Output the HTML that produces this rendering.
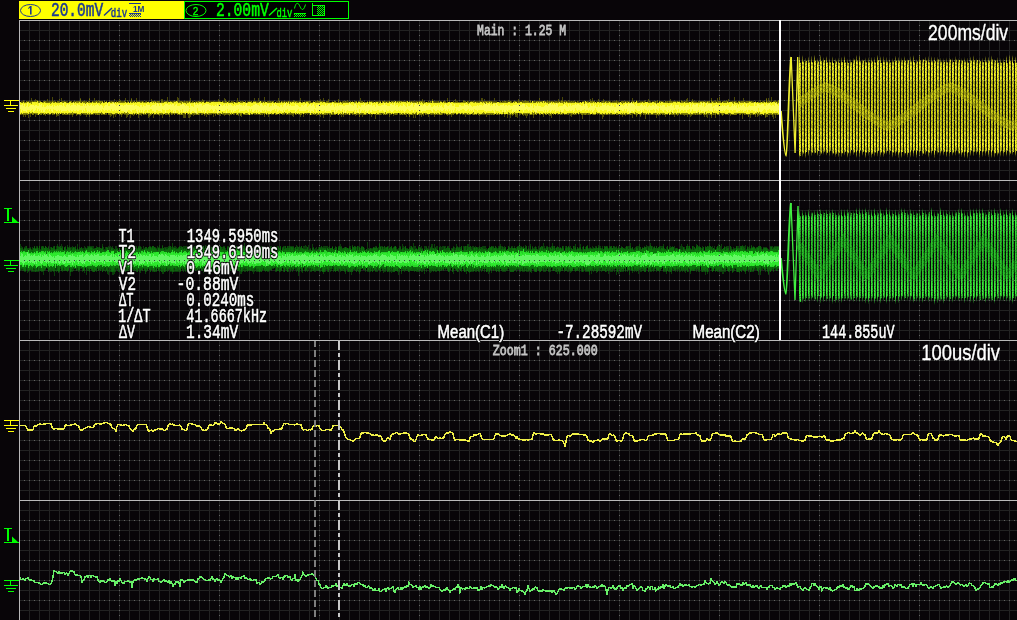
<!DOCTYPE html><html><head><meta charset="utf-8"><style>html,body{margin:0;padding:0;background:#080508;overflow:hidden;width:1017px;height:620px}</style></head><body><svg width="1017" height="620" viewBox="0 0 1017 620" style="display:block;font-family:'Liberation Sans',sans-serif"><rect width="1017" height="620" fill="#080508"/><path d="M29.5 21V339M29.5 341V620M39.5 21V339M39.5 341V620M49.5 21V339M49.5 341V620M59.5 21V339M59.5 341V620M69.5 21V339M69.5 341V620M79.5 21V339M79.5 341V620M89.5 21V339M89.5 341V620M99.5 21V339M99.5 341V620M109.5 21V339M109.5 341V620M119.5 21V339M119.5 341V620M129.5 21V339M129.5 341V620M139.5 21V339M139.5 341V620M149.5 21V339M149.5 341V620M159.5 21V339M159.5 341V620M169.5 21V339M169.5 341V620M179.5 21V339M179.5 341V620M189.5 21V339M189.5 341V620M199.5 21V339M199.5 341V620M209.5 21V339M209.5 341V620M219.5 21V339M219.5 341V620M229.5 21V339M229.5 341V620M239.5 21V339M239.5 341V620M249.5 21V339M249.5 341V620M259.5 21V339M259.5 341V620M269.5 21V339M269.5 341V620M279.5 21V339M279.5 341V620M289.5 21V339M289.5 341V620M299.5 21V339M299.5 341V620M309.5 21V339M309.5 341V620M319.5 21V339M319.5 341V620M329.5 21V339M329.5 341V620M339.5 21V339M339.5 341V620M349.5 21V339M349.5 341V620M359.5 21V339M359.5 341V620M369.5 21V339M369.5 341V620M379.5 21V339M379.5 341V620M389.5 21V339M389.5 341V620M399.5 21V339M399.5 341V620M409.5 21V339M409.5 341V620M419.5 21V339M419.5 341V620M429.5 21V339M429.5 341V620M439.5 21V339M439.5 341V620M449.5 21V339M449.5 341V620M459.5 21V339M459.5 341V620M469.5 21V339M469.5 341V620M479.5 21V339M479.5 341V620M489.5 21V339M489.5 341V620M499.5 21V339M499.5 341V620M509.5 21V339M509.5 341V620M519.5 21V339M519.5 341V620M529.5 21V339M529.5 341V620M539.5 21V339M539.5 341V620M549.5 21V339M549.5 341V620M559.5 21V339M559.5 341V620M569.5 21V339M569.5 341V620M579.5 21V339M579.5 341V620M589.5 21V339M589.5 341V620M599.5 21V339M599.5 341V620M609.5 21V339M609.5 341V620M619.5 21V339M619.5 341V620M629.5 21V339M629.5 341V620M639.5 21V339M639.5 341V620M649.5 21V339M649.5 341V620M659.5 21V339M659.5 341V620M669.5 21V339M669.5 341V620M679.5 21V339M679.5 341V620M689.5 21V339M689.5 341V620M699.5 21V339M699.5 341V620M709.5 21V339M709.5 341V620M719.5 21V339M719.5 341V620M729.5 21V339M729.5 341V620M739.5 21V339M739.5 341V620M749.5 21V339M749.5 341V620M759.5 21V339M759.5 341V620M769.5 21V339M769.5 341V620M779.5 21V339M779.5 341V620M789.5 21V339M789.5 341V620M799.5 21V339M799.5 341V620M809.5 21V339M809.5 341V620M819.5 21V339M819.5 341V620M829.5 21V339M829.5 341V620M839.5 21V339M839.5 341V620M849.5 21V339M849.5 341V620M859.5 21V339M859.5 341V620M869.5 21V339M869.5 341V620M879.5 21V339M879.5 341V620M889.5 21V339M889.5 341V620M899.5 21V339M899.5 341V620M909.5 21V339M909.5 341V620M919.5 21V339M919.5 341V620M929.5 21V339M929.5 341V620M939.5 21V339M939.5 341V620M949.5 21V339M949.5 341V620M959.5 21V339M959.5 341V620M969.5 21V339M969.5 341V620M979.5 21V339M979.5 341V620M989.5 21V339M989.5 341V620M999.5 21V339M999.5 341V620M1009.5 21V339M1009.5 341V620M20 30.5H1017M20 40.5H1017M20 50.5H1017M20 60.5H1017M20 70.5H1017M20 80.5H1017M20 90.5H1017M20 100.5H1017M20 110.5H1017M20 120.5H1017M20 130.5H1017M20 140.5H1017M20 150.5H1017M20 160.5H1017M20 170.5H1017M20 190.5H1017M20 200.5H1017M20 210.5H1017M20 220.5H1017M20 230.5H1017M20 240.5H1017M20 250.5H1017M20 260.5H1017M20 270.5H1017M20 280.5H1017M20 290.5H1017M20 300.5H1017M20 310.5H1017M20 320.5H1017M20 330.5H1017M20 350.5H1017M20 360.5H1017M20 370.5H1017M20 380.5H1017M20 390.5H1017M20 400.5H1017M20 410.5H1017M20 420.5H1017M20 430.5H1017M20 440.5H1017M20 450.5H1017M20 460.5H1017M20 470.5H1017M20 480.5H1017M20 490.5H1017M20 510.5H1017M20 520.5H1017M20 530.5H1017M20 540.5H1017M20 550.5H1017M20 560.5H1017M20 570.5H1017M20 580.5H1017M20 590.5H1017M20 600.5H1017M20 610.5H1017" stroke="#222222" stroke-width="1" fill="none"/><path d="M119 25h1v1h-1zM119 30h1v1h-1zM119 35h1v1h-1zM119 40h1v1h-1zM119 45h1v1h-1zM119 50h1v1h-1zM119 55h1v1h-1zM119 60h1v1h-1zM119 65h1v1h-1zM119 70h1v1h-1zM119 75h1v1h-1zM119 80h1v1h-1zM119 85h1v1h-1zM119 90h1v1h-1zM119 95h1v1h-1zM119 100h1v1h-1zM119 105h1v1h-1zM119 110h1v1h-1zM119 115h1v1h-1zM119 120h1v1h-1zM119 125h1v1h-1zM119 130h1v1h-1zM119 135h1v1h-1zM119 140h1v1h-1zM119 145h1v1h-1zM119 150h1v1h-1zM119 155h1v1h-1zM119 160h1v1h-1zM119 165h1v1h-1zM119 170h1v1h-1zM119 175h1v1h-1zM119 185h1v1h-1zM119 190h1v1h-1zM119 195h1v1h-1zM119 200h1v1h-1zM119 205h1v1h-1zM119 210h1v1h-1zM119 215h1v1h-1zM119 220h1v1h-1zM119 225h1v1h-1zM119 230h1v1h-1zM119 235h1v1h-1zM119 240h1v1h-1zM119 245h1v1h-1zM119 250h1v1h-1zM119 255h1v1h-1zM119 260h1v1h-1zM119 265h1v1h-1zM119 270h1v1h-1zM119 275h1v1h-1zM119 280h1v1h-1zM119 285h1v1h-1zM119 290h1v1h-1zM119 295h1v1h-1zM119 300h1v1h-1zM119 305h1v1h-1zM119 310h1v1h-1zM119 315h1v1h-1zM119 320h1v1h-1zM119 325h1v1h-1zM119 330h1v1h-1zM119 335h1v1h-1zM119 345h1v1h-1zM119 350h1v1h-1zM119 355h1v1h-1zM119 360h1v1h-1zM119 365h1v1h-1zM119 370h1v1h-1zM119 375h1v1h-1zM119 380h1v1h-1zM119 385h1v1h-1zM119 390h1v1h-1zM119 395h1v1h-1zM119 400h1v1h-1zM119 405h1v1h-1zM119 410h1v1h-1zM119 415h1v1h-1zM119 420h1v1h-1zM119 425h1v1h-1zM119 430h1v1h-1zM119 435h1v1h-1zM119 440h1v1h-1zM119 445h1v1h-1zM119 450h1v1h-1zM119 455h1v1h-1zM119 460h1v1h-1zM119 465h1v1h-1zM119 470h1v1h-1zM119 475h1v1h-1zM119 480h1v1h-1zM119 485h1v1h-1zM119 490h1v1h-1zM119 495h1v1h-1zM119 505h1v1h-1zM119 510h1v1h-1zM119 515h1v1h-1zM119 520h1v1h-1zM119 525h1v1h-1zM119 530h1v1h-1zM119 535h1v1h-1zM119 540h1v1h-1zM119 545h1v1h-1zM119 550h1v1h-1zM119 555h1v1h-1zM119 560h1v1h-1zM119 565h1v1h-1zM119 570h1v1h-1zM119 575h1v1h-1zM119 580h1v1h-1zM119 585h1v1h-1zM119 590h1v1h-1zM119 595h1v1h-1zM119 600h1v1h-1zM119 605h1v1h-1zM119 610h1v1h-1zM119 615h1v1h-1zM219 25h1v1h-1zM219 30h1v1h-1zM219 35h1v1h-1zM219 40h1v1h-1zM219 45h1v1h-1zM219 50h1v1h-1zM219 55h1v1h-1zM219 60h1v1h-1zM219 65h1v1h-1zM219 70h1v1h-1zM219 75h1v1h-1zM219 80h1v1h-1zM219 85h1v1h-1zM219 90h1v1h-1zM219 95h1v1h-1zM219 100h1v1h-1zM219 105h1v1h-1zM219 110h1v1h-1zM219 115h1v1h-1zM219 120h1v1h-1zM219 125h1v1h-1zM219 130h1v1h-1zM219 135h1v1h-1zM219 140h1v1h-1zM219 145h1v1h-1zM219 150h1v1h-1zM219 155h1v1h-1zM219 160h1v1h-1zM219 165h1v1h-1zM219 170h1v1h-1zM219 175h1v1h-1zM219 185h1v1h-1zM219 190h1v1h-1zM219 195h1v1h-1zM219 200h1v1h-1zM219 205h1v1h-1zM219 210h1v1h-1zM219 215h1v1h-1zM219 220h1v1h-1zM219 225h1v1h-1zM219 230h1v1h-1zM219 235h1v1h-1zM219 240h1v1h-1zM219 245h1v1h-1zM219 250h1v1h-1zM219 255h1v1h-1zM219 260h1v1h-1zM219 265h1v1h-1zM219 270h1v1h-1zM219 275h1v1h-1zM219 280h1v1h-1zM219 285h1v1h-1zM219 290h1v1h-1zM219 295h1v1h-1zM219 300h1v1h-1zM219 305h1v1h-1zM219 310h1v1h-1zM219 315h1v1h-1zM219 320h1v1h-1zM219 325h1v1h-1zM219 330h1v1h-1zM219 335h1v1h-1zM219 345h1v1h-1zM219 350h1v1h-1zM219 355h1v1h-1zM219 360h1v1h-1zM219 365h1v1h-1zM219 370h1v1h-1zM219 375h1v1h-1zM219 380h1v1h-1zM219 385h1v1h-1zM219 390h1v1h-1zM219 395h1v1h-1zM219 400h1v1h-1zM219 405h1v1h-1zM219 410h1v1h-1zM219 415h1v1h-1zM219 420h1v1h-1zM219 425h1v1h-1zM219 430h1v1h-1zM219 435h1v1h-1zM219 440h1v1h-1zM219 445h1v1h-1zM219 450h1v1h-1zM219 455h1v1h-1zM219 460h1v1h-1zM219 465h1v1h-1zM219 470h1v1h-1zM219 475h1v1h-1zM219 480h1v1h-1zM219 485h1v1h-1zM219 490h1v1h-1zM219 495h1v1h-1zM219 505h1v1h-1zM219 510h1v1h-1zM219 515h1v1h-1zM219 520h1v1h-1zM219 525h1v1h-1zM219 530h1v1h-1zM219 535h1v1h-1zM219 540h1v1h-1zM219 545h1v1h-1zM219 550h1v1h-1zM219 555h1v1h-1zM219 560h1v1h-1zM219 565h1v1h-1zM219 570h1v1h-1zM219 575h1v1h-1zM219 580h1v1h-1zM219 585h1v1h-1zM219 590h1v1h-1zM219 595h1v1h-1zM219 600h1v1h-1zM219 605h1v1h-1zM219 610h1v1h-1zM219 615h1v1h-1zM319 25h1v1h-1zM319 30h1v1h-1zM319 35h1v1h-1zM319 40h1v1h-1zM319 45h1v1h-1zM319 50h1v1h-1zM319 55h1v1h-1zM319 60h1v1h-1zM319 65h1v1h-1zM319 70h1v1h-1zM319 75h1v1h-1zM319 80h1v1h-1zM319 85h1v1h-1zM319 90h1v1h-1zM319 95h1v1h-1zM319 100h1v1h-1zM319 105h1v1h-1zM319 110h1v1h-1zM319 115h1v1h-1zM319 120h1v1h-1zM319 125h1v1h-1zM319 130h1v1h-1zM319 135h1v1h-1zM319 140h1v1h-1zM319 145h1v1h-1zM319 150h1v1h-1zM319 155h1v1h-1zM319 160h1v1h-1zM319 165h1v1h-1zM319 170h1v1h-1zM319 175h1v1h-1zM319 185h1v1h-1zM319 190h1v1h-1zM319 195h1v1h-1zM319 200h1v1h-1zM319 205h1v1h-1zM319 210h1v1h-1zM319 215h1v1h-1zM319 220h1v1h-1zM319 225h1v1h-1zM319 230h1v1h-1zM319 235h1v1h-1zM319 240h1v1h-1zM319 245h1v1h-1zM319 250h1v1h-1zM319 255h1v1h-1zM319 260h1v1h-1zM319 265h1v1h-1zM319 270h1v1h-1zM319 275h1v1h-1zM319 280h1v1h-1zM319 285h1v1h-1zM319 290h1v1h-1zM319 295h1v1h-1zM319 300h1v1h-1zM319 305h1v1h-1zM319 310h1v1h-1zM319 315h1v1h-1zM319 320h1v1h-1zM319 325h1v1h-1zM319 330h1v1h-1zM319 335h1v1h-1zM319 345h1v1h-1zM319 350h1v1h-1zM319 355h1v1h-1zM319 360h1v1h-1zM319 365h1v1h-1zM319 370h1v1h-1zM319 375h1v1h-1zM319 380h1v1h-1zM319 385h1v1h-1zM319 390h1v1h-1zM319 395h1v1h-1zM319 400h1v1h-1zM319 405h1v1h-1zM319 410h1v1h-1zM319 415h1v1h-1zM319 420h1v1h-1zM319 425h1v1h-1zM319 430h1v1h-1zM319 435h1v1h-1zM319 440h1v1h-1zM319 445h1v1h-1zM319 450h1v1h-1zM319 455h1v1h-1zM319 460h1v1h-1zM319 465h1v1h-1zM319 470h1v1h-1zM319 475h1v1h-1zM319 480h1v1h-1zM319 485h1v1h-1zM319 490h1v1h-1zM319 495h1v1h-1zM319 505h1v1h-1zM319 510h1v1h-1zM319 515h1v1h-1zM319 520h1v1h-1zM319 525h1v1h-1zM319 530h1v1h-1zM319 535h1v1h-1zM319 540h1v1h-1zM319 545h1v1h-1zM319 550h1v1h-1zM319 555h1v1h-1zM319 560h1v1h-1zM319 565h1v1h-1zM319 570h1v1h-1zM319 575h1v1h-1zM319 580h1v1h-1zM319 585h1v1h-1zM319 590h1v1h-1zM319 595h1v1h-1zM319 600h1v1h-1zM319 605h1v1h-1zM319 610h1v1h-1zM319 615h1v1h-1zM419 25h1v1h-1zM419 30h1v1h-1zM419 35h1v1h-1zM419 40h1v1h-1zM419 45h1v1h-1zM419 50h1v1h-1zM419 55h1v1h-1zM419 60h1v1h-1zM419 65h1v1h-1zM419 70h1v1h-1zM419 75h1v1h-1zM419 80h1v1h-1zM419 85h1v1h-1zM419 90h1v1h-1zM419 95h1v1h-1zM419 100h1v1h-1zM419 105h1v1h-1zM419 110h1v1h-1zM419 115h1v1h-1zM419 120h1v1h-1zM419 125h1v1h-1zM419 130h1v1h-1zM419 135h1v1h-1zM419 140h1v1h-1zM419 145h1v1h-1zM419 150h1v1h-1zM419 155h1v1h-1zM419 160h1v1h-1zM419 165h1v1h-1zM419 170h1v1h-1zM419 175h1v1h-1zM419 185h1v1h-1zM419 190h1v1h-1zM419 195h1v1h-1zM419 200h1v1h-1zM419 205h1v1h-1zM419 210h1v1h-1zM419 215h1v1h-1zM419 220h1v1h-1zM419 225h1v1h-1zM419 230h1v1h-1zM419 235h1v1h-1zM419 240h1v1h-1zM419 245h1v1h-1zM419 250h1v1h-1zM419 255h1v1h-1zM419 260h1v1h-1zM419 265h1v1h-1zM419 270h1v1h-1zM419 275h1v1h-1zM419 280h1v1h-1zM419 285h1v1h-1zM419 290h1v1h-1zM419 295h1v1h-1zM419 300h1v1h-1zM419 305h1v1h-1zM419 310h1v1h-1zM419 315h1v1h-1zM419 320h1v1h-1zM419 325h1v1h-1zM419 330h1v1h-1zM419 335h1v1h-1zM419 345h1v1h-1zM419 350h1v1h-1zM419 355h1v1h-1zM419 360h1v1h-1zM419 365h1v1h-1zM419 370h1v1h-1zM419 375h1v1h-1zM419 380h1v1h-1zM419 385h1v1h-1zM419 390h1v1h-1zM419 395h1v1h-1zM419 400h1v1h-1zM419 405h1v1h-1zM419 410h1v1h-1zM419 415h1v1h-1zM419 420h1v1h-1zM419 425h1v1h-1zM419 430h1v1h-1zM419 435h1v1h-1zM419 440h1v1h-1zM419 445h1v1h-1zM419 450h1v1h-1zM419 455h1v1h-1zM419 460h1v1h-1zM419 465h1v1h-1zM419 470h1v1h-1zM419 475h1v1h-1zM419 480h1v1h-1zM419 485h1v1h-1zM419 490h1v1h-1zM419 495h1v1h-1zM419 505h1v1h-1zM419 510h1v1h-1zM419 515h1v1h-1zM419 520h1v1h-1zM419 525h1v1h-1zM419 530h1v1h-1zM419 535h1v1h-1zM419 540h1v1h-1zM419 545h1v1h-1zM419 550h1v1h-1zM419 555h1v1h-1zM419 560h1v1h-1zM419 565h1v1h-1zM419 570h1v1h-1zM419 575h1v1h-1zM419 580h1v1h-1zM419 585h1v1h-1zM419 590h1v1h-1zM419 595h1v1h-1zM419 600h1v1h-1zM419 605h1v1h-1zM419 610h1v1h-1zM419 615h1v1h-1zM519 25h1v1h-1zM519 30h1v1h-1zM519 35h1v1h-1zM519 40h1v1h-1zM519 45h1v1h-1zM519 50h1v1h-1zM519 55h1v1h-1zM519 60h1v1h-1zM519 65h1v1h-1zM519 70h1v1h-1zM519 75h1v1h-1zM519 80h1v1h-1zM519 85h1v1h-1zM519 90h1v1h-1zM519 95h1v1h-1zM519 100h1v1h-1zM519 105h1v1h-1zM519 110h1v1h-1zM519 115h1v1h-1zM519 120h1v1h-1zM519 125h1v1h-1zM519 130h1v1h-1zM519 135h1v1h-1zM519 140h1v1h-1zM519 145h1v1h-1zM519 150h1v1h-1zM519 155h1v1h-1zM519 160h1v1h-1zM519 165h1v1h-1zM519 170h1v1h-1zM519 175h1v1h-1zM519 185h1v1h-1zM519 190h1v1h-1zM519 195h1v1h-1zM519 200h1v1h-1zM519 205h1v1h-1zM519 210h1v1h-1zM519 215h1v1h-1zM519 220h1v1h-1zM519 225h1v1h-1zM519 230h1v1h-1zM519 235h1v1h-1zM519 240h1v1h-1zM519 245h1v1h-1zM519 250h1v1h-1zM519 255h1v1h-1zM519 260h1v1h-1zM519 265h1v1h-1zM519 270h1v1h-1zM519 275h1v1h-1zM519 280h1v1h-1zM519 285h1v1h-1zM519 290h1v1h-1zM519 295h1v1h-1zM519 300h1v1h-1zM519 305h1v1h-1zM519 310h1v1h-1zM519 315h1v1h-1zM519 320h1v1h-1zM519 325h1v1h-1zM519 330h1v1h-1zM519 335h1v1h-1zM519 345h1v1h-1zM519 350h1v1h-1zM519 355h1v1h-1zM519 360h1v1h-1zM519 365h1v1h-1zM519 370h1v1h-1zM519 375h1v1h-1zM519 380h1v1h-1zM519 385h1v1h-1zM519 390h1v1h-1zM519 395h1v1h-1zM519 400h1v1h-1zM519 405h1v1h-1zM519 410h1v1h-1zM519 415h1v1h-1zM519 420h1v1h-1zM519 425h1v1h-1zM519 430h1v1h-1zM519 435h1v1h-1zM519 440h1v1h-1zM519 445h1v1h-1zM519 450h1v1h-1zM519 455h1v1h-1zM519 460h1v1h-1zM519 465h1v1h-1zM519 470h1v1h-1zM519 475h1v1h-1zM519 480h1v1h-1zM519 485h1v1h-1zM519 490h1v1h-1zM519 495h1v1h-1zM519 505h1v1h-1zM519 510h1v1h-1zM519 515h1v1h-1zM519 520h1v1h-1zM519 525h1v1h-1zM519 530h1v1h-1zM519 535h1v1h-1zM519 540h1v1h-1zM519 545h1v1h-1zM519 550h1v1h-1zM519 555h1v1h-1zM519 560h1v1h-1zM519 565h1v1h-1zM519 570h1v1h-1zM519 575h1v1h-1zM519 580h1v1h-1zM519 585h1v1h-1zM519 590h1v1h-1zM519 595h1v1h-1zM519 600h1v1h-1zM519 605h1v1h-1zM519 610h1v1h-1zM519 615h1v1h-1zM619 25h1v1h-1zM619 30h1v1h-1zM619 35h1v1h-1zM619 40h1v1h-1zM619 45h1v1h-1zM619 50h1v1h-1zM619 55h1v1h-1zM619 60h1v1h-1zM619 65h1v1h-1zM619 70h1v1h-1zM619 75h1v1h-1zM619 80h1v1h-1zM619 85h1v1h-1zM619 90h1v1h-1zM619 95h1v1h-1zM619 100h1v1h-1zM619 105h1v1h-1zM619 110h1v1h-1zM619 115h1v1h-1zM619 120h1v1h-1zM619 125h1v1h-1zM619 130h1v1h-1zM619 135h1v1h-1zM619 140h1v1h-1zM619 145h1v1h-1zM619 150h1v1h-1zM619 155h1v1h-1zM619 160h1v1h-1zM619 165h1v1h-1zM619 170h1v1h-1zM619 175h1v1h-1zM619 185h1v1h-1zM619 190h1v1h-1zM619 195h1v1h-1zM619 200h1v1h-1zM619 205h1v1h-1zM619 210h1v1h-1zM619 215h1v1h-1zM619 220h1v1h-1zM619 225h1v1h-1zM619 230h1v1h-1zM619 235h1v1h-1zM619 240h1v1h-1zM619 245h1v1h-1zM619 250h1v1h-1zM619 255h1v1h-1zM619 260h1v1h-1zM619 265h1v1h-1zM619 270h1v1h-1zM619 275h1v1h-1zM619 280h1v1h-1zM619 285h1v1h-1zM619 290h1v1h-1zM619 295h1v1h-1zM619 300h1v1h-1zM619 305h1v1h-1zM619 310h1v1h-1zM619 315h1v1h-1zM619 320h1v1h-1zM619 325h1v1h-1zM619 330h1v1h-1zM619 335h1v1h-1zM619 345h1v1h-1zM619 350h1v1h-1zM619 355h1v1h-1zM619 360h1v1h-1zM619 365h1v1h-1zM619 370h1v1h-1zM619 375h1v1h-1zM619 380h1v1h-1zM619 385h1v1h-1zM619 390h1v1h-1zM619 395h1v1h-1zM619 400h1v1h-1zM619 405h1v1h-1zM619 410h1v1h-1zM619 415h1v1h-1zM619 420h1v1h-1zM619 425h1v1h-1zM619 430h1v1h-1zM619 435h1v1h-1zM619 440h1v1h-1zM619 445h1v1h-1zM619 450h1v1h-1zM619 455h1v1h-1zM619 460h1v1h-1zM619 465h1v1h-1zM619 470h1v1h-1zM619 475h1v1h-1zM619 480h1v1h-1zM619 485h1v1h-1zM619 490h1v1h-1zM619 495h1v1h-1zM619 505h1v1h-1zM619 510h1v1h-1zM619 515h1v1h-1zM619 520h1v1h-1zM619 525h1v1h-1zM619 530h1v1h-1zM619 535h1v1h-1zM619 540h1v1h-1zM619 545h1v1h-1zM619 550h1v1h-1zM619 555h1v1h-1zM619 560h1v1h-1zM619 565h1v1h-1zM619 570h1v1h-1zM619 575h1v1h-1zM619 580h1v1h-1zM619 585h1v1h-1zM619 590h1v1h-1zM619 595h1v1h-1zM619 600h1v1h-1zM619 605h1v1h-1zM619 610h1v1h-1zM619 615h1v1h-1zM719 25h1v1h-1zM719 30h1v1h-1zM719 35h1v1h-1zM719 40h1v1h-1zM719 45h1v1h-1zM719 50h1v1h-1zM719 55h1v1h-1zM719 60h1v1h-1zM719 65h1v1h-1zM719 70h1v1h-1zM719 75h1v1h-1zM719 80h1v1h-1zM719 85h1v1h-1zM719 90h1v1h-1zM719 95h1v1h-1zM719 100h1v1h-1zM719 105h1v1h-1zM719 110h1v1h-1zM719 115h1v1h-1zM719 120h1v1h-1zM719 125h1v1h-1zM719 130h1v1h-1zM719 135h1v1h-1zM719 140h1v1h-1zM719 145h1v1h-1zM719 150h1v1h-1zM719 155h1v1h-1zM719 160h1v1h-1zM719 165h1v1h-1zM719 170h1v1h-1zM719 175h1v1h-1zM719 185h1v1h-1zM719 190h1v1h-1zM719 195h1v1h-1zM719 200h1v1h-1zM719 205h1v1h-1zM719 210h1v1h-1zM719 215h1v1h-1zM719 220h1v1h-1zM719 225h1v1h-1zM719 230h1v1h-1zM719 235h1v1h-1zM719 240h1v1h-1zM719 245h1v1h-1zM719 250h1v1h-1zM719 255h1v1h-1zM719 260h1v1h-1zM719 265h1v1h-1zM719 270h1v1h-1zM719 275h1v1h-1zM719 280h1v1h-1zM719 285h1v1h-1zM719 290h1v1h-1zM719 295h1v1h-1zM719 300h1v1h-1zM719 305h1v1h-1zM719 310h1v1h-1zM719 315h1v1h-1zM719 320h1v1h-1zM719 325h1v1h-1zM719 330h1v1h-1zM719 335h1v1h-1zM719 345h1v1h-1zM719 350h1v1h-1zM719 355h1v1h-1zM719 360h1v1h-1zM719 365h1v1h-1zM719 370h1v1h-1zM719 375h1v1h-1zM719 380h1v1h-1zM719 385h1v1h-1zM719 390h1v1h-1zM719 395h1v1h-1zM719 400h1v1h-1zM719 405h1v1h-1zM719 410h1v1h-1zM719 415h1v1h-1zM719 420h1v1h-1zM719 425h1v1h-1zM719 430h1v1h-1zM719 435h1v1h-1zM719 440h1v1h-1zM719 445h1v1h-1zM719 450h1v1h-1zM719 455h1v1h-1zM719 460h1v1h-1zM719 465h1v1h-1zM719 470h1v1h-1zM719 475h1v1h-1zM719 480h1v1h-1zM719 485h1v1h-1zM719 490h1v1h-1zM719 495h1v1h-1zM719 505h1v1h-1zM719 510h1v1h-1zM719 515h1v1h-1zM719 520h1v1h-1zM719 525h1v1h-1zM719 530h1v1h-1zM719 535h1v1h-1zM719 540h1v1h-1zM719 545h1v1h-1zM719 550h1v1h-1zM719 555h1v1h-1zM719 560h1v1h-1zM719 565h1v1h-1zM719 570h1v1h-1zM719 575h1v1h-1zM719 580h1v1h-1zM719 585h1v1h-1zM719 590h1v1h-1zM719 595h1v1h-1zM719 600h1v1h-1zM719 605h1v1h-1zM719 610h1v1h-1zM719 615h1v1h-1zM819 25h1v1h-1zM819 30h1v1h-1zM819 35h1v1h-1zM819 40h1v1h-1zM819 45h1v1h-1zM819 50h1v1h-1zM819 55h1v1h-1zM819 60h1v1h-1zM819 65h1v1h-1zM819 70h1v1h-1zM819 75h1v1h-1zM819 80h1v1h-1zM819 85h1v1h-1zM819 90h1v1h-1zM819 95h1v1h-1zM819 100h1v1h-1zM819 105h1v1h-1zM819 110h1v1h-1zM819 115h1v1h-1zM819 120h1v1h-1zM819 125h1v1h-1zM819 130h1v1h-1zM819 135h1v1h-1zM819 140h1v1h-1zM819 145h1v1h-1zM819 150h1v1h-1zM819 155h1v1h-1zM819 160h1v1h-1zM819 165h1v1h-1zM819 170h1v1h-1zM819 175h1v1h-1zM819 185h1v1h-1zM819 190h1v1h-1zM819 195h1v1h-1zM819 200h1v1h-1zM819 205h1v1h-1zM819 210h1v1h-1zM819 215h1v1h-1zM819 220h1v1h-1zM819 225h1v1h-1zM819 230h1v1h-1zM819 235h1v1h-1zM819 240h1v1h-1zM819 245h1v1h-1zM819 250h1v1h-1zM819 255h1v1h-1zM819 260h1v1h-1zM819 265h1v1h-1zM819 270h1v1h-1zM819 275h1v1h-1zM819 280h1v1h-1zM819 285h1v1h-1zM819 290h1v1h-1zM819 295h1v1h-1zM819 300h1v1h-1zM819 305h1v1h-1zM819 310h1v1h-1zM819 315h1v1h-1zM819 320h1v1h-1zM819 325h1v1h-1zM819 330h1v1h-1zM819 335h1v1h-1zM819 345h1v1h-1zM819 350h1v1h-1zM819 355h1v1h-1zM819 360h1v1h-1zM819 365h1v1h-1zM819 370h1v1h-1zM819 375h1v1h-1zM819 380h1v1h-1zM819 385h1v1h-1zM819 390h1v1h-1zM819 395h1v1h-1zM819 400h1v1h-1zM819 405h1v1h-1zM819 410h1v1h-1zM819 415h1v1h-1zM819 420h1v1h-1zM819 425h1v1h-1zM819 430h1v1h-1zM819 435h1v1h-1zM819 440h1v1h-1zM819 445h1v1h-1zM819 450h1v1h-1zM819 455h1v1h-1zM819 460h1v1h-1zM819 465h1v1h-1zM819 470h1v1h-1zM819 475h1v1h-1zM819 480h1v1h-1zM819 485h1v1h-1zM819 490h1v1h-1zM819 495h1v1h-1zM819 505h1v1h-1zM819 510h1v1h-1zM819 515h1v1h-1zM819 520h1v1h-1zM819 525h1v1h-1zM819 530h1v1h-1zM819 535h1v1h-1zM819 540h1v1h-1zM819 545h1v1h-1zM819 550h1v1h-1zM819 555h1v1h-1zM819 560h1v1h-1zM819 565h1v1h-1zM819 570h1v1h-1zM819 575h1v1h-1zM819 580h1v1h-1zM819 585h1v1h-1zM819 590h1v1h-1zM819 595h1v1h-1zM819 600h1v1h-1zM819 605h1v1h-1zM819 610h1v1h-1zM819 615h1v1h-1zM919 25h1v1h-1zM919 30h1v1h-1zM919 35h1v1h-1zM919 40h1v1h-1zM919 45h1v1h-1zM919 50h1v1h-1zM919 55h1v1h-1zM919 60h1v1h-1zM919 65h1v1h-1zM919 70h1v1h-1zM919 75h1v1h-1zM919 80h1v1h-1zM919 85h1v1h-1zM919 90h1v1h-1zM919 95h1v1h-1zM919 100h1v1h-1zM919 105h1v1h-1zM919 110h1v1h-1zM919 115h1v1h-1zM919 120h1v1h-1zM919 125h1v1h-1zM919 130h1v1h-1zM919 135h1v1h-1zM919 140h1v1h-1zM919 145h1v1h-1zM919 150h1v1h-1zM919 155h1v1h-1zM919 160h1v1h-1zM919 165h1v1h-1zM919 170h1v1h-1zM919 175h1v1h-1zM919 185h1v1h-1zM919 190h1v1h-1zM919 195h1v1h-1zM919 200h1v1h-1zM919 205h1v1h-1zM919 210h1v1h-1zM919 215h1v1h-1zM919 220h1v1h-1zM919 225h1v1h-1zM919 230h1v1h-1zM919 235h1v1h-1zM919 240h1v1h-1zM919 245h1v1h-1zM919 250h1v1h-1zM919 255h1v1h-1zM919 260h1v1h-1zM919 265h1v1h-1zM919 270h1v1h-1zM919 275h1v1h-1zM919 280h1v1h-1zM919 285h1v1h-1zM919 290h1v1h-1zM919 295h1v1h-1zM919 300h1v1h-1zM919 305h1v1h-1zM919 310h1v1h-1zM919 315h1v1h-1zM919 320h1v1h-1zM919 325h1v1h-1zM919 330h1v1h-1zM919 335h1v1h-1zM919 345h1v1h-1zM919 350h1v1h-1zM919 355h1v1h-1zM919 360h1v1h-1zM919 365h1v1h-1zM919 370h1v1h-1zM919 375h1v1h-1zM919 380h1v1h-1zM919 385h1v1h-1zM919 390h1v1h-1zM919 395h1v1h-1zM919 400h1v1h-1zM919 405h1v1h-1zM919 410h1v1h-1zM919 415h1v1h-1zM919 420h1v1h-1zM919 425h1v1h-1zM919 430h1v1h-1zM919 435h1v1h-1zM919 440h1v1h-1zM919 445h1v1h-1zM919 450h1v1h-1zM919 455h1v1h-1zM919 460h1v1h-1zM919 465h1v1h-1zM919 470h1v1h-1zM919 475h1v1h-1zM919 480h1v1h-1zM919 485h1v1h-1zM919 490h1v1h-1zM919 495h1v1h-1zM919 505h1v1h-1zM919 510h1v1h-1zM919 515h1v1h-1zM919 520h1v1h-1zM919 525h1v1h-1zM919 530h1v1h-1zM919 535h1v1h-1zM919 540h1v1h-1zM919 545h1v1h-1zM919 550h1v1h-1zM919 555h1v1h-1zM919 560h1v1h-1zM919 565h1v1h-1zM919 570h1v1h-1zM919 575h1v1h-1zM919 580h1v1h-1zM919 585h1v1h-1zM919 590h1v1h-1zM919 595h1v1h-1zM919 600h1v1h-1zM919 605h1v1h-1zM919 610h1v1h-1zM919 615h1v1h-1zM24 40h1v1h-1zM29 40h1v1h-1zM34 40h1v1h-1zM39 40h1v1h-1zM44 40h1v1h-1zM49 40h1v1h-1zM54 40h1v1h-1zM59 40h1v1h-1zM64 40h1v1h-1zM69 40h1v1h-1zM74 40h1v1h-1zM79 40h1v1h-1zM84 40h1v1h-1zM89 40h1v1h-1zM94 40h1v1h-1zM99 40h1v1h-1zM104 40h1v1h-1zM109 40h1v1h-1zM114 40h1v1h-1zM119 40h1v1h-1zM124 40h1v1h-1zM129 40h1v1h-1zM134 40h1v1h-1zM139 40h1v1h-1zM144 40h1v1h-1zM149 40h1v1h-1zM154 40h1v1h-1zM159 40h1v1h-1zM164 40h1v1h-1zM169 40h1v1h-1zM174 40h1v1h-1zM179 40h1v1h-1zM184 40h1v1h-1zM189 40h1v1h-1zM194 40h1v1h-1zM199 40h1v1h-1zM204 40h1v1h-1zM209 40h1v1h-1zM214 40h1v1h-1zM219 40h1v1h-1zM224 40h1v1h-1zM229 40h1v1h-1zM234 40h1v1h-1zM239 40h1v1h-1zM244 40h1v1h-1zM249 40h1v1h-1zM254 40h1v1h-1zM259 40h1v1h-1zM264 40h1v1h-1zM269 40h1v1h-1zM274 40h1v1h-1zM279 40h1v1h-1zM284 40h1v1h-1zM289 40h1v1h-1zM294 40h1v1h-1zM299 40h1v1h-1zM304 40h1v1h-1zM309 40h1v1h-1zM314 40h1v1h-1zM319 40h1v1h-1zM324 40h1v1h-1zM329 40h1v1h-1zM334 40h1v1h-1zM339 40h1v1h-1zM344 40h1v1h-1zM349 40h1v1h-1zM354 40h1v1h-1zM359 40h1v1h-1zM364 40h1v1h-1zM369 40h1v1h-1zM374 40h1v1h-1zM379 40h1v1h-1zM384 40h1v1h-1zM389 40h1v1h-1zM394 40h1v1h-1zM399 40h1v1h-1zM404 40h1v1h-1zM409 40h1v1h-1zM414 40h1v1h-1zM419 40h1v1h-1zM424 40h1v1h-1zM429 40h1v1h-1zM434 40h1v1h-1zM439 40h1v1h-1zM444 40h1v1h-1zM449 40h1v1h-1zM454 40h1v1h-1zM459 40h1v1h-1zM464 40h1v1h-1zM469 40h1v1h-1zM474 40h1v1h-1zM479 40h1v1h-1zM484 40h1v1h-1zM489 40h1v1h-1zM494 40h1v1h-1zM499 40h1v1h-1zM504 40h1v1h-1zM509 40h1v1h-1zM514 40h1v1h-1zM519 40h1v1h-1zM524 40h1v1h-1zM529 40h1v1h-1zM534 40h1v1h-1zM539 40h1v1h-1zM544 40h1v1h-1zM549 40h1v1h-1zM554 40h1v1h-1zM559 40h1v1h-1zM564 40h1v1h-1zM569 40h1v1h-1zM574 40h1v1h-1zM579 40h1v1h-1zM584 40h1v1h-1zM589 40h1v1h-1zM594 40h1v1h-1zM599 40h1v1h-1zM604 40h1v1h-1zM609 40h1v1h-1zM614 40h1v1h-1zM619 40h1v1h-1zM624 40h1v1h-1zM629 40h1v1h-1zM634 40h1v1h-1zM639 40h1v1h-1zM644 40h1v1h-1zM649 40h1v1h-1zM654 40h1v1h-1zM659 40h1v1h-1zM664 40h1v1h-1zM669 40h1v1h-1zM674 40h1v1h-1zM679 40h1v1h-1zM684 40h1v1h-1zM689 40h1v1h-1zM694 40h1v1h-1zM699 40h1v1h-1zM704 40h1v1h-1zM709 40h1v1h-1zM714 40h1v1h-1zM719 40h1v1h-1zM724 40h1v1h-1zM729 40h1v1h-1zM734 40h1v1h-1zM739 40h1v1h-1zM744 40h1v1h-1zM749 40h1v1h-1zM754 40h1v1h-1zM759 40h1v1h-1zM764 40h1v1h-1zM769 40h1v1h-1zM774 40h1v1h-1zM779 40h1v1h-1zM784 40h1v1h-1zM789 40h1v1h-1zM794 40h1v1h-1zM799 40h1v1h-1zM804 40h1v1h-1zM809 40h1v1h-1zM814 40h1v1h-1zM819 40h1v1h-1zM824 40h1v1h-1zM829 40h1v1h-1zM834 40h1v1h-1zM839 40h1v1h-1zM844 40h1v1h-1zM849 40h1v1h-1zM854 40h1v1h-1zM859 40h1v1h-1zM864 40h1v1h-1zM869 40h1v1h-1zM874 40h1v1h-1zM879 40h1v1h-1zM884 40h1v1h-1zM889 40h1v1h-1zM894 40h1v1h-1zM899 40h1v1h-1zM904 40h1v1h-1zM909 40h1v1h-1zM914 40h1v1h-1zM919 40h1v1h-1zM924 40h1v1h-1zM929 40h1v1h-1zM934 40h1v1h-1zM939 40h1v1h-1zM944 40h1v1h-1zM949 40h1v1h-1zM954 40h1v1h-1zM959 40h1v1h-1zM964 40h1v1h-1zM969 40h1v1h-1zM974 40h1v1h-1zM979 40h1v1h-1zM984 40h1v1h-1zM989 40h1v1h-1zM994 40h1v1h-1zM999 40h1v1h-1zM1004 40h1v1h-1zM1009 40h1v1h-1zM1014 40h1v1h-1zM24 60h1v1h-1zM29 60h1v1h-1zM34 60h1v1h-1zM39 60h1v1h-1zM44 60h1v1h-1zM49 60h1v1h-1zM54 60h1v1h-1zM59 60h1v1h-1zM64 60h1v1h-1zM69 60h1v1h-1zM74 60h1v1h-1zM79 60h1v1h-1zM84 60h1v1h-1zM89 60h1v1h-1zM94 60h1v1h-1zM99 60h1v1h-1zM104 60h1v1h-1zM109 60h1v1h-1zM114 60h1v1h-1zM119 60h1v1h-1zM124 60h1v1h-1zM129 60h1v1h-1zM134 60h1v1h-1zM139 60h1v1h-1zM144 60h1v1h-1zM149 60h1v1h-1zM154 60h1v1h-1zM159 60h1v1h-1zM164 60h1v1h-1zM169 60h1v1h-1zM174 60h1v1h-1zM179 60h1v1h-1zM184 60h1v1h-1zM189 60h1v1h-1zM194 60h1v1h-1zM199 60h1v1h-1zM204 60h1v1h-1zM209 60h1v1h-1zM214 60h1v1h-1zM219 60h1v1h-1zM224 60h1v1h-1zM229 60h1v1h-1zM234 60h1v1h-1zM239 60h1v1h-1zM244 60h1v1h-1zM249 60h1v1h-1zM254 60h1v1h-1zM259 60h1v1h-1zM264 60h1v1h-1zM269 60h1v1h-1zM274 60h1v1h-1zM279 60h1v1h-1zM284 60h1v1h-1zM289 60h1v1h-1zM294 60h1v1h-1zM299 60h1v1h-1zM304 60h1v1h-1zM309 60h1v1h-1zM314 60h1v1h-1zM319 60h1v1h-1zM324 60h1v1h-1zM329 60h1v1h-1zM334 60h1v1h-1zM339 60h1v1h-1zM344 60h1v1h-1zM349 60h1v1h-1zM354 60h1v1h-1zM359 60h1v1h-1zM364 60h1v1h-1zM369 60h1v1h-1zM374 60h1v1h-1zM379 60h1v1h-1zM384 60h1v1h-1zM389 60h1v1h-1zM394 60h1v1h-1zM399 60h1v1h-1zM404 60h1v1h-1zM409 60h1v1h-1zM414 60h1v1h-1zM419 60h1v1h-1zM424 60h1v1h-1zM429 60h1v1h-1zM434 60h1v1h-1zM439 60h1v1h-1zM444 60h1v1h-1zM449 60h1v1h-1zM454 60h1v1h-1zM459 60h1v1h-1zM464 60h1v1h-1zM469 60h1v1h-1zM474 60h1v1h-1zM479 60h1v1h-1zM484 60h1v1h-1zM489 60h1v1h-1zM494 60h1v1h-1zM499 60h1v1h-1zM504 60h1v1h-1zM509 60h1v1h-1zM514 60h1v1h-1zM519 60h1v1h-1zM524 60h1v1h-1zM529 60h1v1h-1zM534 60h1v1h-1zM539 60h1v1h-1zM544 60h1v1h-1zM549 60h1v1h-1zM554 60h1v1h-1zM559 60h1v1h-1zM564 60h1v1h-1zM569 60h1v1h-1zM574 60h1v1h-1zM579 60h1v1h-1zM584 60h1v1h-1zM589 60h1v1h-1zM594 60h1v1h-1zM599 60h1v1h-1zM604 60h1v1h-1zM609 60h1v1h-1zM614 60h1v1h-1zM619 60h1v1h-1zM624 60h1v1h-1zM629 60h1v1h-1zM634 60h1v1h-1zM639 60h1v1h-1zM644 60h1v1h-1zM649 60h1v1h-1zM654 60h1v1h-1zM659 60h1v1h-1zM664 60h1v1h-1zM669 60h1v1h-1zM674 60h1v1h-1zM679 60h1v1h-1zM684 60h1v1h-1zM689 60h1v1h-1zM694 60h1v1h-1zM699 60h1v1h-1zM704 60h1v1h-1zM709 60h1v1h-1zM714 60h1v1h-1zM719 60h1v1h-1zM724 60h1v1h-1zM729 60h1v1h-1zM734 60h1v1h-1zM739 60h1v1h-1zM744 60h1v1h-1zM749 60h1v1h-1zM754 60h1v1h-1zM759 60h1v1h-1zM764 60h1v1h-1zM769 60h1v1h-1zM774 60h1v1h-1zM779 60h1v1h-1zM784 60h1v1h-1zM789 60h1v1h-1zM794 60h1v1h-1zM799 60h1v1h-1zM804 60h1v1h-1zM809 60h1v1h-1zM814 60h1v1h-1zM819 60h1v1h-1zM824 60h1v1h-1zM829 60h1v1h-1zM834 60h1v1h-1zM839 60h1v1h-1zM844 60h1v1h-1zM849 60h1v1h-1zM854 60h1v1h-1zM859 60h1v1h-1zM864 60h1v1h-1zM869 60h1v1h-1zM874 60h1v1h-1zM879 60h1v1h-1zM884 60h1v1h-1zM889 60h1v1h-1zM894 60h1v1h-1zM899 60h1v1h-1zM904 60h1v1h-1zM909 60h1v1h-1zM914 60h1v1h-1zM919 60h1v1h-1zM924 60h1v1h-1zM929 60h1v1h-1zM934 60h1v1h-1zM939 60h1v1h-1zM944 60h1v1h-1zM949 60h1v1h-1zM954 60h1v1h-1zM959 60h1v1h-1zM964 60h1v1h-1zM969 60h1v1h-1zM974 60h1v1h-1zM979 60h1v1h-1zM984 60h1v1h-1zM989 60h1v1h-1zM994 60h1v1h-1zM999 60h1v1h-1zM1004 60h1v1h-1zM1009 60h1v1h-1zM1014 60h1v1h-1zM24 80h1v1h-1zM29 80h1v1h-1zM34 80h1v1h-1zM39 80h1v1h-1zM44 80h1v1h-1zM49 80h1v1h-1zM54 80h1v1h-1zM59 80h1v1h-1zM64 80h1v1h-1zM69 80h1v1h-1zM74 80h1v1h-1zM79 80h1v1h-1zM84 80h1v1h-1zM89 80h1v1h-1zM94 80h1v1h-1zM99 80h1v1h-1zM104 80h1v1h-1zM109 80h1v1h-1zM114 80h1v1h-1zM119 80h1v1h-1zM124 80h1v1h-1zM129 80h1v1h-1zM134 80h1v1h-1zM139 80h1v1h-1zM144 80h1v1h-1zM149 80h1v1h-1zM154 80h1v1h-1zM159 80h1v1h-1zM164 80h1v1h-1zM169 80h1v1h-1zM174 80h1v1h-1zM179 80h1v1h-1zM184 80h1v1h-1zM189 80h1v1h-1zM194 80h1v1h-1zM199 80h1v1h-1zM204 80h1v1h-1zM209 80h1v1h-1zM214 80h1v1h-1zM219 80h1v1h-1zM224 80h1v1h-1zM229 80h1v1h-1zM234 80h1v1h-1zM239 80h1v1h-1zM244 80h1v1h-1zM249 80h1v1h-1zM254 80h1v1h-1zM259 80h1v1h-1zM264 80h1v1h-1zM269 80h1v1h-1zM274 80h1v1h-1zM279 80h1v1h-1zM284 80h1v1h-1zM289 80h1v1h-1zM294 80h1v1h-1zM299 80h1v1h-1zM304 80h1v1h-1zM309 80h1v1h-1zM314 80h1v1h-1zM319 80h1v1h-1zM324 80h1v1h-1zM329 80h1v1h-1zM334 80h1v1h-1zM339 80h1v1h-1zM344 80h1v1h-1zM349 80h1v1h-1zM354 80h1v1h-1zM359 80h1v1h-1zM364 80h1v1h-1zM369 80h1v1h-1zM374 80h1v1h-1zM379 80h1v1h-1zM384 80h1v1h-1zM389 80h1v1h-1zM394 80h1v1h-1zM399 80h1v1h-1zM404 80h1v1h-1zM409 80h1v1h-1zM414 80h1v1h-1zM419 80h1v1h-1zM424 80h1v1h-1zM429 80h1v1h-1zM434 80h1v1h-1zM439 80h1v1h-1zM444 80h1v1h-1zM449 80h1v1h-1zM454 80h1v1h-1zM459 80h1v1h-1zM464 80h1v1h-1zM469 80h1v1h-1zM474 80h1v1h-1zM479 80h1v1h-1zM484 80h1v1h-1zM489 80h1v1h-1zM494 80h1v1h-1zM499 80h1v1h-1zM504 80h1v1h-1zM509 80h1v1h-1zM514 80h1v1h-1zM519 80h1v1h-1zM524 80h1v1h-1zM529 80h1v1h-1zM534 80h1v1h-1zM539 80h1v1h-1zM544 80h1v1h-1zM549 80h1v1h-1zM554 80h1v1h-1zM559 80h1v1h-1zM564 80h1v1h-1zM569 80h1v1h-1zM574 80h1v1h-1zM579 80h1v1h-1zM584 80h1v1h-1zM589 80h1v1h-1zM594 80h1v1h-1zM599 80h1v1h-1zM604 80h1v1h-1zM609 80h1v1h-1zM614 80h1v1h-1zM619 80h1v1h-1zM624 80h1v1h-1zM629 80h1v1h-1zM634 80h1v1h-1zM639 80h1v1h-1zM644 80h1v1h-1zM649 80h1v1h-1zM654 80h1v1h-1zM659 80h1v1h-1zM664 80h1v1h-1zM669 80h1v1h-1zM674 80h1v1h-1zM679 80h1v1h-1zM684 80h1v1h-1zM689 80h1v1h-1zM694 80h1v1h-1zM699 80h1v1h-1zM704 80h1v1h-1zM709 80h1v1h-1zM714 80h1v1h-1zM719 80h1v1h-1zM724 80h1v1h-1zM729 80h1v1h-1zM734 80h1v1h-1zM739 80h1v1h-1zM744 80h1v1h-1zM749 80h1v1h-1zM754 80h1v1h-1zM759 80h1v1h-1zM764 80h1v1h-1zM769 80h1v1h-1zM774 80h1v1h-1zM779 80h1v1h-1zM784 80h1v1h-1zM789 80h1v1h-1zM794 80h1v1h-1zM799 80h1v1h-1zM804 80h1v1h-1zM809 80h1v1h-1zM814 80h1v1h-1zM819 80h1v1h-1zM824 80h1v1h-1zM829 80h1v1h-1zM834 80h1v1h-1zM839 80h1v1h-1zM844 80h1v1h-1zM849 80h1v1h-1zM854 80h1v1h-1zM859 80h1v1h-1zM864 80h1v1h-1zM869 80h1v1h-1zM874 80h1v1h-1zM879 80h1v1h-1zM884 80h1v1h-1zM889 80h1v1h-1zM894 80h1v1h-1zM899 80h1v1h-1zM904 80h1v1h-1zM909 80h1v1h-1zM914 80h1v1h-1zM919 80h1v1h-1zM924 80h1v1h-1zM929 80h1v1h-1zM934 80h1v1h-1zM939 80h1v1h-1zM944 80h1v1h-1zM949 80h1v1h-1zM954 80h1v1h-1zM959 80h1v1h-1zM964 80h1v1h-1zM969 80h1v1h-1zM974 80h1v1h-1zM979 80h1v1h-1zM984 80h1v1h-1zM989 80h1v1h-1zM994 80h1v1h-1zM999 80h1v1h-1zM1004 80h1v1h-1zM1009 80h1v1h-1zM1014 80h1v1h-1zM24 100h1v1h-1zM29 100h1v1h-1zM34 100h1v1h-1zM39 100h1v1h-1zM44 100h1v1h-1zM49 100h1v1h-1zM54 100h1v1h-1zM59 100h1v1h-1zM64 100h1v1h-1zM69 100h1v1h-1zM74 100h1v1h-1zM79 100h1v1h-1zM84 100h1v1h-1zM89 100h1v1h-1zM94 100h1v1h-1zM99 100h1v1h-1zM104 100h1v1h-1zM109 100h1v1h-1zM114 100h1v1h-1zM119 100h1v1h-1zM124 100h1v1h-1zM129 100h1v1h-1zM134 100h1v1h-1zM139 100h1v1h-1zM144 100h1v1h-1zM149 100h1v1h-1zM154 100h1v1h-1zM159 100h1v1h-1zM164 100h1v1h-1zM169 100h1v1h-1zM174 100h1v1h-1zM179 100h1v1h-1zM184 100h1v1h-1zM189 100h1v1h-1zM194 100h1v1h-1zM199 100h1v1h-1zM204 100h1v1h-1zM209 100h1v1h-1zM214 100h1v1h-1zM219 100h1v1h-1zM224 100h1v1h-1zM229 100h1v1h-1zM234 100h1v1h-1zM239 100h1v1h-1zM244 100h1v1h-1zM249 100h1v1h-1zM254 100h1v1h-1zM259 100h1v1h-1zM264 100h1v1h-1zM269 100h1v1h-1zM274 100h1v1h-1zM279 100h1v1h-1zM284 100h1v1h-1zM289 100h1v1h-1zM294 100h1v1h-1zM299 100h1v1h-1zM304 100h1v1h-1zM309 100h1v1h-1zM314 100h1v1h-1zM319 100h1v1h-1zM324 100h1v1h-1zM329 100h1v1h-1zM334 100h1v1h-1zM339 100h1v1h-1zM344 100h1v1h-1zM349 100h1v1h-1zM354 100h1v1h-1zM359 100h1v1h-1zM364 100h1v1h-1zM369 100h1v1h-1zM374 100h1v1h-1zM379 100h1v1h-1zM384 100h1v1h-1zM389 100h1v1h-1zM394 100h1v1h-1zM399 100h1v1h-1zM404 100h1v1h-1zM409 100h1v1h-1zM414 100h1v1h-1zM419 100h1v1h-1zM424 100h1v1h-1zM429 100h1v1h-1zM434 100h1v1h-1zM439 100h1v1h-1zM444 100h1v1h-1zM449 100h1v1h-1zM454 100h1v1h-1zM459 100h1v1h-1zM464 100h1v1h-1zM469 100h1v1h-1zM474 100h1v1h-1zM479 100h1v1h-1zM484 100h1v1h-1zM489 100h1v1h-1zM494 100h1v1h-1zM499 100h1v1h-1zM504 100h1v1h-1zM509 100h1v1h-1zM514 100h1v1h-1zM519 100h1v1h-1zM524 100h1v1h-1zM529 100h1v1h-1zM534 100h1v1h-1zM539 100h1v1h-1zM544 100h1v1h-1zM549 100h1v1h-1zM554 100h1v1h-1zM559 100h1v1h-1zM564 100h1v1h-1zM569 100h1v1h-1zM574 100h1v1h-1zM579 100h1v1h-1zM584 100h1v1h-1zM589 100h1v1h-1zM594 100h1v1h-1zM599 100h1v1h-1zM604 100h1v1h-1zM609 100h1v1h-1zM614 100h1v1h-1zM619 100h1v1h-1zM624 100h1v1h-1zM629 100h1v1h-1zM634 100h1v1h-1zM639 100h1v1h-1zM644 100h1v1h-1zM649 100h1v1h-1zM654 100h1v1h-1zM659 100h1v1h-1zM664 100h1v1h-1zM669 100h1v1h-1zM674 100h1v1h-1zM679 100h1v1h-1zM684 100h1v1h-1zM689 100h1v1h-1zM694 100h1v1h-1zM699 100h1v1h-1zM704 100h1v1h-1zM709 100h1v1h-1zM714 100h1v1h-1zM719 100h1v1h-1zM724 100h1v1h-1zM729 100h1v1h-1zM734 100h1v1h-1zM739 100h1v1h-1zM744 100h1v1h-1zM749 100h1v1h-1zM754 100h1v1h-1zM759 100h1v1h-1zM764 100h1v1h-1zM769 100h1v1h-1zM774 100h1v1h-1zM779 100h1v1h-1zM784 100h1v1h-1zM789 100h1v1h-1zM794 100h1v1h-1zM799 100h1v1h-1zM804 100h1v1h-1zM809 100h1v1h-1zM814 100h1v1h-1zM819 100h1v1h-1zM824 100h1v1h-1zM829 100h1v1h-1zM834 100h1v1h-1zM839 100h1v1h-1zM844 100h1v1h-1zM849 100h1v1h-1zM854 100h1v1h-1zM859 100h1v1h-1zM864 100h1v1h-1zM869 100h1v1h-1zM874 100h1v1h-1zM879 100h1v1h-1zM884 100h1v1h-1zM889 100h1v1h-1zM894 100h1v1h-1zM899 100h1v1h-1zM904 100h1v1h-1zM909 100h1v1h-1zM914 100h1v1h-1zM919 100h1v1h-1zM924 100h1v1h-1zM929 100h1v1h-1zM934 100h1v1h-1zM939 100h1v1h-1zM944 100h1v1h-1zM949 100h1v1h-1zM954 100h1v1h-1zM959 100h1v1h-1zM964 100h1v1h-1zM969 100h1v1h-1zM974 100h1v1h-1zM979 100h1v1h-1zM984 100h1v1h-1zM989 100h1v1h-1zM994 100h1v1h-1zM999 100h1v1h-1zM1004 100h1v1h-1zM1009 100h1v1h-1zM1014 100h1v1h-1zM24 120h1v1h-1zM29 120h1v1h-1zM34 120h1v1h-1zM39 120h1v1h-1zM44 120h1v1h-1zM49 120h1v1h-1zM54 120h1v1h-1zM59 120h1v1h-1zM64 120h1v1h-1zM69 120h1v1h-1zM74 120h1v1h-1zM79 120h1v1h-1zM84 120h1v1h-1zM89 120h1v1h-1zM94 120h1v1h-1zM99 120h1v1h-1zM104 120h1v1h-1zM109 120h1v1h-1zM114 120h1v1h-1zM119 120h1v1h-1zM124 120h1v1h-1zM129 120h1v1h-1zM134 120h1v1h-1zM139 120h1v1h-1zM144 120h1v1h-1zM149 120h1v1h-1zM154 120h1v1h-1zM159 120h1v1h-1zM164 120h1v1h-1zM169 120h1v1h-1zM174 120h1v1h-1zM179 120h1v1h-1zM184 120h1v1h-1zM189 120h1v1h-1zM194 120h1v1h-1zM199 120h1v1h-1zM204 120h1v1h-1zM209 120h1v1h-1zM214 120h1v1h-1zM219 120h1v1h-1zM224 120h1v1h-1zM229 120h1v1h-1zM234 120h1v1h-1zM239 120h1v1h-1zM244 120h1v1h-1zM249 120h1v1h-1zM254 120h1v1h-1zM259 120h1v1h-1zM264 120h1v1h-1zM269 120h1v1h-1zM274 120h1v1h-1zM279 120h1v1h-1zM284 120h1v1h-1zM289 120h1v1h-1zM294 120h1v1h-1zM299 120h1v1h-1zM304 120h1v1h-1zM309 120h1v1h-1zM314 120h1v1h-1zM319 120h1v1h-1zM324 120h1v1h-1zM329 120h1v1h-1zM334 120h1v1h-1zM339 120h1v1h-1zM344 120h1v1h-1zM349 120h1v1h-1zM354 120h1v1h-1zM359 120h1v1h-1zM364 120h1v1h-1zM369 120h1v1h-1zM374 120h1v1h-1zM379 120h1v1h-1zM384 120h1v1h-1zM389 120h1v1h-1zM394 120h1v1h-1zM399 120h1v1h-1zM404 120h1v1h-1zM409 120h1v1h-1zM414 120h1v1h-1zM419 120h1v1h-1zM424 120h1v1h-1zM429 120h1v1h-1zM434 120h1v1h-1zM439 120h1v1h-1zM444 120h1v1h-1zM449 120h1v1h-1zM454 120h1v1h-1zM459 120h1v1h-1zM464 120h1v1h-1zM469 120h1v1h-1zM474 120h1v1h-1zM479 120h1v1h-1zM484 120h1v1h-1zM489 120h1v1h-1zM494 120h1v1h-1zM499 120h1v1h-1zM504 120h1v1h-1zM509 120h1v1h-1zM514 120h1v1h-1zM519 120h1v1h-1zM524 120h1v1h-1zM529 120h1v1h-1zM534 120h1v1h-1zM539 120h1v1h-1zM544 120h1v1h-1zM549 120h1v1h-1zM554 120h1v1h-1zM559 120h1v1h-1zM564 120h1v1h-1zM569 120h1v1h-1zM574 120h1v1h-1zM579 120h1v1h-1zM584 120h1v1h-1zM589 120h1v1h-1zM594 120h1v1h-1zM599 120h1v1h-1zM604 120h1v1h-1zM609 120h1v1h-1zM614 120h1v1h-1zM619 120h1v1h-1zM624 120h1v1h-1zM629 120h1v1h-1zM634 120h1v1h-1zM639 120h1v1h-1zM644 120h1v1h-1zM649 120h1v1h-1zM654 120h1v1h-1zM659 120h1v1h-1zM664 120h1v1h-1zM669 120h1v1h-1zM674 120h1v1h-1zM679 120h1v1h-1zM684 120h1v1h-1zM689 120h1v1h-1zM694 120h1v1h-1zM699 120h1v1h-1zM704 120h1v1h-1zM709 120h1v1h-1zM714 120h1v1h-1zM719 120h1v1h-1zM724 120h1v1h-1zM729 120h1v1h-1zM734 120h1v1h-1zM739 120h1v1h-1zM744 120h1v1h-1zM749 120h1v1h-1zM754 120h1v1h-1zM759 120h1v1h-1zM764 120h1v1h-1zM769 120h1v1h-1zM774 120h1v1h-1zM779 120h1v1h-1zM784 120h1v1h-1zM789 120h1v1h-1zM794 120h1v1h-1zM799 120h1v1h-1zM804 120h1v1h-1zM809 120h1v1h-1zM814 120h1v1h-1zM819 120h1v1h-1zM824 120h1v1h-1zM829 120h1v1h-1zM834 120h1v1h-1zM839 120h1v1h-1zM844 120h1v1h-1zM849 120h1v1h-1zM854 120h1v1h-1zM859 120h1v1h-1zM864 120h1v1h-1zM869 120h1v1h-1zM874 120h1v1h-1zM879 120h1v1h-1zM884 120h1v1h-1zM889 120h1v1h-1zM894 120h1v1h-1zM899 120h1v1h-1zM904 120h1v1h-1zM909 120h1v1h-1zM914 120h1v1h-1zM919 120h1v1h-1zM924 120h1v1h-1zM929 120h1v1h-1zM934 120h1v1h-1zM939 120h1v1h-1zM944 120h1v1h-1zM949 120h1v1h-1zM954 120h1v1h-1zM959 120h1v1h-1zM964 120h1v1h-1zM969 120h1v1h-1zM974 120h1v1h-1zM979 120h1v1h-1zM984 120h1v1h-1zM989 120h1v1h-1zM994 120h1v1h-1zM999 120h1v1h-1zM1004 120h1v1h-1zM1009 120h1v1h-1zM1014 120h1v1h-1zM24 140h1v1h-1zM29 140h1v1h-1zM34 140h1v1h-1zM39 140h1v1h-1zM44 140h1v1h-1zM49 140h1v1h-1zM54 140h1v1h-1zM59 140h1v1h-1zM64 140h1v1h-1zM69 140h1v1h-1zM74 140h1v1h-1zM79 140h1v1h-1zM84 140h1v1h-1zM89 140h1v1h-1zM94 140h1v1h-1zM99 140h1v1h-1zM104 140h1v1h-1zM109 140h1v1h-1zM114 140h1v1h-1zM119 140h1v1h-1zM124 140h1v1h-1zM129 140h1v1h-1zM134 140h1v1h-1zM139 140h1v1h-1zM144 140h1v1h-1zM149 140h1v1h-1zM154 140h1v1h-1zM159 140h1v1h-1zM164 140h1v1h-1zM169 140h1v1h-1zM174 140h1v1h-1zM179 140h1v1h-1zM184 140h1v1h-1zM189 140h1v1h-1zM194 140h1v1h-1zM199 140h1v1h-1zM204 140h1v1h-1zM209 140h1v1h-1zM214 140h1v1h-1zM219 140h1v1h-1zM224 140h1v1h-1zM229 140h1v1h-1zM234 140h1v1h-1zM239 140h1v1h-1zM244 140h1v1h-1zM249 140h1v1h-1zM254 140h1v1h-1zM259 140h1v1h-1zM264 140h1v1h-1zM269 140h1v1h-1zM274 140h1v1h-1zM279 140h1v1h-1zM284 140h1v1h-1zM289 140h1v1h-1zM294 140h1v1h-1zM299 140h1v1h-1zM304 140h1v1h-1zM309 140h1v1h-1zM314 140h1v1h-1zM319 140h1v1h-1zM324 140h1v1h-1zM329 140h1v1h-1zM334 140h1v1h-1zM339 140h1v1h-1zM344 140h1v1h-1zM349 140h1v1h-1zM354 140h1v1h-1zM359 140h1v1h-1zM364 140h1v1h-1zM369 140h1v1h-1zM374 140h1v1h-1zM379 140h1v1h-1zM384 140h1v1h-1zM389 140h1v1h-1zM394 140h1v1h-1zM399 140h1v1h-1zM404 140h1v1h-1zM409 140h1v1h-1zM414 140h1v1h-1zM419 140h1v1h-1zM424 140h1v1h-1zM429 140h1v1h-1zM434 140h1v1h-1zM439 140h1v1h-1zM444 140h1v1h-1zM449 140h1v1h-1zM454 140h1v1h-1zM459 140h1v1h-1zM464 140h1v1h-1zM469 140h1v1h-1zM474 140h1v1h-1zM479 140h1v1h-1zM484 140h1v1h-1zM489 140h1v1h-1zM494 140h1v1h-1zM499 140h1v1h-1zM504 140h1v1h-1zM509 140h1v1h-1zM514 140h1v1h-1zM519 140h1v1h-1zM524 140h1v1h-1zM529 140h1v1h-1zM534 140h1v1h-1zM539 140h1v1h-1zM544 140h1v1h-1zM549 140h1v1h-1zM554 140h1v1h-1zM559 140h1v1h-1zM564 140h1v1h-1zM569 140h1v1h-1zM574 140h1v1h-1zM579 140h1v1h-1zM584 140h1v1h-1zM589 140h1v1h-1zM594 140h1v1h-1zM599 140h1v1h-1zM604 140h1v1h-1zM609 140h1v1h-1zM614 140h1v1h-1zM619 140h1v1h-1zM624 140h1v1h-1zM629 140h1v1h-1zM634 140h1v1h-1zM639 140h1v1h-1zM644 140h1v1h-1zM649 140h1v1h-1zM654 140h1v1h-1zM659 140h1v1h-1zM664 140h1v1h-1zM669 140h1v1h-1zM674 140h1v1h-1zM679 140h1v1h-1zM684 140h1v1h-1zM689 140h1v1h-1zM694 140h1v1h-1zM699 140h1v1h-1zM704 140h1v1h-1zM709 140h1v1h-1zM714 140h1v1h-1zM719 140h1v1h-1zM724 140h1v1h-1zM729 140h1v1h-1zM734 140h1v1h-1zM739 140h1v1h-1zM744 140h1v1h-1zM749 140h1v1h-1zM754 140h1v1h-1zM759 140h1v1h-1zM764 140h1v1h-1zM769 140h1v1h-1zM774 140h1v1h-1zM779 140h1v1h-1zM784 140h1v1h-1zM789 140h1v1h-1zM794 140h1v1h-1zM799 140h1v1h-1zM804 140h1v1h-1zM809 140h1v1h-1zM814 140h1v1h-1zM819 140h1v1h-1zM824 140h1v1h-1zM829 140h1v1h-1zM834 140h1v1h-1zM839 140h1v1h-1zM844 140h1v1h-1zM849 140h1v1h-1zM854 140h1v1h-1zM859 140h1v1h-1zM864 140h1v1h-1zM869 140h1v1h-1zM874 140h1v1h-1zM879 140h1v1h-1zM884 140h1v1h-1zM889 140h1v1h-1zM894 140h1v1h-1zM899 140h1v1h-1zM904 140h1v1h-1zM909 140h1v1h-1zM914 140h1v1h-1zM919 140h1v1h-1zM924 140h1v1h-1zM929 140h1v1h-1zM934 140h1v1h-1zM939 140h1v1h-1zM944 140h1v1h-1zM949 140h1v1h-1zM954 140h1v1h-1zM959 140h1v1h-1zM964 140h1v1h-1zM969 140h1v1h-1zM974 140h1v1h-1zM979 140h1v1h-1zM984 140h1v1h-1zM989 140h1v1h-1zM994 140h1v1h-1zM999 140h1v1h-1zM1004 140h1v1h-1zM1009 140h1v1h-1zM1014 140h1v1h-1zM24 160h1v1h-1zM29 160h1v1h-1zM34 160h1v1h-1zM39 160h1v1h-1zM44 160h1v1h-1zM49 160h1v1h-1zM54 160h1v1h-1zM59 160h1v1h-1zM64 160h1v1h-1zM69 160h1v1h-1zM74 160h1v1h-1zM79 160h1v1h-1zM84 160h1v1h-1zM89 160h1v1h-1zM94 160h1v1h-1zM99 160h1v1h-1zM104 160h1v1h-1zM109 160h1v1h-1zM114 160h1v1h-1zM119 160h1v1h-1zM124 160h1v1h-1zM129 160h1v1h-1zM134 160h1v1h-1zM139 160h1v1h-1zM144 160h1v1h-1zM149 160h1v1h-1zM154 160h1v1h-1zM159 160h1v1h-1zM164 160h1v1h-1zM169 160h1v1h-1zM174 160h1v1h-1zM179 160h1v1h-1zM184 160h1v1h-1zM189 160h1v1h-1zM194 160h1v1h-1zM199 160h1v1h-1zM204 160h1v1h-1zM209 160h1v1h-1zM214 160h1v1h-1zM219 160h1v1h-1zM224 160h1v1h-1zM229 160h1v1h-1zM234 160h1v1h-1zM239 160h1v1h-1zM244 160h1v1h-1zM249 160h1v1h-1zM254 160h1v1h-1zM259 160h1v1h-1zM264 160h1v1h-1zM269 160h1v1h-1zM274 160h1v1h-1zM279 160h1v1h-1zM284 160h1v1h-1zM289 160h1v1h-1zM294 160h1v1h-1zM299 160h1v1h-1zM304 160h1v1h-1zM309 160h1v1h-1zM314 160h1v1h-1zM319 160h1v1h-1zM324 160h1v1h-1zM329 160h1v1h-1zM334 160h1v1h-1zM339 160h1v1h-1zM344 160h1v1h-1zM349 160h1v1h-1zM354 160h1v1h-1zM359 160h1v1h-1zM364 160h1v1h-1zM369 160h1v1h-1zM374 160h1v1h-1zM379 160h1v1h-1zM384 160h1v1h-1zM389 160h1v1h-1zM394 160h1v1h-1zM399 160h1v1h-1zM404 160h1v1h-1zM409 160h1v1h-1zM414 160h1v1h-1zM419 160h1v1h-1zM424 160h1v1h-1zM429 160h1v1h-1zM434 160h1v1h-1zM439 160h1v1h-1zM444 160h1v1h-1zM449 160h1v1h-1zM454 160h1v1h-1zM459 160h1v1h-1zM464 160h1v1h-1zM469 160h1v1h-1zM474 160h1v1h-1zM479 160h1v1h-1zM484 160h1v1h-1zM489 160h1v1h-1zM494 160h1v1h-1zM499 160h1v1h-1zM504 160h1v1h-1zM509 160h1v1h-1zM514 160h1v1h-1zM519 160h1v1h-1zM524 160h1v1h-1zM529 160h1v1h-1zM534 160h1v1h-1zM539 160h1v1h-1zM544 160h1v1h-1zM549 160h1v1h-1zM554 160h1v1h-1zM559 160h1v1h-1zM564 160h1v1h-1zM569 160h1v1h-1zM574 160h1v1h-1zM579 160h1v1h-1zM584 160h1v1h-1zM589 160h1v1h-1zM594 160h1v1h-1zM599 160h1v1h-1zM604 160h1v1h-1zM609 160h1v1h-1zM614 160h1v1h-1zM619 160h1v1h-1zM624 160h1v1h-1zM629 160h1v1h-1zM634 160h1v1h-1zM639 160h1v1h-1zM644 160h1v1h-1zM649 160h1v1h-1zM654 160h1v1h-1zM659 160h1v1h-1zM664 160h1v1h-1zM669 160h1v1h-1zM674 160h1v1h-1zM679 160h1v1h-1zM684 160h1v1h-1zM689 160h1v1h-1zM694 160h1v1h-1zM699 160h1v1h-1zM704 160h1v1h-1zM709 160h1v1h-1zM714 160h1v1h-1zM719 160h1v1h-1zM724 160h1v1h-1zM729 160h1v1h-1zM734 160h1v1h-1zM739 160h1v1h-1zM744 160h1v1h-1zM749 160h1v1h-1zM754 160h1v1h-1zM759 160h1v1h-1zM764 160h1v1h-1zM769 160h1v1h-1zM774 160h1v1h-1zM779 160h1v1h-1zM784 160h1v1h-1zM789 160h1v1h-1zM794 160h1v1h-1zM799 160h1v1h-1zM804 160h1v1h-1zM809 160h1v1h-1zM814 160h1v1h-1zM819 160h1v1h-1zM824 160h1v1h-1zM829 160h1v1h-1zM834 160h1v1h-1zM839 160h1v1h-1zM844 160h1v1h-1zM849 160h1v1h-1zM854 160h1v1h-1zM859 160h1v1h-1zM864 160h1v1h-1zM869 160h1v1h-1zM874 160h1v1h-1zM879 160h1v1h-1zM884 160h1v1h-1zM889 160h1v1h-1zM894 160h1v1h-1zM899 160h1v1h-1zM904 160h1v1h-1zM909 160h1v1h-1zM914 160h1v1h-1zM919 160h1v1h-1zM924 160h1v1h-1zM929 160h1v1h-1zM934 160h1v1h-1zM939 160h1v1h-1zM944 160h1v1h-1zM949 160h1v1h-1zM954 160h1v1h-1zM959 160h1v1h-1zM964 160h1v1h-1zM969 160h1v1h-1zM974 160h1v1h-1zM979 160h1v1h-1zM984 160h1v1h-1zM989 160h1v1h-1zM994 160h1v1h-1zM999 160h1v1h-1zM1004 160h1v1h-1zM1009 160h1v1h-1zM1014 160h1v1h-1zM24 200h1v1h-1zM29 200h1v1h-1zM34 200h1v1h-1zM39 200h1v1h-1zM44 200h1v1h-1zM49 200h1v1h-1zM54 200h1v1h-1zM59 200h1v1h-1zM64 200h1v1h-1zM69 200h1v1h-1zM74 200h1v1h-1zM79 200h1v1h-1zM84 200h1v1h-1zM89 200h1v1h-1zM94 200h1v1h-1zM99 200h1v1h-1zM104 200h1v1h-1zM109 200h1v1h-1zM114 200h1v1h-1zM119 200h1v1h-1zM124 200h1v1h-1zM129 200h1v1h-1zM134 200h1v1h-1zM139 200h1v1h-1zM144 200h1v1h-1zM149 200h1v1h-1zM154 200h1v1h-1zM159 200h1v1h-1zM164 200h1v1h-1zM169 200h1v1h-1zM174 200h1v1h-1zM179 200h1v1h-1zM184 200h1v1h-1zM189 200h1v1h-1zM194 200h1v1h-1zM199 200h1v1h-1zM204 200h1v1h-1zM209 200h1v1h-1zM214 200h1v1h-1zM219 200h1v1h-1zM224 200h1v1h-1zM229 200h1v1h-1zM234 200h1v1h-1zM239 200h1v1h-1zM244 200h1v1h-1zM249 200h1v1h-1zM254 200h1v1h-1zM259 200h1v1h-1zM264 200h1v1h-1zM269 200h1v1h-1zM274 200h1v1h-1zM279 200h1v1h-1zM284 200h1v1h-1zM289 200h1v1h-1zM294 200h1v1h-1zM299 200h1v1h-1zM304 200h1v1h-1zM309 200h1v1h-1zM314 200h1v1h-1zM319 200h1v1h-1zM324 200h1v1h-1zM329 200h1v1h-1zM334 200h1v1h-1zM339 200h1v1h-1zM344 200h1v1h-1zM349 200h1v1h-1zM354 200h1v1h-1zM359 200h1v1h-1zM364 200h1v1h-1zM369 200h1v1h-1zM374 200h1v1h-1zM379 200h1v1h-1zM384 200h1v1h-1zM389 200h1v1h-1zM394 200h1v1h-1zM399 200h1v1h-1zM404 200h1v1h-1zM409 200h1v1h-1zM414 200h1v1h-1zM419 200h1v1h-1zM424 200h1v1h-1zM429 200h1v1h-1zM434 200h1v1h-1zM439 200h1v1h-1zM444 200h1v1h-1zM449 200h1v1h-1zM454 200h1v1h-1zM459 200h1v1h-1zM464 200h1v1h-1zM469 200h1v1h-1zM474 200h1v1h-1zM479 200h1v1h-1zM484 200h1v1h-1zM489 200h1v1h-1zM494 200h1v1h-1zM499 200h1v1h-1zM504 200h1v1h-1zM509 200h1v1h-1zM514 200h1v1h-1zM519 200h1v1h-1zM524 200h1v1h-1zM529 200h1v1h-1zM534 200h1v1h-1zM539 200h1v1h-1zM544 200h1v1h-1zM549 200h1v1h-1zM554 200h1v1h-1zM559 200h1v1h-1zM564 200h1v1h-1zM569 200h1v1h-1zM574 200h1v1h-1zM579 200h1v1h-1zM584 200h1v1h-1zM589 200h1v1h-1zM594 200h1v1h-1zM599 200h1v1h-1zM604 200h1v1h-1zM609 200h1v1h-1zM614 200h1v1h-1zM619 200h1v1h-1zM624 200h1v1h-1zM629 200h1v1h-1zM634 200h1v1h-1zM639 200h1v1h-1zM644 200h1v1h-1zM649 200h1v1h-1zM654 200h1v1h-1zM659 200h1v1h-1zM664 200h1v1h-1zM669 200h1v1h-1zM674 200h1v1h-1zM679 200h1v1h-1zM684 200h1v1h-1zM689 200h1v1h-1zM694 200h1v1h-1zM699 200h1v1h-1zM704 200h1v1h-1zM709 200h1v1h-1zM714 200h1v1h-1zM719 200h1v1h-1zM724 200h1v1h-1zM729 200h1v1h-1zM734 200h1v1h-1zM739 200h1v1h-1zM744 200h1v1h-1zM749 200h1v1h-1zM754 200h1v1h-1zM759 200h1v1h-1zM764 200h1v1h-1zM769 200h1v1h-1zM774 200h1v1h-1zM779 200h1v1h-1zM784 200h1v1h-1zM789 200h1v1h-1zM794 200h1v1h-1zM799 200h1v1h-1zM804 200h1v1h-1zM809 200h1v1h-1zM814 200h1v1h-1zM819 200h1v1h-1zM824 200h1v1h-1zM829 200h1v1h-1zM834 200h1v1h-1zM839 200h1v1h-1zM844 200h1v1h-1zM849 200h1v1h-1zM854 200h1v1h-1zM859 200h1v1h-1zM864 200h1v1h-1zM869 200h1v1h-1zM874 200h1v1h-1zM879 200h1v1h-1zM884 200h1v1h-1zM889 200h1v1h-1zM894 200h1v1h-1zM899 200h1v1h-1zM904 200h1v1h-1zM909 200h1v1h-1zM914 200h1v1h-1zM919 200h1v1h-1zM924 200h1v1h-1zM929 200h1v1h-1zM934 200h1v1h-1zM939 200h1v1h-1zM944 200h1v1h-1zM949 200h1v1h-1zM954 200h1v1h-1zM959 200h1v1h-1zM964 200h1v1h-1zM969 200h1v1h-1zM974 200h1v1h-1zM979 200h1v1h-1zM984 200h1v1h-1zM989 200h1v1h-1zM994 200h1v1h-1zM999 200h1v1h-1zM1004 200h1v1h-1zM1009 200h1v1h-1zM1014 200h1v1h-1zM24 220h1v1h-1zM29 220h1v1h-1zM34 220h1v1h-1zM39 220h1v1h-1zM44 220h1v1h-1zM49 220h1v1h-1zM54 220h1v1h-1zM59 220h1v1h-1zM64 220h1v1h-1zM69 220h1v1h-1zM74 220h1v1h-1zM79 220h1v1h-1zM84 220h1v1h-1zM89 220h1v1h-1zM94 220h1v1h-1zM99 220h1v1h-1zM104 220h1v1h-1zM109 220h1v1h-1zM114 220h1v1h-1zM119 220h1v1h-1zM124 220h1v1h-1zM129 220h1v1h-1zM134 220h1v1h-1zM139 220h1v1h-1zM144 220h1v1h-1zM149 220h1v1h-1zM154 220h1v1h-1zM159 220h1v1h-1zM164 220h1v1h-1zM169 220h1v1h-1zM174 220h1v1h-1zM179 220h1v1h-1zM184 220h1v1h-1zM189 220h1v1h-1zM194 220h1v1h-1zM199 220h1v1h-1zM204 220h1v1h-1zM209 220h1v1h-1zM214 220h1v1h-1zM219 220h1v1h-1zM224 220h1v1h-1zM229 220h1v1h-1zM234 220h1v1h-1zM239 220h1v1h-1zM244 220h1v1h-1zM249 220h1v1h-1zM254 220h1v1h-1zM259 220h1v1h-1zM264 220h1v1h-1zM269 220h1v1h-1zM274 220h1v1h-1zM279 220h1v1h-1zM284 220h1v1h-1zM289 220h1v1h-1zM294 220h1v1h-1zM299 220h1v1h-1zM304 220h1v1h-1zM309 220h1v1h-1zM314 220h1v1h-1zM319 220h1v1h-1zM324 220h1v1h-1zM329 220h1v1h-1zM334 220h1v1h-1zM339 220h1v1h-1zM344 220h1v1h-1zM349 220h1v1h-1zM354 220h1v1h-1zM359 220h1v1h-1zM364 220h1v1h-1zM369 220h1v1h-1zM374 220h1v1h-1zM379 220h1v1h-1zM384 220h1v1h-1zM389 220h1v1h-1zM394 220h1v1h-1zM399 220h1v1h-1zM404 220h1v1h-1zM409 220h1v1h-1zM414 220h1v1h-1zM419 220h1v1h-1zM424 220h1v1h-1zM429 220h1v1h-1zM434 220h1v1h-1zM439 220h1v1h-1zM444 220h1v1h-1zM449 220h1v1h-1zM454 220h1v1h-1zM459 220h1v1h-1zM464 220h1v1h-1zM469 220h1v1h-1zM474 220h1v1h-1zM479 220h1v1h-1zM484 220h1v1h-1zM489 220h1v1h-1zM494 220h1v1h-1zM499 220h1v1h-1zM504 220h1v1h-1zM509 220h1v1h-1zM514 220h1v1h-1zM519 220h1v1h-1zM524 220h1v1h-1zM529 220h1v1h-1zM534 220h1v1h-1zM539 220h1v1h-1zM544 220h1v1h-1zM549 220h1v1h-1zM554 220h1v1h-1zM559 220h1v1h-1zM564 220h1v1h-1zM569 220h1v1h-1zM574 220h1v1h-1zM579 220h1v1h-1zM584 220h1v1h-1zM589 220h1v1h-1zM594 220h1v1h-1zM599 220h1v1h-1zM604 220h1v1h-1zM609 220h1v1h-1zM614 220h1v1h-1zM619 220h1v1h-1zM624 220h1v1h-1zM629 220h1v1h-1zM634 220h1v1h-1zM639 220h1v1h-1zM644 220h1v1h-1zM649 220h1v1h-1zM654 220h1v1h-1zM659 220h1v1h-1zM664 220h1v1h-1zM669 220h1v1h-1zM674 220h1v1h-1zM679 220h1v1h-1zM684 220h1v1h-1zM689 220h1v1h-1zM694 220h1v1h-1zM699 220h1v1h-1zM704 220h1v1h-1zM709 220h1v1h-1zM714 220h1v1h-1zM719 220h1v1h-1zM724 220h1v1h-1zM729 220h1v1h-1zM734 220h1v1h-1zM739 220h1v1h-1zM744 220h1v1h-1zM749 220h1v1h-1zM754 220h1v1h-1zM759 220h1v1h-1zM764 220h1v1h-1zM769 220h1v1h-1zM774 220h1v1h-1zM779 220h1v1h-1zM784 220h1v1h-1zM789 220h1v1h-1zM794 220h1v1h-1zM799 220h1v1h-1zM804 220h1v1h-1zM809 220h1v1h-1zM814 220h1v1h-1zM819 220h1v1h-1zM824 220h1v1h-1zM829 220h1v1h-1zM834 220h1v1h-1zM839 220h1v1h-1zM844 220h1v1h-1zM849 220h1v1h-1zM854 220h1v1h-1zM859 220h1v1h-1zM864 220h1v1h-1zM869 220h1v1h-1zM874 220h1v1h-1zM879 220h1v1h-1zM884 220h1v1h-1zM889 220h1v1h-1zM894 220h1v1h-1zM899 220h1v1h-1zM904 220h1v1h-1zM909 220h1v1h-1zM914 220h1v1h-1zM919 220h1v1h-1zM924 220h1v1h-1zM929 220h1v1h-1zM934 220h1v1h-1zM939 220h1v1h-1zM944 220h1v1h-1zM949 220h1v1h-1zM954 220h1v1h-1zM959 220h1v1h-1zM964 220h1v1h-1zM969 220h1v1h-1zM974 220h1v1h-1zM979 220h1v1h-1zM984 220h1v1h-1zM989 220h1v1h-1zM994 220h1v1h-1zM999 220h1v1h-1zM1004 220h1v1h-1zM1009 220h1v1h-1zM1014 220h1v1h-1zM24 240h1v1h-1zM29 240h1v1h-1zM34 240h1v1h-1zM39 240h1v1h-1zM44 240h1v1h-1zM49 240h1v1h-1zM54 240h1v1h-1zM59 240h1v1h-1zM64 240h1v1h-1zM69 240h1v1h-1zM74 240h1v1h-1zM79 240h1v1h-1zM84 240h1v1h-1zM89 240h1v1h-1zM94 240h1v1h-1zM99 240h1v1h-1zM104 240h1v1h-1zM109 240h1v1h-1zM114 240h1v1h-1zM119 240h1v1h-1zM124 240h1v1h-1zM129 240h1v1h-1zM134 240h1v1h-1zM139 240h1v1h-1zM144 240h1v1h-1zM149 240h1v1h-1zM154 240h1v1h-1zM159 240h1v1h-1zM164 240h1v1h-1zM169 240h1v1h-1zM174 240h1v1h-1zM179 240h1v1h-1zM184 240h1v1h-1zM189 240h1v1h-1zM194 240h1v1h-1zM199 240h1v1h-1zM204 240h1v1h-1zM209 240h1v1h-1zM214 240h1v1h-1zM219 240h1v1h-1zM224 240h1v1h-1zM229 240h1v1h-1zM234 240h1v1h-1zM239 240h1v1h-1zM244 240h1v1h-1zM249 240h1v1h-1zM254 240h1v1h-1zM259 240h1v1h-1zM264 240h1v1h-1zM269 240h1v1h-1zM274 240h1v1h-1zM279 240h1v1h-1zM284 240h1v1h-1zM289 240h1v1h-1zM294 240h1v1h-1zM299 240h1v1h-1zM304 240h1v1h-1zM309 240h1v1h-1zM314 240h1v1h-1zM319 240h1v1h-1zM324 240h1v1h-1zM329 240h1v1h-1zM334 240h1v1h-1zM339 240h1v1h-1zM344 240h1v1h-1zM349 240h1v1h-1zM354 240h1v1h-1zM359 240h1v1h-1zM364 240h1v1h-1zM369 240h1v1h-1zM374 240h1v1h-1zM379 240h1v1h-1zM384 240h1v1h-1zM389 240h1v1h-1zM394 240h1v1h-1zM399 240h1v1h-1zM404 240h1v1h-1zM409 240h1v1h-1zM414 240h1v1h-1zM419 240h1v1h-1zM424 240h1v1h-1zM429 240h1v1h-1zM434 240h1v1h-1zM439 240h1v1h-1zM444 240h1v1h-1zM449 240h1v1h-1zM454 240h1v1h-1zM459 240h1v1h-1zM464 240h1v1h-1zM469 240h1v1h-1zM474 240h1v1h-1zM479 240h1v1h-1zM484 240h1v1h-1zM489 240h1v1h-1zM494 240h1v1h-1zM499 240h1v1h-1zM504 240h1v1h-1zM509 240h1v1h-1zM514 240h1v1h-1zM519 240h1v1h-1zM524 240h1v1h-1zM529 240h1v1h-1zM534 240h1v1h-1zM539 240h1v1h-1zM544 240h1v1h-1zM549 240h1v1h-1zM554 240h1v1h-1zM559 240h1v1h-1zM564 240h1v1h-1zM569 240h1v1h-1zM574 240h1v1h-1zM579 240h1v1h-1zM584 240h1v1h-1zM589 240h1v1h-1zM594 240h1v1h-1zM599 240h1v1h-1zM604 240h1v1h-1zM609 240h1v1h-1zM614 240h1v1h-1zM619 240h1v1h-1zM624 240h1v1h-1zM629 240h1v1h-1zM634 240h1v1h-1zM639 240h1v1h-1zM644 240h1v1h-1zM649 240h1v1h-1zM654 240h1v1h-1zM659 240h1v1h-1zM664 240h1v1h-1zM669 240h1v1h-1zM674 240h1v1h-1zM679 240h1v1h-1zM684 240h1v1h-1zM689 240h1v1h-1zM694 240h1v1h-1zM699 240h1v1h-1zM704 240h1v1h-1zM709 240h1v1h-1zM714 240h1v1h-1zM719 240h1v1h-1zM724 240h1v1h-1zM729 240h1v1h-1zM734 240h1v1h-1zM739 240h1v1h-1zM744 240h1v1h-1zM749 240h1v1h-1zM754 240h1v1h-1zM759 240h1v1h-1zM764 240h1v1h-1zM769 240h1v1h-1zM774 240h1v1h-1zM779 240h1v1h-1zM784 240h1v1h-1zM789 240h1v1h-1zM794 240h1v1h-1zM799 240h1v1h-1zM804 240h1v1h-1zM809 240h1v1h-1zM814 240h1v1h-1zM819 240h1v1h-1zM824 240h1v1h-1zM829 240h1v1h-1zM834 240h1v1h-1zM839 240h1v1h-1zM844 240h1v1h-1zM849 240h1v1h-1zM854 240h1v1h-1zM859 240h1v1h-1zM864 240h1v1h-1zM869 240h1v1h-1zM874 240h1v1h-1zM879 240h1v1h-1zM884 240h1v1h-1zM889 240h1v1h-1zM894 240h1v1h-1zM899 240h1v1h-1zM904 240h1v1h-1zM909 240h1v1h-1zM914 240h1v1h-1zM919 240h1v1h-1zM924 240h1v1h-1zM929 240h1v1h-1zM934 240h1v1h-1zM939 240h1v1h-1zM944 240h1v1h-1zM949 240h1v1h-1zM954 240h1v1h-1zM959 240h1v1h-1zM964 240h1v1h-1zM969 240h1v1h-1zM974 240h1v1h-1zM979 240h1v1h-1zM984 240h1v1h-1zM989 240h1v1h-1zM994 240h1v1h-1zM999 240h1v1h-1zM1004 240h1v1h-1zM1009 240h1v1h-1zM1014 240h1v1h-1zM24 260h1v1h-1zM29 260h1v1h-1zM34 260h1v1h-1zM39 260h1v1h-1zM44 260h1v1h-1zM49 260h1v1h-1zM54 260h1v1h-1zM59 260h1v1h-1zM64 260h1v1h-1zM69 260h1v1h-1zM74 260h1v1h-1zM79 260h1v1h-1zM84 260h1v1h-1zM89 260h1v1h-1zM94 260h1v1h-1zM99 260h1v1h-1zM104 260h1v1h-1zM109 260h1v1h-1zM114 260h1v1h-1zM119 260h1v1h-1zM124 260h1v1h-1zM129 260h1v1h-1zM134 260h1v1h-1zM139 260h1v1h-1zM144 260h1v1h-1zM149 260h1v1h-1zM154 260h1v1h-1zM159 260h1v1h-1zM164 260h1v1h-1zM169 260h1v1h-1zM174 260h1v1h-1zM179 260h1v1h-1zM184 260h1v1h-1zM189 260h1v1h-1zM194 260h1v1h-1zM199 260h1v1h-1zM204 260h1v1h-1zM209 260h1v1h-1zM214 260h1v1h-1zM219 260h1v1h-1zM224 260h1v1h-1zM229 260h1v1h-1zM234 260h1v1h-1zM239 260h1v1h-1zM244 260h1v1h-1zM249 260h1v1h-1zM254 260h1v1h-1zM259 260h1v1h-1zM264 260h1v1h-1zM269 260h1v1h-1zM274 260h1v1h-1zM279 260h1v1h-1zM284 260h1v1h-1zM289 260h1v1h-1zM294 260h1v1h-1zM299 260h1v1h-1zM304 260h1v1h-1zM309 260h1v1h-1zM314 260h1v1h-1zM319 260h1v1h-1zM324 260h1v1h-1zM329 260h1v1h-1zM334 260h1v1h-1zM339 260h1v1h-1zM344 260h1v1h-1zM349 260h1v1h-1zM354 260h1v1h-1zM359 260h1v1h-1zM364 260h1v1h-1zM369 260h1v1h-1zM374 260h1v1h-1zM379 260h1v1h-1zM384 260h1v1h-1zM389 260h1v1h-1zM394 260h1v1h-1zM399 260h1v1h-1zM404 260h1v1h-1zM409 260h1v1h-1zM414 260h1v1h-1zM419 260h1v1h-1zM424 260h1v1h-1zM429 260h1v1h-1zM434 260h1v1h-1zM439 260h1v1h-1zM444 260h1v1h-1zM449 260h1v1h-1zM454 260h1v1h-1zM459 260h1v1h-1zM464 260h1v1h-1zM469 260h1v1h-1zM474 260h1v1h-1zM479 260h1v1h-1zM484 260h1v1h-1zM489 260h1v1h-1zM494 260h1v1h-1zM499 260h1v1h-1zM504 260h1v1h-1zM509 260h1v1h-1zM514 260h1v1h-1zM519 260h1v1h-1zM524 260h1v1h-1zM529 260h1v1h-1zM534 260h1v1h-1zM539 260h1v1h-1zM544 260h1v1h-1zM549 260h1v1h-1zM554 260h1v1h-1zM559 260h1v1h-1zM564 260h1v1h-1zM569 260h1v1h-1zM574 260h1v1h-1zM579 260h1v1h-1zM584 260h1v1h-1zM589 260h1v1h-1zM594 260h1v1h-1zM599 260h1v1h-1zM604 260h1v1h-1zM609 260h1v1h-1zM614 260h1v1h-1zM619 260h1v1h-1zM624 260h1v1h-1zM629 260h1v1h-1zM634 260h1v1h-1zM639 260h1v1h-1zM644 260h1v1h-1zM649 260h1v1h-1zM654 260h1v1h-1zM659 260h1v1h-1zM664 260h1v1h-1zM669 260h1v1h-1zM674 260h1v1h-1zM679 260h1v1h-1zM684 260h1v1h-1zM689 260h1v1h-1zM694 260h1v1h-1zM699 260h1v1h-1zM704 260h1v1h-1zM709 260h1v1h-1zM714 260h1v1h-1zM719 260h1v1h-1zM724 260h1v1h-1zM729 260h1v1h-1zM734 260h1v1h-1zM739 260h1v1h-1zM744 260h1v1h-1zM749 260h1v1h-1zM754 260h1v1h-1zM759 260h1v1h-1zM764 260h1v1h-1zM769 260h1v1h-1zM774 260h1v1h-1zM779 260h1v1h-1zM784 260h1v1h-1zM789 260h1v1h-1zM794 260h1v1h-1zM799 260h1v1h-1zM804 260h1v1h-1zM809 260h1v1h-1zM814 260h1v1h-1zM819 260h1v1h-1zM824 260h1v1h-1zM829 260h1v1h-1zM834 260h1v1h-1zM839 260h1v1h-1zM844 260h1v1h-1zM849 260h1v1h-1zM854 260h1v1h-1zM859 260h1v1h-1zM864 260h1v1h-1zM869 260h1v1h-1zM874 260h1v1h-1zM879 260h1v1h-1zM884 260h1v1h-1zM889 260h1v1h-1zM894 260h1v1h-1zM899 260h1v1h-1zM904 260h1v1h-1zM909 260h1v1h-1zM914 260h1v1h-1zM919 260h1v1h-1zM924 260h1v1h-1zM929 260h1v1h-1zM934 260h1v1h-1zM939 260h1v1h-1zM944 260h1v1h-1zM949 260h1v1h-1zM954 260h1v1h-1zM959 260h1v1h-1zM964 260h1v1h-1zM969 260h1v1h-1zM974 260h1v1h-1zM979 260h1v1h-1zM984 260h1v1h-1zM989 260h1v1h-1zM994 260h1v1h-1zM999 260h1v1h-1zM1004 260h1v1h-1zM1009 260h1v1h-1zM1014 260h1v1h-1zM24 280h1v1h-1zM29 280h1v1h-1zM34 280h1v1h-1zM39 280h1v1h-1zM44 280h1v1h-1zM49 280h1v1h-1zM54 280h1v1h-1zM59 280h1v1h-1zM64 280h1v1h-1zM69 280h1v1h-1zM74 280h1v1h-1zM79 280h1v1h-1zM84 280h1v1h-1zM89 280h1v1h-1zM94 280h1v1h-1zM99 280h1v1h-1zM104 280h1v1h-1zM109 280h1v1h-1zM114 280h1v1h-1zM119 280h1v1h-1zM124 280h1v1h-1zM129 280h1v1h-1zM134 280h1v1h-1zM139 280h1v1h-1zM144 280h1v1h-1zM149 280h1v1h-1zM154 280h1v1h-1zM159 280h1v1h-1zM164 280h1v1h-1zM169 280h1v1h-1zM174 280h1v1h-1zM179 280h1v1h-1zM184 280h1v1h-1zM189 280h1v1h-1zM194 280h1v1h-1zM199 280h1v1h-1zM204 280h1v1h-1zM209 280h1v1h-1zM214 280h1v1h-1zM219 280h1v1h-1zM224 280h1v1h-1zM229 280h1v1h-1zM234 280h1v1h-1zM239 280h1v1h-1zM244 280h1v1h-1zM249 280h1v1h-1zM254 280h1v1h-1zM259 280h1v1h-1zM264 280h1v1h-1zM269 280h1v1h-1zM274 280h1v1h-1zM279 280h1v1h-1zM284 280h1v1h-1zM289 280h1v1h-1zM294 280h1v1h-1zM299 280h1v1h-1zM304 280h1v1h-1zM309 280h1v1h-1zM314 280h1v1h-1zM319 280h1v1h-1zM324 280h1v1h-1zM329 280h1v1h-1zM334 280h1v1h-1zM339 280h1v1h-1zM344 280h1v1h-1zM349 280h1v1h-1zM354 280h1v1h-1zM359 280h1v1h-1zM364 280h1v1h-1zM369 280h1v1h-1zM374 280h1v1h-1zM379 280h1v1h-1zM384 280h1v1h-1zM389 280h1v1h-1zM394 280h1v1h-1zM399 280h1v1h-1zM404 280h1v1h-1zM409 280h1v1h-1zM414 280h1v1h-1zM419 280h1v1h-1zM424 280h1v1h-1zM429 280h1v1h-1zM434 280h1v1h-1zM439 280h1v1h-1zM444 280h1v1h-1zM449 280h1v1h-1zM454 280h1v1h-1zM459 280h1v1h-1zM464 280h1v1h-1zM469 280h1v1h-1zM474 280h1v1h-1zM479 280h1v1h-1zM484 280h1v1h-1zM489 280h1v1h-1zM494 280h1v1h-1zM499 280h1v1h-1zM504 280h1v1h-1zM509 280h1v1h-1zM514 280h1v1h-1zM519 280h1v1h-1zM524 280h1v1h-1zM529 280h1v1h-1zM534 280h1v1h-1zM539 280h1v1h-1zM544 280h1v1h-1zM549 280h1v1h-1zM554 280h1v1h-1zM559 280h1v1h-1zM564 280h1v1h-1zM569 280h1v1h-1zM574 280h1v1h-1zM579 280h1v1h-1zM584 280h1v1h-1zM589 280h1v1h-1zM594 280h1v1h-1zM599 280h1v1h-1zM604 280h1v1h-1zM609 280h1v1h-1zM614 280h1v1h-1zM619 280h1v1h-1zM624 280h1v1h-1zM629 280h1v1h-1zM634 280h1v1h-1zM639 280h1v1h-1zM644 280h1v1h-1zM649 280h1v1h-1zM654 280h1v1h-1zM659 280h1v1h-1zM664 280h1v1h-1zM669 280h1v1h-1zM674 280h1v1h-1zM679 280h1v1h-1zM684 280h1v1h-1zM689 280h1v1h-1zM694 280h1v1h-1zM699 280h1v1h-1zM704 280h1v1h-1zM709 280h1v1h-1zM714 280h1v1h-1zM719 280h1v1h-1zM724 280h1v1h-1zM729 280h1v1h-1zM734 280h1v1h-1zM739 280h1v1h-1zM744 280h1v1h-1zM749 280h1v1h-1zM754 280h1v1h-1zM759 280h1v1h-1zM764 280h1v1h-1zM769 280h1v1h-1zM774 280h1v1h-1zM779 280h1v1h-1zM784 280h1v1h-1zM789 280h1v1h-1zM794 280h1v1h-1zM799 280h1v1h-1zM804 280h1v1h-1zM809 280h1v1h-1zM814 280h1v1h-1zM819 280h1v1h-1zM824 280h1v1h-1zM829 280h1v1h-1zM834 280h1v1h-1zM839 280h1v1h-1zM844 280h1v1h-1zM849 280h1v1h-1zM854 280h1v1h-1zM859 280h1v1h-1zM864 280h1v1h-1zM869 280h1v1h-1zM874 280h1v1h-1zM879 280h1v1h-1zM884 280h1v1h-1zM889 280h1v1h-1zM894 280h1v1h-1zM899 280h1v1h-1zM904 280h1v1h-1zM909 280h1v1h-1zM914 280h1v1h-1zM919 280h1v1h-1zM924 280h1v1h-1zM929 280h1v1h-1zM934 280h1v1h-1zM939 280h1v1h-1zM944 280h1v1h-1zM949 280h1v1h-1zM954 280h1v1h-1zM959 280h1v1h-1zM964 280h1v1h-1zM969 280h1v1h-1zM974 280h1v1h-1zM979 280h1v1h-1zM984 280h1v1h-1zM989 280h1v1h-1zM994 280h1v1h-1zM999 280h1v1h-1zM1004 280h1v1h-1zM1009 280h1v1h-1zM1014 280h1v1h-1zM24 300h1v1h-1zM29 300h1v1h-1zM34 300h1v1h-1zM39 300h1v1h-1zM44 300h1v1h-1zM49 300h1v1h-1zM54 300h1v1h-1zM59 300h1v1h-1zM64 300h1v1h-1zM69 300h1v1h-1zM74 300h1v1h-1zM79 300h1v1h-1zM84 300h1v1h-1zM89 300h1v1h-1zM94 300h1v1h-1zM99 300h1v1h-1zM104 300h1v1h-1zM109 300h1v1h-1zM114 300h1v1h-1zM119 300h1v1h-1zM124 300h1v1h-1zM129 300h1v1h-1zM134 300h1v1h-1zM139 300h1v1h-1zM144 300h1v1h-1zM149 300h1v1h-1zM154 300h1v1h-1zM159 300h1v1h-1zM164 300h1v1h-1zM169 300h1v1h-1zM174 300h1v1h-1zM179 300h1v1h-1zM184 300h1v1h-1zM189 300h1v1h-1zM194 300h1v1h-1zM199 300h1v1h-1zM204 300h1v1h-1zM209 300h1v1h-1zM214 300h1v1h-1zM219 300h1v1h-1zM224 300h1v1h-1zM229 300h1v1h-1zM234 300h1v1h-1zM239 300h1v1h-1zM244 300h1v1h-1zM249 300h1v1h-1zM254 300h1v1h-1zM259 300h1v1h-1zM264 300h1v1h-1zM269 300h1v1h-1zM274 300h1v1h-1zM279 300h1v1h-1zM284 300h1v1h-1zM289 300h1v1h-1zM294 300h1v1h-1zM299 300h1v1h-1zM304 300h1v1h-1zM309 300h1v1h-1zM314 300h1v1h-1zM319 300h1v1h-1zM324 300h1v1h-1zM329 300h1v1h-1zM334 300h1v1h-1zM339 300h1v1h-1zM344 300h1v1h-1zM349 300h1v1h-1zM354 300h1v1h-1zM359 300h1v1h-1zM364 300h1v1h-1zM369 300h1v1h-1zM374 300h1v1h-1zM379 300h1v1h-1zM384 300h1v1h-1zM389 300h1v1h-1zM394 300h1v1h-1zM399 300h1v1h-1zM404 300h1v1h-1zM409 300h1v1h-1zM414 300h1v1h-1zM419 300h1v1h-1zM424 300h1v1h-1zM429 300h1v1h-1zM434 300h1v1h-1zM439 300h1v1h-1zM444 300h1v1h-1zM449 300h1v1h-1zM454 300h1v1h-1zM459 300h1v1h-1zM464 300h1v1h-1zM469 300h1v1h-1zM474 300h1v1h-1zM479 300h1v1h-1zM484 300h1v1h-1zM489 300h1v1h-1zM494 300h1v1h-1zM499 300h1v1h-1zM504 300h1v1h-1zM509 300h1v1h-1zM514 300h1v1h-1zM519 300h1v1h-1zM524 300h1v1h-1zM529 300h1v1h-1zM534 300h1v1h-1zM539 300h1v1h-1zM544 300h1v1h-1zM549 300h1v1h-1zM554 300h1v1h-1zM559 300h1v1h-1zM564 300h1v1h-1zM569 300h1v1h-1zM574 300h1v1h-1zM579 300h1v1h-1zM584 300h1v1h-1zM589 300h1v1h-1zM594 300h1v1h-1zM599 300h1v1h-1zM604 300h1v1h-1zM609 300h1v1h-1zM614 300h1v1h-1zM619 300h1v1h-1zM624 300h1v1h-1zM629 300h1v1h-1zM634 300h1v1h-1zM639 300h1v1h-1zM644 300h1v1h-1zM649 300h1v1h-1zM654 300h1v1h-1zM659 300h1v1h-1zM664 300h1v1h-1zM669 300h1v1h-1zM674 300h1v1h-1zM679 300h1v1h-1zM684 300h1v1h-1zM689 300h1v1h-1zM694 300h1v1h-1zM699 300h1v1h-1zM704 300h1v1h-1zM709 300h1v1h-1zM714 300h1v1h-1zM719 300h1v1h-1zM724 300h1v1h-1zM729 300h1v1h-1zM734 300h1v1h-1zM739 300h1v1h-1zM744 300h1v1h-1zM749 300h1v1h-1zM754 300h1v1h-1zM759 300h1v1h-1zM764 300h1v1h-1zM769 300h1v1h-1zM774 300h1v1h-1zM779 300h1v1h-1zM784 300h1v1h-1zM789 300h1v1h-1zM794 300h1v1h-1zM799 300h1v1h-1zM804 300h1v1h-1zM809 300h1v1h-1zM814 300h1v1h-1zM819 300h1v1h-1zM824 300h1v1h-1zM829 300h1v1h-1zM834 300h1v1h-1zM839 300h1v1h-1zM844 300h1v1h-1zM849 300h1v1h-1zM854 300h1v1h-1zM859 300h1v1h-1zM864 300h1v1h-1zM869 300h1v1h-1zM874 300h1v1h-1zM879 300h1v1h-1zM884 300h1v1h-1zM889 300h1v1h-1zM894 300h1v1h-1zM899 300h1v1h-1zM904 300h1v1h-1zM909 300h1v1h-1zM914 300h1v1h-1zM919 300h1v1h-1zM924 300h1v1h-1zM929 300h1v1h-1zM934 300h1v1h-1zM939 300h1v1h-1zM944 300h1v1h-1zM949 300h1v1h-1zM954 300h1v1h-1zM959 300h1v1h-1zM964 300h1v1h-1zM969 300h1v1h-1zM974 300h1v1h-1zM979 300h1v1h-1zM984 300h1v1h-1zM989 300h1v1h-1zM994 300h1v1h-1zM999 300h1v1h-1zM1004 300h1v1h-1zM1009 300h1v1h-1zM1014 300h1v1h-1zM24 320h1v1h-1zM29 320h1v1h-1zM34 320h1v1h-1zM39 320h1v1h-1zM44 320h1v1h-1zM49 320h1v1h-1zM54 320h1v1h-1zM59 320h1v1h-1zM64 320h1v1h-1zM69 320h1v1h-1zM74 320h1v1h-1zM79 320h1v1h-1zM84 320h1v1h-1zM89 320h1v1h-1zM94 320h1v1h-1zM99 320h1v1h-1zM104 320h1v1h-1zM109 320h1v1h-1zM114 320h1v1h-1zM119 320h1v1h-1zM124 320h1v1h-1zM129 320h1v1h-1zM134 320h1v1h-1zM139 320h1v1h-1zM144 320h1v1h-1zM149 320h1v1h-1zM154 320h1v1h-1zM159 320h1v1h-1zM164 320h1v1h-1zM169 320h1v1h-1zM174 320h1v1h-1zM179 320h1v1h-1zM184 320h1v1h-1zM189 320h1v1h-1zM194 320h1v1h-1zM199 320h1v1h-1zM204 320h1v1h-1zM209 320h1v1h-1zM214 320h1v1h-1zM219 320h1v1h-1zM224 320h1v1h-1zM229 320h1v1h-1zM234 320h1v1h-1zM239 320h1v1h-1zM244 320h1v1h-1zM249 320h1v1h-1zM254 320h1v1h-1zM259 320h1v1h-1zM264 320h1v1h-1zM269 320h1v1h-1zM274 320h1v1h-1zM279 320h1v1h-1zM284 320h1v1h-1zM289 320h1v1h-1zM294 320h1v1h-1zM299 320h1v1h-1zM304 320h1v1h-1zM309 320h1v1h-1zM314 320h1v1h-1zM319 320h1v1h-1zM324 320h1v1h-1zM329 320h1v1h-1zM334 320h1v1h-1zM339 320h1v1h-1zM344 320h1v1h-1zM349 320h1v1h-1zM354 320h1v1h-1zM359 320h1v1h-1zM364 320h1v1h-1zM369 320h1v1h-1zM374 320h1v1h-1zM379 320h1v1h-1zM384 320h1v1h-1zM389 320h1v1h-1zM394 320h1v1h-1zM399 320h1v1h-1zM404 320h1v1h-1zM409 320h1v1h-1zM414 320h1v1h-1zM419 320h1v1h-1zM424 320h1v1h-1zM429 320h1v1h-1zM434 320h1v1h-1zM439 320h1v1h-1zM444 320h1v1h-1zM449 320h1v1h-1zM454 320h1v1h-1zM459 320h1v1h-1zM464 320h1v1h-1zM469 320h1v1h-1zM474 320h1v1h-1zM479 320h1v1h-1zM484 320h1v1h-1zM489 320h1v1h-1zM494 320h1v1h-1zM499 320h1v1h-1zM504 320h1v1h-1zM509 320h1v1h-1zM514 320h1v1h-1zM519 320h1v1h-1zM524 320h1v1h-1zM529 320h1v1h-1zM534 320h1v1h-1zM539 320h1v1h-1zM544 320h1v1h-1zM549 320h1v1h-1zM554 320h1v1h-1zM559 320h1v1h-1zM564 320h1v1h-1zM569 320h1v1h-1zM574 320h1v1h-1zM579 320h1v1h-1zM584 320h1v1h-1zM589 320h1v1h-1zM594 320h1v1h-1zM599 320h1v1h-1zM604 320h1v1h-1zM609 320h1v1h-1zM614 320h1v1h-1zM619 320h1v1h-1zM624 320h1v1h-1zM629 320h1v1h-1zM634 320h1v1h-1zM639 320h1v1h-1zM644 320h1v1h-1zM649 320h1v1h-1zM654 320h1v1h-1zM659 320h1v1h-1zM664 320h1v1h-1zM669 320h1v1h-1zM674 320h1v1h-1zM679 320h1v1h-1zM684 320h1v1h-1zM689 320h1v1h-1zM694 320h1v1h-1zM699 320h1v1h-1zM704 320h1v1h-1zM709 320h1v1h-1zM714 320h1v1h-1zM719 320h1v1h-1zM724 320h1v1h-1zM729 320h1v1h-1zM734 320h1v1h-1zM739 320h1v1h-1zM744 320h1v1h-1zM749 320h1v1h-1zM754 320h1v1h-1zM759 320h1v1h-1zM764 320h1v1h-1zM769 320h1v1h-1zM774 320h1v1h-1zM779 320h1v1h-1zM784 320h1v1h-1zM789 320h1v1h-1zM794 320h1v1h-1zM799 320h1v1h-1zM804 320h1v1h-1zM809 320h1v1h-1zM814 320h1v1h-1zM819 320h1v1h-1zM824 320h1v1h-1zM829 320h1v1h-1zM834 320h1v1h-1zM839 320h1v1h-1zM844 320h1v1h-1zM849 320h1v1h-1zM854 320h1v1h-1zM859 320h1v1h-1zM864 320h1v1h-1zM869 320h1v1h-1zM874 320h1v1h-1zM879 320h1v1h-1zM884 320h1v1h-1zM889 320h1v1h-1zM894 320h1v1h-1zM899 320h1v1h-1zM904 320h1v1h-1zM909 320h1v1h-1zM914 320h1v1h-1zM919 320h1v1h-1zM924 320h1v1h-1zM929 320h1v1h-1zM934 320h1v1h-1zM939 320h1v1h-1zM944 320h1v1h-1zM949 320h1v1h-1zM954 320h1v1h-1zM959 320h1v1h-1zM964 320h1v1h-1zM969 320h1v1h-1zM974 320h1v1h-1zM979 320h1v1h-1zM984 320h1v1h-1zM989 320h1v1h-1zM994 320h1v1h-1zM999 320h1v1h-1zM1004 320h1v1h-1zM1009 320h1v1h-1zM1014 320h1v1h-1zM24 360h1v1h-1zM29 360h1v1h-1zM34 360h1v1h-1zM39 360h1v1h-1zM44 360h1v1h-1zM49 360h1v1h-1zM54 360h1v1h-1zM59 360h1v1h-1zM64 360h1v1h-1zM69 360h1v1h-1zM74 360h1v1h-1zM79 360h1v1h-1zM84 360h1v1h-1zM89 360h1v1h-1zM94 360h1v1h-1zM99 360h1v1h-1zM104 360h1v1h-1zM109 360h1v1h-1zM114 360h1v1h-1zM119 360h1v1h-1zM124 360h1v1h-1zM129 360h1v1h-1zM134 360h1v1h-1zM139 360h1v1h-1zM144 360h1v1h-1zM149 360h1v1h-1zM154 360h1v1h-1zM159 360h1v1h-1zM164 360h1v1h-1zM169 360h1v1h-1zM174 360h1v1h-1zM179 360h1v1h-1zM184 360h1v1h-1zM189 360h1v1h-1zM194 360h1v1h-1zM199 360h1v1h-1zM204 360h1v1h-1zM209 360h1v1h-1zM214 360h1v1h-1zM219 360h1v1h-1zM224 360h1v1h-1zM229 360h1v1h-1zM234 360h1v1h-1zM239 360h1v1h-1zM244 360h1v1h-1zM249 360h1v1h-1zM254 360h1v1h-1zM259 360h1v1h-1zM264 360h1v1h-1zM269 360h1v1h-1zM274 360h1v1h-1zM279 360h1v1h-1zM284 360h1v1h-1zM289 360h1v1h-1zM294 360h1v1h-1zM299 360h1v1h-1zM304 360h1v1h-1zM309 360h1v1h-1zM314 360h1v1h-1zM319 360h1v1h-1zM324 360h1v1h-1zM329 360h1v1h-1zM334 360h1v1h-1zM339 360h1v1h-1zM344 360h1v1h-1zM349 360h1v1h-1zM354 360h1v1h-1zM359 360h1v1h-1zM364 360h1v1h-1zM369 360h1v1h-1zM374 360h1v1h-1zM379 360h1v1h-1zM384 360h1v1h-1zM389 360h1v1h-1zM394 360h1v1h-1zM399 360h1v1h-1zM404 360h1v1h-1zM409 360h1v1h-1zM414 360h1v1h-1zM419 360h1v1h-1zM424 360h1v1h-1zM429 360h1v1h-1zM434 360h1v1h-1zM439 360h1v1h-1zM444 360h1v1h-1zM449 360h1v1h-1zM454 360h1v1h-1zM459 360h1v1h-1zM464 360h1v1h-1zM469 360h1v1h-1zM474 360h1v1h-1zM479 360h1v1h-1zM484 360h1v1h-1zM489 360h1v1h-1zM494 360h1v1h-1zM499 360h1v1h-1zM504 360h1v1h-1zM509 360h1v1h-1zM514 360h1v1h-1zM519 360h1v1h-1zM524 360h1v1h-1zM529 360h1v1h-1zM534 360h1v1h-1zM539 360h1v1h-1zM544 360h1v1h-1zM549 360h1v1h-1zM554 360h1v1h-1zM559 360h1v1h-1zM564 360h1v1h-1zM569 360h1v1h-1zM574 360h1v1h-1zM579 360h1v1h-1zM584 360h1v1h-1zM589 360h1v1h-1zM594 360h1v1h-1zM599 360h1v1h-1zM604 360h1v1h-1zM609 360h1v1h-1zM614 360h1v1h-1zM619 360h1v1h-1zM624 360h1v1h-1zM629 360h1v1h-1zM634 360h1v1h-1zM639 360h1v1h-1zM644 360h1v1h-1zM649 360h1v1h-1zM654 360h1v1h-1zM659 360h1v1h-1zM664 360h1v1h-1zM669 360h1v1h-1zM674 360h1v1h-1zM679 360h1v1h-1zM684 360h1v1h-1zM689 360h1v1h-1zM694 360h1v1h-1zM699 360h1v1h-1zM704 360h1v1h-1zM709 360h1v1h-1zM714 360h1v1h-1zM719 360h1v1h-1zM724 360h1v1h-1zM729 360h1v1h-1zM734 360h1v1h-1zM739 360h1v1h-1zM744 360h1v1h-1zM749 360h1v1h-1zM754 360h1v1h-1zM759 360h1v1h-1zM764 360h1v1h-1zM769 360h1v1h-1zM774 360h1v1h-1zM779 360h1v1h-1zM784 360h1v1h-1zM789 360h1v1h-1zM794 360h1v1h-1zM799 360h1v1h-1zM804 360h1v1h-1zM809 360h1v1h-1zM814 360h1v1h-1zM819 360h1v1h-1zM824 360h1v1h-1zM829 360h1v1h-1zM834 360h1v1h-1zM839 360h1v1h-1zM844 360h1v1h-1zM849 360h1v1h-1zM854 360h1v1h-1zM859 360h1v1h-1zM864 360h1v1h-1zM869 360h1v1h-1zM874 360h1v1h-1zM879 360h1v1h-1zM884 360h1v1h-1zM889 360h1v1h-1zM894 360h1v1h-1zM899 360h1v1h-1zM904 360h1v1h-1zM909 360h1v1h-1zM914 360h1v1h-1zM919 360h1v1h-1zM924 360h1v1h-1zM929 360h1v1h-1zM934 360h1v1h-1zM939 360h1v1h-1zM944 360h1v1h-1zM949 360h1v1h-1zM954 360h1v1h-1zM959 360h1v1h-1zM964 360h1v1h-1zM969 360h1v1h-1zM974 360h1v1h-1zM979 360h1v1h-1zM984 360h1v1h-1zM989 360h1v1h-1zM994 360h1v1h-1zM999 360h1v1h-1zM1004 360h1v1h-1zM1009 360h1v1h-1zM1014 360h1v1h-1zM24 380h1v1h-1zM29 380h1v1h-1zM34 380h1v1h-1zM39 380h1v1h-1zM44 380h1v1h-1zM49 380h1v1h-1zM54 380h1v1h-1zM59 380h1v1h-1zM64 380h1v1h-1zM69 380h1v1h-1zM74 380h1v1h-1zM79 380h1v1h-1zM84 380h1v1h-1zM89 380h1v1h-1zM94 380h1v1h-1zM99 380h1v1h-1zM104 380h1v1h-1zM109 380h1v1h-1zM114 380h1v1h-1zM119 380h1v1h-1zM124 380h1v1h-1zM129 380h1v1h-1zM134 380h1v1h-1zM139 380h1v1h-1zM144 380h1v1h-1zM149 380h1v1h-1zM154 380h1v1h-1zM159 380h1v1h-1zM164 380h1v1h-1zM169 380h1v1h-1zM174 380h1v1h-1zM179 380h1v1h-1zM184 380h1v1h-1zM189 380h1v1h-1zM194 380h1v1h-1zM199 380h1v1h-1zM204 380h1v1h-1zM209 380h1v1h-1zM214 380h1v1h-1zM219 380h1v1h-1zM224 380h1v1h-1zM229 380h1v1h-1zM234 380h1v1h-1zM239 380h1v1h-1zM244 380h1v1h-1zM249 380h1v1h-1zM254 380h1v1h-1zM259 380h1v1h-1zM264 380h1v1h-1zM269 380h1v1h-1zM274 380h1v1h-1zM279 380h1v1h-1zM284 380h1v1h-1zM289 380h1v1h-1zM294 380h1v1h-1zM299 380h1v1h-1zM304 380h1v1h-1zM309 380h1v1h-1zM314 380h1v1h-1zM319 380h1v1h-1zM324 380h1v1h-1zM329 380h1v1h-1zM334 380h1v1h-1zM339 380h1v1h-1zM344 380h1v1h-1zM349 380h1v1h-1zM354 380h1v1h-1zM359 380h1v1h-1zM364 380h1v1h-1zM369 380h1v1h-1zM374 380h1v1h-1zM379 380h1v1h-1zM384 380h1v1h-1zM389 380h1v1h-1zM394 380h1v1h-1zM399 380h1v1h-1zM404 380h1v1h-1zM409 380h1v1h-1zM414 380h1v1h-1zM419 380h1v1h-1zM424 380h1v1h-1zM429 380h1v1h-1zM434 380h1v1h-1zM439 380h1v1h-1zM444 380h1v1h-1zM449 380h1v1h-1zM454 380h1v1h-1zM459 380h1v1h-1zM464 380h1v1h-1zM469 380h1v1h-1zM474 380h1v1h-1zM479 380h1v1h-1zM484 380h1v1h-1zM489 380h1v1h-1zM494 380h1v1h-1zM499 380h1v1h-1zM504 380h1v1h-1zM509 380h1v1h-1zM514 380h1v1h-1zM519 380h1v1h-1zM524 380h1v1h-1zM529 380h1v1h-1zM534 380h1v1h-1zM539 380h1v1h-1zM544 380h1v1h-1zM549 380h1v1h-1zM554 380h1v1h-1zM559 380h1v1h-1zM564 380h1v1h-1zM569 380h1v1h-1zM574 380h1v1h-1zM579 380h1v1h-1zM584 380h1v1h-1zM589 380h1v1h-1zM594 380h1v1h-1zM599 380h1v1h-1zM604 380h1v1h-1zM609 380h1v1h-1zM614 380h1v1h-1zM619 380h1v1h-1zM624 380h1v1h-1zM629 380h1v1h-1zM634 380h1v1h-1zM639 380h1v1h-1zM644 380h1v1h-1zM649 380h1v1h-1zM654 380h1v1h-1zM659 380h1v1h-1zM664 380h1v1h-1zM669 380h1v1h-1zM674 380h1v1h-1zM679 380h1v1h-1zM684 380h1v1h-1zM689 380h1v1h-1zM694 380h1v1h-1zM699 380h1v1h-1zM704 380h1v1h-1zM709 380h1v1h-1zM714 380h1v1h-1zM719 380h1v1h-1zM724 380h1v1h-1zM729 380h1v1h-1zM734 380h1v1h-1zM739 380h1v1h-1zM744 380h1v1h-1zM749 380h1v1h-1zM754 380h1v1h-1zM759 380h1v1h-1zM764 380h1v1h-1zM769 380h1v1h-1zM774 380h1v1h-1zM779 380h1v1h-1zM784 380h1v1h-1zM789 380h1v1h-1zM794 380h1v1h-1zM799 380h1v1h-1zM804 380h1v1h-1zM809 380h1v1h-1zM814 380h1v1h-1zM819 380h1v1h-1zM824 380h1v1h-1zM829 380h1v1h-1zM834 380h1v1h-1zM839 380h1v1h-1zM844 380h1v1h-1zM849 380h1v1h-1zM854 380h1v1h-1zM859 380h1v1h-1zM864 380h1v1h-1zM869 380h1v1h-1zM874 380h1v1h-1zM879 380h1v1h-1zM884 380h1v1h-1zM889 380h1v1h-1zM894 380h1v1h-1zM899 380h1v1h-1zM904 380h1v1h-1zM909 380h1v1h-1zM914 380h1v1h-1zM919 380h1v1h-1zM924 380h1v1h-1zM929 380h1v1h-1zM934 380h1v1h-1zM939 380h1v1h-1zM944 380h1v1h-1zM949 380h1v1h-1zM954 380h1v1h-1zM959 380h1v1h-1zM964 380h1v1h-1zM969 380h1v1h-1zM974 380h1v1h-1zM979 380h1v1h-1zM984 380h1v1h-1zM989 380h1v1h-1zM994 380h1v1h-1zM999 380h1v1h-1zM1004 380h1v1h-1zM1009 380h1v1h-1zM1014 380h1v1h-1zM24 400h1v1h-1zM29 400h1v1h-1zM34 400h1v1h-1zM39 400h1v1h-1zM44 400h1v1h-1zM49 400h1v1h-1zM54 400h1v1h-1zM59 400h1v1h-1zM64 400h1v1h-1zM69 400h1v1h-1zM74 400h1v1h-1zM79 400h1v1h-1zM84 400h1v1h-1zM89 400h1v1h-1zM94 400h1v1h-1zM99 400h1v1h-1zM104 400h1v1h-1zM109 400h1v1h-1zM114 400h1v1h-1zM119 400h1v1h-1zM124 400h1v1h-1zM129 400h1v1h-1zM134 400h1v1h-1zM139 400h1v1h-1zM144 400h1v1h-1zM149 400h1v1h-1zM154 400h1v1h-1zM159 400h1v1h-1zM164 400h1v1h-1zM169 400h1v1h-1zM174 400h1v1h-1zM179 400h1v1h-1zM184 400h1v1h-1zM189 400h1v1h-1zM194 400h1v1h-1zM199 400h1v1h-1zM204 400h1v1h-1zM209 400h1v1h-1zM214 400h1v1h-1zM219 400h1v1h-1zM224 400h1v1h-1zM229 400h1v1h-1zM234 400h1v1h-1zM239 400h1v1h-1zM244 400h1v1h-1zM249 400h1v1h-1zM254 400h1v1h-1zM259 400h1v1h-1zM264 400h1v1h-1zM269 400h1v1h-1zM274 400h1v1h-1zM279 400h1v1h-1zM284 400h1v1h-1zM289 400h1v1h-1zM294 400h1v1h-1zM299 400h1v1h-1zM304 400h1v1h-1zM309 400h1v1h-1zM314 400h1v1h-1zM319 400h1v1h-1zM324 400h1v1h-1zM329 400h1v1h-1zM334 400h1v1h-1zM339 400h1v1h-1zM344 400h1v1h-1zM349 400h1v1h-1zM354 400h1v1h-1zM359 400h1v1h-1zM364 400h1v1h-1zM369 400h1v1h-1zM374 400h1v1h-1zM379 400h1v1h-1zM384 400h1v1h-1zM389 400h1v1h-1zM394 400h1v1h-1zM399 400h1v1h-1zM404 400h1v1h-1zM409 400h1v1h-1zM414 400h1v1h-1zM419 400h1v1h-1zM424 400h1v1h-1zM429 400h1v1h-1zM434 400h1v1h-1zM439 400h1v1h-1zM444 400h1v1h-1zM449 400h1v1h-1zM454 400h1v1h-1zM459 400h1v1h-1zM464 400h1v1h-1zM469 400h1v1h-1zM474 400h1v1h-1zM479 400h1v1h-1zM484 400h1v1h-1zM489 400h1v1h-1zM494 400h1v1h-1zM499 400h1v1h-1zM504 400h1v1h-1zM509 400h1v1h-1zM514 400h1v1h-1zM519 400h1v1h-1zM524 400h1v1h-1zM529 400h1v1h-1zM534 400h1v1h-1zM539 400h1v1h-1zM544 400h1v1h-1zM549 400h1v1h-1zM554 400h1v1h-1zM559 400h1v1h-1zM564 400h1v1h-1zM569 400h1v1h-1zM574 400h1v1h-1zM579 400h1v1h-1zM584 400h1v1h-1zM589 400h1v1h-1zM594 400h1v1h-1zM599 400h1v1h-1zM604 400h1v1h-1zM609 400h1v1h-1zM614 400h1v1h-1zM619 400h1v1h-1zM624 400h1v1h-1zM629 400h1v1h-1zM634 400h1v1h-1zM639 400h1v1h-1zM644 400h1v1h-1zM649 400h1v1h-1zM654 400h1v1h-1zM659 400h1v1h-1zM664 400h1v1h-1zM669 400h1v1h-1zM674 400h1v1h-1zM679 400h1v1h-1zM684 400h1v1h-1zM689 400h1v1h-1zM694 400h1v1h-1zM699 400h1v1h-1zM704 400h1v1h-1zM709 400h1v1h-1zM714 400h1v1h-1zM719 400h1v1h-1zM724 400h1v1h-1zM729 400h1v1h-1zM734 400h1v1h-1zM739 400h1v1h-1zM744 400h1v1h-1zM749 400h1v1h-1zM754 400h1v1h-1zM759 400h1v1h-1zM764 400h1v1h-1zM769 400h1v1h-1zM774 400h1v1h-1zM779 400h1v1h-1zM784 400h1v1h-1zM789 400h1v1h-1zM794 400h1v1h-1zM799 400h1v1h-1zM804 400h1v1h-1zM809 400h1v1h-1zM814 400h1v1h-1zM819 400h1v1h-1zM824 400h1v1h-1zM829 400h1v1h-1zM834 400h1v1h-1zM839 400h1v1h-1zM844 400h1v1h-1zM849 400h1v1h-1zM854 400h1v1h-1zM859 400h1v1h-1zM864 400h1v1h-1zM869 400h1v1h-1zM874 400h1v1h-1zM879 400h1v1h-1zM884 400h1v1h-1zM889 400h1v1h-1zM894 400h1v1h-1zM899 400h1v1h-1zM904 400h1v1h-1zM909 400h1v1h-1zM914 400h1v1h-1zM919 400h1v1h-1zM924 400h1v1h-1zM929 400h1v1h-1zM934 400h1v1h-1zM939 400h1v1h-1zM944 400h1v1h-1zM949 400h1v1h-1zM954 400h1v1h-1zM959 400h1v1h-1zM964 400h1v1h-1zM969 400h1v1h-1zM974 400h1v1h-1zM979 400h1v1h-1zM984 400h1v1h-1zM989 400h1v1h-1zM994 400h1v1h-1zM999 400h1v1h-1zM1004 400h1v1h-1zM1009 400h1v1h-1zM1014 400h1v1h-1zM24 420h1v1h-1zM29 420h1v1h-1zM34 420h1v1h-1zM39 420h1v1h-1zM44 420h1v1h-1zM49 420h1v1h-1zM54 420h1v1h-1zM59 420h1v1h-1zM64 420h1v1h-1zM69 420h1v1h-1zM74 420h1v1h-1zM79 420h1v1h-1zM84 420h1v1h-1zM89 420h1v1h-1zM94 420h1v1h-1zM99 420h1v1h-1zM104 420h1v1h-1zM109 420h1v1h-1zM114 420h1v1h-1zM119 420h1v1h-1zM124 420h1v1h-1zM129 420h1v1h-1zM134 420h1v1h-1zM139 420h1v1h-1zM144 420h1v1h-1zM149 420h1v1h-1zM154 420h1v1h-1zM159 420h1v1h-1zM164 420h1v1h-1zM169 420h1v1h-1zM174 420h1v1h-1zM179 420h1v1h-1zM184 420h1v1h-1zM189 420h1v1h-1zM194 420h1v1h-1zM199 420h1v1h-1zM204 420h1v1h-1zM209 420h1v1h-1zM214 420h1v1h-1zM219 420h1v1h-1zM224 420h1v1h-1zM229 420h1v1h-1zM234 420h1v1h-1zM239 420h1v1h-1zM244 420h1v1h-1zM249 420h1v1h-1zM254 420h1v1h-1zM259 420h1v1h-1zM264 420h1v1h-1zM269 420h1v1h-1zM274 420h1v1h-1zM279 420h1v1h-1zM284 420h1v1h-1zM289 420h1v1h-1zM294 420h1v1h-1zM299 420h1v1h-1zM304 420h1v1h-1zM309 420h1v1h-1zM314 420h1v1h-1zM319 420h1v1h-1zM324 420h1v1h-1zM329 420h1v1h-1zM334 420h1v1h-1zM339 420h1v1h-1zM344 420h1v1h-1zM349 420h1v1h-1zM354 420h1v1h-1zM359 420h1v1h-1zM364 420h1v1h-1zM369 420h1v1h-1zM374 420h1v1h-1zM379 420h1v1h-1zM384 420h1v1h-1zM389 420h1v1h-1zM394 420h1v1h-1zM399 420h1v1h-1zM404 420h1v1h-1zM409 420h1v1h-1zM414 420h1v1h-1zM419 420h1v1h-1zM424 420h1v1h-1zM429 420h1v1h-1zM434 420h1v1h-1zM439 420h1v1h-1zM444 420h1v1h-1zM449 420h1v1h-1zM454 420h1v1h-1zM459 420h1v1h-1zM464 420h1v1h-1zM469 420h1v1h-1zM474 420h1v1h-1zM479 420h1v1h-1zM484 420h1v1h-1zM489 420h1v1h-1zM494 420h1v1h-1zM499 420h1v1h-1zM504 420h1v1h-1zM509 420h1v1h-1zM514 420h1v1h-1zM519 420h1v1h-1zM524 420h1v1h-1zM529 420h1v1h-1zM534 420h1v1h-1zM539 420h1v1h-1zM544 420h1v1h-1zM549 420h1v1h-1zM554 420h1v1h-1zM559 420h1v1h-1zM564 420h1v1h-1zM569 420h1v1h-1zM574 420h1v1h-1zM579 420h1v1h-1zM584 420h1v1h-1zM589 420h1v1h-1zM594 420h1v1h-1zM599 420h1v1h-1zM604 420h1v1h-1zM609 420h1v1h-1zM614 420h1v1h-1zM619 420h1v1h-1zM624 420h1v1h-1zM629 420h1v1h-1zM634 420h1v1h-1zM639 420h1v1h-1zM644 420h1v1h-1zM649 420h1v1h-1zM654 420h1v1h-1zM659 420h1v1h-1zM664 420h1v1h-1zM669 420h1v1h-1zM674 420h1v1h-1zM679 420h1v1h-1zM684 420h1v1h-1zM689 420h1v1h-1zM694 420h1v1h-1zM699 420h1v1h-1zM704 420h1v1h-1zM709 420h1v1h-1zM714 420h1v1h-1zM719 420h1v1h-1zM724 420h1v1h-1zM729 420h1v1h-1zM734 420h1v1h-1zM739 420h1v1h-1zM744 420h1v1h-1zM749 420h1v1h-1zM754 420h1v1h-1zM759 420h1v1h-1zM764 420h1v1h-1zM769 420h1v1h-1zM774 420h1v1h-1zM779 420h1v1h-1zM784 420h1v1h-1zM789 420h1v1h-1zM794 420h1v1h-1zM799 420h1v1h-1zM804 420h1v1h-1zM809 420h1v1h-1zM814 420h1v1h-1zM819 420h1v1h-1zM824 420h1v1h-1zM829 420h1v1h-1zM834 420h1v1h-1zM839 420h1v1h-1zM844 420h1v1h-1zM849 420h1v1h-1zM854 420h1v1h-1zM859 420h1v1h-1zM864 420h1v1h-1zM869 420h1v1h-1zM874 420h1v1h-1zM879 420h1v1h-1zM884 420h1v1h-1zM889 420h1v1h-1zM894 420h1v1h-1zM899 420h1v1h-1zM904 420h1v1h-1zM909 420h1v1h-1zM914 420h1v1h-1zM919 420h1v1h-1zM924 420h1v1h-1zM929 420h1v1h-1zM934 420h1v1h-1zM939 420h1v1h-1zM944 420h1v1h-1zM949 420h1v1h-1zM954 420h1v1h-1zM959 420h1v1h-1zM964 420h1v1h-1zM969 420h1v1h-1zM974 420h1v1h-1zM979 420h1v1h-1zM984 420h1v1h-1zM989 420h1v1h-1zM994 420h1v1h-1zM999 420h1v1h-1zM1004 420h1v1h-1zM1009 420h1v1h-1zM1014 420h1v1h-1zM24 440h1v1h-1zM29 440h1v1h-1zM34 440h1v1h-1zM39 440h1v1h-1zM44 440h1v1h-1zM49 440h1v1h-1zM54 440h1v1h-1zM59 440h1v1h-1zM64 440h1v1h-1zM69 440h1v1h-1zM74 440h1v1h-1zM79 440h1v1h-1zM84 440h1v1h-1zM89 440h1v1h-1zM94 440h1v1h-1zM99 440h1v1h-1zM104 440h1v1h-1zM109 440h1v1h-1zM114 440h1v1h-1zM119 440h1v1h-1zM124 440h1v1h-1zM129 440h1v1h-1zM134 440h1v1h-1zM139 440h1v1h-1zM144 440h1v1h-1zM149 440h1v1h-1zM154 440h1v1h-1zM159 440h1v1h-1zM164 440h1v1h-1zM169 440h1v1h-1zM174 440h1v1h-1zM179 440h1v1h-1zM184 440h1v1h-1zM189 440h1v1h-1zM194 440h1v1h-1zM199 440h1v1h-1zM204 440h1v1h-1zM209 440h1v1h-1zM214 440h1v1h-1zM219 440h1v1h-1zM224 440h1v1h-1zM229 440h1v1h-1zM234 440h1v1h-1zM239 440h1v1h-1zM244 440h1v1h-1zM249 440h1v1h-1zM254 440h1v1h-1zM259 440h1v1h-1zM264 440h1v1h-1zM269 440h1v1h-1zM274 440h1v1h-1zM279 440h1v1h-1zM284 440h1v1h-1zM289 440h1v1h-1zM294 440h1v1h-1zM299 440h1v1h-1zM304 440h1v1h-1zM309 440h1v1h-1zM314 440h1v1h-1zM319 440h1v1h-1zM324 440h1v1h-1zM329 440h1v1h-1zM334 440h1v1h-1zM339 440h1v1h-1zM344 440h1v1h-1zM349 440h1v1h-1zM354 440h1v1h-1zM359 440h1v1h-1zM364 440h1v1h-1zM369 440h1v1h-1zM374 440h1v1h-1zM379 440h1v1h-1zM384 440h1v1h-1zM389 440h1v1h-1zM394 440h1v1h-1zM399 440h1v1h-1zM404 440h1v1h-1zM409 440h1v1h-1zM414 440h1v1h-1zM419 440h1v1h-1zM424 440h1v1h-1zM429 440h1v1h-1zM434 440h1v1h-1zM439 440h1v1h-1zM444 440h1v1h-1zM449 440h1v1h-1zM454 440h1v1h-1zM459 440h1v1h-1zM464 440h1v1h-1zM469 440h1v1h-1zM474 440h1v1h-1zM479 440h1v1h-1zM484 440h1v1h-1zM489 440h1v1h-1zM494 440h1v1h-1zM499 440h1v1h-1zM504 440h1v1h-1zM509 440h1v1h-1zM514 440h1v1h-1zM519 440h1v1h-1zM524 440h1v1h-1zM529 440h1v1h-1zM534 440h1v1h-1zM539 440h1v1h-1zM544 440h1v1h-1zM549 440h1v1h-1zM554 440h1v1h-1zM559 440h1v1h-1zM564 440h1v1h-1zM569 440h1v1h-1zM574 440h1v1h-1zM579 440h1v1h-1zM584 440h1v1h-1zM589 440h1v1h-1zM594 440h1v1h-1zM599 440h1v1h-1zM604 440h1v1h-1zM609 440h1v1h-1zM614 440h1v1h-1zM619 440h1v1h-1zM624 440h1v1h-1zM629 440h1v1h-1zM634 440h1v1h-1zM639 440h1v1h-1zM644 440h1v1h-1zM649 440h1v1h-1zM654 440h1v1h-1zM659 440h1v1h-1zM664 440h1v1h-1zM669 440h1v1h-1zM674 440h1v1h-1zM679 440h1v1h-1zM684 440h1v1h-1zM689 440h1v1h-1zM694 440h1v1h-1zM699 440h1v1h-1zM704 440h1v1h-1zM709 440h1v1h-1zM714 440h1v1h-1zM719 440h1v1h-1zM724 440h1v1h-1zM729 440h1v1h-1zM734 440h1v1h-1zM739 440h1v1h-1zM744 440h1v1h-1zM749 440h1v1h-1zM754 440h1v1h-1zM759 440h1v1h-1zM764 440h1v1h-1zM769 440h1v1h-1zM774 440h1v1h-1zM779 440h1v1h-1zM784 440h1v1h-1zM789 440h1v1h-1zM794 440h1v1h-1zM799 440h1v1h-1zM804 440h1v1h-1zM809 440h1v1h-1zM814 440h1v1h-1zM819 440h1v1h-1zM824 440h1v1h-1zM829 440h1v1h-1zM834 440h1v1h-1zM839 440h1v1h-1zM844 440h1v1h-1zM849 440h1v1h-1zM854 440h1v1h-1zM859 440h1v1h-1zM864 440h1v1h-1zM869 440h1v1h-1zM874 440h1v1h-1zM879 440h1v1h-1zM884 440h1v1h-1zM889 440h1v1h-1zM894 440h1v1h-1zM899 440h1v1h-1zM904 440h1v1h-1zM909 440h1v1h-1zM914 440h1v1h-1zM919 440h1v1h-1zM924 440h1v1h-1zM929 440h1v1h-1zM934 440h1v1h-1zM939 440h1v1h-1zM944 440h1v1h-1zM949 440h1v1h-1zM954 440h1v1h-1zM959 440h1v1h-1zM964 440h1v1h-1zM969 440h1v1h-1zM974 440h1v1h-1zM979 440h1v1h-1zM984 440h1v1h-1zM989 440h1v1h-1zM994 440h1v1h-1zM999 440h1v1h-1zM1004 440h1v1h-1zM1009 440h1v1h-1zM1014 440h1v1h-1zM24 460h1v1h-1zM29 460h1v1h-1zM34 460h1v1h-1zM39 460h1v1h-1zM44 460h1v1h-1zM49 460h1v1h-1zM54 460h1v1h-1zM59 460h1v1h-1zM64 460h1v1h-1zM69 460h1v1h-1zM74 460h1v1h-1zM79 460h1v1h-1zM84 460h1v1h-1zM89 460h1v1h-1zM94 460h1v1h-1zM99 460h1v1h-1zM104 460h1v1h-1zM109 460h1v1h-1zM114 460h1v1h-1zM119 460h1v1h-1zM124 460h1v1h-1zM129 460h1v1h-1zM134 460h1v1h-1zM139 460h1v1h-1zM144 460h1v1h-1zM149 460h1v1h-1zM154 460h1v1h-1zM159 460h1v1h-1zM164 460h1v1h-1zM169 460h1v1h-1zM174 460h1v1h-1zM179 460h1v1h-1zM184 460h1v1h-1zM189 460h1v1h-1zM194 460h1v1h-1zM199 460h1v1h-1zM204 460h1v1h-1zM209 460h1v1h-1zM214 460h1v1h-1zM219 460h1v1h-1zM224 460h1v1h-1zM229 460h1v1h-1zM234 460h1v1h-1zM239 460h1v1h-1zM244 460h1v1h-1zM249 460h1v1h-1zM254 460h1v1h-1zM259 460h1v1h-1zM264 460h1v1h-1zM269 460h1v1h-1zM274 460h1v1h-1zM279 460h1v1h-1zM284 460h1v1h-1zM289 460h1v1h-1zM294 460h1v1h-1zM299 460h1v1h-1zM304 460h1v1h-1zM309 460h1v1h-1zM314 460h1v1h-1zM319 460h1v1h-1zM324 460h1v1h-1zM329 460h1v1h-1zM334 460h1v1h-1zM339 460h1v1h-1zM344 460h1v1h-1zM349 460h1v1h-1zM354 460h1v1h-1zM359 460h1v1h-1zM364 460h1v1h-1zM369 460h1v1h-1zM374 460h1v1h-1zM379 460h1v1h-1zM384 460h1v1h-1zM389 460h1v1h-1zM394 460h1v1h-1zM399 460h1v1h-1zM404 460h1v1h-1zM409 460h1v1h-1zM414 460h1v1h-1zM419 460h1v1h-1zM424 460h1v1h-1zM429 460h1v1h-1zM434 460h1v1h-1zM439 460h1v1h-1zM444 460h1v1h-1zM449 460h1v1h-1zM454 460h1v1h-1zM459 460h1v1h-1zM464 460h1v1h-1zM469 460h1v1h-1zM474 460h1v1h-1zM479 460h1v1h-1zM484 460h1v1h-1zM489 460h1v1h-1zM494 460h1v1h-1zM499 460h1v1h-1zM504 460h1v1h-1zM509 460h1v1h-1zM514 460h1v1h-1zM519 460h1v1h-1zM524 460h1v1h-1zM529 460h1v1h-1zM534 460h1v1h-1zM539 460h1v1h-1zM544 460h1v1h-1zM549 460h1v1h-1zM554 460h1v1h-1zM559 460h1v1h-1zM564 460h1v1h-1zM569 460h1v1h-1zM574 460h1v1h-1zM579 460h1v1h-1zM584 460h1v1h-1zM589 460h1v1h-1zM594 460h1v1h-1zM599 460h1v1h-1zM604 460h1v1h-1zM609 460h1v1h-1zM614 460h1v1h-1zM619 460h1v1h-1zM624 460h1v1h-1zM629 460h1v1h-1zM634 460h1v1h-1zM639 460h1v1h-1zM644 460h1v1h-1zM649 460h1v1h-1zM654 460h1v1h-1zM659 460h1v1h-1zM664 460h1v1h-1zM669 460h1v1h-1zM674 460h1v1h-1zM679 460h1v1h-1zM684 460h1v1h-1zM689 460h1v1h-1zM694 460h1v1h-1zM699 460h1v1h-1zM704 460h1v1h-1zM709 460h1v1h-1zM714 460h1v1h-1zM719 460h1v1h-1zM724 460h1v1h-1zM729 460h1v1h-1zM734 460h1v1h-1zM739 460h1v1h-1zM744 460h1v1h-1zM749 460h1v1h-1zM754 460h1v1h-1zM759 460h1v1h-1zM764 460h1v1h-1zM769 460h1v1h-1zM774 460h1v1h-1zM779 460h1v1h-1zM784 460h1v1h-1zM789 460h1v1h-1zM794 460h1v1h-1zM799 460h1v1h-1zM804 460h1v1h-1zM809 460h1v1h-1zM814 460h1v1h-1zM819 460h1v1h-1zM824 460h1v1h-1zM829 460h1v1h-1zM834 460h1v1h-1zM839 460h1v1h-1zM844 460h1v1h-1zM849 460h1v1h-1zM854 460h1v1h-1zM859 460h1v1h-1zM864 460h1v1h-1zM869 460h1v1h-1zM874 460h1v1h-1zM879 460h1v1h-1zM884 460h1v1h-1zM889 460h1v1h-1zM894 460h1v1h-1zM899 460h1v1h-1zM904 460h1v1h-1zM909 460h1v1h-1zM914 460h1v1h-1zM919 460h1v1h-1zM924 460h1v1h-1zM929 460h1v1h-1zM934 460h1v1h-1zM939 460h1v1h-1zM944 460h1v1h-1zM949 460h1v1h-1zM954 460h1v1h-1zM959 460h1v1h-1zM964 460h1v1h-1zM969 460h1v1h-1zM974 460h1v1h-1zM979 460h1v1h-1zM984 460h1v1h-1zM989 460h1v1h-1zM994 460h1v1h-1zM999 460h1v1h-1zM1004 460h1v1h-1zM1009 460h1v1h-1zM1014 460h1v1h-1zM24 480h1v1h-1zM29 480h1v1h-1zM34 480h1v1h-1zM39 480h1v1h-1zM44 480h1v1h-1zM49 480h1v1h-1zM54 480h1v1h-1zM59 480h1v1h-1zM64 480h1v1h-1zM69 480h1v1h-1zM74 480h1v1h-1zM79 480h1v1h-1zM84 480h1v1h-1zM89 480h1v1h-1zM94 480h1v1h-1zM99 480h1v1h-1zM104 480h1v1h-1zM109 480h1v1h-1zM114 480h1v1h-1zM119 480h1v1h-1zM124 480h1v1h-1zM129 480h1v1h-1zM134 480h1v1h-1zM139 480h1v1h-1zM144 480h1v1h-1zM149 480h1v1h-1zM154 480h1v1h-1zM159 480h1v1h-1zM164 480h1v1h-1zM169 480h1v1h-1zM174 480h1v1h-1zM179 480h1v1h-1zM184 480h1v1h-1zM189 480h1v1h-1zM194 480h1v1h-1zM199 480h1v1h-1zM204 480h1v1h-1zM209 480h1v1h-1zM214 480h1v1h-1zM219 480h1v1h-1zM224 480h1v1h-1zM229 480h1v1h-1zM234 480h1v1h-1zM239 480h1v1h-1zM244 480h1v1h-1zM249 480h1v1h-1zM254 480h1v1h-1zM259 480h1v1h-1zM264 480h1v1h-1zM269 480h1v1h-1zM274 480h1v1h-1zM279 480h1v1h-1zM284 480h1v1h-1zM289 480h1v1h-1zM294 480h1v1h-1zM299 480h1v1h-1zM304 480h1v1h-1zM309 480h1v1h-1zM314 480h1v1h-1zM319 480h1v1h-1zM324 480h1v1h-1zM329 480h1v1h-1zM334 480h1v1h-1zM339 480h1v1h-1zM344 480h1v1h-1zM349 480h1v1h-1zM354 480h1v1h-1zM359 480h1v1h-1zM364 480h1v1h-1zM369 480h1v1h-1zM374 480h1v1h-1zM379 480h1v1h-1zM384 480h1v1h-1zM389 480h1v1h-1zM394 480h1v1h-1zM399 480h1v1h-1zM404 480h1v1h-1zM409 480h1v1h-1zM414 480h1v1h-1zM419 480h1v1h-1zM424 480h1v1h-1zM429 480h1v1h-1zM434 480h1v1h-1zM439 480h1v1h-1zM444 480h1v1h-1zM449 480h1v1h-1zM454 480h1v1h-1zM459 480h1v1h-1zM464 480h1v1h-1zM469 480h1v1h-1zM474 480h1v1h-1zM479 480h1v1h-1zM484 480h1v1h-1zM489 480h1v1h-1zM494 480h1v1h-1zM499 480h1v1h-1zM504 480h1v1h-1zM509 480h1v1h-1zM514 480h1v1h-1zM519 480h1v1h-1zM524 480h1v1h-1zM529 480h1v1h-1zM534 480h1v1h-1zM539 480h1v1h-1zM544 480h1v1h-1zM549 480h1v1h-1zM554 480h1v1h-1zM559 480h1v1h-1zM564 480h1v1h-1zM569 480h1v1h-1zM574 480h1v1h-1zM579 480h1v1h-1zM584 480h1v1h-1zM589 480h1v1h-1zM594 480h1v1h-1zM599 480h1v1h-1zM604 480h1v1h-1zM609 480h1v1h-1zM614 480h1v1h-1zM619 480h1v1h-1zM624 480h1v1h-1zM629 480h1v1h-1zM634 480h1v1h-1zM639 480h1v1h-1zM644 480h1v1h-1zM649 480h1v1h-1zM654 480h1v1h-1zM659 480h1v1h-1zM664 480h1v1h-1zM669 480h1v1h-1zM674 480h1v1h-1zM679 480h1v1h-1zM684 480h1v1h-1zM689 480h1v1h-1zM694 480h1v1h-1zM699 480h1v1h-1zM704 480h1v1h-1zM709 480h1v1h-1zM714 480h1v1h-1zM719 480h1v1h-1zM724 480h1v1h-1zM729 480h1v1h-1zM734 480h1v1h-1zM739 480h1v1h-1zM744 480h1v1h-1zM749 480h1v1h-1zM754 480h1v1h-1zM759 480h1v1h-1zM764 480h1v1h-1zM769 480h1v1h-1zM774 480h1v1h-1zM779 480h1v1h-1zM784 480h1v1h-1zM789 480h1v1h-1zM794 480h1v1h-1zM799 480h1v1h-1zM804 480h1v1h-1zM809 480h1v1h-1zM814 480h1v1h-1zM819 480h1v1h-1zM824 480h1v1h-1zM829 480h1v1h-1zM834 480h1v1h-1zM839 480h1v1h-1zM844 480h1v1h-1zM849 480h1v1h-1zM854 480h1v1h-1zM859 480h1v1h-1zM864 480h1v1h-1zM869 480h1v1h-1zM874 480h1v1h-1zM879 480h1v1h-1zM884 480h1v1h-1zM889 480h1v1h-1zM894 480h1v1h-1zM899 480h1v1h-1zM904 480h1v1h-1zM909 480h1v1h-1zM914 480h1v1h-1zM919 480h1v1h-1zM924 480h1v1h-1zM929 480h1v1h-1zM934 480h1v1h-1zM939 480h1v1h-1zM944 480h1v1h-1zM949 480h1v1h-1zM954 480h1v1h-1zM959 480h1v1h-1zM964 480h1v1h-1zM969 480h1v1h-1zM974 480h1v1h-1zM979 480h1v1h-1zM984 480h1v1h-1zM989 480h1v1h-1zM994 480h1v1h-1zM999 480h1v1h-1zM1004 480h1v1h-1zM1009 480h1v1h-1zM1014 480h1v1h-1zM24 520h1v1h-1zM29 520h1v1h-1zM34 520h1v1h-1zM39 520h1v1h-1zM44 520h1v1h-1zM49 520h1v1h-1zM54 520h1v1h-1zM59 520h1v1h-1zM64 520h1v1h-1zM69 520h1v1h-1zM74 520h1v1h-1zM79 520h1v1h-1zM84 520h1v1h-1zM89 520h1v1h-1zM94 520h1v1h-1zM99 520h1v1h-1zM104 520h1v1h-1zM109 520h1v1h-1zM114 520h1v1h-1zM119 520h1v1h-1zM124 520h1v1h-1zM129 520h1v1h-1zM134 520h1v1h-1zM139 520h1v1h-1zM144 520h1v1h-1zM149 520h1v1h-1zM154 520h1v1h-1zM159 520h1v1h-1zM164 520h1v1h-1zM169 520h1v1h-1zM174 520h1v1h-1zM179 520h1v1h-1zM184 520h1v1h-1zM189 520h1v1h-1zM194 520h1v1h-1zM199 520h1v1h-1zM204 520h1v1h-1zM209 520h1v1h-1zM214 520h1v1h-1zM219 520h1v1h-1zM224 520h1v1h-1zM229 520h1v1h-1zM234 520h1v1h-1zM239 520h1v1h-1zM244 520h1v1h-1zM249 520h1v1h-1zM254 520h1v1h-1zM259 520h1v1h-1zM264 520h1v1h-1zM269 520h1v1h-1zM274 520h1v1h-1zM279 520h1v1h-1zM284 520h1v1h-1zM289 520h1v1h-1zM294 520h1v1h-1zM299 520h1v1h-1zM304 520h1v1h-1zM309 520h1v1h-1zM314 520h1v1h-1zM319 520h1v1h-1zM324 520h1v1h-1zM329 520h1v1h-1zM334 520h1v1h-1zM339 520h1v1h-1zM344 520h1v1h-1zM349 520h1v1h-1zM354 520h1v1h-1zM359 520h1v1h-1zM364 520h1v1h-1zM369 520h1v1h-1zM374 520h1v1h-1zM379 520h1v1h-1zM384 520h1v1h-1zM389 520h1v1h-1zM394 520h1v1h-1zM399 520h1v1h-1zM404 520h1v1h-1zM409 520h1v1h-1zM414 520h1v1h-1zM419 520h1v1h-1zM424 520h1v1h-1zM429 520h1v1h-1zM434 520h1v1h-1zM439 520h1v1h-1zM444 520h1v1h-1zM449 520h1v1h-1zM454 520h1v1h-1zM459 520h1v1h-1zM464 520h1v1h-1zM469 520h1v1h-1zM474 520h1v1h-1zM479 520h1v1h-1zM484 520h1v1h-1zM489 520h1v1h-1zM494 520h1v1h-1zM499 520h1v1h-1zM504 520h1v1h-1zM509 520h1v1h-1zM514 520h1v1h-1zM519 520h1v1h-1zM524 520h1v1h-1zM529 520h1v1h-1zM534 520h1v1h-1zM539 520h1v1h-1zM544 520h1v1h-1zM549 520h1v1h-1zM554 520h1v1h-1zM559 520h1v1h-1zM564 520h1v1h-1zM569 520h1v1h-1zM574 520h1v1h-1zM579 520h1v1h-1zM584 520h1v1h-1zM589 520h1v1h-1zM594 520h1v1h-1zM599 520h1v1h-1zM604 520h1v1h-1zM609 520h1v1h-1zM614 520h1v1h-1zM619 520h1v1h-1zM624 520h1v1h-1zM629 520h1v1h-1zM634 520h1v1h-1zM639 520h1v1h-1zM644 520h1v1h-1zM649 520h1v1h-1zM654 520h1v1h-1zM659 520h1v1h-1zM664 520h1v1h-1zM669 520h1v1h-1zM674 520h1v1h-1zM679 520h1v1h-1zM684 520h1v1h-1zM689 520h1v1h-1zM694 520h1v1h-1zM699 520h1v1h-1zM704 520h1v1h-1zM709 520h1v1h-1zM714 520h1v1h-1zM719 520h1v1h-1zM724 520h1v1h-1zM729 520h1v1h-1zM734 520h1v1h-1zM739 520h1v1h-1zM744 520h1v1h-1zM749 520h1v1h-1zM754 520h1v1h-1zM759 520h1v1h-1zM764 520h1v1h-1zM769 520h1v1h-1zM774 520h1v1h-1zM779 520h1v1h-1zM784 520h1v1h-1zM789 520h1v1h-1zM794 520h1v1h-1zM799 520h1v1h-1zM804 520h1v1h-1zM809 520h1v1h-1zM814 520h1v1h-1zM819 520h1v1h-1zM824 520h1v1h-1zM829 520h1v1h-1zM834 520h1v1h-1zM839 520h1v1h-1zM844 520h1v1h-1zM849 520h1v1h-1zM854 520h1v1h-1zM859 520h1v1h-1zM864 520h1v1h-1zM869 520h1v1h-1zM874 520h1v1h-1zM879 520h1v1h-1zM884 520h1v1h-1zM889 520h1v1h-1zM894 520h1v1h-1zM899 520h1v1h-1zM904 520h1v1h-1zM909 520h1v1h-1zM914 520h1v1h-1zM919 520h1v1h-1zM924 520h1v1h-1zM929 520h1v1h-1zM934 520h1v1h-1zM939 520h1v1h-1zM944 520h1v1h-1zM949 520h1v1h-1zM954 520h1v1h-1zM959 520h1v1h-1zM964 520h1v1h-1zM969 520h1v1h-1zM974 520h1v1h-1zM979 520h1v1h-1zM984 520h1v1h-1zM989 520h1v1h-1zM994 520h1v1h-1zM999 520h1v1h-1zM1004 520h1v1h-1zM1009 520h1v1h-1zM1014 520h1v1h-1zM24 540h1v1h-1zM29 540h1v1h-1zM34 540h1v1h-1zM39 540h1v1h-1zM44 540h1v1h-1zM49 540h1v1h-1zM54 540h1v1h-1zM59 540h1v1h-1zM64 540h1v1h-1zM69 540h1v1h-1zM74 540h1v1h-1zM79 540h1v1h-1zM84 540h1v1h-1zM89 540h1v1h-1zM94 540h1v1h-1zM99 540h1v1h-1zM104 540h1v1h-1zM109 540h1v1h-1zM114 540h1v1h-1zM119 540h1v1h-1zM124 540h1v1h-1zM129 540h1v1h-1zM134 540h1v1h-1zM139 540h1v1h-1zM144 540h1v1h-1zM149 540h1v1h-1zM154 540h1v1h-1zM159 540h1v1h-1zM164 540h1v1h-1zM169 540h1v1h-1zM174 540h1v1h-1zM179 540h1v1h-1zM184 540h1v1h-1zM189 540h1v1h-1zM194 540h1v1h-1zM199 540h1v1h-1zM204 540h1v1h-1zM209 540h1v1h-1zM214 540h1v1h-1zM219 540h1v1h-1zM224 540h1v1h-1zM229 540h1v1h-1zM234 540h1v1h-1zM239 540h1v1h-1zM244 540h1v1h-1zM249 540h1v1h-1zM254 540h1v1h-1zM259 540h1v1h-1zM264 540h1v1h-1zM269 540h1v1h-1zM274 540h1v1h-1zM279 540h1v1h-1zM284 540h1v1h-1zM289 540h1v1h-1zM294 540h1v1h-1zM299 540h1v1h-1zM304 540h1v1h-1zM309 540h1v1h-1zM314 540h1v1h-1zM319 540h1v1h-1zM324 540h1v1h-1zM329 540h1v1h-1zM334 540h1v1h-1zM339 540h1v1h-1zM344 540h1v1h-1zM349 540h1v1h-1zM354 540h1v1h-1zM359 540h1v1h-1zM364 540h1v1h-1zM369 540h1v1h-1zM374 540h1v1h-1zM379 540h1v1h-1zM384 540h1v1h-1zM389 540h1v1h-1zM394 540h1v1h-1zM399 540h1v1h-1zM404 540h1v1h-1zM409 540h1v1h-1zM414 540h1v1h-1zM419 540h1v1h-1zM424 540h1v1h-1zM429 540h1v1h-1zM434 540h1v1h-1zM439 540h1v1h-1zM444 540h1v1h-1zM449 540h1v1h-1zM454 540h1v1h-1zM459 540h1v1h-1zM464 540h1v1h-1zM469 540h1v1h-1zM474 540h1v1h-1zM479 540h1v1h-1zM484 540h1v1h-1zM489 540h1v1h-1zM494 540h1v1h-1zM499 540h1v1h-1zM504 540h1v1h-1zM509 540h1v1h-1zM514 540h1v1h-1zM519 540h1v1h-1zM524 540h1v1h-1zM529 540h1v1h-1zM534 540h1v1h-1zM539 540h1v1h-1zM544 540h1v1h-1zM549 540h1v1h-1zM554 540h1v1h-1zM559 540h1v1h-1zM564 540h1v1h-1zM569 540h1v1h-1zM574 540h1v1h-1zM579 540h1v1h-1zM584 540h1v1h-1zM589 540h1v1h-1zM594 540h1v1h-1zM599 540h1v1h-1zM604 540h1v1h-1zM609 540h1v1h-1zM614 540h1v1h-1zM619 540h1v1h-1zM624 540h1v1h-1zM629 540h1v1h-1zM634 540h1v1h-1zM639 540h1v1h-1zM644 540h1v1h-1zM649 540h1v1h-1zM654 540h1v1h-1zM659 540h1v1h-1zM664 540h1v1h-1zM669 540h1v1h-1zM674 540h1v1h-1zM679 540h1v1h-1zM684 540h1v1h-1zM689 540h1v1h-1zM694 540h1v1h-1zM699 540h1v1h-1zM704 540h1v1h-1zM709 540h1v1h-1zM714 540h1v1h-1zM719 540h1v1h-1zM724 540h1v1h-1zM729 540h1v1h-1zM734 540h1v1h-1zM739 540h1v1h-1zM744 540h1v1h-1zM749 540h1v1h-1zM754 540h1v1h-1zM759 540h1v1h-1zM764 540h1v1h-1zM769 540h1v1h-1zM774 540h1v1h-1zM779 540h1v1h-1zM784 540h1v1h-1zM789 540h1v1h-1zM794 540h1v1h-1zM799 540h1v1h-1zM804 540h1v1h-1zM809 540h1v1h-1zM814 540h1v1h-1zM819 540h1v1h-1zM824 540h1v1h-1zM829 540h1v1h-1zM834 540h1v1h-1zM839 540h1v1h-1zM844 540h1v1h-1zM849 540h1v1h-1zM854 540h1v1h-1zM859 540h1v1h-1zM864 540h1v1h-1zM869 540h1v1h-1zM874 540h1v1h-1zM879 540h1v1h-1zM884 540h1v1h-1zM889 540h1v1h-1zM894 540h1v1h-1zM899 540h1v1h-1zM904 540h1v1h-1zM909 540h1v1h-1zM914 540h1v1h-1zM919 540h1v1h-1zM924 540h1v1h-1zM929 540h1v1h-1zM934 540h1v1h-1zM939 540h1v1h-1zM944 540h1v1h-1zM949 540h1v1h-1zM954 540h1v1h-1zM959 540h1v1h-1zM964 540h1v1h-1zM969 540h1v1h-1zM974 540h1v1h-1zM979 540h1v1h-1zM984 540h1v1h-1zM989 540h1v1h-1zM994 540h1v1h-1zM999 540h1v1h-1zM1004 540h1v1h-1zM1009 540h1v1h-1zM1014 540h1v1h-1zM24 560h1v1h-1zM29 560h1v1h-1zM34 560h1v1h-1zM39 560h1v1h-1zM44 560h1v1h-1zM49 560h1v1h-1zM54 560h1v1h-1zM59 560h1v1h-1zM64 560h1v1h-1zM69 560h1v1h-1zM74 560h1v1h-1zM79 560h1v1h-1zM84 560h1v1h-1zM89 560h1v1h-1zM94 560h1v1h-1zM99 560h1v1h-1zM104 560h1v1h-1zM109 560h1v1h-1zM114 560h1v1h-1zM119 560h1v1h-1zM124 560h1v1h-1zM129 560h1v1h-1zM134 560h1v1h-1zM139 560h1v1h-1zM144 560h1v1h-1zM149 560h1v1h-1zM154 560h1v1h-1zM159 560h1v1h-1zM164 560h1v1h-1zM169 560h1v1h-1zM174 560h1v1h-1zM179 560h1v1h-1zM184 560h1v1h-1zM189 560h1v1h-1zM194 560h1v1h-1zM199 560h1v1h-1zM204 560h1v1h-1zM209 560h1v1h-1zM214 560h1v1h-1zM219 560h1v1h-1zM224 560h1v1h-1zM229 560h1v1h-1zM234 560h1v1h-1zM239 560h1v1h-1zM244 560h1v1h-1zM249 560h1v1h-1zM254 560h1v1h-1zM259 560h1v1h-1zM264 560h1v1h-1zM269 560h1v1h-1zM274 560h1v1h-1zM279 560h1v1h-1zM284 560h1v1h-1zM289 560h1v1h-1zM294 560h1v1h-1zM299 560h1v1h-1zM304 560h1v1h-1zM309 560h1v1h-1zM314 560h1v1h-1zM319 560h1v1h-1zM324 560h1v1h-1zM329 560h1v1h-1zM334 560h1v1h-1zM339 560h1v1h-1zM344 560h1v1h-1zM349 560h1v1h-1zM354 560h1v1h-1zM359 560h1v1h-1zM364 560h1v1h-1zM369 560h1v1h-1zM374 560h1v1h-1zM379 560h1v1h-1zM384 560h1v1h-1zM389 560h1v1h-1zM394 560h1v1h-1zM399 560h1v1h-1zM404 560h1v1h-1zM409 560h1v1h-1zM414 560h1v1h-1zM419 560h1v1h-1zM424 560h1v1h-1zM429 560h1v1h-1zM434 560h1v1h-1zM439 560h1v1h-1zM444 560h1v1h-1zM449 560h1v1h-1zM454 560h1v1h-1zM459 560h1v1h-1zM464 560h1v1h-1zM469 560h1v1h-1zM474 560h1v1h-1zM479 560h1v1h-1zM484 560h1v1h-1zM489 560h1v1h-1zM494 560h1v1h-1zM499 560h1v1h-1zM504 560h1v1h-1zM509 560h1v1h-1zM514 560h1v1h-1zM519 560h1v1h-1zM524 560h1v1h-1zM529 560h1v1h-1zM534 560h1v1h-1zM539 560h1v1h-1zM544 560h1v1h-1zM549 560h1v1h-1zM554 560h1v1h-1zM559 560h1v1h-1zM564 560h1v1h-1zM569 560h1v1h-1zM574 560h1v1h-1zM579 560h1v1h-1zM584 560h1v1h-1zM589 560h1v1h-1zM594 560h1v1h-1zM599 560h1v1h-1zM604 560h1v1h-1zM609 560h1v1h-1zM614 560h1v1h-1zM619 560h1v1h-1zM624 560h1v1h-1zM629 560h1v1h-1zM634 560h1v1h-1zM639 560h1v1h-1zM644 560h1v1h-1zM649 560h1v1h-1zM654 560h1v1h-1zM659 560h1v1h-1zM664 560h1v1h-1zM669 560h1v1h-1zM674 560h1v1h-1zM679 560h1v1h-1zM684 560h1v1h-1zM689 560h1v1h-1zM694 560h1v1h-1zM699 560h1v1h-1zM704 560h1v1h-1zM709 560h1v1h-1zM714 560h1v1h-1zM719 560h1v1h-1zM724 560h1v1h-1zM729 560h1v1h-1zM734 560h1v1h-1zM739 560h1v1h-1zM744 560h1v1h-1zM749 560h1v1h-1zM754 560h1v1h-1zM759 560h1v1h-1zM764 560h1v1h-1zM769 560h1v1h-1zM774 560h1v1h-1zM779 560h1v1h-1zM784 560h1v1h-1zM789 560h1v1h-1zM794 560h1v1h-1zM799 560h1v1h-1zM804 560h1v1h-1zM809 560h1v1h-1zM814 560h1v1h-1zM819 560h1v1h-1zM824 560h1v1h-1zM829 560h1v1h-1zM834 560h1v1h-1zM839 560h1v1h-1zM844 560h1v1h-1zM849 560h1v1h-1zM854 560h1v1h-1zM859 560h1v1h-1zM864 560h1v1h-1zM869 560h1v1h-1zM874 560h1v1h-1zM879 560h1v1h-1zM884 560h1v1h-1zM889 560h1v1h-1zM894 560h1v1h-1zM899 560h1v1h-1zM904 560h1v1h-1zM909 560h1v1h-1zM914 560h1v1h-1zM919 560h1v1h-1zM924 560h1v1h-1zM929 560h1v1h-1zM934 560h1v1h-1zM939 560h1v1h-1zM944 560h1v1h-1zM949 560h1v1h-1zM954 560h1v1h-1zM959 560h1v1h-1zM964 560h1v1h-1zM969 560h1v1h-1zM974 560h1v1h-1zM979 560h1v1h-1zM984 560h1v1h-1zM989 560h1v1h-1zM994 560h1v1h-1zM999 560h1v1h-1zM1004 560h1v1h-1zM1009 560h1v1h-1zM1014 560h1v1h-1zM24 580h1v1h-1zM29 580h1v1h-1zM34 580h1v1h-1zM39 580h1v1h-1zM44 580h1v1h-1zM49 580h1v1h-1zM54 580h1v1h-1zM59 580h1v1h-1zM64 580h1v1h-1zM69 580h1v1h-1zM74 580h1v1h-1zM79 580h1v1h-1zM84 580h1v1h-1zM89 580h1v1h-1zM94 580h1v1h-1zM99 580h1v1h-1zM104 580h1v1h-1zM109 580h1v1h-1zM114 580h1v1h-1zM119 580h1v1h-1zM124 580h1v1h-1zM129 580h1v1h-1zM134 580h1v1h-1zM139 580h1v1h-1zM144 580h1v1h-1zM149 580h1v1h-1zM154 580h1v1h-1zM159 580h1v1h-1zM164 580h1v1h-1zM169 580h1v1h-1zM174 580h1v1h-1zM179 580h1v1h-1zM184 580h1v1h-1zM189 580h1v1h-1zM194 580h1v1h-1zM199 580h1v1h-1zM204 580h1v1h-1zM209 580h1v1h-1zM214 580h1v1h-1zM219 580h1v1h-1zM224 580h1v1h-1zM229 580h1v1h-1zM234 580h1v1h-1zM239 580h1v1h-1zM244 580h1v1h-1zM249 580h1v1h-1zM254 580h1v1h-1zM259 580h1v1h-1zM264 580h1v1h-1zM269 580h1v1h-1zM274 580h1v1h-1zM279 580h1v1h-1zM284 580h1v1h-1zM289 580h1v1h-1zM294 580h1v1h-1zM299 580h1v1h-1zM304 580h1v1h-1zM309 580h1v1h-1zM314 580h1v1h-1zM319 580h1v1h-1zM324 580h1v1h-1zM329 580h1v1h-1zM334 580h1v1h-1zM339 580h1v1h-1zM344 580h1v1h-1zM349 580h1v1h-1zM354 580h1v1h-1zM359 580h1v1h-1zM364 580h1v1h-1zM369 580h1v1h-1zM374 580h1v1h-1zM379 580h1v1h-1zM384 580h1v1h-1zM389 580h1v1h-1zM394 580h1v1h-1zM399 580h1v1h-1zM404 580h1v1h-1zM409 580h1v1h-1zM414 580h1v1h-1zM419 580h1v1h-1zM424 580h1v1h-1zM429 580h1v1h-1zM434 580h1v1h-1zM439 580h1v1h-1zM444 580h1v1h-1zM449 580h1v1h-1zM454 580h1v1h-1zM459 580h1v1h-1zM464 580h1v1h-1zM469 580h1v1h-1zM474 580h1v1h-1zM479 580h1v1h-1zM484 580h1v1h-1zM489 580h1v1h-1zM494 580h1v1h-1zM499 580h1v1h-1zM504 580h1v1h-1zM509 580h1v1h-1zM514 580h1v1h-1zM519 580h1v1h-1zM524 580h1v1h-1zM529 580h1v1h-1zM534 580h1v1h-1zM539 580h1v1h-1zM544 580h1v1h-1zM549 580h1v1h-1zM554 580h1v1h-1zM559 580h1v1h-1zM564 580h1v1h-1zM569 580h1v1h-1zM574 580h1v1h-1zM579 580h1v1h-1zM584 580h1v1h-1zM589 580h1v1h-1zM594 580h1v1h-1zM599 580h1v1h-1zM604 580h1v1h-1zM609 580h1v1h-1zM614 580h1v1h-1zM619 580h1v1h-1zM624 580h1v1h-1zM629 580h1v1h-1zM634 580h1v1h-1zM639 580h1v1h-1zM644 580h1v1h-1zM649 580h1v1h-1zM654 580h1v1h-1zM659 580h1v1h-1zM664 580h1v1h-1zM669 580h1v1h-1zM674 580h1v1h-1zM679 580h1v1h-1zM684 580h1v1h-1zM689 580h1v1h-1zM694 580h1v1h-1zM699 580h1v1h-1zM704 580h1v1h-1zM709 580h1v1h-1zM714 580h1v1h-1zM719 580h1v1h-1zM724 580h1v1h-1zM729 580h1v1h-1zM734 580h1v1h-1zM739 580h1v1h-1zM744 580h1v1h-1zM749 580h1v1h-1zM754 580h1v1h-1zM759 580h1v1h-1zM764 580h1v1h-1zM769 580h1v1h-1zM774 580h1v1h-1zM779 580h1v1h-1zM784 580h1v1h-1zM789 580h1v1h-1zM794 580h1v1h-1zM799 580h1v1h-1zM804 580h1v1h-1zM809 580h1v1h-1zM814 580h1v1h-1zM819 580h1v1h-1zM824 580h1v1h-1zM829 580h1v1h-1zM834 580h1v1h-1zM839 580h1v1h-1zM844 580h1v1h-1zM849 580h1v1h-1zM854 580h1v1h-1zM859 580h1v1h-1zM864 580h1v1h-1zM869 580h1v1h-1zM874 580h1v1h-1zM879 580h1v1h-1zM884 580h1v1h-1zM889 580h1v1h-1zM894 580h1v1h-1zM899 580h1v1h-1zM904 580h1v1h-1zM909 580h1v1h-1zM914 580h1v1h-1zM919 580h1v1h-1zM924 580h1v1h-1zM929 580h1v1h-1zM934 580h1v1h-1zM939 580h1v1h-1zM944 580h1v1h-1zM949 580h1v1h-1zM954 580h1v1h-1zM959 580h1v1h-1zM964 580h1v1h-1zM969 580h1v1h-1zM974 580h1v1h-1zM979 580h1v1h-1zM984 580h1v1h-1zM989 580h1v1h-1zM994 580h1v1h-1zM999 580h1v1h-1zM1004 580h1v1h-1zM1009 580h1v1h-1zM1014 580h1v1h-1zM24 600h1v1h-1zM29 600h1v1h-1zM34 600h1v1h-1zM39 600h1v1h-1zM44 600h1v1h-1zM49 600h1v1h-1zM54 600h1v1h-1zM59 600h1v1h-1zM64 600h1v1h-1zM69 600h1v1h-1zM74 600h1v1h-1zM79 600h1v1h-1zM84 600h1v1h-1zM89 600h1v1h-1zM94 600h1v1h-1zM99 600h1v1h-1zM104 600h1v1h-1zM109 600h1v1h-1zM114 600h1v1h-1zM119 600h1v1h-1zM124 600h1v1h-1zM129 600h1v1h-1zM134 600h1v1h-1zM139 600h1v1h-1zM144 600h1v1h-1zM149 600h1v1h-1zM154 600h1v1h-1zM159 600h1v1h-1zM164 600h1v1h-1zM169 600h1v1h-1zM174 600h1v1h-1zM179 600h1v1h-1zM184 600h1v1h-1zM189 600h1v1h-1zM194 600h1v1h-1zM199 600h1v1h-1zM204 600h1v1h-1zM209 600h1v1h-1zM214 600h1v1h-1zM219 600h1v1h-1zM224 600h1v1h-1zM229 600h1v1h-1zM234 600h1v1h-1zM239 600h1v1h-1zM244 600h1v1h-1zM249 600h1v1h-1zM254 600h1v1h-1zM259 600h1v1h-1zM264 600h1v1h-1zM269 600h1v1h-1zM274 600h1v1h-1zM279 600h1v1h-1zM284 600h1v1h-1zM289 600h1v1h-1zM294 600h1v1h-1zM299 600h1v1h-1zM304 600h1v1h-1zM309 600h1v1h-1zM314 600h1v1h-1zM319 600h1v1h-1zM324 600h1v1h-1zM329 600h1v1h-1zM334 600h1v1h-1zM339 600h1v1h-1zM344 600h1v1h-1zM349 600h1v1h-1zM354 600h1v1h-1zM359 600h1v1h-1zM364 600h1v1h-1zM369 600h1v1h-1zM374 600h1v1h-1zM379 600h1v1h-1zM384 600h1v1h-1zM389 600h1v1h-1zM394 600h1v1h-1zM399 600h1v1h-1zM404 600h1v1h-1zM409 600h1v1h-1zM414 600h1v1h-1zM419 600h1v1h-1zM424 600h1v1h-1zM429 600h1v1h-1zM434 600h1v1h-1zM439 600h1v1h-1zM444 600h1v1h-1zM449 600h1v1h-1zM454 600h1v1h-1zM459 600h1v1h-1zM464 600h1v1h-1zM469 600h1v1h-1zM474 600h1v1h-1zM479 600h1v1h-1zM484 600h1v1h-1zM489 600h1v1h-1zM494 600h1v1h-1zM499 600h1v1h-1zM504 600h1v1h-1zM509 600h1v1h-1zM514 600h1v1h-1zM519 600h1v1h-1zM524 600h1v1h-1zM529 600h1v1h-1zM534 600h1v1h-1zM539 600h1v1h-1zM544 600h1v1h-1zM549 600h1v1h-1zM554 600h1v1h-1zM559 600h1v1h-1zM564 600h1v1h-1zM569 600h1v1h-1zM574 600h1v1h-1zM579 600h1v1h-1zM584 600h1v1h-1zM589 600h1v1h-1zM594 600h1v1h-1zM599 600h1v1h-1zM604 600h1v1h-1zM609 600h1v1h-1zM614 600h1v1h-1zM619 600h1v1h-1zM624 600h1v1h-1zM629 600h1v1h-1zM634 600h1v1h-1zM639 600h1v1h-1zM644 600h1v1h-1zM649 600h1v1h-1zM654 600h1v1h-1zM659 600h1v1h-1zM664 600h1v1h-1zM669 600h1v1h-1zM674 600h1v1h-1zM679 600h1v1h-1zM684 600h1v1h-1zM689 600h1v1h-1zM694 600h1v1h-1zM699 600h1v1h-1zM704 600h1v1h-1zM709 600h1v1h-1zM714 600h1v1h-1zM719 600h1v1h-1zM724 600h1v1h-1zM729 600h1v1h-1zM734 600h1v1h-1zM739 600h1v1h-1zM744 600h1v1h-1zM749 600h1v1h-1zM754 600h1v1h-1zM759 600h1v1h-1zM764 600h1v1h-1zM769 600h1v1h-1zM774 600h1v1h-1zM779 600h1v1h-1zM784 600h1v1h-1zM789 600h1v1h-1zM794 600h1v1h-1zM799 600h1v1h-1zM804 600h1v1h-1zM809 600h1v1h-1zM814 600h1v1h-1zM819 600h1v1h-1zM824 600h1v1h-1zM829 600h1v1h-1zM834 600h1v1h-1zM839 600h1v1h-1zM844 600h1v1h-1zM849 600h1v1h-1zM854 600h1v1h-1zM859 600h1v1h-1zM864 600h1v1h-1zM869 600h1v1h-1zM874 600h1v1h-1zM879 600h1v1h-1zM884 600h1v1h-1zM889 600h1v1h-1zM894 600h1v1h-1zM899 600h1v1h-1zM904 600h1v1h-1zM909 600h1v1h-1zM914 600h1v1h-1zM919 600h1v1h-1zM924 600h1v1h-1zM929 600h1v1h-1zM934 600h1v1h-1zM939 600h1v1h-1zM944 600h1v1h-1zM949 600h1v1h-1zM954 600h1v1h-1zM959 600h1v1h-1zM964 600h1v1h-1zM969 600h1v1h-1zM974 600h1v1h-1zM979 600h1v1h-1zM984 600h1v1h-1zM989 600h1v1h-1zM994 600h1v1h-1zM999 600h1v1h-1zM1004 600h1v1h-1zM1009 600h1v1h-1zM1014 600h1v1h-1z" fill="#646464"/><path d="M20 102h1V114h-1zM21 101h1V115h-1zM22 103h1V113h-1zM23 101h1V115h-1zM24 102h1V115h-1zM25 102h1V115h-1zM26 101h1V114h-1zM27 102h1V115h-1zM28 102h1V114h-1zM29 103h1V113h-1zM30 101h1V114h-1zM31 102h1V113h-1zM32 102h1V115h-1zM33 101h1V114h-1zM34 100h1V114h-1zM35 99h1V114h-1zM36 103h1V114h-1zM37 102h1V114h-1zM38 103h1V114h-1zM39 103h1V113h-1zM40 101h1V113h-1zM41 103h1V115h-1zM42 102h1V113h-1zM43 101h1V115h-1zM44 101h1V115h-1zM45 101h1V115h-1zM46 102h1V114h-1zM47 103h1V115h-1zM48 103h1V114h-1zM49 101h1V114h-1zM50 102h1V113h-1zM51 103h1V113h-1zM52 102h1V114h-1zM53 101h1V114h-1zM54 102h1V114h-1zM55 101h1V113h-1zM56 103h1V113h-1zM57 102h1V113h-1zM58 102h1V114h-1zM59 103h1V113h-1zM60 102h1V114h-1zM61 98h1V113h-1zM62 102h1V113h-1zM63 103h1V115h-1zM64 101h1V114h-1zM65 102h1V115h-1zM66 102h1V114h-1zM67 101h1V114h-1zM68 103h1V114h-1zM69 101h1V115h-1zM70 101h1V114h-1zM71 101h1V115h-1zM72 103h1V114h-1zM73 101h1V115h-1zM74 100h1V114h-1zM75 103h1V114h-1zM76 101h1V116h-1zM77 101h1V113h-1zM78 101h1V114h-1zM79 102h1V114h-1zM80 99h1V116h-1zM81 103h1V113h-1zM82 102h1V114h-1zM83 101h1V114h-1zM84 101h1V113h-1zM85 103h1V114h-1zM86 103h1V117h-1zM87 102h1V115h-1zM88 101h1V114h-1zM89 98h1V115h-1zM90 103h1V115h-1zM91 102h1V115h-1zM92 101h1V113h-1zM93 102h1V114h-1zM94 102h1V113h-1zM95 103h1V114h-1zM96 102h1V114h-1zM97 101h1V115h-1zM98 100h1V113h-1zM99 101h1V113h-1zM100 102h1V114h-1zM101 101h1V113h-1zM102 101h1V114h-1zM103 103h1V114h-1zM104 101h1V113h-1zM105 103h1V113h-1zM106 101h1V113h-1zM107 103h1V113h-1zM108 102h1V115h-1zM109 102h1V114h-1zM110 101h1V115h-1zM111 103h1V114h-1zM112 102h1V113h-1zM113 103h1V114h-1zM114 103h1V115h-1zM115 102h1V114h-1zM116 103h1V113h-1zM117 102h1V114h-1zM118 101h1V114h-1zM119 101h1V115h-1zM120 100h1V113h-1zM121 102h1V115h-1zM122 101h1V114h-1zM123 102h1V114h-1zM124 101h1V113h-1zM125 102h1V115h-1zM126 102h1V113h-1zM127 103h1V114h-1zM128 101h1V115h-1zM129 103h1V114h-1zM130 103h1V113h-1zM131 99h1V113h-1zM132 103h1V115h-1zM133 101h1V114h-1zM134 101h1V114h-1zM135 103h1V114h-1zM136 102h1V115h-1zM137 102h1V114h-1zM138 102h1V115h-1zM139 102h1V115h-1zM140 102h1V115h-1zM141 101h1V116h-1zM142 101h1V114h-1zM143 102h1V115h-1zM144 102h1V114h-1zM145 102h1V113h-1zM146 103h1V113h-1zM147 103h1V114h-1zM148 103h1V114h-1zM149 102h1V117h-1zM150 102h1V114h-1zM151 102h1V114h-1zM152 101h1V113h-1zM153 101h1V113h-1zM154 101h1V114h-1zM155 101h1V114h-1zM156 102h1V115h-1zM157 101h1V113h-1zM158 101h1V115h-1zM159 102h1V114h-1zM160 103h1V113h-1zM161 99h1V115h-1zM162 103h1V118h-1zM163 103h1V115h-1zM164 102h1V113h-1zM165 101h1V114h-1zM166 102h1V115h-1zM167 101h1V115h-1zM168 102h1V114h-1zM169 103h1V113h-1zM170 101h1V114h-1zM171 102h1V114h-1zM172 102h1V113h-1zM173 101h1V114h-1zM174 103h1V115h-1zM175 101h1V113h-1zM176 103h1V114h-1zM177 102h1V115h-1zM178 103h1V114h-1zM179 101h1V115h-1zM180 102h1V115h-1zM181 101h1V113h-1zM182 102h1V114h-1zM183 101h1V113h-1zM184 102h1V118h-1zM185 102h1V114h-1zM186 102h1V113h-1zM187 101h1V114h-1zM188 103h1V113h-1zM189 101h1V118h-1zM190 101h1V115h-1zM191 102h1V115h-1zM192 102h1V113h-1zM193 102h1V114h-1zM194 102h1V114h-1zM195 102h1V114h-1zM196 103h1V115h-1zM197 102h1V114h-1zM198 101h1V115h-1zM199 103h1V114h-1zM200 101h1V114h-1zM201 102h1V113h-1zM202 103h1V115h-1zM203 101h1V114h-1zM204 103h1V113h-1zM205 102h1V114h-1zM206 101h1V113h-1zM207 103h1V114h-1zM208 101h1V115h-1zM209 102h1V114h-1zM210 101h1V115h-1zM211 102h1V114h-1zM212 102h1V114h-1zM213 101h1V114h-1zM214 103h1V114h-1zM215 102h1V115h-1zM216 102h1V114h-1zM217 102h1V115h-1zM218 103h1V114h-1zM219 103h1V114h-1zM220 102h1V113h-1zM221 102h1V113h-1zM222 101h1V114h-1zM223 102h1V114h-1zM224 98h1V113h-1zM225 101h1V114h-1zM226 102h1V115h-1zM227 103h1V114h-1zM228 101h1V113h-1zM229 103h1V116h-1zM230 103h1V114h-1zM231 101h1V114h-1zM232 102h1V114h-1zM233 101h1V115h-1zM234 102h1V113h-1zM235 102h1V113h-1zM236 103h1V115h-1zM237 103h1V115h-1zM238 102h1V116h-1zM239 102h1V113h-1zM240 103h1V115h-1zM241 101h1V114h-1zM242 103h1V113h-1zM243 102h1V113h-1zM244 103h1V114h-1zM245 101h1V113h-1zM246 103h1V115h-1zM247 103h1V115h-1zM248 103h1V115h-1zM249 103h1V115h-1zM250 103h1V114h-1zM251 102h1V113h-1zM252 102h1V114h-1zM253 101h1V113h-1zM254 101h1V115h-1zM255 101h1V113h-1zM256 102h1V114h-1zM257 101h1V114h-1zM258 98h1V115h-1zM259 103h1V113h-1zM260 103h1V114h-1zM261 102h1V115h-1zM262 103h1V113h-1zM263 102h1V114h-1zM264 103h1V115h-1zM265 103h1V114h-1zM266 103h1V115h-1zM267 103h1V114h-1zM268 101h1V114h-1zM269 102h1V113h-1zM270 102h1V114h-1zM271 103h1V115h-1zM272 102h1V115h-1zM273 101h1V113h-1zM274 103h1V113h-1zM275 102h1V113h-1zM276 103h1V115h-1zM277 103h1V114h-1zM278 103h1V113h-1zM279 102h1V115h-1zM280 102h1V114h-1zM281 101h1V114h-1zM282 102h1V115h-1zM283 102h1V115h-1zM284 101h1V113h-1zM285 103h1V113h-1zM286 103h1V113h-1zM287 101h1V115h-1zM288 101h1V114h-1zM289 102h1V115h-1zM290 103h1V113h-1zM291 102h1V115h-1zM292 102h1V116h-1zM293 101h1V114h-1zM294 102h1V113h-1zM295 103h1V114h-1zM296 101h1V115h-1zM297 102h1V113h-1zM298 103h1V115h-1zM299 103h1V115h-1zM300 102h1V117h-1zM301 103h1V115h-1zM302 102h1V113h-1zM303 102h1V117h-1zM304 103h1V114h-1zM305 101h1V113h-1zM306 101h1V114h-1zM307 101h1V115h-1zM308 102h1V113h-1zM309 101h1V113h-1zM310 103h1V115h-1zM311 103h1V115h-1zM312 103h1V114h-1zM313 101h1V113h-1zM314 102h1V115h-1zM315 101h1V113h-1zM316 102h1V114h-1zM317 101h1V115h-1zM318 103h1V115h-1zM319 103h1V115h-1zM320 103h1V114h-1zM321 102h1V115h-1zM322 102h1V114h-1zM323 102h1V118h-1zM324 102h1V115h-1zM325 102h1V115h-1zM326 101h1V115h-1zM327 102h1V115h-1zM328 99h1V113h-1zM329 102h1V114h-1zM330 102h1V113h-1zM331 102h1V115h-1zM332 102h1V115h-1zM333 103h1V114h-1zM334 102h1V115h-1zM335 101h1V115h-1zM336 102h1V114h-1zM337 102h1V114h-1zM338 99h1V113h-1zM339 103h1V113h-1zM340 103h1V115h-1zM341 103h1V113h-1zM342 101h1V114h-1zM343 103h1V114h-1zM344 102h1V115h-1zM345 103h1V115h-1zM346 102h1V114h-1zM347 103h1V115h-1zM348 103h1V113h-1zM349 103h1V113h-1zM350 103h1V113h-1zM351 102h1V114h-1zM352 101h1V114h-1zM353 103h1V115h-1zM354 103h1V114h-1zM355 101h1V114h-1zM356 101h1V115h-1zM357 103h1V114h-1zM358 101h1V113h-1zM359 101h1V113h-1zM360 103h1V114h-1zM361 102h1V113h-1zM362 103h1V113h-1zM363 103h1V114h-1zM364 102h1V115h-1zM365 102h1V115h-1zM366 102h1V113h-1zM367 102h1V113h-1zM368 103h1V113h-1zM369 101h1V113h-1zM370 103h1V114h-1zM371 101h1V117h-1zM372 102h1V114h-1zM373 102h1V113h-1zM374 103h1V114h-1zM375 102h1V114h-1zM376 102h1V115h-1zM377 102h1V115h-1zM378 102h1V113h-1zM379 103h1V114h-1zM380 101h1V114h-1zM381 103h1V113h-1zM382 101h1V114h-1zM383 101h1V115h-1zM384 101h1V113h-1zM385 102h1V113h-1zM386 103h1V113h-1zM387 102h1V114h-1zM388 102h1V113h-1zM389 102h1V115h-1zM390 102h1V113h-1zM391 101h1V115h-1zM392 103h1V113h-1zM393 102h1V113h-1zM394 102h1V115h-1zM395 102h1V113h-1zM396 103h1V115h-1zM397 101h1V113h-1zM398 101h1V113h-1zM399 101h1V114h-1zM400 102h1V115h-1zM401 101h1V114h-1zM402 101h1V115h-1zM403 101h1V115h-1zM404 103h1V113h-1zM405 102h1V114h-1zM406 102h1V114h-1zM407 102h1V113h-1zM408 103h1V114h-1zM409 103h1V117h-1zM410 102h1V115h-1zM411 102h1V115h-1zM412 102h1V113h-1zM413 101h1V118h-1zM414 102h1V113h-1zM415 102h1V118h-1zM416 101h1V115h-1zM417 102h1V114h-1zM418 103h1V114h-1zM419 103h1V115h-1zM420 101h1V115h-1zM421 101h1V113h-1zM422 99h1V115h-1zM423 103h1V115h-1zM424 101h1V113h-1zM425 103h1V114h-1zM426 102h1V114h-1zM427 102h1V114h-1zM428 102h1V114h-1zM429 102h1V114h-1zM430 101h1V114h-1zM431 103h1V114h-1zM432 99h1V114h-1zM433 101h1V114h-1zM434 103h1V115h-1zM435 103h1V115h-1zM436 101h1V114h-1zM437 101h1V113h-1zM438 101h1V114h-1zM439 103h1V115h-1zM440 101h1V115h-1zM441 102h1V115h-1zM442 102h1V114h-1zM443 101h1V113h-1zM444 102h1V114h-1zM445 102h1V114h-1zM446 103h1V115h-1zM447 102h1V114h-1zM448 102h1V115h-1zM449 103h1V113h-1zM450 103h1V114h-1zM451 102h1V114h-1zM452 102h1V114h-1zM453 101h1V114h-1zM454 102h1V114h-1zM455 102h1V113h-1zM456 101h1V113h-1zM457 103h1V114h-1zM458 103h1V114h-1zM459 102h1V114h-1zM460 103h1V114h-1zM461 102h1V114h-1zM462 102h1V115h-1zM463 100h1V115h-1zM464 101h1V113h-1zM465 102h1V114h-1zM466 102h1V114h-1zM467 101h1V113h-1zM468 101h1V113h-1zM469 103h1V115h-1zM470 103h1V115h-1zM471 101h1V113h-1zM472 103h1V114h-1zM473 101h1V115h-1zM474 102h1V114h-1zM475 102h1V114h-1zM476 102h1V115h-1zM477 101h1V114h-1zM478 103h1V115h-1zM479 102h1V113h-1zM480 101h1V113h-1zM481 102h1V113h-1zM482 103h1V114h-1zM483 101h1V114h-1zM484 103h1V114h-1zM485 101h1V113h-1zM486 101h1V114h-1zM487 101h1V114h-1zM488 101h1V114h-1zM489 101h1V115h-1zM490 101h1V114h-1zM491 103h1V114h-1zM492 102h1V115h-1zM493 101h1V115h-1zM494 98h1V114h-1zM495 101h1V113h-1zM496 101h1V114h-1zM497 103h1V115h-1zM498 102h1V113h-1zM499 102h1V114h-1zM500 101h1V113h-1zM501 102h1V115h-1zM502 103h1V115h-1zM503 103h1V113h-1zM504 103h1V113h-1zM505 101h1V115h-1zM506 103h1V113h-1zM507 103h1V115h-1zM508 100h1V115h-1zM509 102h1V115h-1zM510 101h1V113h-1zM511 101h1V115h-1zM512 103h1V113h-1zM513 102h1V115h-1zM514 101h1V114h-1zM515 101h1V117h-1zM516 101h1V113h-1zM517 103h1V113h-1zM518 101h1V113h-1zM519 101h1V113h-1zM520 102h1V113h-1zM521 103h1V114h-1zM522 103h1V115h-1zM523 101h1V116h-1zM524 103h1V115h-1zM525 102h1V115h-1zM526 103h1V113h-1zM527 101h1V114h-1zM528 102h1V114h-1zM529 103h1V113h-1zM530 100h1V115h-1zM531 102h1V114h-1zM532 101h1V113h-1zM533 101h1V115h-1zM534 101h1V113h-1zM535 102h1V113h-1zM536 101h1V115h-1zM537 101h1V114h-1zM538 102h1V114h-1zM539 102h1V113h-1zM540 102h1V113h-1zM541 101h1V113h-1zM542 103h1V114h-1zM543 102h1V114h-1zM544 100h1V114h-1zM545 102h1V113h-1zM546 102h1V115h-1zM547 102h1V113h-1zM548 102h1V114h-1zM549 101h1V116h-1zM550 102h1V115h-1zM551 102h1V114h-1zM552 101h1V114h-1zM553 103h1V114h-1zM554 102h1V114h-1zM555 101h1V115h-1zM556 101h1V114h-1zM557 101h1V114h-1zM558 99h1V113h-1zM559 101h1V114h-1zM560 101h1V115h-1zM561 101h1V114h-1zM562 101h1V115h-1zM563 101h1V114h-1zM564 101h1V113h-1zM565 102h1V114h-1zM566 101h1V113h-1zM567 102h1V113h-1zM568 103h1V114h-1zM569 103h1V113h-1zM570 101h1V113h-1zM571 101h1V114h-1zM572 103h1V115h-1zM573 101h1V113h-1zM574 102h1V113h-1zM575 102h1V113h-1zM576 102h1V113h-1zM577 103h1V113h-1zM578 103h1V114h-1zM579 103h1V113h-1zM580 103h1V114h-1zM581 103h1V115h-1zM582 103h1V115h-1zM583 101h1V115h-1zM584 102h1V115h-1zM585 103h1V114h-1zM586 102h1V114h-1zM587 102h1V113h-1zM588 102h1V115h-1zM589 103h1V113h-1zM590 99h1V114h-1zM591 101h1V113h-1zM592 102h1V115h-1zM593 102h1V115h-1zM594 101h1V113h-1zM595 103h1V114h-1zM596 101h1V114h-1zM597 102h1V113h-1zM598 99h1V113h-1zM599 102h1V114h-1zM600 102h1V114h-1zM601 102h1V114h-1zM602 101h1V119h-1zM603 101h1V113h-1zM604 102h1V115h-1zM605 101h1V113h-1zM606 101h1V115h-1zM607 101h1V113h-1zM608 101h1V114h-1zM609 103h1V115h-1zM610 101h1V113h-1zM611 102h1V113h-1zM612 102h1V113h-1zM613 103h1V114h-1zM614 101h1V115h-1zM615 102h1V113h-1zM616 100h1V115h-1zM617 103h1V115h-1zM618 102h1V113h-1zM619 102h1V113h-1zM620 103h1V115h-1zM621 103h1V114h-1zM622 101h1V113h-1zM623 101h1V114h-1zM624 103h1V114h-1zM625 103h1V115h-1zM626 102h1V115h-1zM627 103h1V114h-1zM628 102h1V115h-1zM629 102h1V113h-1zM630 102h1V115h-1zM631 101h1V113h-1zM632 101h1V114h-1zM633 101h1V114h-1zM634 101h1V115h-1zM635 102h1V114h-1zM636 100h1V115h-1zM637 103h1V115h-1zM638 103h1V114h-1zM639 102h1V114h-1zM640 101h1V117h-1zM641 102h1V114h-1zM642 103h1V114h-1zM643 103h1V115h-1zM644 101h1V115h-1zM645 103h1V115h-1zM646 103h1V115h-1zM647 103h1V113h-1zM648 102h1V114h-1zM649 101h1V114h-1zM650 103h1V113h-1zM651 102h1V115h-1zM652 102h1V115h-1zM653 102h1V113h-1zM654 102h1V113h-1zM655 101h1V113h-1zM656 103h1V113h-1zM657 101h1V114h-1zM658 103h1V116h-1zM659 102h1V114h-1zM660 101h1V113h-1zM661 101h1V114h-1zM662 102h1V115h-1zM663 102h1V114h-1zM664 102h1V114h-1zM665 102h1V117h-1zM666 103h1V115h-1zM667 102h1V114h-1zM668 101h1V113h-1zM669 101h1V113h-1zM670 101h1V114h-1zM671 102h1V115h-1zM672 103h1V115h-1zM673 103h1V115h-1zM674 102h1V117h-1zM675 101h1V113h-1zM676 103h1V115h-1zM677 101h1V113h-1zM678 101h1V114h-1zM679 103h1V114h-1zM680 102h1V113h-1zM681 101h1V114h-1zM682 101h1V113h-1zM683 103h1V113h-1zM684 101h1V116h-1zM685 101h1V115h-1zM686 103h1V114h-1zM687 102h1V115h-1zM688 101h1V115h-1zM689 102h1V115h-1zM690 103h1V114h-1zM691 101h1V115h-1zM692 103h1V113h-1zM693 102h1V113h-1zM694 102h1V114h-1zM695 102h1V115h-1zM696 102h1V113h-1zM697 102h1V114h-1zM698 102h1V113h-1zM699 101h1V113h-1zM700 101h1V114h-1zM701 101h1V113h-1zM702 102h1V113h-1zM703 101h1V115h-1zM704 102h1V115h-1zM705 103h1V113h-1zM706 102h1V117h-1zM707 101h1V113h-1zM708 101h1V114h-1zM709 100h1V113h-1zM710 103h1V114h-1zM711 98h1V115h-1zM712 101h1V115h-1zM713 101h1V113h-1zM714 103h1V115h-1zM715 101h1V115h-1zM716 102h1V113h-1zM717 103h1V115h-1zM718 102h1V114h-1zM719 97h1V113h-1zM720 101h1V113h-1zM721 103h1V115h-1zM722 102h1V115h-1zM723 101h1V115h-1zM724 103h1V114h-1zM725 103h1V113h-1zM726 103h1V115h-1zM727 101h1V115h-1zM728 102h1V115h-1zM729 102h1V113h-1zM730 101h1V113h-1zM731 102h1V114h-1zM732 101h1V113h-1zM733 102h1V115h-1zM734 102h1V115h-1zM735 102h1V115h-1zM736 103h1V115h-1zM737 103h1V113h-1zM738 101h1V113h-1zM739 101h1V115h-1zM740 102h1V114h-1zM741 101h1V113h-1zM742 101h1V113h-1zM743 102h1V113h-1zM744 101h1V115h-1zM745 101h1V114h-1zM746 103h1V115h-1zM747 103h1V115h-1zM748 101h1V117h-1zM749 101h1V115h-1zM750 103h1V115h-1zM751 101h1V113h-1zM752 101h1V113h-1zM753 102h1V115h-1zM754 102h1V115h-1zM755 103h1V117h-1zM756 102h1V114h-1zM757 103h1V115h-1zM758 102h1V114h-1zM759 102h1V115h-1zM760 102h1V115h-1zM761 103h1V114h-1zM762 102h1V114h-1zM763 101h1V113h-1zM764 103h1V115h-1zM765 102h1V117h-1zM766 101h1V115h-1zM767 103h1V113h-1zM768 98h1V115h-1zM769 101h1V113h-1zM770 101h1V114h-1zM771 97h1V113h-1zM772 103h1V117h-1zM773 102h1V114h-1zM774 101h1V115h-1zM775 100h1V118h-1zM776 101h1V115h-1zM777 103h1V115h-1zM778 100h1V115h-1z" fill="#9a9a06" opacity="0.45"/><path d="M20 103h1V115h-1zM21 103h1V113h-1zM22 103h1V114h-1zM23 102h1V113h-1zM24 103h1V115h-1zM25 103h1V113h-1zM26 101h1V114h-1zM27 101h1V115h-1zM28 103h1V118h-1zM29 101h1V114h-1zM30 102h1V117h-1zM31 102h1V114h-1zM32 101h1V115h-1zM33 102h1V115h-1zM34 103h1V113h-1zM35 101h1V114h-1zM36 103h1V114h-1zM37 100h1V115h-1zM38 102h1V115h-1zM39 101h1V114h-1zM40 101h1V114h-1zM41 102h1V114h-1zM42 103h1V113h-1zM43 101h1V115h-1zM44 102h1V113h-1zM45 102h1V114h-1zM46 101h1V113h-1zM47 103h1V114h-1zM48 101h1V115h-1zM49 102h1V115h-1zM50 101h1V115h-1zM51 101h1V113h-1zM52 101h1V115h-1zM53 101h1V114h-1zM54 103h1V114h-1zM55 102h1V113h-1zM56 102h1V115h-1zM57 101h1V113h-1zM58 101h1V113h-1zM59 102h1V113h-1zM60 102h1V114h-1zM61 102h1V114h-1zM62 103h1V115h-1zM63 101h1V113h-1zM64 102h1V113h-1zM65 101h1V114h-1zM66 103h1V115h-1zM67 103h1V114h-1zM68 102h1V115h-1zM69 103h1V115h-1zM70 101h1V114h-1zM71 101h1V114h-1zM72 103h1V115h-1zM73 102h1V114h-1zM74 103h1V113h-1zM75 103h1V113h-1zM76 102h1V115h-1zM77 102h1V114h-1zM78 102h1V113h-1zM79 102h1V115h-1zM80 102h1V114h-1zM81 101h1V113h-1zM82 101h1V114h-1zM83 103h1V113h-1zM84 103h1V114h-1zM85 101h1V114h-1zM86 101h1V113h-1zM87 102h1V113h-1zM88 103h1V115h-1zM89 102h1V117h-1zM90 102h1V114h-1zM91 102h1V115h-1zM92 102h1V114h-1zM93 102h1V113h-1zM94 98h1V114h-1zM95 101h1V113h-1zM96 103h1V114h-1zM97 103h1V115h-1zM98 102h1V115h-1zM99 101h1V113h-1zM100 101h1V114h-1zM101 103h1V113h-1zM102 101h1V114h-1zM103 103h1V114h-1zM104 103h1V115h-1zM105 102h1V115h-1zM106 101h1V115h-1zM107 102h1V113h-1zM108 103h1V114h-1zM109 102h1V115h-1zM110 102h1V115h-1zM111 101h1V116h-1zM112 102h1V115h-1zM113 101h1V115h-1zM114 102h1V114h-1zM115 102h1V117h-1zM116 101h1V115h-1zM117 103h1V114h-1zM118 101h1V114h-1zM119 101h1V115h-1zM120 103h1V113h-1zM121 101h1V115h-1zM122 102h1V114h-1zM123 103h1V113h-1zM124 101h1V115h-1zM125 98h1V114h-1zM126 102h1V113h-1zM127 102h1V117h-1zM128 103h1V115h-1zM129 103h1V114h-1zM130 102h1V114h-1zM131 103h1V115h-1zM132 102h1V115h-1zM133 102h1V113h-1zM134 101h1V115h-1zM135 102h1V114h-1zM136 98h1V115h-1zM137 103h1V114h-1zM138 101h1V115h-1zM139 101h1V114h-1zM140 102h1V114h-1zM141 102h1V114h-1zM142 101h1V114h-1zM143 101h1V115h-1zM144 102h1V113h-1zM145 101h1V113h-1zM146 101h1V113h-1zM147 102h1V114h-1zM148 102h1V116h-1zM149 103h1V113h-1zM150 102h1V115h-1zM151 101h1V114h-1zM152 102h1V114h-1zM153 102h1V113h-1zM154 101h1V115h-1zM155 102h1V113h-1zM156 101h1V113h-1zM157 101h1V114h-1zM158 102h1V113h-1zM159 101h1V116h-1zM160 103h1V114h-1zM161 101h1V114h-1zM162 102h1V114h-1zM163 101h1V115h-1zM164 103h1V113h-1zM165 102h1V115h-1zM166 101h1V115h-1zM167 103h1V114h-1zM168 102h1V115h-1zM169 102h1V115h-1zM170 101h1V113h-1zM171 102h1V114h-1zM172 102h1V114h-1zM173 102h1V114h-1zM174 102h1V114h-1zM175 103h1V114h-1zM176 103h1V113h-1zM177 97h1V114h-1zM178 103h1V114h-1zM179 102h1V115h-1zM180 101h1V113h-1zM181 101h1V115h-1zM182 103h1V115h-1zM183 102h1V118h-1zM184 102h1V114h-1zM185 103h1V113h-1zM186 102h1V113h-1zM187 101h1V115h-1zM188 101h1V113h-1zM189 102h1V114h-1zM190 98h1V117h-1zM191 102h1V113h-1zM192 101h1V113h-1zM193 101h1V113h-1zM194 102h1V113h-1zM195 101h1V114h-1zM196 101h1V113h-1zM197 102h1V114h-1zM198 101h1V115h-1zM199 103h1V113h-1zM200 103h1V113h-1zM201 102h1V113h-1zM202 102h1V114h-1zM203 101h1V114h-1zM204 103h1V113h-1zM205 103h1V114h-1zM206 102h1V114h-1zM207 101h1V113h-1zM208 102h1V114h-1zM209 101h1V114h-1zM210 102h1V114h-1zM211 102h1V113h-1zM212 102h1V114h-1zM213 103h1V113h-1zM214 102h1V114h-1zM215 102h1V113h-1zM216 102h1V114h-1zM217 101h1V113h-1zM218 99h1V115h-1zM219 101h1V113h-1zM220 101h1V113h-1zM221 102h1V114h-1zM222 101h1V114h-1zM223 102h1V115h-1zM224 102h1V115h-1zM225 103h1V115h-1zM226 103h1V114h-1zM227 102h1V115h-1zM228 102h1V114h-1zM229 103h1V115h-1zM230 102h1V115h-1zM231 102h1V115h-1zM232 103h1V113h-1zM233 103h1V114h-1zM234 103h1V114h-1zM235 103h1V113h-1zM236 103h1V115h-1zM237 102h1V114h-1zM238 103h1V115h-1zM239 102h1V113h-1zM240 101h1V115h-1zM241 102h1V115h-1zM242 102h1V113h-1zM243 101h1V115h-1zM244 102h1V115h-1zM245 102h1V114h-1zM246 103h1V115h-1zM247 101h1V114h-1zM248 101h1V115h-1zM249 103h1V115h-1zM250 102h1V113h-1zM251 101h1V114h-1zM252 103h1V115h-1zM253 101h1V114h-1zM254 98h1V113h-1zM255 102h1V115h-1zM256 102h1V113h-1zM257 102h1V115h-1zM258 102h1V113h-1zM259 101h1V114h-1zM260 102h1V115h-1zM261 102h1V113h-1zM262 103h1V115h-1zM263 103h1V113h-1zM264 103h1V117h-1zM265 103h1V114h-1zM266 102h1V114h-1zM267 101h1V115h-1zM268 103h1V114h-1zM269 101h1V113h-1zM270 101h1V113h-1zM271 102h1V114h-1zM272 101h1V114h-1zM273 101h1V114h-1zM274 102h1V114h-1zM275 103h1V114h-1zM276 103h1V113h-1zM277 103h1V115h-1zM278 103h1V114h-1zM279 101h1V115h-1zM280 102h1V114h-1zM281 101h1V113h-1zM282 101h1V114h-1zM283 102h1V113h-1zM284 102h1V115h-1zM285 102h1V113h-1zM286 102h1V114h-1zM287 103h1V113h-1zM288 101h1V115h-1zM289 103h1V113h-1zM290 101h1V114h-1zM291 102h1V113h-1zM292 101h1V114h-1zM293 100h1V114h-1zM294 101h1V114h-1zM295 101h1V113h-1zM296 102h1V114h-1zM297 101h1V114h-1zM298 102h1V113h-1zM299 103h1V113h-1zM300 102h1V114h-1zM301 102h1V114h-1zM302 101h1V114h-1zM303 103h1V114h-1zM304 103h1V113h-1zM305 103h1V113h-1zM306 102h1V113h-1zM307 101h1V113h-1zM308 101h1V114h-1zM309 100h1V113h-1zM310 101h1V115h-1zM311 102h1V115h-1zM312 103h1V115h-1zM313 103h1V115h-1zM314 103h1V115h-1zM315 101h1V114h-1zM316 103h1V114h-1zM317 103h1V113h-1zM318 101h1V115h-1zM319 101h1V114h-1zM320 101h1V114h-1zM321 101h1V113h-1zM322 101h1V115h-1zM323 103h1V114h-1zM324 102h1V115h-1zM325 102h1V114h-1zM326 102h1V114h-1zM327 102h1V115h-1zM328 103h1V114h-1zM329 103h1V115h-1zM330 103h1V113h-1zM331 102h1V115h-1zM332 101h1V115h-1zM333 102h1V113h-1zM334 102h1V113h-1zM335 101h1V114h-1zM336 102h1V114h-1zM337 102h1V114h-1zM338 101h1V115h-1zM339 102h1V113h-1zM340 103h1V114h-1zM341 102h1V117h-1zM342 102h1V115h-1zM343 101h1V117h-1zM344 101h1V113h-1zM345 101h1V114h-1zM346 102h1V113h-1zM347 102h1V114h-1zM348 101h1V113h-1zM349 103h1V114h-1zM350 101h1V114h-1zM351 103h1V113h-1zM352 103h1V115h-1zM353 103h1V114h-1zM354 102h1V115h-1zM355 102h1V113h-1zM356 103h1V115h-1zM357 103h1V113h-1zM358 103h1V114h-1zM359 102h1V113h-1zM360 102h1V114h-1zM361 101h1V114h-1zM362 101h1V117h-1zM363 102h1V115h-1zM364 103h1V115h-1zM365 102h1V115h-1zM366 102h1V115h-1zM367 101h1V115h-1zM368 102h1V113h-1zM369 101h1V115h-1zM370 101h1V115h-1zM371 102h1V114h-1zM372 102h1V115h-1zM373 103h1V113h-1zM374 103h1V113h-1zM375 101h1V114h-1zM376 102h1V113h-1zM377 103h1V113h-1zM378 101h1V115h-1zM379 103h1V115h-1zM380 101h1V115h-1zM381 103h1V113h-1zM382 101h1V113h-1zM383 102h1V115h-1zM384 101h1V114h-1zM385 101h1V115h-1zM386 103h1V115h-1zM387 103h1V113h-1zM388 103h1V114h-1zM389 101h1V117h-1zM390 103h1V115h-1zM391 103h1V114h-1zM392 101h1V114h-1zM393 102h1V116h-1zM394 103h1V113h-1zM395 103h1V115h-1zM396 101h1V113h-1zM397 102h1V114h-1zM398 101h1V113h-1zM399 101h1V115h-1zM400 101h1V115h-1zM401 101h1V113h-1zM402 103h1V115h-1zM403 102h1V114h-1zM404 101h1V114h-1zM405 102h1V115h-1zM406 102h1V117h-1zM407 102h1V114h-1zM408 103h1V115h-1zM409 101h1V114h-1zM410 102h1V113h-1zM411 101h1V115h-1zM412 102h1V115h-1zM413 103h1V114h-1zM414 101h1V114h-1zM415 101h1V114h-1zM416 101h1V114h-1zM417 101h1V115h-1zM418 102h1V115h-1zM419 101h1V114h-1zM420 101h1V114h-1zM421 101h1V114h-1zM422 101h1V114h-1zM423 102h1V116h-1zM424 103h1V113h-1zM425 102h1V114h-1zM426 102h1V115h-1zM427 102h1V115h-1zM428 101h1V117h-1zM429 102h1V113h-1zM430 101h1V115h-1zM431 101h1V114h-1zM432 103h1V113h-1zM433 101h1V113h-1zM434 102h1V114h-1zM435 103h1V114h-1zM436 103h1V115h-1zM437 103h1V114h-1zM438 101h1V114h-1zM439 102h1V115h-1zM440 102h1V115h-1zM441 101h1V115h-1zM442 103h1V114h-1zM443 103h1V114h-1zM444 101h1V115h-1zM445 102h1V114h-1zM446 103h1V115h-1zM447 98h1V113h-1zM448 102h1V115h-1zM449 103h1V115h-1zM450 102h1V113h-1zM451 103h1V117h-1zM452 103h1V114h-1zM453 103h1V114h-1zM454 102h1V114h-1zM455 99h1V113h-1zM456 103h1V113h-1zM457 102h1V113h-1zM458 102h1V113h-1zM459 103h1V113h-1zM460 102h1V115h-1zM461 102h1V114h-1zM462 102h1V114h-1zM463 101h1V113h-1zM464 102h1V115h-1zM465 101h1V113h-1zM466 103h1V114h-1zM467 101h1V114h-1zM468 103h1V115h-1zM469 103h1V115h-1zM470 102h1V115h-1zM471 101h1V113h-1zM472 103h1V115h-1zM473 102h1V114h-1zM474 101h1V115h-1zM475 103h1V115h-1zM476 102h1V115h-1zM477 102h1V114h-1zM478 101h1V115h-1zM479 102h1V116h-1zM480 103h1V115h-1zM481 98h1V115h-1zM482 101h1V114h-1zM483 101h1V114h-1zM484 99h1V114h-1zM485 102h1V114h-1zM486 102h1V114h-1zM487 101h1V113h-1zM488 101h1V115h-1zM489 103h1V113h-1zM490 102h1V115h-1zM491 101h1V115h-1zM492 103h1V114h-1zM493 102h1V115h-1zM494 103h1V115h-1zM495 103h1V114h-1zM496 102h1V115h-1zM497 102h1V114h-1zM498 102h1V114h-1zM499 102h1V115h-1zM500 101h1V113h-1zM501 102h1V115h-1zM502 101h1V114h-1zM503 102h1V114h-1zM504 101h1V117h-1zM505 101h1V114h-1zM506 102h1V114h-1zM507 101h1V118h-1zM508 102h1V113h-1zM509 101h1V113h-1zM510 101h1V115h-1zM511 103h1V113h-1zM512 102h1V114h-1zM513 102h1V114h-1zM514 101h1V114h-1zM515 102h1V114h-1zM516 103h1V113h-1zM517 101h1V118h-1zM518 99h1V113h-1zM519 103h1V114h-1zM520 101h1V113h-1zM521 102h1V114h-1zM522 103h1V115h-1zM523 102h1V113h-1zM524 103h1V114h-1zM525 100h1V114h-1zM526 102h1V118h-1zM527 101h1V115h-1zM528 101h1V114h-1zM529 102h1V114h-1zM530 101h1V115h-1zM531 102h1V115h-1zM532 101h1V115h-1zM533 102h1V115h-1zM534 103h1V115h-1zM535 103h1V115h-1zM536 103h1V115h-1zM537 103h1V113h-1zM538 101h1V113h-1zM539 101h1V115h-1zM540 101h1V115h-1zM541 102h1V114h-1zM542 102h1V115h-1zM543 101h1V117h-1zM544 101h1V114h-1zM545 101h1V115h-1zM546 103h1V114h-1zM547 102h1V114h-1zM548 103h1V114h-1zM549 101h1V113h-1zM550 101h1V113h-1zM551 103h1V115h-1zM552 102h1V113h-1zM553 101h1V115h-1zM554 102h1V113h-1zM555 101h1V113h-1zM556 101h1V114h-1zM557 102h1V115h-1zM558 102h1V113h-1zM559 103h1V113h-1zM560 102h1V115h-1zM561 100h1V115h-1zM562 101h1V114h-1zM563 102h1V114h-1zM564 101h1V115h-1zM565 100h1V115h-1zM566 101h1V114h-1zM567 101h1V114h-1zM568 103h1V114h-1zM569 102h1V114h-1zM570 102h1V113h-1zM571 101h1V115h-1zM572 101h1V114h-1zM573 103h1V115h-1zM574 101h1V113h-1zM575 102h1V115h-1zM576 103h1V114h-1zM577 101h1V113h-1zM578 101h1V114h-1zM579 103h1V113h-1zM580 102h1V114h-1zM581 103h1V114h-1zM582 101h1V113h-1zM583 101h1V113h-1zM584 101h1V114h-1zM585 101h1V115h-1zM586 103h1V114h-1zM587 101h1V113h-1zM588 102h1V113h-1zM589 103h1V114h-1zM590 101h1V114h-1zM591 102h1V113h-1zM592 101h1V114h-1zM593 101h1V115h-1zM594 101h1V115h-1zM595 102h1V115h-1zM596 103h1V113h-1zM597 102h1V114h-1zM598 102h1V114h-1zM599 102h1V115h-1zM600 103h1V115h-1zM601 101h1V115h-1zM602 101h1V113h-1zM603 101h1V114h-1zM604 102h1V113h-1zM605 103h1V114h-1zM606 101h1V115h-1zM607 103h1V115h-1zM608 103h1V114h-1zM609 101h1V114h-1zM610 102h1V114h-1zM611 102h1V115h-1zM612 101h1V113h-1zM613 102h1V115h-1zM614 102h1V115h-1zM615 102h1V114h-1zM616 102h1V113h-1zM617 102h1V115h-1zM618 103h1V115h-1zM619 102h1V114h-1zM620 103h1V114h-1zM621 103h1V115h-1zM622 101h1V114h-1zM623 102h1V115h-1zM624 103h1V115h-1zM625 101h1V114h-1zM626 102h1V113h-1zM627 103h1V114h-1zM628 101h1V113h-1zM629 103h1V114h-1zM630 103h1V114h-1zM631 103h1V115h-1zM632 103h1V113h-1zM633 103h1V114h-1zM634 102h1V114h-1zM635 103h1V114h-1zM636 102h1V113h-1zM637 103h1V115h-1zM638 101h1V114h-1zM639 103h1V114h-1zM640 102h1V114h-1zM641 101h1V113h-1zM642 102h1V113h-1zM643 101h1V115h-1zM644 102h1V114h-1zM645 102h1V114h-1zM646 102h1V114h-1zM647 102h1V115h-1zM648 99h1V115h-1zM649 103h1V113h-1zM650 102h1V114h-1zM651 103h1V114h-1zM652 103h1V113h-1zM653 101h1V114h-1zM654 102h1V114h-1zM655 101h1V113h-1zM656 101h1V118h-1zM657 103h1V115h-1zM658 103h1V114h-1zM659 101h1V115h-1zM660 103h1V115h-1zM661 101h1V114h-1zM662 103h1V115h-1zM663 103h1V113h-1zM664 102h1V115h-1zM665 101h1V115h-1zM666 101h1V113h-1zM667 103h1V114h-1zM668 103h1V114h-1zM669 101h1V114h-1zM670 99h1V114h-1zM671 102h1V114h-1zM672 102h1V115h-1zM673 101h1V115h-1zM674 101h1V114h-1zM675 102h1V113h-1zM676 102h1V115h-1zM677 103h1V115h-1zM678 103h1V114h-1zM679 101h1V113h-1zM680 103h1V115h-1zM681 103h1V114h-1zM682 102h1V114h-1zM683 102h1V115h-1zM684 102h1V114h-1zM685 101h1V115h-1zM686 102h1V115h-1zM687 102h1V113h-1zM688 103h1V113h-1zM689 103h1V115h-1zM690 103h1V115h-1zM691 103h1V114h-1zM692 102h1V114h-1zM693 102h1V115h-1zM694 103h1V115h-1zM695 102h1V115h-1zM696 103h1V115h-1zM697 102h1V115h-1zM698 101h1V114h-1zM699 102h1V114h-1zM700 102h1V114h-1zM701 103h1V114h-1zM702 101h1V113h-1zM703 101h1V115h-1zM704 102h1V113h-1zM705 101h1V115h-1zM706 101h1V115h-1zM707 101h1V114h-1zM708 102h1V114h-1zM709 102h1V113h-1zM710 103h1V115h-1zM711 101h1V116h-1zM712 103h1V113h-1zM713 101h1V115h-1zM714 101h1V113h-1zM715 100h1V114h-1zM716 101h1V114h-1zM717 102h1V114h-1zM718 101h1V115h-1zM719 102h1V113h-1zM720 103h1V113h-1zM721 102h1V113h-1zM722 103h1V115h-1zM723 101h1V115h-1zM724 101h1V113h-1zM725 101h1V114h-1zM726 100h1V114h-1zM727 102h1V113h-1zM728 102h1V115h-1zM729 102h1V114h-1zM730 102h1V114h-1zM731 101h1V113h-1zM732 102h1V115h-1zM733 101h1V113h-1zM734 102h1V115h-1zM735 101h1V115h-1zM736 102h1V115h-1zM737 102h1V114h-1zM738 101h1V114h-1zM739 101h1V115h-1zM740 101h1V115h-1zM741 102h1V113h-1zM742 102h1V115h-1zM743 101h1V114h-1zM744 102h1V114h-1zM745 102h1V115h-1zM746 103h1V114h-1zM747 101h1V114h-1zM748 102h1V114h-1zM749 102h1V114h-1zM750 101h1V118h-1zM751 101h1V114h-1zM752 103h1V115h-1zM753 102h1V115h-1zM754 102h1V113h-1zM755 101h1V114h-1zM756 102h1V114h-1zM757 103h1V115h-1zM758 101h1V116h-1zM759 102h1V114h-1zM760 100h1V114h-1zM761 102h1V113h-1zM762 101h1V114h-1zM763 102h1V115h-1zM764 102h1V114h-1zM765 102h1V115h-1zM766 102h1V114h-1zM767 102h1V113h-1zM768 102h1V115h-1zM769 103h1V115h-1zM770 103h1V113h-1zM771 102h1V115h-1zM772 102h1V115h-1zM773 102h1V113h-1zM774 102h1V114h-1zM775 102h1V115h-1zM776 102h1V114h-1zM777 102h1V114h-1zM778 100h1V115h-1z" fill="#9a9a06" opacity="0.45"/><path d="M20 103h1V115h-1zM21 102h1V114h-1zM22 102h1V114h-1zM23 103h1V117h-1zM24 101h1V114h-1zM25 102h1V114h-1zM26 101h1V114h-1zM27 102h1V115h-1zM28 101h1V113h-1zM29 103h1V114h-1zM30 102h1V114h-1zM31 98h1V113h-1zM32 101h1V115h-1zM33 102h1V113h-1zM34 101h1V113h-1zM35 103h1V117h-1zM36 100h1V115h-1zM37 102h1V113h-1zM38 101h1V115h-1zM39 102h1V114h-1zM40 101h1V115h-1zM41 102h1V114h-1zM42 102h1V114h-1zM43 102h1V113h-1zM44 100h1V114h-1zM45 101h1V116h-1zM46 103h1V114h-1zM47 99h1V114h-1zM48 103h1V113h-1zM49 102h1V113h-1zM50 103h1V114h-1zM51 102h1V113h-1zM52 97h1V115h-1zM53 102h1V114h-1zM54 101h1V113h-1zM55 103h1V114h-1zM56 102h1V115h-1zM57 101h1V116h-1zM58 102h1V116h-1zM59 99h1V115h-1zM60 103h1V113h-1zM61 102h1V113h-1zM62 101h1V115h-1zM63 102h1V114h-1zM64 103h1V115h-1zM65 102h1V115h-1zM66 103h1V115h-1zM67 103h1V115h-1zM68 103h1V113h-1zM69 103h1V115h-1zM70 103h1V115h-1zM71 103h1V113h-1zM72 102h1V117h-1zM73 103h1V114h-1zM74 101h1V113h-1zM75 102h1V114h-1zM76 102h1V114h-1zM77 101h1V115h-1zM78 102h1V115h-1zM79 101h1V115h-1zM80 102h1V113h-1zM81 103h1V113h-1zM82 103h1V114h-1zM83 101h1V113h-1zM84 101h1V114h-1zM85 102h1V115h-1zM86 101h1V115h-1zM87 102h1V114h-1zM88 103h1V115h-1zM89 99h1V114h-1zM90 103h1V114h-1zM91 103h1V113h-1zM92 102h1V115h-1zM93 103h1V115h-1zM94 102h1V113h-1zM95 102h1V115h-1zM96 100h1V115h-1zM97 103h1V115h-1zM98 102h1V115h-1zM99 101h1V115h-1zM100 101h1V113h-1zM101 101h1V115h-1zM102 101h1V115h-1zM103 102h1V114h-1zM104 101h1V115h-1zM105 102h1V113h-1zM106 101h1V113h-1zM107 103h1V113h-1zM108 103h1V114h-1zM109 102h1V113h-1zM110 102h1V113h-1zM111 101h1V113h-1zM112 102h1V113h-1zM113 102h1V114h-1zM114 99h1V114h-1zM115 103h1V113h-1zM116 101h1V113h-1zM117 102h1V113h-1zM118 102h1V114h-1zM119 99h1V115h-1zM120 101h1V115h-1zM121 103h1V117h-1zM122 103h1V114h-1zM123 101h1V114h-1zM124 101h1V114h-1zM125 103h1V114h-1zM126 103h1V115h-1zM127 102h1V115h-1zM128 102h1V115h-1zM129 103h1V113h-1zM130 101h1V114h-1zM131 98h1V114h-1zM132 102h1V113h-1zM133 103h1V116h-1zM134 101h1V114h-1zM135 102h1V113h-1zM136 101h1V115h-1zM137 102h1V114h-1zM138 103h1V113h-1zM139 102h1V115h-1zM140 103h1V113h-1zM141 103h1V113h-1zM142 102h1V114h-1zM143 102h1V113h-1zM144 102h1V114h-1zM145 102h1V114h-1zM146 102h1V113h-1zM147 103h1V113h-1zM148 102h1V118h-1zM149 102h1V115h-1zM150 102h1V116h-1zM151 103h1V115h-1zM152 101h1V113h-1zM153 101h1V113h-1zM154 101h1V115h-1zM155 101h1V114h-1zM156 103h1V114h-1zM157 102h1V115h-1zM158 101h1V115h-1zM159 103h1V114h-1zM160 102h1V114h-1zM161 103h1V115h-1zM162 99h1V114h-1zM163 102h1V114h-1zM164 101h1V113h-1zM165 101h1V115h-1zM166 101h1V113h-1zM167 102h1V114h-1zM168 101h1V115h-1zM169 102h1V117h-1zM170 101h1V113h-1zM171 103h1V115h-1zM172 102h1V115h-1zM173 102h1V114h-1zM174 101h1V115h-1zM175 101h1V114h-1zM176 101h1V114h-1zM177 101h1V114h-1zM178 98h1V115h-1zM179 102h1V113h-1zM180 103h1V114h-1zM181 103h1V115h-1zM182 102h1V115h-1zM183 102h1V113h-1zM184 101h1V113h-1zM185 103h1V118h-1zM186 101h1V113h-1zM187 102h1V113h-1zM188 102h1V118h-1zM189 101h1V115h-1zM190 103h1V113h-1zM191 103h1V115h-1zM192 101h1V114h-1zM193 103h1V116h-1zM194 103h1V115h-1zM195 103h1V113h-1zM196 103h1V115h-1zM197 101h1V115h-1zM198 102h1V115h-1zM199 101h1V115h-1zM200 103h1V113h-1zM201 101h1V115h-1zM202 99h1V113h-1zM203 100h1V114h-1zM204 101h1V115h-1zM205 102h1V113h-1zM206 103h1V117h-1zM207 103h1V115h-1zM208 103h1V115h-1zM209 102h1V115h-1zM210 103h1V114h-1zM211 103h1V113h-1zM212 103h1V113h-1zM213 101h1V117h-1zM214 101h1V114h-1zM215 101h1V114h-1zM216 101h1V113h-1zM217 103h1V115h-1zM218 101h1V115h-1zM219 102h1V114h-1zM220 103h1V114h-1zM221 103h1V114h-1zM222 103h1V115h-1zM223 101h1V114h-1zM224 103h1V116h-1zM225 101h1V115h-1zM226 101h1V114h-1zM227 102h1V113h-1zM228 102h1V115h-1zM229 101h1V113h-1zM230 103h1V114h-1zM231 101h1V115h-1zM232 102h1V113h-1zM233 102h1V115h-1zM234 102h1V115h-1zM235 103h1V114h-1zM236 101h1V115h-1zM237 98h1V115h-1zM238 102h1V113h-1zM239 102h1V114h-1zM240 102h1V116h-1zM241 103h1V117h-1zM242 101h1V114h-1zM243 102h1V114h-1zM244 103h1V114h-1zM245 101h1V115h-1zM246 103h1V113h-1zM247 102h1V114h-1zM248 103h1V114h-1zM249 101h1V115h-1zM250 101h1V113h-1zM251 101h1V115h-1zM252 102h1V115h-1zM253 101h1V114h-1zM254 102h1V114h-1zM255 101h1V113h-1zM256 103h1V114h-1zM257 102h1V113h-1zM258 103h1V114h-1zM259 102h1V115h-1zM260 101h1V115h-1zM261 101h1V114h-1zM262 101h1V115h-1zM263 101h1V114h-1zM264 101h1V115h-1zM265 101h1V114h-1zM266 103h1V115h-1zM267 102h1V113h-1zM268 101h1V115h-1zM269 102h1V113h-1zM270 101h1V113h-1zM271 102h1V113h-1zM272 102h1V114h-1zM273 102h1V114h-1zM274 103h1V113h-1zM275 102h1V115h-1zM276 101h1V114h-1zM277 101h1V114h-1zM278 98h1V113h-1zM279 101h1V113h-1zM280 103h1V113h-1zM281 103h1V113h-1zM282 102h1V115h-1zM283 103h1V114h-1zM284 102h1V114h-1zM285 101h1V114h-1zM286 103h1V115h-1zM287 103h1V113h-1zM288 101h1V113h-1zM289 101h1V114h-1zM290 103h1V113h-1zM291 103h1V113h-1zM292 102h1V114h-1zM293 103h1V117h-1zM294 102h1V113h-1zM295 103h1V115h-1zM296 101h1V113h-1zM297 102h1V114h-1zM298 101h1V114h-1zM299 103h1V113h-1zM300 103h1V115h-1zM301 103h1V115h-1zM302 102h1V113h-1zM303 102h1V113h-1zM304 103h1V113h-1zM305 102h1V115h-1zM306 103h1V113h-1zM307 102h1V113h-1zM308 102h1V113h-1zM309 103h1V115h-1zM310 103h1V115h-1zM311 103h1V113h-1zM312 102h1V113h-1zM313 101h1V114h-1zM314 103h1V114h-1zM315 102h1V114h-1zM316 102h1V116h-1zM317 102h1V115h-1zM318 102h1V114h-1zM319 102h1V115h-1zM320 102h1V117h-1zM321 101h1V114h-1zM322 101h1V114h-1zM323 98h1V114h-1zM324 101h1V114h-1zM325 102h1V115h-1zM326 103h1V113h-1zM327 101h1V114h-1zM328 101h1V113h-1zM329 102h1V114h-1zM330 102h1V117h-1zM331 102h1V113h-1zM332 103h1V114h-1zM333 103h1V115h-1zM334 100h1V115h-1zM335 102h1V115h-1zM336 102h1V114h-1zM337 103h1V115h-1zM338 101h1V115h-1zM339 103h1V113h-1zM340 103h1V113h-1zM341 102h1V114h-1zM342 102h1V113h-1zM343 102h1V114h-1zM344 102h1V113h-1zM345 101h1V114h-1zM346 101h1V115h-1zM347 102h1V113h-1zM348 102h1V115h-1zM349 103h1V114h-1zM350 101h1V115h-1zM351 102h1V114h-1zM352 102h1V114h-1zM353 102h1V114h-1zM354 102h1V113h-1zM355 102h1V116h-1zM356 101h1V115h-1zM357 102h1V115h-1zM358 101h1V115h-1zM359 102h1V117h-1zM360 98h1V115h-1zM361 101h1V114h-1zM362 102h1V114h-1zM363 103h1V115h-1zM364 101h1V114h-1zM365 102h1V115h-1zM366 102h1V114h-1zM367 103h1V113h-1zM368 103h1V113h-1zM369 101h1V113h-1zM370 102h1V114h-1zM371 102h1V114h-1zM372 103h1V115h-1zM373 101h1V114h-1zM374 102h1V114h-1zM375 102h1V113h-1zM376 102h1V113h-1zM377 101h1V115h-1zM378 103h1V115h-1zM379 101h1V115h-1zM380 102h1V115h-1zM381 103h1V115h-1zM382 102h1V113h-1zM383 101h1V115h-1zM384 102h1V113h-1zM385 102h1V115h-1zM386 102h1V113h-1zM387 101h1V115h-1zM388 101h1V113h-1zM389 101h1V113h-1zM390 102h1V113h-1zM391 101h1V114h-1zM392 101h1V114h-1zM393 101h1V114h-1zM394 101h1V114h-1zM395 102h1V115h-1zM396 102h1V115h-1zM397 101h1V115h-1zM398 102h1V113h-1zM399 101h1V113h-1zM400 101h1V115h-1zM401 101h1V115h-1zM402 102h1V115h-1zM403 101h1V114h-1zM404 102h1V115h-1zM405 101h1V115h-1zM406 101h1V114h-1zM407 102h1V114h-1zM408 103h1V114h-1zM409 101h1V117h-1zM410 102h1V114h-1zM411 103h1V115h-1zM412 102h1V114h-1zM413 102h1V114h-1zM414 102h1V115h-1zM415 103h1V114h-1zM416 103h1V113h-1zM417 103h1V114h-1zM418 101h1V114h-1zM419 102h1V116h-1zM420 102h1V114h-1zM421 101h1V115h-1zM422 102h1V114h-1zM423 102h1V114h-1zM424 102h1V114h-1zM425 102h1V115h-1zM426 102h1V113h-1zM427 102h1V113h-1zM428 101h1V115h-1zM429 102h1V114h-1zM430 102h1V113h-1zM431 103h1V115h-1zM432 103h1V114h-1zM433 102h1V115h-1zM434 103h1V117h-1zM435 101h1V115h-1zM436 103h1V114h-1zM437 102h1V115h-1zM438 102h1V115h-1zM439 103h1V114h-1zM440 101h1V115h-1zM441 102h1V115h-1zM442 103h1V113h-1zM443 102h1V113h-1zM444 101h1V114h-1zM445 102h1V113h-1zM446 102h1V113h-1zM447 103h1V115h-1zM448 103h1V113h-1zM449 101h1V114h-1zM450 102h1V113h-1zM451 103h1V113h-1zM452 102h1V114h-1zM453 102h1V115h-1zM454 102h1V114h-1zM455 102h1V114h-1zM456 102h1V115h-1zM457 102h1V113h-1zM458 102h1V114h-1zM459 102h1V114h-1zM460 102h1V114h-1zM461 102h1V113h-1zM462 102h1V113h-1zM463 101h1V114h-1zM464 101h1V114h-1zM465 102h1V117h-1zM466 102h1V114h-1zM467 101h1V115h-1zM468 102h1V115h-1zM469 102h1V114h-1zM470 101h1V113h-1zM471 103h1V113h-1zM472 101h1V113h-1zM473 101h1V115h-1zM474 102h1V115h-1zM475 101h1V114h-1zM476 101h1V114h-1zM477 102h1V114h-1zM478 102h1V115h-1zM479 103h1V113h-1zM480 102h1V114h-1zM481 103h1V113h-1zM482 98h1V115h-1zM483 103h1V114h-1zM484 101h1V115h-1zM485 101h1V113h-1zM486 103h1V114h-1zM487 102h1V115h-1zM488 102h1V113h-1zM489 101h1V114h-1zM490 103h1V114h-1zM491 101h1V113h-1zM492 101h1V113h-1zM493 102h1V115h-1zM494 102h1V115h-1zM495 102h1V114h-1zM496 102h1V113h-1zM497 102h1V115h-1zM498 103h1V113h-1zM499 102h1V113h-1zM500 102h1V113h-1zM501 102h1V113h-1zM502 103h1V113h-1zM503 102h1V114h-1zM504 101h1V114h-1zM505 101h1V113h-1zM506 103h1V113h-1zM507 102h1V114h-1zM508 102h1V113h-1zM509 102h1V114h-1zM510 102h1V115h-1zM511 102h1V114h-1zM512 103h1V115h-1zM513 102h1V115h-1zM514 101h1V114h-1zM515 101h1V115h-1zM516 103h1V117h-1zM517 103h1V113h-1zM518 102h1V113h-1zM519 102h1V115h-1zM520 102h1V115h-1zM521 103h1V114h-1zM522 102h1V115h-1zM523 101h1V114h-1zM524 101h1V114h-1zM525 101h1V116h-1zM526 101h1V114h-1zM527 102h1V113h-1zM528 101h1V114h-1zM529 103h1V114h-1zM530 103h1V115h-1zM531 103h1V115h-1zM532 103h1V114h-1zM533 101h1V115h-1zM534 101h1V114h-1zM535 101h1V114h-1zM536 102h1V115h-1zM537 101h1V114h-1zM538 101h1V113h-1zM539 98h1V115h-1zM540 101h1V114h-1zM541 103h1V113h-1zM542 101h1V113h-1zM543 101h1V115h-1zM544 101h1V114h-1zM545 101h1V115h-1zM546 101h1V115h-1zM547 101h1V114h-1zM548 101h1V115h-1zM549 102h1V114h-1zM550 102h1V116h-1zM551 101h1V118h-1zM552 103h1V113h-1zM553 102h1V115h-1zM554 103h1V113h-1zM555 103h1V115h-1zM556 103h1V114h-1zM557 102h1V113h-1zM558 101h1V114h-1zM559 102h1V113h-1zM560 103h1V114h-1zM561 101h1V114h-1zM562 103h1V114h-1zM563 102h1V114h-1zM564 102h1V115h-1zM565 103h1V113h-1zM566 101h1V114h-1zM567 102h1V113h-1zM568 102h1V115h-1zM569 101h1V114h-1zM570 103h1V116h-1zM571 103h1V117h-1zM572 102h1V114h-1zM573 102h1V113h-1zM574 103h1V115h-1zM575 102h1V114h-1zM576 102h1V115h-1zM577 101h1V113h-1zM578 102h1V115h-1zM579 102h1V114h-1zM580 103h1V113h-1zM581 102h1V115h-1zM582 103h1V119h-1zM583 102h1V114h-1zM584 103h1V113h-1zM585 101h1V115h-1zM586 103h1V115h-1zM587 101h1V115h-1zM588 101h1V114h-1zM589 102h1V115h-1zM590 102h1V115h-1zM591 101h1V113h-1zM592 98h1V114h-1zM593 103h1V113h-1zM594 102h1V115h-1zM595 102h1V114h-1zM596 103h1V113h-1zM597 101h1V115h-1zM598 102h1V114h-1zM599 101h1V114h-1zM600 102h1V114h-1zM601 102h1V115h-1zM602 102h1V114h-1zM603 102h1V117h-1zM604 103h1V115h-1zM605 103h1V115h-1zM606 103h1V113h-1zM607 102h1V114h-1zM608 101h1V113h-1zM609 102h1V113h-1zM610 102h1V115h-1zM611 103h1V114h-1zM612 102h1V115h-1zM613 103h1V114h-1zM614 103h1V114h-1zM615 101h1V113h-1zM616 102h1V115h-1zM617 101h1V113h-1zM618 102h1V114h-1zM619 102h1V114h-1zM620 102h1V114h-1zM621 101h1V115h-1zM622 103h1V117h-1zM623 101h1V115h-1zM624 101h1V115h-1zM625 101h1V116h-1zM626 101h1V114h-1zM627 101h1V115h-1zM628 103h1V113h-1zM629 101h1V115h-1zM630 103h1V115h-1zM631 102h1V113h-1zM632 98h1V118h-1zM633 101h1V114h-1zM634 102h1V114h-1zM635 102h1V114h-1zM636 101h1V117h-1zM637 102h1V114h-1zM638 103h1V114h-1zM639 103h1V115h-1zM640 102h1V116h-1zM641 102h1V113h-1zM642 101h1V113h-1zM643 102h1V113h-1zM644 102h1V113h-1zM645 102h1V119h-1zM646 103h1V114h-1zM647 103h1V114h-1zM648 103h1V115h-1zM649 101h1V115h-1zM650 102h1V115h-1zM651 103h1V113h-1zM652 102h1V114h-1zM653 102h1V114h-1zM654 101h1V115h-1zM655 101h1V115h-1zM656 103h1V115h-1zM657 100h1V114h-1zM658 102h1V115h-1zM659 101h1V115h-1zM660 103h1V115h-1zM661 102h1V114h-1zM662 102h1V114h-1zM663 101h1V115h-1zM664 103h1V115h-1zM665 101h1V113h-1zM666 102h1V114h-1zM667 101h1V115h-1zM668 103h1V114h-1zM669 102h1V113h-1zM670 103h1V115h-1zM671 101h1V114h-1zM672 101h1V113h-1zM673 102h1V113h-1zM674 103h1V115h-1zM675 101h1V114h-1zM676 102h1V114h-1zM677 101h1V114h-1zM678 102h1V115h-1zM679 101h1V114h-1zM680 103h1V115h-1zM681 101h1V113h-1zM682 102h1V115h-1zM683 101h1V114h-1zM684 102h1V115h-1zM685 103h1V114h-1zM686 101h1V113h-1zM687 98h1V114h-1zM688 103h1V114h-1zM689 102h1V113h-1zM690 102h1V113h-1zM691 101h1V116h-1zM692 101h1V115h-1zM693 101h1V114h-1zM694 101h1V114h-1zM695 102h1V115h-1zM696 102h1V113h-1zM697 103h1V114h-1zM698 101h1V113h-1zM699 102h1V115h-1zM700 101h1V115h-1zM701 103h1V115h-1zM702 103h1V114h-1zM703 103h1V113h-1zM704 101h1V117h-1zM705 101h1V114h-1zM706 102h1V113h-1zM707 101h1V118h-1zM708 101h1V115h-1zM709 101h1V113h-1zM710 102h1V115h-1zM711 100h1V114h-1zM712 102h1V113h-1zM713 103h1V113h-1zM714 103h1V113h-1zM715 103h1V118h-1zM716 103h1V113h-1zM717 103h1V114h-1zM718 101h1V113h-1zM719 101h1V115h-1zM720 101h1V113h-1zM721 103h1V114h-1zM722 103h1V116h-1zM723 102h1V113h-1zM724 101h1V114h-1zM725 102h1V115h-1zM726 101h1V113h-1zM727 101h1V113h-1zM728 99h1V113h-1zM729 102h1V114h-1zM730 102h1V116h-1zM731 103h1V114h-1zM732 101h1V114h-1zM733 103h1V115h-1zM734 101h1V115h-1zM735 102h1V115h-1zM736 101h1V114h-1zM737 102h1V114h-1zM738 101h1V113h-1zM739 102h1V113h-1zM740 103h1V114h-1zM741 102h1V114h-1zM742 102h1V113h-1zM743 102h1V113h-1zM744 103h1V114h-1zM745 102h1V114h-1zM746 101h1V114h-1zM747 102h1V115h-1zM748 101h1V117h-1zM749 101h1V114h-1zM750 102h1V113h-1zM751 102h1V113h-1zM752 102h1V114h-1zM753 101h1V115h-1zM754 103h1V113h-1zM755 102h1V115h-1zM756 103h1V114h-1zM757 102h1V117h-1zM758 103h1V113h-1zM759 103h1V115h-1zM760 102h1V114h-1zM761 103h1V114h-1zM762 102h1V115h-1zM763 102h1V113h-1zM764 103h1V114h-1zM765 103h1V114h-1zM766 99h1V117h-1zM767 101h1V117h-1zM768 102h1V115h-1zM769 102h1V115h-1zM770 102h1V114h-1zM771 102h1V115h-1zM772 102h1V115h-1zM773 101h1V114h-1zM774 102h1V114h-1zM775 102h1V113h-1zM776 103h1V114h-1zM777 101h1V115h-1zM778 101h1V115h-1z" fill="#9a9a06" opacity="0.45"/><path d="M20 102h1V114h-1zM21 103h1V114h-1zM22 101h1V115h-1zM23 100h1V114h-1zM24 103h1V113h-1zM25 102h1V117h-1zM26 102h1V115h-1zM27 102h1V114h-1zM28 101h1V113h-1zM29 103h1V114h-1zM30 102h1V113h-1zM31 102h1V114h-1zM32 103h1V114h-1zM33 103h1V115h-1zM34 102h1V114h-1zM35 103h1V113h-1zM36 102h1V113h-1zM37 103h1V115h-1zM38 101h1V114h-1zM39 101h1V114h-1zM40 103h1V115h-1zM41 103h1V115h-1zM42 102h1V114h-1zM43 102h1V115h-1zM44 103h1V113h-1zM45 101h1V114h-1zM46 103h1V113h-1zM47 102h1V114h-1zM48 102h1V113h-1zM49 103h1V115h-1zM50 102h1V113h-1zM51 103h1V114h-1zM52 103h1V113h-1zM53 103h1V115h-1zM54 102h1V115h-1zM55 102h1V113h-1zM56 102h1V117h-1zM57 103h1V115h-1zM58 101h1V113h-1zM59 103h1V113h-1zM60 102h1V114h-1zM61 102h1V114h-1zM62 101h1V114h-1zM63 101h1V115h-1zM64 101h1V114h-1zM65 103h1V114h-1zM66 101h1V113h-1zM67 103h1V115h-1zM68 103h1V114h-1zM69 103h1V113h-1zM70 101h1V114h-1zM71 103h1V113h-1zM72 102h1V115h-1zM73 103h1V113h-1zM74 103h1V114h-1zM75 101h1V114h-1zM76 101h1V113h-1zM77 102h1V115h-1zM78 101h1V113h-1zM79 100h1V114h-1zM80 98h1V115h-1zM81 103h1V115h-1zM82 103h1V114h-1zM83 102h1V115h-1zM84 102h1V115h-1zM85 102h1V115h-1zM86 103h1V113h-1zM87 103h1V115h-1zM88 101h1V114h-1zM89 101h1V115h-1zM90 102h1V113h-1zM91 103h1V113h-1zM92 101h1V114h-1zM93 101h1V114h-1zM94 103h1V114h-1zM95 101h1V115h-1zM96 101h1V113h-1zM97 101h1V114h-1zM98 103h1V113h-1zM99 102h1V115h-1zM100 101h1V113h-1zM101 103h1V115h-1zM102 103h1V113h-1zM103 103h1V115h-1zM104 101h1V113h-1zM105 102h1V113h-1zM106 102h1V114h-1zM107 103h1V113h-1zM108 102h1V115h-1zM109 101h1V115h-1zM110 103h1V117h-1zM111 102h1V114h-1zM112 101h1V113h-1zM113 102h1V118h-1zM114 102h1V113h-1zM115 102h1V114h-1zM116 102h1V114h-1zM117 102h1V114h-1zM118 102h1V113h-1zM119 101h1V114h-1zM120 102h1V113h-1zM121 102h1V114h-1zM122 102h1V115h-1zM123 102h1V114h-1zM124 102h1V114h-1zM125 103h1V114h-1zM126 103h1V118h-1zM127 100h1V114h-1zM128 102h1V115h-1zM129 103h1V114h-1zM130 101h1V118h-1zM131 102h1V114h-1zM132 101h1V115h-1zM133 103h1V114h-1zM134 101h1V115h-1zM135 103h1V114h-1zM136 101h1V115h-1zM137 101h1V113h-1zM138 102h1V118h-1zM139 102h1V113h-1zM140 101h1V115h-1zM141 102h1V114h-1zM142 103h1V114h-1zM143 102h1V113h-1zM144 103h1V115h-1zM145 102h1V115h-1zM146 101h1V115h-1zM147 102h1V113h-1zM148 101h1V113h-1zM149 103h1V115h-1zM150 103h1V114h-1zM151 99h1V115h-1zM152 101h1V113h-1zM153 101h1V118h-1zM154 103h1V114h-1zM155 103h1V115h-1zM156 102h1V114h-1zM157 101h1V114h-1zM158 101h1V115h-1zM159 101h1V115h-1zM160 103h1V115h-1zM161 102h1V114h-1zM162 101h1V114h-1zM163 103h1V113h-1zM164 102h1V113h-1zM165 102h1V114h-1zM166 101h1V114h-1zM167 97h1V113h-1zM168 102h1V114h-1zM169 103h1V113h-1zM170 102h1V113h-1zM171 101h1V115h-1zM172 101h1V114h-1zM173 101h1V113h-1zM174 101h1V115h-1zM175 102h1V113h-1zM176 103h1V113h-1zM177 101h1V115h-1zM178 102h1V113h-1zM179 102h1V115h-1zM180 101h1V115h-1zM181 101h1V115h-1zM182 101h1V113h-1zM183 103h1V113h-1zM184 101h1V114h-1zM185 101h1V115h-1zM186 101h1V113h-1zM187 102h1V114h-1zM188 102h1V113h-1zM189 103h1V114h-1zM190 103h1V113h-1zM191 102h1V114h-1zM192 102h1V115h-1zM193 103h1V114h-1zM194 102h1V115h-1zM195 103h1V115h-1zM196 102h1V113h-1zM197 102h1V115h-1zM198 101h1V115h-1zM199 102h1V113h-1zM200 102h1V113h-1zM201 101h1V115h-1zM202 102h1V115h-1zM203 102h1V114h-1zM204 103h1V116h-1zM205 102h1V115h-1zM206 101h1V114h-1zM207 102h1V113h-1zM208 103h1V115h-1zM209 103h1V113h-1zM210 102h1V113h-1zM211 101h1V115h-1zM212 101h1V113h-1zM213 102h1V114h-1zM214 102h1V114h-1zM215 103h1V116h-1zM216 102h1V113h-1zM217 102h1V113h-1zM218 102h1V115h-1zM219 101h1V115h-1zM220 103h1V116h-1zM221 102h1V114h-1zM222 101h1V113h-1zM223 103h1V114h-1zM224 103h1V113h-1zM225 99h1V114h-1zM226 101h1V114h-1zM227 102h1V114h-1zM228 101h1V115h-1zM229 103h1V113h-1zM230 102h1V114h-1zM231 103h1V113h-1zM232 101h1V113h-1zM233 102h1V114h-1zM234 103h1V113h-1zM235 102h1V113h-1zM236 102h1V115h-1zM237 102h1V115h-1zM238 101h1V115h-1zM239 103h1V114h-1zM240 101h1V116h-1zM241 102h1V114h-1zM242 101h1V113h-1zM243 102h1V113h-1zM244 102h1V115h-1zM245 101h1V115h-1zM246 102h1V113h-1zM247 102h1V115h-1zM248 102h1V115h-1zM249 102h1V114h-1zM250 102h1V115h-1zM251 101h1V114h-1zM252 103h1V113h-1zM253 102h1V114h-1zM254 103h1V114h-1zM255 101h1V114h-1zM256 101h1V115h-1zM257 103h1V113h-1zM258 102h1V114h-1zM259 103h1V114h-1zM260 103h1V115h-1zM261 103h1V113h-1zM262 102h1V113h-1zM263 103h1V113h-1zM264 97h1V114h-1zM265 102h1V114h-1zM266 103h1V115h-1zM267 101h1V113h-1zM268 102h1V117h-1zM269 103h1V115h-1zM270 103h1V113h-1zM271 101h1V114h-1zM272 101h1V113h-1zM273 101h1V115h-1zM274 103h1V113h-1zM275 103h1V115h-1zM276 103h1V115h-1zM277 102h1V113h-1zM278 102h1V113h-1zM279 101h1V114h-1zM280 103h1V114h-1zM281 101h1V114h-1zM282 102h1V114h-1zM283 101h1V114h-1zM284 101h1V114h-1zM285 103h1V113h-1zM286 101h1V115h-1zM287 102h1V113h-1zM288 101h1V114h-1zM289 103h1V114h-1zM290 103h1V115h-1zM291 101h1V114h-1zM292 103h1V114h-1zM293 102h1V115h-1zM294 100h1V113h-1zM295 101h1V115h-1zM296 101h1V113h-1zM297 102h1V113h-1zM298 103h1V114h-1zM299 101h1V113h-1zM300 98h1V115h-1zM301 103h1V114h-1zM302 103h1V114h-1zM303 102h1V113h-1zM304 101h1V114h-1zM305 103h1V113h-1zM306 101h1V114h-1zM307 102h1V113h-1zM308 101h1V113h-1zM309 103h1V113h-1zM310 101h1V114h-1zM311 103h1V113h-1zM312 102h1V114h-1zM313 102h1V114h-1zM314 102h1V114h-1zM315 102h1V115h-1zM316 101h1V113h-1zM317 100h1V115h-1zM318 101h1V115h-1zM319 101h1V113h-1zM320 99h1V113h-1zM321 103h1V113h-1zM322 102h1V115h-1zM323 102h1V115h-1zM324 102h1V113h-1zM325 102h1V114h-1zM326 101h1V113h-1zM327 101h1V114h-1zM328 103h1V114h-1zM329 103h1V115h-1zM330 103h1V114h-1zM331 103h1V115h-1zM332 103h1V114h-1zM333 103h1V113h-1zM334 101h1V115h-1zM335 101h1V115h-1zM336 103h1V114h-1zM337 103h1V113h-1zM338 103h1V114h-1zM339 102h1V113h-1zM340 101h1V115h-1zM341 103h1V114h-1zM342 103h1V115h-1zM343 101h1V115h-1zM344 103h1V113h-1zM345 101h1V115h-1zM346 102h1V114h-1zM347 100h1V113h-1zM348 103h1V114h-1zM349 102h1V114h-1zM350 102h1V113h-1zM351 102h1V113h-1zM352 101h1V115h-1zM353 102h1V114h-1zM354 101h1V114h-1zM355 101h1V113h-1zM356 101h1V114h-1zM357 103h1V113h-1zM358 102h1V114h-1zM359 102h1V117h-1zM360 102h1V115h-1zM361 103h1V115h-1zM362 101h1V113h-1zM363 103h1V114h-1zM364 102h1V115h-1zM365 102h1V115h-1zM366 102h1V114h-1zM367 101h1V113h-1zM368 102h1V114h-1zM369 102h1V114h-1zM370 103h1V114h-1zM371 101h1V114h-1zM372 101h1V113h-1zM373 102h1V113h-1zM374 102h1V115h-1zM375 102h1V119h-1zM376 101h1V115h-1zM377 103h1V114h-1zM378 102h1V114h-1zM379 102h1V114h-1zM380 102h1V113h-1zM381 103h1V113h-1zM382 101h1V114h-1zM383 102h1V114h-1zM384 102h1V115h-1zM385 103h1V115h-1zM386 101h1V113h-1zM387 103h1V114h-1zM388 103h1V114h-1zM389 101h1V115h-1zM390 102h1V114h-1zM391 101h1V114h-1zM392 102h1V114h-1zM393 101h1V114h-1zM394 102h1V114h-1zM395 102h1V114h-1zM396 102h1V114h-1zM397 103h1V114h-1zM398 103h1V113h-1zM399 102h1V114h-1zM400 101h1V114h-1zM401 101h1V114h-1zM402 102h1V113h-1zM403 102h1V113h-1zM404 103h1V115h-1zM405 102h1V115h-1zM406 101h1V114h-1zM407 101h1V113h-1zM408 102h1V115h-1zM409 100h1V113h-1zM410 101h1V115h-1zM411 101h1V115h-1zM412 101h1V115h-1zM413 101h1V114h-1zM414 102h1V114h-1zM415 102h1V113h-1zM416 102h1V113h-1zM417 103h1V115h-1zM418 103h1V114h-1zM419 101h1V114h-1zM420 101h1V115h-1zM421 102h1V117h-1zM422 103h1V113h-1zM423 101h1V114h-1zM424 101h1V113h-1zM425 102h1V115h-1zM426 103h1V114h-1zM427 103h1V113h-1zM428 103h1V113h-1zM429 102h1V114h-1zM430 101h1V114h-1zM431 103h1V115h-1zM432 103h1V115h-1zM433 101h1V114h-1zM434 101h1V114h-1zM435 102h1V114h-1zM436 102h1V114h-1zM437 103h1V115h-1zM438 102h1V114h-1zM439 102h1V115h-1zM440 101h1V115h-1zM441 103h1V114h-1zM442 102h1V115h-1zM443 101h1V113h-1zM444 103h1V114h-1zM445 101h1V114h-1zM446 103h1V114h-1zM447 102h1V116h-1zM448 103h1V114h-1zM449 103h1V115h-1zM450 102h1V115h-1zM451 102h1V115h-1zM452 103h1V115h-1zM453 101h1V115h-1zM454 103h1V114h-1zM455 102h1V113h-1zM456 103h1V115h-1zM457 101h1V115h-1zM458 102h1V113h-1zM459 103h1V113h-1zM460 103h1V114h-1zM461 102h1V113h-1zM462 102h1V114h-1zM463 102h1V114h-1zM464 103h1V114h-1zM465 101h1V113h-1zM466 102h1V115h-1zM467 103h1V115h-1zM468 102h1V115h-1zM469 102h1V114h-1zM470 103h1V114h-1zM471 103h1V114h-1zM472 103h1V114h-1zM473 101h1V115h-1zM474 102h1V115h-1zM475 103h1V114h-1zM476 103h1V115h-1zM477 102h1V113h-1zM478 103h1V115h-1zM479 101h1V113h-1zM480 101h1V115h-1zM481 103h1V113h-1zM482 102h1V114h-1zM483 103h1V115h-1zM484 102h1V114h-1zM485 101h1V115h-1zM486 101h1V117h-1zM487 103h1V115h-1zM488 103h1V115h-1zM489 103h1V115h-1zM490 101h1V114h-1zM491 103h1V115h-1zM492 103h1V114h-1zM493 103h1V113h-1zM494 102h1V114h-1zM495 103h1V113h-1zM496 103h1V115h-1zM497 102h1V114h-1zM498 102h1V115h-1zM499 103h1V115h-1zM500 102h1V113h-1zM501 103h1V114h-1zM502 101h1V113h-1zM503 101h1V114h-1zM504 102h1V115h-1zM505 103h1V114h-1zM506 101h1V114h-1zM507 102h1V114h-1zM508 102h1V114h-1zM509 102h1V115h-1zM510 101h1V118h-1zM511 103h1V114h-1zM512 103h1V116h-1zM513 101h1V113h-1zM514 102h1V113h-1zM515 101h1V115h-1zM516 102h1V114h-1zM517 103h1V115h-1zM518 102h1V113h-1zM519 102h1V113h-1zM520 103h1V114h-1zM521 101h1V114h-1zM522 100h1V115h-1zM523 103h1V114h-1zM524 101h1V113h-1zM525 103h1V113h-1zM526 101h1V114h-1zM527 102h1V116h-1zM528 103h1V113h-1zM529 102h1V115h-1zM530 101h1V114h-1zM531 103h1V114h-1zM532 102h1V113h-1zM533 103h1V118h-1zM534 103h1V113h-1zM535 103h1V114h-1zM536 101h1V115h-1zM537 101h1V114h-1zM538 102h1V114h-1zM539 102h1V115h-1zM540 103h1V115h-1zM541 101h1V114h-1zM542 101h1V114h-1zM543 101h1V113h-1zM544 103h1V113h-1zM545 102h1V114h-1zM546 102h1V115h-1zM547 100h1V113h-1zM548 102h1V115h-1zM549 102h1V114h-1zM550 103h1V113h-1zM551 101h1V113h-1zM552 101h1V113h-1zM553 103h1V114h-1zM554 101h1V114h-1zM555 102h1V114h-1zM556 102h1V114h-1zM557 102h1V113h-1zM558 103h1V115h-1zM559 102h1V114h-1zM560 103h1V114h-1zM561 101h1V113h-1zM562 97h1V113h-1zM563 102h1V113h-1zM564 103h1V114h-1zM565 102h1V114h-1zM566 102h1V115h-1zM567 102h1V115h-1zM568 100h1V115h-1zM569 102h1V113h-1zM570 102h1V114h-1zM571 103h1V114h-1zM572 102h1V113h-1zM573 101h1V113h-1zM574 103h1V115h-1zM575 101h1V113h-1zM576 102h1V113h-1zM577 102h1V114h-1zM578 103h1V114h-1zM579 102h1V114h-1zM580 102h1V113h-1zM581 103h1V114h-1zM582 102h1V115h-1zM583 102h1V114h-1zM584 103h1V115h-1zM585 103h1V115h-1zM586 101h1V113h-1zM587 102h1V113h-1zM588 102h1V115h-1zM589 103h1V114h-1zM590 101h1V115h-1zM591 102h1V114h-1zM592 102h1V114h-1zM593 101h1V114h-1zM594 101h1V115h-1zM595 102h1V115h-1zM596 103h1V114h-1zM597 103h1V113h-1zM598 102h1V113h-1zM599 102h1V113h-1zM600 103h1V114h-1zM601 103h1V113h-1zM602 103h1V115h-1zM603 99h1V114h-1zM604 101h1V113h-1zM605 101h1V114h-1zM606 101h1V115h-1zM607 102h1V115h-1zM608 101h1V115h-1zM609 102h1V114h-1zM610 102h1V114h-1zM611 103h1V113h-1zM612 103h1V115h-1zM613 101h1V114h-1zM614 102h1V114h-1zM615 103h1V114h-1zM616 101h1V115h-1zM617 103h1V114h-1zM618 101h1V114h-1zM619 103h1V114h-1zM620 103h1V115h-1zM621 101h1V114h-1zM622 102h1V115h-1zM623 103h1V114h-1zM624 102h1V115h-1zM625 102h1V114h-1zM626 103h1V114h-1zM627 101h1V115h-1zM628 102h1V113h-1zM629 102h1V113h-1zM630 103h1V115h-1zM631 102h1V113h-1zM632 103h1V113h-1zM633 101h1V114h-1zM634 102h1V114h-1zM635 103h1V115h-1zM636 102h1V116h-1zM637 101h1V113h-1zM638 103h1V114h-1zM639 102h1V113h-1zM640 102h1V115h-1zM641 102h1V115h-1zM642 102h1V113h-1zM643 103h1V113h-1zM644 101h1V114h-1zM645 100h1V115h-1zM646 102h1V114h-1zM647 101h1V113h-1zM648 103h1V115h-1zM649 103h1V113h-1zM650 101h1V113h-1zM651 102h1V115h-1zM652 101h1V115h-1zM653 102h1V115h-1zM654 102h1V113h-1zM655 101h1V115h-1zM656 103h1V115h-1zM657 103h1V115h-1zM658 103h1V115h-1zM659 101h1V113h-1zM660 101h1V114h-1zM661 102h1V114h-1zM662 101h1V114h-1zM663 102h1V114h-1zM664 103h1V115h-1zM665 101h1V114h-1zM666 102h1V114h-1zM667 101h1V115h-1zM668 103h1V113h-1zM669 103h1V113h-1zM670 102h1V115h-1zM671 101h1V113h-1zM672 102h1V114h-1zM673 101h1V114h-1zM674 100h1V113h-1zM675 103h1V115h-1zM676 101h1V113h-1zM677 101h1V116h-1zM678 103h1V115h-1zM679 103h1V113h-1zM680 102h1V114h-1zM681 100h1V115h-1zM682 101h1V114h-1zM683 102h1V115h-1zM684 102h1V113h-1zM685 102h1V113h-1zM686 99h1V115h-1zM687 102h1V117h-1zM688 102h1V113h-1zM689 102h1V113h-1zM690 102h1V117h-1zM691 102h1V113h-1zM692 99h1V115h-1zM693 101h1V114h-1zM694 102h1V114h-1zM695 101h1V114h-1zM696 101h1V114h-1zM697 102h1V115h-1zM698 103h1V115h-1zM699 103h1V115h-1zM700 103h1V115h-1zM701 101h1V114h-1zM702 101h1V114h-1zM703 101h1V114h-1zM704 102h1V115h-1zM705 102h1V115h-1zM706 102h1V113h-1zM707 103h1V113h-1zM708 102h1V113h-1zM709 101h1V115h-1zM710 103h1V113h-1zM711 102h1V118h-1zM712 101h1V113h-1zM713 102h1V115h-1zM714 102h1V113h-1zM715 102h1V115h-1zM716 103h1V114h-1zM717 98h1V115h-1zM718 103h1V115h-1zM719 102h1V114h-1zM720 102h1V114h-1zM721 103h1V114h-1zM722 101h1V115h-1zM723 103h1V113h-1zM724 103h1V114h-1zM725 101h1V113h-1zM726 103h1V114h-1zM727 101h1V114h-1zM728 102h1V113h-1zM729 102h1V113h-1zM730 103h1V115h-1zM731 102h1V115h-1zM732 102h1V115h-1zM733 102h1V113h-1zM734 97h1V113h-1zM735 101h1V114h-1zM736 103h1V114h-1zM737 103h1V114h-1zM738 102h1V114h-1zM739 102h1V113h-1zM740 102h1V115h-1zM741 101h1V114h-1zM742 101h1V119h-1zM743 98h1V114h-1zM744 102h1V115h-1zM745 102h1V113h-1zM746 101h1V113h-1zM747 101h1V114h-1zM748 102h1V114h-1zM749 101h1V113h-1zM750 101h1V115h-1zM751 101h1V115h-1zM752 102h1V114h-1zM753 102h1V113h-1zM754 102h1V114h-1zM755 101h1V115h-1zM756 103h1V113h-1zM757 103h1V115h-1zM758 102h1V114h-1zM759 103h1V114h-1zM760 102h1V115h-1zM761 103h1V116h-1zM762 103h1V113h-1zM763 101h1V115h-1zM764 100h1V114h-1zM765 102h1V118h-1zM766 98h1V114h-1zM767 103h1V114h-1zM768 102h1V115h-1zM769 101h1V113h-1zM770 102h1V115h-1zM771 103h1V114h-1zM772 102h1V114h-1zM773 101h1V119h-1zM774 101h1V114h-1zM775 101h1V115h-1zM776 103h1V113h-1zM777 103h1V115h-1zM778 102h1V113h-1z" fill="#9a9a06" opacity="0.45"/><path d="M20 102h1V114h-1zM21 103h1V113h-1zM22 103h1V113h-1zM23 102h1V112h-1zM24 103h1V113h-1zM25 103h1V113h-1zM26 104h1V113h-1zM27 103h1V113h-1zM28 103h1V113h-1zM29 103h1V112h-1zM30 103h1V113h-1zM31 104h1V113h-1zM32 102h1V112h-1zM33 103h1V113h-1zM34 103h1V113h-1zM35 102h1V112h-1zM36 102h1V112h-1zM37 104h1V113h-1zM38 103h1V115h-1zM39 103h1V114h-1zM40 102h1V112h-1zM41 103h1V113h-1zM42 103h1V113h-1zM43 103h1V113h-1zM44 102h1V114h-1zM45 103h1V113h-1zM46 104h1V113h-1zM47 103h1V113h-1zM48 104h1V113h-1zM49 103h1V113h-1zM50 104h1V112h-1zM51 103h1V113h-1zM52 103h1V113h-1zM53 103h1V113h-1zM54 103h1V114h-1zM55 104h1V112h-1zM56 103h1V112h-1zM57 103h1V113h-1zM58 104h1V114h-1zM59 103h1V113h-1zM60 103h1V113h-1zM61 103h1V113h-1zM62 103h1V113h-1zM63 103h1V112h-1zM64 103h1V113h-1zM65 102h1V112h-1zM66 103h1V113h-1zM67 103h1V113h-1zM68 103h1V113h-1zM69 103h1V113h-1zM70 102h1V113h-1zM71 103h1V113h-1zM72 103h1V112h-1zM73 104h1V113h-1zM74 104h1V113h-1zM75 104h1V113h-1zM76 103h1V112h-1zM77 103h1V114h-1zM78 104h1V113h-1zM79 102h1V114h-1zM80 103h1V113h-1zM81 103h1V113h-1zM82 102h1V113h-1zM83 105h1V113h-1zM84 103h1V113h-1zM85 104h1V113h-1zM86 103h1V113h-1zM87 102h1V114h-1zM88 103h1V113h-1zM89 104h1V113h-1zM90 103h1V113h-1zM91 103h1V114h-1zM92 102h1V113h-1zM93 103h1V113h-1zM94 103h1V113h-1zM95 103h1V112h-1zM96 102h1V113h-1zM97 103h1V113h-1zM98 103h1V112h-1zM99 103h1V113h-1zM100 105h1V113h-1zM101 104h1V112h-1zM102 102h1V113h-1zM103 103h1V114h-1zM104 103h1V113h-1zM105 102h1V112h-1zM106 102h1V113h-1zM107 103h1V113h-1zM108 103h1V113h-1zM109 102h1V113h-1zM110 103h1V112h-1zM111 103h1V113h-1zM112 103h1V114h-1zM113 103h1V114h-1zM114 103h1V114h-1zM115 102h1V113h-1zM116 104h1V113h-1zM117 103h1V113h-1zM118 104h1V114h-1zM119 103h1V113h-1zM120 103h1V114h-1zM121 103h1V112h-1zM122 103h1V113h-1zM123 103h1V113h-1zM124 103h1V112h-1zM125 104h1V113h-1zM126 103h1V113h-1zM127 103h1V112h-1zM128 102h1V113h-1zM129 103h1V113h-1zM130 102h1V114h-1zM131 104h1V113h-1zM132 103h1V113h-1zM133 103h1V112h-1zM134 103h1V113h-1zM135 102h1V113h-1zM136 103h1V113h-1zM137 103h1V114h-1zM138 102h1V114h-1zM139 103h1V112h-1zM140 103h1V113h-1zM141 103h1V112h-1zM142 103h1V113h-1zM143 104h1V114h-1zM144 103h1V112h-1zM145 103h1V114h-1zM146 103h1V113h-1zM147 103h1V112h-1zM148 102h1V113h-1zM149 104h1V113h-1zM150 102h1V113h-1zM151 102h1V113h-1zM152 103h1V114h-1zM153 102h1V113h-1zM154 103h1V113h-1zM155 102h1V114h-1zM156 103h1V113h-1zM157 103h1V114h-1zM158 104h1V113h-1zM159 103h1V113h-1zM160 103h1V113h-1zM161 103h1V113h-1zM162 104h1V113h-1zM163 103h1V114h-1zM164 102h1V114h-1zM165 102h1V113h-1zM166 103h1V113h-1zM167 104h1V113h-1zM168 103h1V113h-1zM169 102h1V113h-1zM170 102h1V112h-1zM171 103h1V112h-1zM172 103h1V113h-1zM173 103h1V112h-1zM174 102h1V113h-1zM175 104h1V113h-1zM176 103h1V113h-1zM177 103h1V113h-1zM178 104h1V114h-1zM179 103h1V114h-1zM180 104h1V113h-1zM181 105h1V113h-1zM182 102h1V113h-1zM183 104h1V113h-1zM184 103h1V113h-1zM185 104h1V113h-1zM186 104h1V113h-1zM187 103h1V113h-1zM188 103h1V114h-1zM189 102h1V112h-1zM190 104h1V114h-1zM191 103h1V114h-1zM192 104h1V113h-1zM193 103h1V113h-1zM194 102h1V113h-1zM195 103h1V112h-1zM196 102h1V113h-1zM197 103h1V112h-1zM198 103h1V113h-1zM199 103h1V113h-1zM200 103h1V113h-1zM201 103h1V113h-1zM202 102h1V113h-1zM203 102h1V113h-1zM204 103h1V114h-1zM205 103h1V113h-1zM206 102h1V113h-1zM207 102h1V114h-1zM208 102h1V112h-1zM209 103h1V113h-1zM210 103h1V113h-1zM211 102h1V113h-1zM212 102h1V113h-1zM213 103h1V113h-1zM214 102h1V112h-1zM215 102h1V113h-1zM216 102h1V113h-1zM217 103h1V114h-1zM218 102h1V113h-1zM219 102h1V113h-1zM220 102h1V113h-1zM221 102h1V114h-1zM222 103h1V112h-1zM223 103h1V113h-1zM224 105h1V113h-1zM225 103h1V113h-1zM226 103h1V113h-1zM227 102h1V113h-1zM228 103h1V113h-1zM229 103h1V113h-1zM230 103h1V112h-1zM231 103h1V112h-1zM232 103h1V113h-1zM233 104h1V113h-1zM234 103h1V113h-1zM235 103h1V113h-1zM236 104h1V113h-1zM237 104h1V112h-1zM238 103h1V113h-1zM239 102h1V113h-1zM240 103h1V113h-1zM241 104h1V113h-1zM242 104h1V113h-1zM243 103h1V113h-1zM244 102h1V114h-1zM245 103h1V113h-1zM246 103h1V113h-1zM247 103h1V113h-1zM248 102h1V114h-1zM249 102h1V113h-1zM250 103h1V112h-1zM251 103h1V112h-1zM252 103h1V114h-1zM253 102h1V113h-1zM254 102h1V113h-1zM255 102h1V113h-1zM256 103h1V114h-1zM257 104h1V113h-1zM258 103h1V114h-1zM259 103h1V114h-1zM260 103h1V113h-1zM261 103h1V113h-1zM262 104h1V113h-1zM263 103h1V113h-1zM264 103h1V113h-1zM265 102h1V113h-1zM266 102h1V114h-1zM267 103h1V113h-1zM268 103h1V114h-1zM269 103h1V114h-1zM270 103h1V114h-1zM271 103h1V113h-1zM272 103h1V114h-1zM273 103h1V114h-1zM274 103h1V113h-1zM275 102h1V112h-1zM276 103h1V113h-1zM277 103h1V112h-1zM278 104h1V113h-1zM279 103h1V113h-1zM280 104h1V113h-1zM281 103h1V112h-1zM282 103h1V113h-1zM283 103h1V113h-1zM284 103h1V112h-1zM285 103h1V113h-1zM286 102h1V113h-1zM287 103h1V114h-1zM288 102h1V112h-1zM289 104h1V113h-1zM290 103h1V112h-1zM291 103h1V113h-1zM292 103h1V113h-1zM293 102h1V113h-1zM294 103h1V113h-1zM295 103h1V114h-1zM296 103h1V113h-1zM297 103h1V113h-1zM298 103h1V113h-1zM299 103h1V114h-1zM300 102h1V113h-1zM301 103h1V113h-1zM302 103h1V113h-1zM303 103h1V113h-1zM304 102h1V112h-1zM305 104h1V113h-1zM306 103h1V113h-1zM307 102h1V112h-1zM308 104h1V113h-1zM309 104h1V113h-1zM310 104h1V114h-1zM311 103h1V113h-1zM312 104h1V113h-1zM313 103h1V114h-1zM314 103h1V113h-1zM315 104h1V113h-1zM316 103h1V113h-1zM317 103h1V113h-1zM318 103h1V112h-1zM319 103h1V113h-1zM320 102h1V113h-1zM321 102h1V113h-1zM322 103h1V114h-1zM323 102h1V114h-1zM324 102h1V112h-1zM325 103h1V112h-1zM326 103h1V113h-1zM327 103h1V113h-1zM328 104h1V113h-1zM329 103h1V113h-1zM330 103h1V113h-1zM331 103h1V113h-1zM332 103h1V112h-1zM333 103h1V112h-1zM334 104h1V112h-1zM335 103h1V114h-1zM336 104h1V113h-1zM337 103h1V113h-1zM338 103h1V113h-1zM339 104h1V114h-1zM340 103h1V113h-1zM341 103h1V114h-1zM342 104h1V112h-1zM343 103h1V113h-1zM344 103h1V113h-1zM345 104h1V113h-1zM346 103h1V113h-1zM347 103h1V113h-1zM348 104h1V113h-1zM349 102h1V113h-1zM350 104h1V113h-1zM351 102h1V113h-1zM352 102h1V113h-1zM353 102h1V112h-1zM354 104h1V113h-1zM355 103h1V114h-1zM356 102h1V113h-1zM357 103h1V113h-1zM358 102h1V113h-1zM359 102h1V113h-1zM360 103h1V112h-1zM361 103h1V113h-1zM362 103h1V113h-1zM363 102h1V113h-1zM364 103h1V113h-1zM365 103h1V112h-1zM366 103h1V113h-1zM367 104h1V113h-1zM368 104h1V113h-1zM369 102h1V114h-1zM370 102h1V113h-1zM371 102h1V114h-1zM372 103h1V112h-1zM373 103h1V114h-1zM374 102h1V114h-1zM375 103h1V114h-1zM376 102h1V113h-1zM377 102h1V113h-1zM378 104h1V114h-1zM379 104h1V113h-1zM380 102h1V112h-1zM381 103h1V112h-1zM382 104h1V111h-1zM383 102h1V113h-1zM384 103h1V113h-1zM385 103h1V112h-1zM386 102h1V114h-1zM387 103h1V113h-1zM388 103h1V112h-1zM389 102h1V112h-1zM390 102h1V113h-1zM391 103h1V114h-1zM392 102h1V113h-1zM393 103h1V113h-1zM394 103h1V113h-1zM395 104h1V113h-1zM396 103h1V113h-1zM397 103h1V113h-1zM398 103h1V113h-1zM399 104h1V113h-1zM400 103h1V113h-1zM401 103h1V114h-1zM402 103h1V113h-1zM403 102h1V113h-1zM404 103h1V114h-1zM405 102h1V112h-1zM406 103h1V112h-1zM407 101h1V112h-1zM408 102h1V113h-1zM409 102h1V113h-1zM410 103h1V113h-1zM411 102h1V114h-1zM412 103h1V113h-1zM413 103h1V112h-1zM414 103h1V114h-1zM415 103h1V112h-1zM416 103h1V112h-1zM417 102h1V115h-1zM418 104h1V113h-1zM419 103h1V113h-1zM420 103h1V113h-1zM421 102h1V112h-1zM422 103h1V114h-1zM423 104h1V112h-1zM424 103h1V113h-1zM425 104h1V112h-1zM426 102h1V113h-1zM427 103h1V113h-1zM428 103h1V114h-1zM429 103h1V114h-1zM430 103h1V113h-1zM431 103h1V113h-1zM432 104h1V113h-1zM433 103h1V113h-1zM434 104h1V113h-1zM435 103h1V113h-1zM436 103h1V114h-1zM437 103h1V112h-1zM438 104h1V113h-1zM439 103h1V114h-1zM440 102h1V112h-1zM441 102h1V112h-1zM442 103h1V113h-1zM443 104h1V112h-1zM444 103h1V113h-1zM445 103h1V113h-1zM446 103h1V113h-1zM447 103h1V112h-1zM448 102h1V112h-1zM449 103h1V114h-1zM450 103h1V114h-1zM451 103h1V113h-1zM452 103h1V113h-1zM453 103h1V113h-1zM454 103h1V112h-1zM455 104h1V113h-1zM456 103h1V114h-1zM457 104h1V113h-1zM458 103h1V113h-1zM459 104h1V113h-1zM460 103h1V113h-1zM461 103h1V112h-1zM462 103h1V112h-1zM463 104h1V113h-1zM464 103h1V112h-1zM465 103h1V113h-1zM466 103h1V113h-1zM467 103h1V112h-1zM468 104h1V113h-1zM469 103h1V112h-1zM470 102h1V113h-1zM471 102h1V114h-1zM472 103h1V113h-1zM473 103h1V112h-1zM474 103h1V113h-1zM475 103h1V113h-1zM476 104h1V112h-1zM477 103h1V113h-1zM478 103h1V112h-1zM479 103h1V113h-1zM480 103h1V114h-1zM481 102h1V112h-1zM482 104h1V113h-1zM483 104h1V112h-1zM484 103h1V112h-1zM485 104h1V114h-1zM486 102h1V112h-1zM487 103h1V112h-1zM488 103h1V113h-1zM489 102h1V113h-1zM490 104h1V113h-1zM491 103h1V113h-1zM492 104h1V113h-1zM493 103h1V113h-1zM494 103h1V113h-1zM495 103h1V113h-1zM496 103h1V113h-1zM497 102h1V111h-1zM498 102h1V113h-1zM499 103h1V113h-1zM500 104h1V114h-1zM501 103h1V112h-1zM502 103h1V114h-1zM503 103h1V112h-1zM504 103h1V114h-1zM505 103h1V112h-1zM506 103h1V114h-1zM507 103h1V114h-1zM508 103h1V112h-1zM509 102h1V112h-1zM510 103h1V112h-1zM511 104h1V113h-1zM512 103h1V114h-1zM513 104h1V113h-1zM514 103h1V112h-1zM515 103h1V112h-1zM516 102h1V112h-1zM517 103h1V113h-1zM518 104h1V112h-1zM519 103h1V113h-1zM520 102h1V112h-1zM521 103h1V113h-1zM522 103h1V114h-1zM523 103h1V113h-1zM524 103h1V112h-1zM525 104h1V113h-1zM526 103h1V113h-1zM527 103h1V112h-1zM528 103h1V113h-1zM529 103h1V113h-1zM530 103h1V114h-1zM531 103h1V114h-1zM532 104h1V112h-1zM533 103h1V113h-1zM534 103h1V112h-1zM535 103h1V114h-1zM536 102h1V112h-1zM537 104h1V113h-1zM538 103h1V113h-1zM539 103h1V114h-1zM540 104h1V113h-1zM541 102h1V114h-1zM542 103h1V113h-1zM543 104h1V112h-1zM544 103h1V113h-1zM545 102h1V113h-1zM546 104h1V113h-1zM547 103h1V112h-1zM548 104h1V113h-1zM549 104h1V113h-1zM550 103h1V114h-1zM551 102h1V112h-1zM552 104h1V113h-1zM553 102h1V113h-1zM554 103h1V113h-1zM555 104h1V114h-1zM556 103h1V113h-1zM557 103h1V113h-1zM558 103h1V114h-1zM559 103h1V113h-1zM560 103h1V111h-1zM561 103h1V112h-1zM562 103h1V113h-1zM563 104h1V112h-1zM564 102h1V114h-1zM565 103h1V114h-1zM566 103h1V114h-1zM567 103h1V113h-1zM568 103h1V112h-1zM569 103h1V112h-1zM570 103h1V112h-1zM571 104h1V112h-1zM572 103h1V113h-1zM573 103h1V112h-1zM574 103h1V113h-1zM575 102h1V113h-1zM576 103h1V113h-1zM577 103h1V113h-1zM578 103h1V113h-1zM579 104h1V112h-1zM580 103h1V113h-1zM581 103h1V113h-1zM582 102h1V113h-1zM583 103h1V113h-1zM584 104h1V113h-1zM585 101h1V112h-1zM586 102h1V113h-1zM587 104h1V113h-1zM588 103h1V113h-1zM589 102h1V113h-1zM590 103h1V114h-1zM591 103h1V114h-1zM592 103h1V113h-1zM593 102h1V113h-1zM594 103h1V112h-1zM595 102h1V113h-1zM596 103h1V112h-1zM597 103h1V113h-1zM598 102h1V113h-1zM599 103h1V113h-1zM600 103h1V114h-1zM601 103h1V113h-1zM602 103h1V113h-1zM603 103h1V113h-1zM604 103h1V113h-1zM605 103h1V113h-1zM606 104h1V114h-1zM607 104h1V114h-1zM608 103h1V113h-1zM609 102h1V114h-1zM610 103h1V113h-1zM611 103h1V113h-1zM612 103h1V114h-1zM613 103h1V113h-1zM614 103h1V112h-1zM615 103h1V113h-1zM616 103h1V112h-1zM617 104h1V113h-1zM618 103h1V113h-1zM619 103h1V114h-1zM620 102h1V114h-1zM621 103h1V113h-1zM622 104h1V114h-1zM623 103h1V112h-1zM624 103h1V114h-1zM625 103h1V113h-1zM626 103h1V113h-1zM627 103h1V113h-1zM628 102h1V114h-1zM629 103h1V113h-1zM630 103h1V113h-1zM631 104h1V113h-1zM632 103h1V112h-1zM633 102h1V113h-1zM634 103h1V114h-1zM635 103h1V112h-1zM636 101h1V113h-1zM637 103h1V113h-1zM638 104h1V114h-1zM639 103h1V114h-1zM640 103h1V114h-1zM641 103h1V113h-1zM642 103h1V112h-1zM643 103h1V113h-1zM644 103h1V113h-1zM645 102h1V112h-1zM646 102h1V113h-1zM647 103h1V113h-1zM648 103h1V113h-1zM649 104h1V113h-1zM650 103h1V113h-1zM651 103h1V114h-1zM652 102h1V114h-1zM653 104h1V113h-1zM654 103h1V113h-1zM655 103h1V113h-1zM656 104h1V113h-1zM657 103h1V114h-1zM658 103h1V113h-1zM659 102h1V114h-1zM660 103h1V113h-1zM661 102h1V113h-1zM662 103h1V112h-1zM663 103h1V113h-1zM664 103h1V113h-1zM665 103h1V114h-1zM666 103h1V114h-1zM667 103h1V113h-1zM668 103h1V113h-1zM669 103h1V112h-1zM670 103h1V112h-1zM671 103h1V112h-1zM672 103h1V113h-1zM673 104h1V113h-1zM674 103h1V111h-1zM675 102h1V113h-1zM676 103h1V114h-1zM677 105h1V113h-1zM678 102h1V112h-1zM679 102h1V113h-1zM680 103h1V113h-1zM681 103h1V113h-1zM682 103h1V112h-1zM683 104h1V113h-1zM684 103h1V113h-1zM685 103h1V113h-1zM686 103h1V112h-1zM687 103h1V113h-1zM688 103h1V113h-1zM689 102h1V114h-1zM690 102h1V113h-1zM691 104h1V113h-1zM692 102h1V114h-1zM693 103h1V113h-1zM694 104h1V113h-1zM695 104h1V112h-1zM696 103h1V113h-1zM697 103h1V112h-1zM698 104h1V112h-1zM699 104h1V114h-1zM700 103h1V113h-1zM701 102h1V113h-1zM702 103h1V113h-1zM703 103h1V112h-1zM704 103h1V112h-1zM705 103h1V112h-1zM706 103h1V113h-1zM707 103h1V113h-1zM708 103h1V113h-1zM709 103h1V113h-1zM710 104h1V112h-1zM711 104h1V114h-1zM712 104h1V112h-1zM713 103h1V113h-1zM714 103h1V113h-1zM715 103h1V113h-1zM716 103h1V113h-1zM717 103h1V112h-1zM718 103h1V112h-1zM719 103h1V112h-1zM720 103h1V112h-1zM721 104h1V113h-1zM722 102h1V112h-1zM723 103h1V113h-1zM724 103h1V113h-1zM725 103h1V112h-1zM726 103h1V114h-1zM727 103h1V114h-1zM728 103h1V112h-1zM729 103h1V113h-1zM730 102h1V113h-1zM731 102h1V113h-1zM732 103h1V113h-1zM733 104h1V112h-1zM734 103h1V112h-1zM735 103h1V112h-1zM736 105h1V113h-1zM737 104h1V113h-1zM738 104h1V112h-1zM739 102h1V113h-1zM740 103h1V113h-1zM741 103h1V113h-1zM742 103h1V112h-1zM743 103h1V113h-1zM744 102h1V113h-1zM745 103h1V113h-1zM746 104h1V114h-1zM747 103h1V114h-1zM748 103h1V113h-1zM749 103h1V113h-1zM750 104h1V113h-1zM751 103h1V113h-1zM752 103h1V112h-1zM753 104h1V112h-1zM754 104h1V113h-1zM755 103h1V113h-1zM756 103h1V113h-1zM757 103h1V112h-1zM758 103h1V113h-1zM759 103h1V112h-1zM760 104h1V114h-1zM761 102h1V113h-1zM762 103h1V113h-1zM763 104h1V115h-1zM764 102h1V113h-1zM765 103h1V113h-1zM766 103h1V114h-1zM767 104h1V114h-1zM768 103h1V113h-1zM769 103h1V113h-1zM770 103h1V113h-1zM771 103h1V113h-1zM772 102h1V114h-1zM773 102h1V113h-1zM774 102h1V113h-1zM775 104h1V113h-1zM776 102h1V113h-1zM777 104h1V113h-1zM778 104h1V114h-1z" fill="#f8f820" opacity="0.9"/><path d="M20 103h1V113h-1zM21 103h1V112h-1zM22 103h1V114h-1zM23 104h1V113h-1zM24 104h1V113h-1zM25 104h1V112h-1zM26 103h1V112h-1zM27 102h1V113h-1zM28 102h1V114h-1zM29 103h1V112h-1zM30 104h1V113h-1zM31 104h1V112h-1zM32 102h1V112h-1zM33 102h1V113h-1zM34 102h1V113h-1zM35 104h1V113h-1zM36 103h1V113h-1zM37 101h1V113h-1zM38 103h1V113h-1zM39 103h1V113h-1zM40 103h1V113h-1zM41 102h1V112h-1zM42 103h1V113h-1zM43 104h1V113h-1zM44 103h1V112h-1zM45 103h1V113h-1zM46 103h1V114h-1zM47 104h1V113h-1zM48 103h1V113h-1zM49 103h1V114h-1zM50 104h1V114h-1zM51 104h1V113h-1zM52 102h1V112h-1zM53 103h1V113h-1zM54 103h1V113h-1zM55 102h1V113h-1zM56 103h1V114h-1zM57 104h1V113h-1zM58 103h1V113h-1zM59 103h1V113h-1zM60 102h1V114h-1zM61 102h1V112h-1zM62 103h1V113h-1zM63 103h1V113h-1zM64 102h1V114h-1zM65 103h1V113h-1zM66 104h1V113h-1zM67 103h1V114h-1zM68 104h1V113h-1zM69 102h1V112h-1zM70 103h1V112h-1zM71 103h1V113h-1zM72 103h1V112h-1zM73 102h1V113h-1zM74 103h1V113h-1zM75 102h1V113h-1zM76 104h1V113h-1zM77 104h1V114h-1zM78 103h1V114h-1zM79 103h1V112h-1zM80 103h1V114h-1zM81 104h1V113h-1zM82 103h1V113h-1zM83 103h1V113h-1zM84 103h1V113h-1zM85 104h1V113h-1zM86 103h1V113h-1zM87 103h1V113h-1zM88 103h1V113h-1zM89 103h1V114h-1zM90 103h1V112h-1zM91 104h1V114h-1zM92 103h1V114h-1zM93 103h1V113h-1zM94 103h1V113h-1zM95 103h1V113h-1zM96 102h1V113h-1zM97 104h1V113h-1zM98 103h1V113h-1zM99 104h1V112h-1zM100 104h1V113h-1zM101 103h1V112h-1zM102 102h1V113h-1zM103 104h1V113h-1zM104 103h1V114h-1zM105 103h1V113h-1zM106 102h1V112h-1zM107 104h1V113h-1zM108 102h1V113h-1zM109 102h1V113h-1zM110 103h1V113h-1zM111 104h1V113h-1zM112 102h1V113h-1zM113 103h1V112h-1zM114 104h1V112h-1zM115 102h1V113h-1zM116 103h1V113h-1zM117 102h1V112h-1zM118 103h1V114h-1zM119 103h1V113h-1zM120 103h1V113h-1zM121 103h1V113h-1zM122 104h1V112h-1zM123 104h1V113h-1zM124 103h1V112h-1zM125 102h1V113h-1zM126 103h1V113h-1zM127 103h1V112h-1zM128 103h1V113h-1zM129 103h1V114h-1zM130 103h1V113h-1zM131 103h1V114h-1zM132 103h1V114h-1zM133 102h1V113h-1zM134 103h1V114h-1zM135 103h1V113h-1zM136 103h1V112h-1zM137 102h1V113h-1zM138 103h1V113h-1zM139 102h1V113h-1zM140 103h1V112h-1zM141 103h1V113h-1zM142 102h1V112h-1zM143 103h1V113h-1zM144 103h1V113h-1zM145 104h1V113h-1zM146 103h1V112h-1zM147 102h1V113h-1zM148 103h1V113h-1zM149 103h1V113h-1zM150 104h1V114h-1zM151 103h1V113h-1zM152 103h1V112h-1zM153 103h1V113h-1zM154 103h1V114h-1zM155 103h1V113h-1zM156 103h1V113h-1zM157 103h1V112h-1zM158 103h1V114h-1zM159 103h1V113h-1zM160 104h1V113h-1zM161 103h1V112h-1zM162 103h1V113h-1zM163 103h1V113h-1zM164 103h1V112h-1zM165 103h1V113h-1zM166 102h1V113h-1zM167 103h1V113h-1zM168 102h1V114h-1zM169 104h1V113h-1zM170 104h1V112h-1zM171 102h1V113h-1zM172 103h1V112h-1zM173 104h1V113h-1zM174 102h1V113h-1zM175 102h1V112h-1zM176 101h1V113h-1zM177 102h1V113h-1zM178 103h1V112h-1zM179 103h1V114h-1zM180 103h1V112h-1zM181 104h1V114h-1zM182 103h1V112h-1zM183 103h1V113h-1zM184 103h1V113h-1zM185 103h1V114h-1zM186 104h1V113h-1zM187 103h1V113h-1zM188 104h1V113h-1zM189 103h1V113h-1zM190 103h1V113h-1zM191 103h1V113h-1zM192 103h1V113h-1zM193 103h1V113h-1zM194 103h1V112h-1zM195 104h1V113h-1zM196 103h1V113h-1zM197 103h1V114h-1zM198 104h1V112h-1zM199 102h1V113h-1zM200 102h1V112h-1zM201 103h1V113h-1zM202 103h1V113h-1zM203 103h1V112h-1zM204 103h1V113h-1zM205 103h1V113h-1zM206 102h1V113h-1zM207 104h1V113h-1zM208 104h1V113h-1zM209 103h1V113h-1zM210 103h1V113h-1zM211 103h1V113h-1zM212 102h1V113h-1zM213 102h1V113h-1zM214 104h1V113h-1zM215 103h1V113h-1zM216 104h1V113h-1zM217 102h1V113h-1zM218 104h1V113h-1zM219 103h1V113h-1zM220 104h1V113h-1zM221 104h1V112h-1zM222 102h1V112h-1zM223 103h1V113h-1zM224 103h1V113h-1zM225 103h1V113h-1zM226 103h1V113h-1zM227 102h1V113h-1zM228 103h1V113h-1zM229 103h1V113h-1zM230 103h1V114h-1zM231 103h1V113h-1zM232 103h1V114h-1zM233 104h1V113h-1zM234 102h1V113h-1zM235 103h1V113h-1zM236 103h1V112h-1zM237 103h1V114h-1zM238 102h1V112h-1zM239 104h1V112h-1zM240 103h1V112h-1zM241 103h1V112h-1zM242 103h1V113h-1zM243 102h1V114h-1zM244 104h1V113h-1zM245 103h1V113h-1zM246 103h1V113h-1zM247 103h1V112h-1zM248 104h1V112h-1zM249 103h1V115h-1zM250 102h1V113h-1zM251 103h1V114h-1zM252 103h1V112h-1zM253 104h1V113h-1zM254 103h1V113h-1zM255 103h1V113h-1zM256 104h1V113h-1zM257 103h1V113h-1zM258 103h1V113h-1zM259 102h1V113h-1zM260 101h1V112h-1zM261 103h1V113h-1zM262 103h1V113h-1zM263 102h1V113h-1zM264 104h1V113h-1zM265 103h1V112h-1zM266 103h1V114h-1zM267 103h1V112h-1zM268 103h1V112h-1zM269 103h1V113h-1zM270 105h1V113h-1zM271 103h1V113h-1zM272 102h1V112h-1zM273 103h1V113h-1zM274 103h1V113h-1zM275 103h1V113h-1zM276 103h1V114h-1zM277 103h1V114h-1zM278 103h1V114h-1zM279 103h1V113h-1zM280 103h1V113h-1zM281 102h1V114h-1zM282 104h1V113h-1zM283 103h1V113h-1zM284 102h1V112h-1zM285 104h1V113h-1zM286 102h1V112h-1zM287 103h1V114h-1zM288 103h1V113h-1zM289 104h1V112h-1zM290 102h1V112h-1zM291 103h1V113h-1zM292 102h1V113h-1zM293 103h1V113h-1zM294 103h1V113h-1zM295 102h1V112h-1zM296 104h1V113h-1zM297 103h1V114h-1zM298 103h1V113h-1zM299 102h1V113h-1zM300 103h1V113h-1zM301 103h1V113h-1zM302 104h1V113h-1zM303 102h1V114h-1zM304 103h1V113h-1zM305 103h1V113h-1zM306 102h1V112h-1zM307 103h1V113h-1zM308 103h1V112h-1zM309 104h1V113h-1zM310 103h1V115h-1zM311 103h1V113h-1zM312 103h1V113h-1zM313 102h1V112h-1zM314 102h1V113h-1zM315 103h1V114h-1zM316 103h1V113h-1zM317 103h1V113h-1zM318 103h1V114h-1zM319 103h1V113h-1zM320 103h1V114h-1zM321 104h1V113h-1zM322 103h1V112h-1zM323 104h1V112h-1zM324 103h1V113h-1zM325 103h1V113h-1zM326 104h1V113h-1zM327 103h1V113h-1zM328 103h1V113h-1zM329 103h1V113h-1zM330 103h1V113h-1zM331 103h1V114h-1zM332 102h1V112h-1zM333 102h1V112h-1zM334 103h1V114h-1zM335 103h1V113h-1zM336 103h1V114h-1zM337 103h1V113h-1zM338 103h1V115h-1zM339 103h1V113h-1zM340 102h1V112h-1zM341 105h1V113h-1zM342 104h1V112h-1zM343 103h1V114h-1zM344 103h1V112h-1zM345 103h1V113h-1zM346 103h1V112h-1zM347 103h1V114h-1zM348 103h1V113h-1zM349 104h1V115h-1zM350 103h1V113h-1zM351 102h1V113h-1zM352 104h1V112h-1zM353 103h1V111h-1zM354 104h1V114h-1zM355 103h1V113h-1zM356 104h1V113h-1zM357 103h1V113h-1zM358 103h1V113h-1zM359 103h1V114h-1zM360 103h1V113h-1zM361 103h1V112h-1zM362 103h1V113h-1zM363 104h1V113h-1zM364 104h1V114h-1zM365 104h1V114h-1zM366 103h1V113h-1zM367 102h1V113h-1zM368 104h1V114h-1zM369 103h1V113h-1zM370 103h1V113h-1zM371 103h1V114h-1zM372 103h1V114h-1zM373 103h1V113h-1zM374 102h1V114h-1zM375 103h1V114h-1zM376 103h1V113h-1zM377 103h1V114h-1zM378 104h1V112h-1zM379 103h1V113h-1zM380 104h1V113h-1zM381 104h1V113h-1zM382 103h1V113h-1zM383 103h1V112h-1zM384 103h1V114h-1zM385 103h1V112h-1zM386 103h1V113h-1zM387 103h1V113h-1zM388 103h1V113h-1zM389 103h1V113h-1zM390 104h1V113h-1zM391 103h1V113h-1zM392 103h1V113h-1zM393 104h1V114h-1zM394 102h1V113h-1zM395 101h1V113h-1zM396 103h1V113h-1zM397 102h1V113h-1zM398 104h1V113h-1zM399 102h1V113h-1zM400 103h1V112h-1zM401 102h1V113h-1zM402 102h1V113h-1zM403 103h1V113h-1zM404 102h1V114h-1zM405 104h1V113h-1zM406 103h1V113h-1zM407 103h1V114h-1zM408 103h1V113h-1zM409 103h1V114h-1zM410 103h1V114h-1zM411 103h1V112h-1zM412 103h1V112h-1zM413 103h1V113h-1zM414 103h1V112h-1zM415 103h1V113h-1zM416 103h1V112h-1zM417 104h1V113h-1zM418 104h1V114h-1zM419 102h1V113h-1zM420 104h1V113h-1zM421 103h1V113h-1zM422 104h1V113h-1zM423 104h1V113h-1zM424 103h1V113h-1zM425 103h1V113h-1zM426 104h1V113h-1zM427 104h1V114h-1zM428 103h1V112h-1zM429 103h1V114h-1zM430 103h1V113h-1zM431 103h1V113h-1zM432 101h1V113h-1zM433 103h1V113h-1zM434 103h1V114h-1zM435 103h1V113h-1zM436 104h1V112h-1zM437 103h1V113h-1zM438 103h1V113h-1zM439 103h1V114h-1zM440 104h1V112h-1zM441 103h1V113h-1zM442 103h1V113h-1zM443 102h1V113h-1zM444 104h1V113h-1zM445 103h1V113h-1zM446 104h1V114h-1zM447 103h1V114h-1zM448 103h1V113h-1zM449 102h1V114h-1zM450 103h1V113h-1zM451 102h1V113h-1zM452 102h1V113h-1zM453 103h1V112h-1zM454 104h1V113h-1zM455 103h1V112h-1zM456 103h1V113h-1zM457 103h1V114h-1zM458 103h1V112h-1zM459 103h1V113h-1zM460 103h1V114h-1zM461 104h1V113h-1zM462 103h1V113h-1zM463 103h1V114h-1zM464 103h1V113h-1zM465 103h1V113h-1zM466 102h1V113h-1zM467 104h1V114h-1zM468 104h1V113h-1zM469 103h1V114h-1zM470 104h1V114h-1zM471 103h1V112h-1zM472 102h1V113h-1zM473 103h1V112h-1zM474 104h1V114h-1zM475 102h1V114h-1zM476 103h1V114h-1zM477 103h1V112h-1zM478 103h1V113h-1zM479 103h1V114h-1zM480 102h1V112h-1zM481 103h1V114h-1zM482 103h1V113h-1zM483 102h1V112h-1zM484 104h1V113h-1zM485 104h1V113h-1zM486 103h1V113h-1zM487 103h1V113h-1zM488 103h1V113h-1zM489 103h1V113h-1zM490 103h1V112h-1zM491 102h1V112h-1zM492 104h1V113h-1zM493 103h1V113h-1zM494 103h1V114h-1zM495 103h1V114h-1zM496 104h1V112h-1zM497 103h1V114h-1zM498 104h1V113h-1zM499 104h1V114h-1zM500 103h1V113h-1zM501 104h1V114h-1zM502 103h1V112h-1zM503 103h1V112h-1zM504 103h1V114h-1zM505 103h1V114h-1zM506 103h1V113h-1zM507 103h1V112h-1zM508 102h1V112h-1zM509 103h1V113h-1zM510 104h1V114h-1zM511 103h1V113h-1zM512 103h1V113h-1zM513 102h1V113h-1zM514 103h1V112h-1zM515 102h1V113h-1zM516 103h1V113h-1zM517 103h1V113h-1zM518 103h1V113h-1zM519 103h1V113h-1zM520 104h1V113h-1zM521 102h1V113h-1zM522 104h1V113h-1zM523 103h1V113h-1zM524 104h1V113h-1zM525 103h1V113h-1zM526 103h1V113h-1zM527 103h1V113h-1zM528 103h1V113h-1zM529 104h1V112h-1zM530 103h1V113h-1zM531 103h1V112h-1zM532 101h1V112h-1zM533 104h1V113h-1zM534 103h1V112h-1zM535 103h1V113h-1zM536 103h1V112h-1zM537 103h1V113h-1zM538 102h1V113h-1zM539 104h1V113h-1zM540 102h1V113h-1zM541 103h1V113h-1zM542 103h1V114h-1zM543 101h1V113h-1zM544 103h1V113h-1zM545 103h1V114h-1zM546 103h1V112h-1zM547 103h1V114h-1zM548 104h1V113h-1zM549 103h1V113h-1zM550 103h1V113h-1zM551 103h1V113h-1zM552 103h1V114h-1zM553 103h1V113h-1zM554 103h1V114h-1zM555 103h1V114h-1zM556 103h1V113h-1zM557 104h1V113h-1zM558 103h1V113h-1zM559 102h1V114h-1zM560 103h1V112h-1zM561 103h1V114h-1zM562 103h1V113h-1zM563 104h1V113h-1zM564 103h1V113h-1zM565 103h1V113h-1zM566 102h1V113h-1zM567 103h1V113h-1zM568 103h1V113h-1zM569 103h1V113h-1zM570 103h1V113h-1zM571 103h1V113h-1zM572 103h1V112h-1zM573 104h1V114h-1zM574 103h1V113h-1zM575 103h1V114h-1zM576 103h1V113h-1zM577 103h1V112h-1zM578 103h1V114h-1zM579 103h1V112h-1zM580 102h1V112h-1zM581 103h1V112h-1zM582 102h1V113h-1zM583 102h1V113h-1zM584 104h1V112h-1zM585 103h1V113h-1zM586 103h1V113h-1zM587 103h1V113h-1zM588 103h1V112h-1zM589 103h1V112h-1zM590 103h1V114h-1zM591 104h1V114h-1zM592 103h1V112h-1zM593 103h1V114h-1zM594 104h1V114h-1zM595 103h1V114h-1zM596 104h1V112h-1zM597 102h1V113h-1zM598 103h1V113h-1zM599 103h1V113h-1zM600 102h1V113h-1zM601 104h1V114h-1zM602 103h1V113h-1zM603 103h1V114h-1zM604 103h1V114h-1zM605 102h1V112h-1zM606 103h1V113h-1zM607 103h1V113h-1zM608 103h1V113h-1zM609 103h1V113h-1zM610 104h1V113h-1zM611 103h1V113h-1zM612 103h1V113h-1zM613 104h1V114h-1zM614 103h1V114h-1zM615 103h1V114h-1zM616 103h1V113h-1zM617 104h1V113h-1zM618 104h1V114h-1zM619 104h1V113h-1zM620 102h1V112h-1zM621 103h1V113h-1zM622 104h1V112h-1zM623 103h1V113h-1zM624 103h1V113h-1zM625 102h1V113h-1zM626 103h1V112h-1zM627 103h1V114h-1zM628 103h1V114h-1zM629 103h1V113h-1zM630 104h1V112h-1zM631 102h1V113h-1zM632 103h1V113h-1zM633 102h1V113h-1zM634 104h1V112h-1zM635 102h1V112h-1zM636 102h1V112h-1zM637 104h1V113h-1zM638 103h1V112h-1zM639 103h1V113h-1zM640 104h1V113h-1zM641 103h1V113h-1zM642 102h1V112h-1zM643 103h1V113h-1zM644 103h1V113h-1zM645 102h1V113h-1zM646 103h1V114h-1zM647 102h1V112h-1zM648 103h1V114h-1zM649 103h1V113h-1zM650 103h1V113h-1zM651 103h1V113h-1zM652 103h1V113h-1zM653 102h1V112h-1zM654 103h1V113h-1zM655 103h1V113h-1zM656 104h1V112h-1zM657 103h1V112h-1zM658 103h1V113h-1zM659 104h1V113h-1zM660 103h1V112h-1zM661 102h1V112h-1zM662 102h1V113h-1zM663 103h1V112h-1zM664 103h1V113h-1zM665 103h1V113h-1zM666 104h1V113h-1zM667 103h1V114h-1zM668 104h1V113h-1zM669 103h1V115h-1zM670 103h1V114h-1zM671 103h1V112h-1zM672 103h1V113h-1zM673 102h1V114h-1zM674 102h1V113h-1zM675 103h1V112h-1zM676 103h1V113h-1zM677 102h1V113h-1zM678 102h1V113h-1zM679 103h1V113h-1zM680 103h1V114h-1zM681 104h1V113h-1zM682 104h1V113h-1zM683 103h1V113h-1zM684 102h1V113h-1zM685 104h1V113h-1zM686 103h1V113h-1zM687 103h1V113h-1zM688 104h1V114h-1zM689 103h1V113h-1zM690 103h1V113h-1zM691 103h1V114h-1zM692 103h1V113h-1zM693 103h1V113h-1zM694 103h1V113h-1zM695 103h1V113h-1zM696 103h1V113h-1zM697 103h1V113h-1zM698 103h1V112h-1zM699 103h1V112h-1zM700 102h1V113h-1zM701 104h1V112h-1zM702 103h1V113h-1zM703 102h1V113h-1zM704 102h1V114h-1zM705 103h1V112h-1zM706 103h1V114h-1zM707 102h1V113h-1zM708 104h1V113h-1zM709 103h1V113h-1zM710 103h1V114h-1zM711 103h1V113h-1zM712 102h1V112h-1zM713 103h1V113h-1zM714 103h1V112h-1zM715 103h1V112h-1zM716 102h1V113h-1zM717 103h1V114h-1zM718 103h1V114h-1zM719 103h1V112h-1zM720 103h1V113h-1zM721 103h1V113h-1zM722 103h1V113h-1zM723 103h1V113h-1zM724 103h1V112h-1zM725 103h1V114h-1zM726 103h1V113h-1zM727 102h1V113h-1zM728 103h1V113h-1zM729 102h1V112h-1zM730 103h1V113h-1zM731 102h1V114h-1zM732 103h1V114h-1zM733 104h1V114h-1zM734 102h1V113h-1zM735 103h1V113h-1zM736 103h1V111h-1zM737 103h1V112h-1zM738 104h1V113h-1zM739 103h1V113h-1zM740 103h1V112h-1zM741 103h1V112h-1zM742 103h1V113h-1zM743 105h1V112h-1zM744 103h1V113h-1zM745 103h1V113h-1zM746 103h1V114h-1zM747 104h1V113h-1zM748 103h1V114h-1zM749 102h1V114h-1zM750 102h1V112h-1zM751 103h1V112h-1zM752 103h1V113h-1zM753 103h1V114h-1zM754 102h1V114h-1zM755 102h1V113h-1zM756 103h1V112h-1zM757 102h1V111h-1zM758 103h1V113h-1zM759 103h1V112h-1zM760 103h1V112h-1zM761 104h1V114h-1zM762 103h1V114h-1zM763 103h1V114h-1zM764 103h1V113h-1zM765 103h1V112h-1zM766 102h1V113h-1zM767 103h1V113h-1zM768 104h1V113h-1zM769 103h1V113h-1zM770 102h1V113h-1zM771 103h1V113h-1zM772 103h1V112h-1zM773 104h1V113h-1zM774 103h1V113h-1zM775 103h1V113h-1zM776 103h1V111h-1zM777 104h1V113h-1zM778 103h1V114h-1z" fill="#f8f820" opacity="0.9"/><path d="M20 105h1V109h-1zM21 105h1V112h-1zM22 104h1V110h-1zM23 106h1V111h-1zM24 104h1V111h-1zM25 107h1V111h-1zM26 106h1V112h-1zM27 103h1V110h-1zM28 107h1V110h-1zM29 106h1V110h-1zM30 105h1V111h-1zM31 105h1V110h-1zM32 105h1V109h-1zM33 105h1V112h-1zM34 106h1V111h-1zM35 105h1V110h-1zM36 105h1V108h-1zM37 106h1V111h-1zM38 106h1V109h-1zM39 103h1V111h-1zM40 105h1V110h-1zM41 104h1V112h-1zM42 107h1V110h-1zM43 105h1V112h-1zM44 107h1V112h-1zM45 107h1V110h-1zM46 106h1V109h-1zM47 105h1V110h-1zM48 106h1V109h-1zM49 105h1V111h-1zM50 106h1V109h-1zM51 106h1V111h-1zM52 105h1V112h-1zM53 107h1V109h-1zM54 105h1V110h-1zM55 106h1V110h-1zM56 106h1V111h-1zM57 105h1V111h-1zM58 106h1V110h-1zM59 105h1V111h-1zM60 105h1V110h-1zM61 105h1V112h-1zM62 106h1V111h-1zM63 103h1V111h-1zM64 106h1V111h-1zM65 107h1V111h-1zM66 105h1V111h-1zM67 104h1V110h-1zM68 105h1V111h-1zM69 104h1V112h-1zM70 106h1V110h-1zM71 105h1V111h-1zM72 105h1V111h-1zM73 103h1V110h-1zM74 105h1V111h-1zM75 105h1V111h-1zM76 106h1V110h-1zM77 104h1V111h-1zM78 105h1V111h-1zM79 105h1V110h-1zM80 106h1V110h-1zM81 106h1V110h-1zM82 106h1V112h-1zM83 104h1V110h-1zM84 106h1V111h-1zM85 104h1V108h-1zM86 106h1V110h-1zM87 104h1V112h-1zM88 105h1V111h-1zM89 106h1V112h-1zM90 105h1V110h-1zM91 104h1V112h-1zM92 106h1V111h-1zM93 105h1V110h-1zM94 106h1V111h-1zM95 105h1V110h-1zM96 105h1V111h-1zM97 104h1V110h-1zM98 105h1V112h-1zM99 106h1V111h-1zM100 105h1V110h-1zM101 105h1V111h-1zM102 106h1V109h-1zM103 108h1V110h-1zM104 106h1V111h-1zM105 105h1V110h-1zM106 105h1V110h-1zM107 103h1V111h-1zM108 106h1V110h-1zM109 106h1V110h-1zM110 104h1V111h-1zM111 104h1V109h-1zM112 104h1V111h-1zM113 102h1V111h-1zM114 104h1V110h-1zM115 105h1V111h-1zM116 106h1V110h-1zM117 105h1V111h-1zM118 104h1V110h-1zM119 105h1V112h-1zM120 105h1V109h-1zM121 105h1V111h-1zM122 105h1V111h-1zM123 106h1V111h-1zM124 105h1V112h-1zM125 105h1V112h-1zM126 104h1V113h-1zM127 105h1V111h-1zM128 105h1V110h-1zM129 105h1V110h-1zM130 105h1V111h-1zM131 105h1V112h-1zM132 105h1V110h-1zM133 104h1V110h-1zM134 106h1V110h-1zM135 105h1V109h-1zM136 105h1V111h-1zM137 106h1V113h-1zM138 106h1V110h-1zM139 107h1V112h-1zM140 105h1V110h-1zM141 105h1V112h-1zM142 107h1V110h-1zM143 105h1V113h-1zM144 106h1V111h-1zM145 106h1V110h-1zM146 104h1V110h-1zM147 105h1V112h-1zM148 105h1V110h-1zM149 105h1V110h-1zM150 107h1V109h-1zM151 106h1V109h-1zM152 105h1V111h-1zM153 105h1V111h-1zM154 105h1V112h-1zM155 104h1V112h-1zM156 106h1V110h-1zM157 103h1V110h-1zM158 104h1V111h-1zM159 106h1V111h-1zM160 103h1V111h-1zM161 104h1V112h-1zM162 106h1V109h-1zM163 106h1V110h-1zM164 105h1V110h-1zM165 104h1V113h-1zM166 104h1V110h-1zM167 104h1V110h-1zM168 105h1V110h-1zM169 105h1V109h-1zM170 104h1V110h-1zM171 105h1V111h-1zM172 104h1V110h-1zM173 104h1V113h-1zM174 106h1V111h-1zM175 105h1V113h-1zM176 104h1V110h-1zM177 106h1V110h-1zM178 106h1V111h-1zM179 106h1V113h-1zM180 105h1V110h-1zM181 105h1V112h-1zM182 104h1V109h-1zM183 104h1V112h-1zM184 105h1V112h-1zM185 106h1V112h-1zM186 105h1V111h-1zM187 106h1V112h-1zM188 106h1V111h-1zM189 108h1V109h-1zM190 104h1V113h-1zM191 106h1V112h-1zM192 106h1V111h-1zM193 107h1V111h-1zM194 103h1V112h-1zM195 105h1V113h-1zM196 105h1V114h-1zM197 104h1V108h-1zM198 105h1V111h-1zM199 104h1V111h-1zM200 104h1V111h-1zM201 104h1V112h-1zM202 106h1V110h-1zM203 105h1V112h-1zM204 105h1V110h-1zM205 104h1V113h-1zM206 104h1V111h-1zM207 104h1V110h-1zM208 104h1V110h-1zM209 105h1V111h-1zM210 105h1V110h-1zM211 106h1V109h-1zM212 105h1V110h-1zM213 106h1V112h-1zM214 106h1V111h-1zM215 105h1V109h-1zM216 106h1V110h-1zM217 104h1V113h-1zM218 106h1V113h-1zM219 105h1V111h-1zM220 104h1V110h-1zM221 105h1V111h-1zM222 106h1V111h-1zM223 105h1V111h-1zM224 104h1V111h-1zM225 106h1V110h-1zM226 104h1V113h-1zM227 106h1V109h-1zM228 104h1V111h-1zM229 105h1V110h-1zM230 104h1V110h-1zM231 105h1V112h-1zM232 106h1V110h-1zM233 106h1V112h-1zM234 105h1V111h-1zM235 106h1V111h-1zM236 105h1V110h-1zM237 105h1V110h-1zM238 105h1V109h-1zM239 104h1V112h-1zM240 105h1V111h-1zM241 105h1V111h-1zM242 106h1V111h-1zM243 105h1V111h-1zM244 106h1V111h-1zM245 105h1V110h-1zM246 103h1V110h-1zM247 106h1V111h-1zM248 106h1V112h-1zM249 106h1V109h-1zM250 107h1V111h-1zM251 106h1V109h-1zM252 106h1V112h-1zM253 105h1V112h-1zM254 105h1V111h-1zM255 104h1V110h-1zM256 104h1V112h-1zM257 105h1V110h-1zM258 105h1V112h-1zM259 106h1V111h-1zM260 104h1V112h-1zM261 103h1V112h-1zM262 105h1V110h-1zM263 106h1V111h-1zM264 105h1V110h-1zM265 105h1V112h-1zM266 106h1V110h-1zM267 104h1V111h-1zM268 104h1V111h-1zM269 107h1V111h-1zM270 106h1V112h-1zM271 106h1V111h-1zM272 104h1V110h-1zM273 106h1V110h-1zM274 104h1V109h-1zM275 105h1V111h-1zM276 105h1V109h-1zM277 106h1V112h-1zM278 106h1V111h-1zM279 107h1V110h-1zM280 105h1V111h-1zM281 105h1V111h-1zM282 107h1V112h-1zM283 105h1V110h-1zM284 104h1V112h-1zM285 103h1V110h-1zM286 106h1V110h-1zM287 105h1V109h-1zM288 104h1V111h-1zM289 106h1V111h-1zM290 105h1V110h-1zM291 106h1V110h-1zM292 106h1V110h-1zM293 106h1V110h-1zM294 106h1V110h-1zM295 104h1V112h-1zM296 105h1V111h-1zM297 105h1V110h-1zM298 106h1V109h-1zM299 107h1V111h-1zM300 107h1V111h-1zM301 105h1V111h-1zM302 105h1V111h-1zM303 106h1V111h-1zM304 105h1V111h-1zM305 104h1V111h-1zM306 104h1V110h-1zM307 107h1V110h-1zM308 106h1V112h-1zM309 105h1V111h-1zM310 104h1V113h-1zM311 106h1V111h-1zM312 105h1V111h-1zM313 104h1V112h-1zM314 106h1V109h-1zM315 108h1V110h-1zM316 105h1V112h-1zM317 105h1V110h-1zM318 104h1V111h-1zM319 106h1V111h-1zM320 106h1V110h-1zM321 105h1V111h-1zM322 105h1V111h-1zM323 105h1V111h-1zM324 106h1V110h-1zM325 104h1V112h-1zM326 106h1V111h-1zM327 105h1V111h-1zM328 104h1V111h-1zM329 104h1V111h-1zM330 106h1V112h-1zM331 105h1V110h-1zM332 103h1V110h-1zM333 105h1V110h-1zM334 107h1V113h-1zM335 104h1V110h-1zM336 106h1V112h-1zM337 104h1V111h-1zM338 106h1V110h-1zM339 105h1V110h-1zM340 105h1V111h-1zM341 105h1V111h-1zM342 105h1V109h-1zM343 106h1V113h-1zM344 106h1V110h-1zM345 105h1V113h-1zM346 105h1V111h-1zM347 105h1V110h-1zM348 105h1V111h-1zM349 103h1V111h-1zM350 104h1V111h-1zM351 105h1V111h-1zM352 105h1V111h-1zM353 106h1V111h-1zM354 103h1V110h-1zM355 104h1V112h-1zM356 105h1V110h-1zM357 108h1V112h-1zM358 105h1V113h-1zM359 106h1V109h-1zM360 107h1V113h-1zM361 105h1V111h-1zM362 105h1V110h-1zM363 105h1V111h-1zM364 103h1V110h-1zM365 106h1V112h-1zM366 105h1V111h-1zM367 105h1V113h-1zM368 104h1V111h-1zM369 105h1V110h-1zM370 105h1V112h-1zM371 103h1V112h-1zM372 106h1V110h-1zM373 105h1V111h-1zM374 105h1V111h-1zM375 107h1V111h-1zM376 104h1V111h-1zM377 105h1V110h-1zM378 106h1V110h-1zM379 106h1V112h-1zM380 106h1V111h-1zM381 105h1V111h-1zM382 105h1V110h-1zM383 105h1V111h-1zM384 103h1V112h-1zM385 105h1V112h-1zM386 105h1V110h-1zM387 106h1V111h-1zM388 106h1V111h-1zM389 106h1V110h-1zM390 104h1V111h-1zM391 104h1V112h-1zM392 105h1V112h-1zM393 105h1V111h-1zM394 103h1V110h-1zM395 106h1V110h-1zM396 105h1V111h-1zM397 105h1V111h-1zM398 107h1V110h-1zM399 106h1V111h-1zM400 105h1V110h-1zM401 106h1V111h-1zM402 106h1V110h-1zM403 104h1V111h-1zM404 105h1V112h-1zM405 106h1V111h-1zM406 107h1V110h-1zM407 104h1V109h-1zM408 106h1V110h-1zM409 106h1V111h-1zM410 105h1V111h-1zM411 104h1V110h-1zM412 103h1V110h-1zM413 107h1V112h-1zM414 105h1V110h-1zM415 103h1V110h-1zM416 104h1V111h-1zM417 105h1V110h-1zM418 104h1V112h-1zM419 106h1V111h-1zM420 105h1V110h-1zM421 105h1V112h-1zM422 106h1V111h-1zM423 105h1V111h-1zM424 104h1V111h-1zM425 105h1V111h-1zM426 106h1V110h-1zM427 106h1V110h-1zM428 105h1V110h-1zM429 104h1V110h-1zM430 105h1V110h-1zM431 107h1V111h-1zM432 107h1V112h-1zM433 106h1V109h-1zM434 105h1V110h-1zM435 106h1V111h-1zM436 106h1V111h-1zM437 105h1V110h-1zM438 107h1V110h-1zM439 105h1V111h-1zM440 106h1V110h-1zM441 105h1V111h-1zM442 107h1V111h-1zM443 108h1V110h-1zM444 105h1V109h-1zM445 104h1V111h-1zM446 105h1V110h-1zM447 106h1V111h-1zM448 106h1V109h-1zM449 105h1V111h-1zM450 103h1V110h-1zM451 104h1V113h-1zM452 106h1V110h-1zM453 106h1V112h-1zM454 104h1V110h-1zM455 107h1V108h-1zM456 107h1V111h-1zM457 107h1V110h-1zM458 107h1V111h-1zM459 105h1V111h-1zM460 105h1V110h-1zM461 106h1V110h-1zM462 106h1V109h-1zM463 106h1V109h-1zM464 104h1V110h-1zM465 105h1V111h-1zM466 105h1V111h-1zM467 105h1V110h-1zM468 106h1V109h-1zM469 104h1V111h-1zM470 105h1V110h-1zM471 106h1V111h-1zM472 107h1V110h-1zM473 106h1V112h-1zM474 106h1V109h-1zM475 106h1V110h-1zM476 106h1V110h-1zM477 105h1V111h-1zM478 106h1V110h-1zM479 105h1V110h-1zM480 105h1V110h-1zM481 105h1V110h-1zM482 106h1V110h-1zM483 105h1V110h-1zM484 103h1V111h-1zM485 104h1V111h-1zM486 104h1V112h-1zM487 105h1V111h-1zM488 104h1V111h-1zM489 104h1V111h-1zM490 106h1V111h-1zM491 105h1V111h-1zM492 106h1V110h-1zM493 104h1V111h-1zM494 104h1V113h-1zM495 106h1V110h-1zM496 103h1V111h-1zM497 105h1V111h-1zM498 106h1V111h-1zM499 106h1V112h-1zM500 105h1V110h-1zM501 105h1V110h-1zM502 105h1V112h-1zM503 104h1V110h-1zM504 106h1V112h-1zM505 105h1V112h-1zM506 105h1V110h-1zM507 106h1V111h-1zM508 105h1V110h-1zM509 105h1V110h-1zM510 106h1V110h-1zM511 106h1V109h-1zM512 106h1V112h-1zM513 105h1V111h-1zM514 105h1V112h-1zM515 105h1V111h-1zM516 105h1V110h-1zM517 104h1V111h-1zM518 105h1V110h-1zM519 105h1V110h-1zM520 105h1V110h-1zM521 105h1V110h-1zM522 104h1V110h-1zM523 104h1V112h-1zM524 104h1V110h-1zM525 107h1V110h-1zM526 105h1V109h-1zM527 106h1V110h-1zM528 107h1V111h-1zM529 107h1V110h-1zM530 104h1V111h-1zM531 106h1V112h-1zM532 104h1V110h-1zM533 108h1V110h-1zM534 105h1V111h-1zM535 106h1V112h-1zM536 106h1V113h-1zM537 104h1V110h-1zM538 106h1V111h-1zM539 106h1V111h-1zM540 106h1V111h-1zM541 107h1V111h-1zM542 107h1V111h-1zM543 107h1V112h-1zM544 106h1V110h-1zM545 105h1V112h-1zM546 105h1V110h-1zM547 106h1V112h-1zM548 104h1V111h-1zM549 104h1V110h-1zM550 103h1V112h-1zM551 105h1V111h-1zM552 104h1V110h-1zM553 105h1V111h-1zM554 104h1V110h-1zM555 105h1V112h-1zM556 103h1V111h-1zM557 104h1V111h-1zM558 107h1V111h-1zM559 106h1V112h-1zM560 106h1V110h-1zM561 106h1V112h-1zM562 106h1V112h-1zM563 105h1V111h-1zM564 104h1V109h-1zM565 105h1V110h-1zM566 106h1V111h-1zM567 107h1V111h-1zM568 104h1V111h-1zM569 106h1V110h-1zM570 104h1V111h-1zM571 106h1V111h-1zM572 105h1V110h-1zM573 105h1V112h-1zM574 105h1V111h-1zM575 104h1V108h-1zM576 105h1V110h-1zM577 104h1V111h-1zM578 104h1V110h-1zM579 105h1V110h-1zM580 105h1V111h-1zM581 106h1V111h-1zM582 106h1V110h-1zM583 104h1V110h-1zM584 106h1V109h-1zM585 104h1V111h-1zM586 104h1V110h-1zM587 106h1V110h-1zM588 108h1V111h-1zM589 107h1V110h-1zM590 104h1V111h-1zM591 106h1V110h-1zM592 106h1V112h-1zM593 104h1V111h-1zM594 106h1V110h-1zM595 105h1V108h-1zM596 107h1V110h-1zM597 107h1V111h-1zM598 105h1V112h-1zM599 107h1V112h-1zM600 106h1V110h-1zM601 106h1V110h-1zM602 103h1V111h-1zM603 105h1V111h-1zM604 105h1V110h-1zM605 104h1V110h-1zM606 106h1V110h-1zM607 105h1V112h-1zM608 105h1V111h-1zM609 106h1V111h-1zM610 106h1V112h-1zM611 104h1V110h-1zM612 106h1V111h-1zM613 105h1V110h-1zM614 107h1V112h-1zM615 107h1V113h-1zM616 104h1V112h-1zM617 105h1V111h-1zM618 105h1V111h-1zM619 104h1V110h-1zM620 105h1V110h-1zM621 105h1V110h-1zM622 105h1V111h-1zM623 106h1V111h-1zM624 105h1V109h-1zM625 104h1V111h-1zM626 104h1V109h-1zM627 106h1V112h-1zM628 104h1V111h-1zM629 104h1V114h-1zM630 103h1V113h-1zM631 102h1V111h-1zM632 104h1V111h-1zM633 104h1V112h-1zM634 105h1V111h-1zM635 106h1V109h-1zM636 104h1V110h-1zM637 106h1V111h-1zM638 106h1V111h-1zM639 106h1V111h-1zM640 105h1V110h-1zM641 104h1V113h-1zM642 105h1V110h-1zM643 106h1V111h-1zM644 105h1V109h-1zM645 106h1V110h-1zM646 104h1V110h-1zM647 107h1V111h-1zM648 106h1V110h-1zM649 105h1V112h-1zM650 106h1V110h-1zM651 106h1V110h-1zM652 105h1V110h-1zM653 105h1V109h-1zM654 106h1V110h-1zM655 104h1V112h-1zM656 105h1V109h-1zM657 106h1V110h-1zM658 106h1V111h-1zM659 107h1V108h-1zM660 105h1V110h-1zM661 106h1V110h-1zM662 105h1V111h-1zM663 105h1V112h-1zM664 105h1V110h-1zM665 107h1V110h-1zM666 107h1V111h-1zM667 105h1V112h-1zM668 106h1V110h-1zM669 106h1V112h-1zM670 105h1V111h-1zM671 104h1V110h-1zM672 106h1V113h-1zM673 105h1V110h-1zM674 108h1V110h-1zM675 105h1V109h-1zM676 105h1V110h-1zM677 105h1V112h-1zM678 105h1V109h-1zM679 107h1V112h-1zM680 105h1V111h-1zM681 106h1V110h-1zM682 106h1V110h-1zM683 105h1V111h-1zM684 107h1V110h-1zM685 106h1V110h-1zM686 105h1V112h-1zM687 105h1V110h-1zM688 105h1V110h-1zM689 107h1V109h-1zM690 104h1V112h-1zM691 107h1V111h-1zM692 105h1V109h-1zM693 104h1V111h-1zM694 105h1V111h-1zM695 105h1V111h-1zM696 104h1V113h-1zM697 104h1V111h-1zM698 107h1V110h-1zM699 105h1V113h-1zM700 105h1V110h-1zM701 103h1V112h-1zM702 106h1V111h-1zM703 103h1V111h-1zM704 107h1V113h-1zM705 106h1V111h-1zM706 103h1V111h-1zM707 105h1V111h-1zM708 104h1V110h-1zM709 104h1V111h-1zM710 104h1V111h-1zM711 104h1V111h-1zM712 107h1V112h-1zM713 106h1V108h-1zM714 106h1V111h-1zM715 105h1V110h-1zM716 105h1V111h-1zM717 105h1V111h-1zM718 107h1V110h-1zM719 105h1V110h-1zM720 106h1V111h-1zM721 106h1V111h-1zM722 105h1V111h-1zM723 106h1V110h-1zM724 105h1V111h-1zM725 106h1V110h-1zM726 106h1V109h-1zM727 105h1V110h-1zM728 105h1V110h-1zM729 107h1V112h-1zM730 107h1V110h-1zM731 106h1V110h-1zM732 104h1V111h-1zM733 106h1V110h-1zM734 105h1V110h-1zM735 106h1V110h-1zM736 105h1V112h-1zM737 108h1V112h-1zM738 105h1V111h-1zM739 107h1V111h-1zM740 105h1V110h-1zM741 106h1V111h-1zM742 105h1V110h-1zM743 104h1V112h-1zM744 106h1V111h-1zM745 107h1V111h-1zM746 104h1V110h-1zM747 107h1V112h-1zM748 106h1V110h-1zM749 105h1V110h-1zM750 106h1V111h-1zM751 106h1V110h-1zM752 106h1V110h-1zM753 106h1V111h-1zM754 103h1V111h-1zM755 106h1V112h-1zM756 106h1V111h-1zM757 104h1V112h-1zM758 104h1V108h-1zM759 105h1V111h-1zM760 105h1V112h-1zM761 104h1V112h-1zM762 104h1V111h-1zM763 104h1V110h-1zM764 106h1V109h-1zM765 106h1V110h-1zM766 104h1V112h-1zM767 105h1V110h-1zM768 104h1V110h-1zM769 103h1V109h-1zM770 105h1V110h-1zM771 106h1V111h-1zM772 105h1V110h-1zM773 105h1V111h-1zM774 106h1V112h-1zM775 103h1V111h-1zM776 104h1V111h-1zM777 105h1V112h-1zM778 106h1V110h-1z" fill="#ffff80" opacity="0.65"/><path d="M20 251h1V268h-1zM21 251h1V266h-1zM22 247h1V268h-1zM23 252h1V269h-1zM24 249h1V268h-1zM25 248h1V271h-1zM26 252h1V268h-1zM27 252h1V273h-1zM28 251h1V271h-1zM29 248h1V270h-1zM30 249h1V270h-1zM31 252h1V272h-1zM32 250h1V270h-1zM33 248h1V266h-1zM34 250h1V272h-1zM35 249h1V272h-1zM36 246h1V266h-1zM37 248h1V266h-1zM38 250h1V272h-1zM39 252h1V268h-1zM40 251h1V271h-1zM41 250h1V271h-1zM42 246h1V271h-1zM43 247h1V268h-1zM44 251h1V271h-1zM45 246h1V269h-1zM46 250h1V267h-1zM47 248h1V268h-1zM48 252h1V272h-1zM49 252h1V267h-1zM50 252h1V272h-1zM51 247h1V270h-1zM52 248h1V267h-1zM53 247h1V266h-1zM54 249h1V271h-1zM55 250h1V266h-1zM56 250h1V272h-1zM57 249h1V267h-1zM58 247h1V273h-1zM59 250h1V266h-1zM60 246h1V266h-1zM61 249h1V271h-1zM62 247h1V266h-1zM63 250h1V266h-1zM64 248h1V268h-1zM65 251h1V271h-1zM66 249h1V266h-1zM67 252h1V271h-1zM68 252h1V266h-1zM69 252h1V266h-1zM70 248h1V272h-1zM71 250h1V268h-1zM72 246h1V269h-1zM73 247h1V266h-1zM74 250h1V267h-1zM75 246h1V267h-1zM76 249h1V271h-1zM77 248h1V268h-1zM78 250h1V268h-1zM79 252h1V268h-1zM80 252h1V267h-1zM81 252h1V268h-1zM82 249h1V272h-1zM83 252h1V271h-1zM84 252h1V273h-1zM85 247h1V266h-1zM86 252h1V270h-1zM87 250h1V267h-1zM88 250h1V271h-1zM89 246h1V271h-1zM90 248h1V269h-1zM91 246h1V267h-1zM92 248h1V269h-1zM93 249h1V272h-1zM94 249h1V270h-1zM95 250h1V267h-1zM96 246h1V270h-1zM97 251h1V267h-1zM98 248h1V267h-1zM99 249h1V270h-1zM100 252h1V271h-1zM101 251h1V270h-1zM102 246h1V267h-1zM103 247h1V266h-1zM104 252h1V271h-1zM105 251h1V267h-1zM106 252h1V270h-1zM107 247h1V274h-1zM108 252h1V266h-1zM109 252h1V272h-1zM110 246h1V272h-1zM111 250h1V266h-1zM112 251h1V267h-1zM113 252h1V272h-1zM114 249h1V267h-1zM115 251h1V268h-1zM116 249h1V266h-1zM117 252h1V271h-1zM118 252h1V268h-1zM119 252h1V272h-1zM120 250h1V272h-1zM121 251h1V269h-1zM122 249h1V267h-1zM123 251h1V266h-1zM124 246h1V271h-1zM125 246h1V272h-1zM126 252h1V266h-1zM127 252h1V271h-1zM128 249h1V267h-1zM129 248h1V268h-1zM130 252h1V267h-1zM131 252h1V269h-1zM132 250h1V267h-1zM133 248h1V272h-1zM134 246h1V266h-1zM135 247h1V269h-1zM136 247h1V270h-1zM137 252h1V272h-1zM138 246h1V269h-1zM139 249h1V268h-1zM140 252h1V266h-1zM141 251h1V267h-1zM142 249h1V271h-1zM143 250h1V266h-1zM144 250h1V271h-1zM145 247h1V274h-1zM146 247h1V268h-1zM147 249h1V271h-1zM148 247h1V267h-1zM149 250h1V266h-1zM150 246h1V270h-1zM151 249h1V270h-1zM152 246h1V267h-1zM153 252h1V270h-1zM154 247h1V266h-1zM155 249h1V266h-1zM156 248h1V271h-1zM157 252h1V268h-1zM158 249h1V270h-1zM159 251h1V269h-1zM160 252h1V268h-1zM161 252h1V272h-1zM162 246h1V274h-1zM163 248h1V268h-1zM164 252h1V267h-1zM165 251h1V271h-1zM166 250h1V271h-1zM167 247h1V267h-1zM168 252h1V268h-1zM169 246h1V266h-1zM170 246h1V267h-1zM171 251h1V271h-1zM172 249h1V272h-1zM173 249h1V272h-1zM174 248h1V267h-1zM175 252h1V269h-1zM176 250h1V269h-1zM177 249h1V271h-1zM178 249h1V268h-1zM179 248h1V272h-1zM180 246h1V267h-1zM181 251h1V268h-1zM182 252h1V266h-1zM183 250h1V266h-1zM184 249h1V270h-1zM185 246h1V271h-1zM186 248h1V268h-1zM187 248h1V271h-1zM188 246h1V269h-1zM189 251h1V271h-1zM190 251h1V268h-1zM191 250h1V267h-1zM192 251h1V270h-1zM193 248h1V266h-1zM194 246h1V270h-1zM195 252h1V271h-1zM196 250h1V267h-1zM197 248h1V270h-1zM198 250h1V268h-1zM199 246h1V271h-1zM200 248h1V266h-1zM201 247h1V266h-1zM202 252h1V267h-1zM203 252h1V271h-1zM204 252h1V267h-1zM205 247h1V267h-1zM206 246h1V268h-1zM207 252h1V271h-1zM208 247h1V270h-1zM209 248h1V266h-1zM210 246h1V268h-1zM211 251h1V272h-1zM212 248h1V268h-1zM213 251h1V266h-1zM214 252h1V266h-1zM215 248h1V268h-1zM216 252h1V269h-1zM217 248h1V272h-1zM218 248h1V271h-1zM219 250h1V272h-1zM220 246h1V266h-1zM221 251h1V267h-1zM222 250h1V267h-1zM223 251h1V270h-1zM224 252h1V268h-1zM225 250h1V271h-1zM226 252h1V269h-1zM227 247h1V272h-1zM228 249h1V269h-1zM229 251h1V268h-1zM230 246h1V268h-1zM231 251h1V271h-1zM232 248h1V268h-1zM233 248h1V268h-1zM234 251h1V266h-1zM235 252h1V271h-1zM236 246h1V268h-1zM237 246h1V266h-1zM238 252h1V268h-1zM239 252h1V270h-1zM240 250h1V274h-1zM241 249h1V274h-1zM242 246h1V266h-1zM243 246h1V269h-1zM244 243h1V267h-1zM245 250h1V267h-1zM246 249h1V269h-1zM247 248h1V270h-1zM248 251h1V266h-1zM249 252h1V266h-1zM250 252h1V271h-1zM251 251h1V267h-1zM252 252h1V266h-1zM253 252h1V269h-1zM254 252h1V268h-1zM255 249h1V267h-1zM256 250h1V272h-1zM257 251h1V271h-1zM258 249h1V268h-1zM259 250h1V271h-1zM260 248h1V272h-1zM261 246h1V267h-1zM262 251h1V266h-1zM263 249h1V267h-1zM264 252h1V269h-1zM265 246h1V272h-1zM266 249h1V270h-1zM267 252h1V270h-1zM268 251h1V268h-1zM269 252h1V270h-1zM270 252h1V267h-1zM271 251h1V266h-1zM272 247h1V266h-1zM273 250h1V268h-1zM274 249h1V267h-1zM275 250h1V272h-1zM276 251h1V270h-1zM277 248h1V271h-1zM278 252h1V267h-1zM279 251h1V272h-1zM280 251h1V266h-1zM281 252h1V270h-1zM282 248h1V266h-1zM283 252h1V266h-1zM284 251h1V266h-1zM285 252h1V268h-1zM286 248h1V269h-1zM287 251h1V272h-1zM288 248h1V267h-1zM289 250h1V267h-1zM290 252h1V267h-1zM291 251h1V270h-1zM292 247h1V267h-1zM293 247h1V270h-1zM294 251h1V269h-1zM295 247h1V268h-1zM296 252h1V267h-1zM297 249h1V271h-1zM298 251h1V276h-1zM299 250h1V267h-1zM300 252h1V269h-1zM301 246h1V272h-1zM302 251h1V267h-1zM303 246h1V266h-1zM304 252h1V271h-1zM305 250h1V268h-1zM306 250h1V270h-1zM307 248h1V272h-1zM308 251h1V267h-1zM309 250h1V269h-1zM310 252h1V268h-1zM311 251h1V272h-1zM312 248h1V268h-1zM313 250h1V268h-1zM314 250h1V270h-1zM315 251h1V267h-1zM316 252h1V271h-1zM317 252h1V267h-1zM318 247h1V270h-1zM319 248h1V271h-1zM320 251h1V266h-1zM321 250h1V268h-1zM322 248h1V268h-1zM323 248h1V271h-1zM324 246h1V268h-1zM325 246h1V270h-1zM326 250h1V267h-1zM327 248h1V268h-1zM328 249h1V270h-1zM329 251h1V266h-1zM330 250h1V266h-1zM331 248h1V266h-1zM332 247h1V266h-1zM333 249h1V267h-1zM334 250h1V267h-1zM335 246h1V271h-1zM336 247h1V266h-1zM337 252h1V267h-1zM338 247h1V267h-1zM339 246h1V269h-1zM340 247h1V269h-1zM341 251h1V271h-1zM342 251h1V271h-1zM343 250h1V267h-1zM344 252h1V270h-1zM345 247h1V267h-1zM346 247h1V268h-1zM347 248h1V270h-1zM348 248h1V268h-1zM349 247h1V271h-1zM350 248h1V266h-1zM351 252h1V272h-1zM352 247h1V268h-1zM353 251h1V269h-1zM354 246h1V266h-1zM355 251h1V271h-1zM356 252h1V266h-1zM357 248h1V271h-1zM358 252h1V267h-1zM359 247h1V274h-1zM360 250h1V271h-1zM361 247h1V267h-1zM362 252h1V266h-1zM363 249h1V266h-1zM364 248h1V266h-1zM365 252h1V272h-1zM366 249h1V266h-1zM367 252h1V271h-1zM368 251h1V266h-1zM369 251h1V268h-1zM370 249h1V266h-1zM371 252h1V267h-1zM372 252h1V267h-1zM373 247h1V268h-1zM374 248h1V270h-1zM375 250h1V272h-1zM376 251h1V272h-1zM377 248h1V267h-1zM378 250h1V270h-1zM379 251h1V270h-1zM380 247h1V272h-1zM381 252h1V267h-1zM382 247h1V270h-1zM383 249h1V268h-1zM384 249h1V272h-1zM385 248h1V268h-1zM386 248h1V270h-1zM387 247h1V266h-1zM388 246h1V272h-1zM389 251h1V270h-1zM390 252h1V266h-1zM391 246h1V270h-1zM392 252h1V266h-1zM393 252h1V270h-1zM394 247h1V272h-1zM395 246h1V268h-1zM396 247h1V269h-1zM397 250h1V271h-1zM398 251h1V266h-1zM399 246h1V266h-1zM400 246h1V266h-1zM401 249h1V272h-1zM402 252h1V271h-1zM403 252h1V271h-1zM404 252h1V269h-1zM405 246h1V270h-1zM406 251h1V269h-1zM407 252h1V271h-1zM408 249h1V271h-1zM409 252h1V266h-1zM410 249h1V268h-1zM411 246h1V269h-1zM412 247h1V271h-1zM413 251h1V268h-1zM414 246h1V272h-1zM415 250h1V271h-1zM416 249h1V266h-1zM417 251h1V270h-1zM418 246h1V272h-1zM419 251h1V272h-1zM420 248h1V271h-1zM421 249h1V266h-1zM422 248h1V272h-1zM423 252h1V268h-1zM424 249h1V266h-1zM425 246h1V266h-1zM426 249h1V272h-1zM427 252h1V269h-1zM428 252h1V269h-1zM429 251h1V267h-1zM430 248h1V269h-1zM431 252h1V270h-1zM432 252h1V268h-1zM433 248h1V266h-1zM434 244h1V266h-1zM435 250h1V269h-1zM436 249h1V266h-1zM437 251h1V266h-1zM438 251h1V271h-1zM439 250h1V266h-1zM440 252h1V268h-1zM441 250h1V270h-1zM442 252h1V266h-1zM443 246h1V266h-1zM444 249h1V267h-1zM445 252h1V267h-1zM446 252h1V266h-1zM447 247h1V271h-1zM448 248h1V272h-1zM449 251h1V272h-1zM450 252h1V270h-1zM451 248h1V267h-1zM452 249h1V271h-1zM453 247h1V266h-1zM454 252h1V269h-1zM455 248h1V270h-1zM456 247h1V271h-1zM457 247h1V272h-1zM458 248h1V269h-1zM459 250h1V269h-1zM460 252h1V271h-1zM461 249h1V272h-1zM462 252h1V266h-1zM463 252h1V271h-1zM464 250h1V272h-1zM465 252h1V268h-1zM466 250h1V271h-1zM467 244h1V271h-1zM468 252h1V266h-1zM469 247h1V272h-1zM470 246h1V268h-1zM471 252h1V266h-1zM472 250h1V267h-1zM473 248h1V272h-1zM474 248h1V267h-1zM475 251h1V272h-1zM476 247h1V269h-1zM477 251h1V267h-1zM478 252h1V271h-1zM479 250h1V267h-1zM480 249h1V270h-1zM481 247h1V266h-1zM482 248h1V266h-1zM483 252h1V269h-1zM484 249h1V267h-1zM485 251h1V266h-1zM486 248h1V269h-1zM487 252h1V270h-1zM488 248h1V270h-1zM489 247h1V271h-1zM490 252h1V266h-1zM491 252h1V271h-1zM492 246h1V268h-1zM493 246h1V270h-1zM494 252h1V267h-1zM495 246h1V268h-1zM496 250h1V272h-1zM497 250h1V271h-1zM498 250h1V269h-1zM499 251h1V271h-1zM500 244h1V267h-1zM501 249h1V271h-1zM502 246h1V270h-1zM503 249h1V271h-1zM504 246h1V272h-1zM505 250h1V270h-1zM506 250h1V270h-1zM507 249h1V271h-1zM508 252h1V269h-1zM509 248h1V271h-1zM510 252h1V268h-1zM511 246h1V267h-1zM512 252h1V267h-1zM513 248h1V272h-1zM514 248h1V267h-1zM515 249h1V266h-1zM516 250h1V268h-1zM517 247h1V269h-1zM518 251h1V270h-1zM519 251h1V266h-1zM520 248h1V271h-1zM521 246h1V271h-1zM522 252h1V268h-1zM523 249h1V267h-1zM524 248h1V272h-1zM525 251h1V267h-1zM526 246h1V266h-1zM527 249h1V268h-1zM528 252h1V269h-1zM529 252h1V270h-1zM530 252h1V270h-1zM531 250h1V273h-1zM532 246h1V268h-1zM533 252h1V270h-1zM534 252h1V270h-1zM535 252h1V271h-1zM536 249h1V270h-1zM537 250h1V267h-1zM538 250h1V270h-1zM539 252h1V271h-1zM540 247h1V272h-1zM541 250h1V271h-1zM542 247h1V266h-1zM543 252h1V272h-1zM544 250h1V268h-1zM545 251h1V269h-1zM546 247h1V266h-1zM547 248h1V267h-1zM548 250h1V266h-1zM549 252h1V267h-1zM550 248h1V267h-1zM551 246h1V266h-1zM552 247h1V267h-1zM553 246h1V271h-1zM554 249h1V268h-1zM555 251h1V267h-1zM556 252h1V268h-1zM557 247h1V267h-1zM558 247h1V272h-1zM559 249h1V272h-1zM560 247h1V271h-1zM561 250h1V271h-1zM562 247h1V271h-1zM563 248h1V268h-1zM564 251h1V272h-1zM565 249h1V271h-1zM566 248h1V266h-1zM567 252h1V272h-1zM568 246h1V270h-1zM569 247h1V266h-1zM570 252h1V271h-1zM571 252h1V266h-1zM572 252h1V269h-1zM573 246h1V268h-1zM574 252h1V269h-1zM575 247h1V272h-1zM576 250h1V269h-1zM577 252h1V270h-1zM578 252h1V266h-1zM579 251h1V272h-1zM580 248h1V268h-1zM581 251h1V266h-1zM582 252h1V266h-1zM583 246h1V272h-1zM584 250h1V268h-1zM585 252h1V272h-1zM586 246h1V271h-1zM587 245h1V267h-1zM588 250h1V272h-1zM589 252h1V266h-1zM590 248h1V270h-1zM591 249h1V267h-1zM592 246h1V270h-1zM593 248h1V266h-1zM594 248h1V270h-1zM595 248h1V269h-1zM596 247h1V271h-1zM597 250h1V269h-1zM598 245h1V271h-1zM599 252h1V267h-1zM600 248h1V271h-1zM601 248h1V272h-1zM602 252h1V266h-1zM603 252h1V270h-1zM604 246h1V267h-1zM605 246h1V272h-1zM606 252h1V272h-1zM607 249h1V270h-1zM608 252h1V267h-1zM609 250h1V271h-1zM610 246h1V270h-1zM611 248h1V266h-1zM612 248h1V267h-1zM613 251h1V266h-1zM614 247h1V268h-1zM615 248h1V267h-1zM616 251h1V267h-1zM617 250h1V271h-1zM618 251h1V274h-1zM619 249h1V271h-1zM620 252h1V267h-1zM621 250h1V266h-1zM622 247h1V269h-1zM623 248h1V271h-1zM624 249h1V268h-1zM625 252h1V271h-1zM626 247h1V267h-1zM627 247h1V272h-1zM628 246h1V269h-1zM629 246h1V270h-1zM630 246h1V267h-1zM631 249h1V266h-1zM632 248h1V273h-1zM633 252h1V267h-1zM634 252h1V268h-1zM635 247h1V271h-1zM636 248h1V268h-1zM637 246h1V271h-1zM638 251h1V267h-1zM639 250h1V268h-1zM640 247h1V267h-1zM641 249h1V266h-1zM642 247h1V269h-1zM643 250h1V268h-1zM644 247h1V269h-1zM645 247h1V269h-1zM646 245h1V267h-1zM647 250h1V267h-1zM648 246h1V269h-1zM649 251h1V268h-1zM650 249h1V267h-1zM651 246h1V268h-1zM652 249h1V266h-1zM653 249h1V266h-1zM654 251h1V266h-1zM655 250h1V266h-1zM656 250h1V270h-1zM657 248h1V270h-1zM658 249h1V271h-1zM659 251h1V268h-1zM660 252h1V270h-1zM661 246h1V269h-1zM662 249h1V266h-1zM663 252h1V267h-1zM664 251h1V272h-1zM665 249h1V266h-1zM666 251h1V266h-1zM667 246h1V269h-1zM668 249h1V268h-1zM669 248h1V269h-1zM670 248h1V268h-1zM671 252h1V274h-1zM672 246h1V268h-1zM673 247h1V268h-1zM674 252h1V270h-1zM675 249h1V272h-1zM676 249h1V266h-1zM677 251h1V268h-1zM678 251h1V268h-1zM679 251h1V266h-1zM680 249h1V272h-1zM681 250h1V270h-1zM682 252h1V267h-1zM683 251h1V267h-1zM684 252h1V267h-1zM685 249h1V268h-1zM686 249h1V267h-1zM687 250h1V272h-1zM688 249h1V272h-1zM689 249h1V269h-1zM690 252h1V274h-1zM691 252h1V270h-1zM692 246h1V266h-1zM693 252h1V266h-1zM694 251h1V269h-1zM695 248h1V268h-1zM696 244h1V266h-1zM697 252h1V267h-1zM698 250h1V266h-1zM699 247h1V269h-1zM700 252h1V266h-1zM701 251h1V272h-1zM702 249h1V272h-1zM703 247h1V266h-1zM704 252h1V270h-1zM705 250h1V275h-1zM706 249h1V267h-1zM707 249h1V272h-1zM708 249h1V266h-1zM709 243h1V266h-1zM710 246h1V266h-1zM711 252h1V267h-1zM712 251h1V269h-1zM713 250h1V271h-1zM714 252h1V266h-1zM715 252h1V266h-1zM716 249h1V266h-1zM717 246h1V272h-1zM718 251h1V272h-1zM719 252h1V270h-1zM720 249h1V266h-1zM721 251h1V266h-1zM722 252h1V268h-1zM723 252h1V269h-1zM724 247h1V270h-1zM725 252h1V270h-1zM726 249h1V266h-1zM727 250h1V271h-1zM728 246h1V271h-1zM729 250h1V267h-1zM730 251h1V267h-1zM731 252h1V266h-1zM732 251h1V267h-1zM733 251h1V266h-1zM734 251h1V268h-1zM735 251h1V269h-1zM736 249h1V272h-1zM737 249h1V268h-1zM738 252h1V267h-1zM739 250h1V273h-1zM740 246h1V266h-1zM741 246h1V267h-1zM742 250h1V270h-1zM743 252h1V270h-1zM744 251h1V269h-1zM745 252h1V267h-1zM746 251h1V266h-1zM747 246h1V266h-1zM748 247h1V270h-1zM749 250h1V270h-1zM750 249h1V269h-1zM751 248h1V269h-1zM752 248h1V272h-1zM753 248h1V272h-1zM754 248h1V268h-1zM755 249h1V267h-1zM756 252h1V266h-1zM757 248h1V270h-1zM758 248h1V272h-1zM759 252h1V268h-1zM760 252h1V266h-1zM761 249h1V266h-1zM762 249h1V270h-1zM763 247h1V268h-1zM764 251h1V270h-1zM765 248h1V272h-1zM766 249h1V267h-1zM767 252h1V272h-1zM768 251h1V267h-1zM769 251h1V267h-1zM770 251h1V272h-1zM771 250h1V270h-1zM772 251h1V270h-1zM773 249h1V272h-1zM774 251h1V268h-1zM775 249h1V270h-1zM776 250h1V266h-1zM777 250h1V269h-1zM778 252h1V269h-1z" fill="#0c780c" opacity="0.5"/><path d="M20 244h1V271h-1zM21 246h1V270h-1zM22 252h1V267h-1zM23 251h1V267h-1zM24 251h1V268h-1zM25 252h1V266h-1zM26 250h1V266h-1zM27 251h1V270h-1zM28 252h1V272h-1zM29 252h1V271h-1zM30 251h1V268h-1zM31 252h1V267h-1zM32 247h1V272h-1zM33 249h1V266h-1zM34 246h1V269h-1zM35 251h1V269h-1zM36 252h1V266h-1zM37 246h1V272h-1zM38 252h1V270h-1zM39 246h1V268h-1zM40 249h1V268h-1zM41 246h1V267h-1zM42 246h1V267h-1zM43 252h1V266h-1zM44 248h1V270h-1zM45 251h1V269h-1zM46 249h1V266h-1zM47 250h1V268h-1zM48 250h1V266h-1zM49 250h1V267h-1zM50 250h1V270h-1zM51 247h1V266h-1zM52 250h1V270h-1zM53 249h1V272h-1zM54 252h1V267h-1zM55 251h1V266h-1zM56 246h1V266h-1zM57 252h1V266h-1zM58 251h1V272h-1zM59 251h1V270h-1zM60 246h1V267h-1zM61 244h1V271h-1zM62 246h1V270h-1zM63 252h1V268h-1zM64 247h1V268h-1zM65 251h1V266h-1zM66 252h1V266h-1zM67 247h1V266h-1zM68 250h1V271h-1zM69 246h1V267h-1zM70 251h1V276h-1zM71 247h1V268h-1zM72 249h1V268h-1zM73 251h1V266h-1zM74 252h1V269h-1zM75 249h1V268h-1zM76 251h1V266h-1zM77 252h1V266h-1zM78 250h1V270h-1zM79 252h1V271h-1zM80 250h1V266h-1zM81 247h1V269h-1zM82 250h1V266h-1zM83 248h1V271h-1zM84 250h1V270h-1zM85 251h1V266h-1zM86 249h1V269h-1zM87 250h1V271h-1zM88 248h1V267h-1zM89 247h1V272h-1zM90 250h1V269h-1zM91 250h1V268h-1zM92 251h1V268h-1zM93 249h1V267h-1zM94 250h1V272h-1zM95 251h1V270h-1zM96 248h1V266h-1zM97 247h1V269h-1zM98 251h1V271h-1zM99 252h1V267h-1zM100 251h1V271h-1zM101 249h1V266h-1zM102 248h1V266h-1zM103 251h1V271h-1zM104 249h1V268h-1zM105 247h1V267h-1zM106 247h1V270h-1zM107 252h1V266h-1zM108 250h1V268h-1zM109 252h1V267h-1zM110 252h1V266h-1zM111 251h1V272h-1zM112 252h1V275h-1zM113 250h1V275h-1zM114 250h1V274h-1zM115 246h1V272h-1zM116 246h1V269h-1zM117 248h1V266h-1zM118 252h1V272h-1zM119 249h1V267h-1zM120 250h1V267h-1zM121 248h1V270h-1zM122 246h1V270h-1zM123 248h1V269h-1zM124 246h1V269h-1zM125 252h1V270h-1zM126 251h1V266h-1zM127 246h1V271h-1zM128 247h1V266h-1zM129 252h1V266h-1zM130 252h1V269h-1zM131 249h1V266h-1zM132 252h1V269h-1zM133 252h1V266h-1zM134 252h1V271h-1zM135 246h1V269h-1zM136 249h1V270h-1zM137 248h1V270h-1zM138 250h1V267h-1zM139 248h1V266h-1zM140 252h1V267h-1zM141 251h1V268h-1zM142 251h1V271h-1zM143 251h1V269h-1zM144 249h1V267h-1zM145 251h1V266h-1zM146 249h1V267h-1zM147 251h1V266h-1zM148 251h1V269h-1zM149 247h1V269h-1zM150 247h1V272h-1zM151 252h1V270h-1zM152 246h1V272h-1zM153 251h1V267h-1zM154 247h1V272h-1zM155 247h1V267h-1zM156 251h1V268h-1zM157 251h1V269h-1zM158 247h1V269h-1zM159 245h1V272h-1zM160 251h1V268h-1zM161 252h1V272h-1zM162 249h1V272h-1zM163 252h1V268h-1zM164 251h1V272h-1zM165 251h1V269h-1zM166 250h1V268h-1zM167 249h1V269h-1zM168 252h1V270h-1zM169 251h1V269h-1zM170 246h1V272h-1zM171 252h1V272h-1zM172 249h1V271h-1zM173 251h1V272h-1zM174 246h1V272h-1zM175 251h1V269h-1zM176 252h1V266h-1zM177 249h1V272h-1zM178 248h1V268h-1zM179 246h1V270h-1zM180 248h1V272h-1zM181 251h1V269h-1zM182 247h1V267h-1zM183 250h1V272h-1zM184 251h1V266h-1zM185 249h1V269h-1zM186 246h1V271h-1zM187 249h1V266h-1zM188 252h1V267h-1zM189 250h1V266h-1zM190 247h1V269h-1zM191 252h1V269h-1zM192 246h1V271h-1zM193 250h1V269h-1zM194 250h1V268h-1zM195 246h1V268h-1zM196 246h1V267h-1zM197 246h1V272h-1zM198 247h1V268h-1zM199 251h1V266h-1zM200 251h1V268h-1zM201 249h1V270h-1zM202 248h1V271h-1zM203 247h1V273h-1zM204 250h1V269h-1zM205 252h1V268h-1zM206 252h1V269h-1zM207 246h1V268h-1zM208 250h1V270h-1zM209 250h1V270h-1zM210 252h1V272h-1zM211 247h1V267h-1zM212 246h1V271h-1zM213 252h1V270h-1zM214 247h1V267h-1zM215 248h1V269h-1zM216 251h1V272h-1zM217 252h1V266h-1zM218 247h1V272h-1zM219 248h1V266h-1zM220 247h1V266h-1zM221 247h1V272h-1zM222 249h1V266h-1zM223 246h1V267h-1zM224 246h1V269h-1zM225 251h1V266h-1zM226 250h1V271h-1zM227 251h1V271h-1zM228 252h1V269h-1zM229 249h1V266h-1zM230 250h1V270h-1zM231 248h1V269h-1zM232 246h1V270h-1zM233 250h1V267h-1zM234 252h1V272h-1zM235 248h1V269h-1zM236 246h1V271h-1zM237 246h1V271h-1zM238 249h1V271h-1zM239 252h1V266h-1zM240 252h1V267h-1zM241 252h1V267h-1zM242 246h1V270h-1zM243 251h1V266h-1zM244 250h1V272h-1zM245 247h1V266h-1zM246 252h1V266h-1zM247 247h1V272h-1zM248 250h1V271h-1zM249 252h1V266h-1zM250 252h1V268h-1zM251 246h1V267h-1zM252 248h1V271h-1zM253 247h1V266h-1zM254 252h1V268h-1zM255 247h1V267h-1zM256 248h1V266h-1zM257 251h1V272h-1zM258 246h1V271h-1zM259 250h1V272h-1zM260 248h1V271h-1zM261 250h1V272h-1zM262 252h1V270h-1zM263 247h1V268h-1zM264 248h1V266h-1zM265 248h1V271h-1zM266 248h1V271h-1zM267 252h1V266h-1zM268 252h1V271h-1zM269 250h1V267h-1zM270 247h1V270h-1zM271 249h1V267h-1zM272 249h1V269h-1zM273 251h1V268h-1zM274 251h1V267h-1zM275 252h1V266h-1zM276 251h1V272h-1zM277 252h1V266h-1zM278 250h1V268h-1zM279 248h1V268h-1zM280 248h1V272h-1zM281 252h1V269h-1zM282 249h1V266h-1zM283 247h1V269h-1zM284 249h1V271h-1zM285 249h1V266h-1zM286 250h1V268h-1zM287 246h1V271h-1zM288 250h1V269h-1zM289 246h1V268h-1zM290 252h1V266h-1zM291 247h1V267h-1zM292 246h1V272h-1zM293 250h1V266h-1zM294 248h1V267h-1zM295 252h1V268h-1zM296 249h1V272h-1zM297 247h1V270h-1zM298 251h1V266h-1zM299 251h1V270h-1zM300 248h1V268h-1zM301 251h1V269h-1zM302 249h1V273h-1zM303 250h1V268h-1zM304 251h1V266h-1zM305 252h1V272h-1zM306 251h1V268h-1zM307 251h1V266h-1zM308 245h1V268h-1zM309 252h1V267h-1zM310 249h1V268h-1zM311 250h1V266h-1zM312 244h1V271h-1zM313 252h1V270h-1zM314 250h1V272h-1zM315 248h1V270h-1zM316 247h1V266h-1zM317 250h1V270h-1zM318 251h1V271h-1zM319 252h1V266h-1zM320 249h1V268h-1zM321 251h1V268h-1zM322 247h1V271h-1zM323 246h1V272h-1zM324 250h1V272h-1zM325 249h1V267h-1zM326 251h1V266h-1zM327 249h1V269h-1zM328 249h1V272h-1zM329 252h1V267h-1zM330 248h1V272h-1zM331 250h1V269h-1zM332 247h1V266h-1zM333 251h1V267h-1zM334 251h1V271h-1zM335 252h1V270h-1zM336 247h1V269h-1zM337 250h1V266h-1zM338 248h1V268h-1zM339 248h1V268h-1zM340 244h1V268h-1zM341 247h1V267h-1zM342 251h1V268h-1zM343 250h1V268h-1zM344 248h1V266h-1zM345 247h1V266h-1zM346 250h1V269h-1zM347 252h1V272h-1zM348 251h1V272h-1zM349 248h1V272h-1zM350 251h1V272h-1zM351 249h1V270h-1zM352 246h1V267h-1zM353 251h1V266h-1zM354 252h1V268h-1zM355 250h1V267h-1zM356 251h1V272h-1zM357 251h1V267h-1zM358 246h1V269h-1zM359 247h1V268h-1zM360 252h1V269h-1zM361 246h1V269h-1zM362 251h1V269h-1zM363 247h1V270h-1zM364 250h1V266h-1zM365 250h1V270h-1zM366 250h1V268h-1zM367 251h1V272h-1zM368 248h1V267h-1zM369 251h1V268h-1zM370 250h1V271h-1zM371 248h1V266h-1zM372 248h1V272h-1zM373 248h1V271h-1zM374 247h1V268h-1zM375 246h1V271h-1zM376 247h1V267h-1zM377 252h1V267h-1zM378 252h1V270h-1zM379 249h1V270h-1zM380 247h1V271h-1zM381 252h1V269h-1zM382 252h1V266h-1zM383 250h1V266h-1zM384 252h1V266h-1zM385 250h1V270h-1zM386 247h1V267h-1zM387 251h1V272h-1zM388 252h1V270h-1zM389 248h1V266h-1zM390 247h1V266h-1zM391 250h1V268h-1zM392 250h1V272h-1zM393 248h1V267h-1zM394 252h1V268h-1zM395 246h1V271h-1zM396 249h1V271h-1zM397 250h1V272h-1zM398 248h1V266h-1zM399 252h1V272h-1zM400 247h1V269h-1zM401 252h1V274h-1zM402 250h1V269h-1zM403 252h1V266h-1zM404 250h1V266h-1zM405 252h1V271h-1zM406 248h1V271h-1zM407 251h1V270h-1zM408 251h1V272h-1zM409 250h1V271h-1zM410 248h1V266h-1zM411 246h1V267h-1zM412 249h1V266h-1zM413 243h1V268h-1zM414 252h1V266h-1zM415 250h1V266h-1zM416 249h1V268h-1zM417 252h1V270h-1zM418 249h1V268h-1zM419 251h1V270h-1zM420 250h1V266h-1zM421 252h1V269h-1zM422 250h1V266h-1zM423 252h1V270h-1zM424 249h1V266h-1zM425 252h1V269h-1zM426 249h1V266h-1zM427 248h1V268h-1zM428 252h1V267h-1zM429 250h1V270h-1zM430 252h1V270h-1zM431 252h1V268h-1zM432 244h1V268h-1zM433 248h1V269h-1zM434 249h1V268h-1zM435 248h1V271h-1zM436 249h1V268h-1zM437 252h1V271h-1zM438 252h1V266h-1zM439 247h1V268h-1zM440 251h1V271h-1zM441 247h1V268h-1zM442 250h1V266h-1zM443 252h1V268h-1zM444 247h1V269h-1zM445 249h1V266h-1zM446 248h1V269h-1zM447 252h1V268h-1zM448 251h1V269h-1zM449 249h1V266h-1zM450 251h1V266h-1zM451 251h1V268h-1zM452 252h1V266h-1zM453 246h1V270h-1zM454 247h1V268h-1zM455 251h1V269h-1zM456 244h1V270h-1zM457 252h1V269h-1zM458 249h1V272h-1zM459 247h1V270h-1zM460 252h1V271h-1zM461 248h1V269h-1zM462 252h1V267h-1zM463 251h1V270h-1zM464 247h1V269h-1zM465 246h1V267h-1zM466 246h1V267h-1zM467 252h1V271h-1zM468 252h1V272h-1zM469 251h1V269h-1zM470 249h1V267h-1zM471 249h1V266h-1zM472 246h1V272h-1zM473 251h1V271h-1zM474 248h1V269h-1zM475 251h1V268h-1zM476 252h1V268h-1zM477 248h1V269h-1zM478 249h1V272h-1zM479 248h1V272h-1zM480 250h1V266h-1zM481 247h1V272h-1zM482 250h1V270h-1zM483 251h1V269h-1zM484 246h1V268h-1zM485 249h1V269h-1zM486 252h1V268h-1zM487 250h1V267h-1zM488 249h1V269h-1zM489 248h1V271h-1zM490 247h1V270h-1zM491 248h1V268h-1zM492 252h1V267h-1zM493 251h1V267h-1zM494 249h1V270h-1zM495 250h1V266h-1zM496 247h1V272h-1zM497 249h1V269h-1zM498 252h1V267h-1zM499 250h1V268h-1zM500 250h1V269h-1zM501 252h1V268h-1zM502 249h1V266h-1zM503 252h1V267h-1zM504 252h1V267h-1zM505 247h1V266h-1zM506 250h1V268h-1zM507 252h1V267h-1zM508 246h1V266h-1zM509 250h1V267h-1zM510 251h1V267h-1zM511 250h1V267h-1zM512 252h1V268h-1zM513 251h1V272h-1zM514 249h1V266h-1zM515 248h1V270h-1zM516 252h1V267h-1zM517 252h1V270h-1zM518 246h1V266h-1zM519 247h1V268h-1zM520 248h1V266h-1zM521 248h1V266h-1zM522 249h1V270h-1zM523 248h1V266h-1zM524 252h1V268h-1zM525 247h1V267h-1zM526 248h1V272h-1zM527 250h1V266h-1zM528 250h1V271h-1zM529 252h1V266h-1zM530 244h1V272h-1zM531 249h1V268h-1zM532 249h1V267h-1zM533 250h1V267h-1zM534 249h1V266h-1zM535 251h1V268h-1zM536 247h1V270h-1zM537 251h1V268h-1zM538 246h1V268h-1zM539 250h1V267h-1zM540 251h1V269h-1zM541 252h1V266h-1zM542 252h1V268h-1zM543 249h1V267h-1zM544 246h1V266h-1zM545 251h1V267h-1zM546 246h1V266h-1zM547 248h1V267h-1zM548 247h1V266h-1zM549 247h1V266h-1zM550 248h1V272h-1zM551 249h1V268h-1zM552 251h1V271h-1zM553 251h1V270h-1zM554 246h1V267h-1zM555 252h1V266h-1zM556 248h1V272h-1zM557 250h1V266h-1zM558 247h1V271h-1zM559 248h1V267h-1zM560 248h1V269h-1zM561 251h1V266h-1zM562 252h1V266h-1zM563 250h1V268h-1zM564 252h1V269h-1zM565 246h1V267h-1zM566 246h1V267h-1zM567 248h1V268h-1zM568 250h1V268h-1zM569 248h1V271h-1zM570 252h1V271h-1zM571 248h1V269h-1zM572 249h1V270h-1zM573 251h1V267h-1zM574 248h1V267h-1zM575 244h1V270h-1zM576 252h1V271h-1zM577 249h1V266h-1zM578 249h1V267h-1zM579 252h1V270h-1zM580 244h1V268h-1zM581 249h1V267h-1zM582 252h1V272h-1zM583 246h1V266h-1zM584 252h1V270h-1zM585 249h1V270h-1zM586 250h1V269h-1zM587 252h1V267h-1zM588 252h1V271h-1zM589 248h1V275h-1zM590 252h1V270h-1zM591 248h1V267h-1zM592 250h1V266h-1zM593 249h1V268h-1zM594 252h1V271h-1zM595 249h1V271h-1zM596 246h1V267h-1zM597 251h1V266h-1zM598 248h1V266h-1zM599 246h1V266h-1zM600 252h1V269h-1zM601 252h1V268h-1zM602 246h1V269h-1zM603 249h1V271h-1zM604 252h1V271h-1zM605 247h1V270h-1zM606 251h1V267h-1zM607 247h1V267h-1zM608 248h1V266h-1zM609 248h1V267h-1zM610 247h1V266h-1zM611 246h1V272h-1zM612 252h1V272h-1zM613 246h1V269h-1zM614 251h1V269h-1zM615 247h1V268h-1zM616 247h1V275h-1zM617 249h1V272h-1zM618 247h1V267h-1zM619 248h1V267h-1zM620 252h1V272h-1zM621 246h1V269h-1zM622 247h1V272h-1zM623 248h1V266h-1zM624 251h1V266h-1zM625 249h1V271h-1zM626 246h1V267h-1zM627 251h1V268h-1zM628 249h1V266h-1zM629 249h1V267h-1zM630 248h1V266h-1zM631 248h1V266h-1zM632 247h1V270h-1zM633 250h1V266h-1zM634 252h1V270h-1zM635 252h1V270h-1zM636 247h1V266h-1zM637 251h1V271h-1zM638 250h1V269h-1zM639 247h1V267h-1zM640 252h1V269h-1zM641 249h1V268h-1zM642 248h1V271h-1zM643 252h1V268h-1zM644 246h1V266h-1zM645 248h1V272h-1zM646 250h1V268h-1zM647 250h1V267h-1zM648 252h1V269h-1zM649 249h1V266h-1zM650 243h1V268h-1zM651 246h1V272h-1zM652 252h1V267h-1zM653 248h1V270h-1zM654 252h1V268h-1zM655 248h1V269h-1zM656 246h1V267h-1zM657 249h1V271h-1zM658 247h1V271h-1zM659 251h1V267h-1zM660 251h1V271h-1zM661 251h1V266h-1zM662 246h1V266h-1zM663 246h1V270h-1zM664 248h1V268h-1zM665 249h1V270h-1zM666 247h1V267h-1zM667 252h1V271h-1zM668 252h1V266h-1zM669 250h1V271h-1zM670 246h1V272h-1zM671 248h1V270h-1zM672 251h1V267h-1zM673 247h1V269h-1zM674 252h1V271h-1zM675 252h1V270h-1zM676 248h1V266h-1zM677 248h1V270h-1zM678 251h1V267h-1zM679 252h1V270h-1zM680 250h1V268h-1zM681 250h1V271h-1zM682 252h1V272h-1zM683 247h1V271h-1zM684 249h1V266h-1zM685 251h1V273h-1zM686 246h1V266h-1zM687 244h1V272h-1zM688 252h1V266h-1zM689 246h1V267h-1zM690 252h1V271h-1zM691 249h1V269h-1zM692 246h1V271h-1zM693 251h1V271h-1zM694 247h1V271h-1zM695 249h1V270h-1zM696 252h1V267h-1zM697 245h1V269h-1zM698 251h1V270h-1zM699 250h1V270h-1zM700 247h1V266h-1zM701 252h1V269h-1zM702 249h1V266h-1zM703 251h1V270h-1zM704 252h1V268h-1zM705 246h1V267h-1zM706 251h1V268h-1zM707 252h1V272h-1zM708 249h1V266h-1zM709 248h1V267h-1zM710 246h1V268h-1zM711 247h1V266h-1zM712 249h1V269h-1zM713 248h1V269h-1zM714 246h1V269h-1zM715 252h1V267h-1zM716 249h1V266h-1zM717 248h1V271h-1zM718 248h1V270h-1zM719 247h1V266h-1zM720 246h1V270h-1zM721 251h1V268h-1zM722 252h1V266h-1zM723 251h1V274h-1zM724 246h1V268h-1zM725 250h1V267h-1zM726 252h1V267h-1zM727 249h1V268h-1zM728 251h1V267h-1zM729 252h1V270h-1zM730 246h1V267h-1zM731 249h1V267h-1zM732 250h1V272h-1zM733 249h1V267h-1zM734 248h1V266h-1zM735 251h1V268h-1zM736 246h1V269h-1zM737 248h1V266h-1zM738 246h1V266h-1zM739 252h1V272h-1zM740 251h1V271h-1zM741 247h1V266h-1zM742 246h1V268h-1zM743 246h1V271h-1zM744 246h1V267h-1zM745 252h1V270h-1zM746 251h1V267h-1zM747 251h1V266h-1zM748 251h1V268h-1zM749 246h1V269h-1zM750 252h1V272h-1zM751 246h1V270h-1zM752 247h1V268h-1zM753 247h1V271h-1zM754 247h1V270h-1zM755 249h1V266h-1zM756 247h1V268h-1zM757 248h1V271h-1zM758 248h1V269h-1zM759 250h1V270h-1zM760 252h1V268h-1zM761 251h1V270h-1zM762 251h1V266h-1zM763 249h1V266h-1zM764 252h1V270h-1zM765 250h1V267h-1zM766 248h1V266h-1zM767 248h1V271h-1zM768 249h1V267h-1zM769 251h1V266h-1zM770 252h1V272h-1zM771 247h1V267h-1zM772 249h1V266h-1zM773 250h1V267h-1zM774 247h1V266h-1zM775 247h1V268h-1zM776 252h1V271h-1zM777 246h1V271h-1zM778 247h1V267h-1z" fill="#0c780c" opacity="0.5"/><path d="M20 249h1V266h-1zM21 248h1V266h-1zM22 248h1V269h-1zM23 249h1V271h-1zM24 247h1V271h-1zM25 251h1V266h-1zM26 246h1V266h-1zM27 249h1V266h-1zM28 248h1V266h-1zM29 251h1V270h-1zM30 249h1V269h-1zM31 250h1V268h-1zM32 252h1V269h-1zM33 248h1V272h-1zM34 247h1V267h-1zM35 249h1V268h-1zM36 249h1V271h-1zM37 247h1V266h-1zM38 251h1V271h-1zM39 252h1V266h-1zM40 251h1V267h-1zM41 252h1V267h-1zM42 251h1V267h-1zM43 246h1V268h-1zM44 248h1V266h-1zM45 250h1V270h-1zM46 247h1V267h-1zM47 252h1V266h-1zM48 247h1V270h-1zM49 251h1V270h-1zM50 250h1V267h-1zM51 250h1V266h-1zM52 248h1V266h-1zM53 246h1V269h-1zM54 250h1V276h-1zM55 249h1V266h-1zM56 250h1V266h-1zM57 244h1V271h-1zM58 246h1V271h-1zM59 247h1V272h-1zM60 252h1V266h-1zM61 252h1V268h-1zM62 249h1V270h-1zM63 251h1V271h-1zM64 248h1V271h-1zM65 251h1V267h-1zM66 251h1V271h-1zM67 252h1V271h-1zM68 248h1V270h-1zM69 250h1V268h-1zM70 251h1V272h-1zM71 250h1V268h-1zM72 248h1V269h-1zM73 247h1V271h-1zM74 248h1V269h-1zM75 249h1V267h-1zM76 252h1V267h-1zM77 244h1V267h-1zM78 250h1V272h-1zM79 247h1V270h-1zM80 252h1V269h-1zM81 251h1V268h-1zM82 252h1V267h-1zM83 252h1V268h-1zM84 251h1V268h-1zM85 252h1V268h-1zM86 248h1V275h-1zM87 246h1V266h-1zM88 246h1V269h-1zM89 250h1V269h-1zM90 248h1V269h-1zM91 248h1V270h-1zM92 251h1V272h-1zM93 246h1V267h-1zM94 252h1V272h-1zM95 248h1V271h-1zM96 251h1V271h-1zM97 247h1V268h-1zM98 251h1V271h-1zM99 249h1V266h-1zM100 248h1V266h-1zM101 248h1V269h-1zM102 252h1V272h-1zM103 251h1V267h-1zM104 251h1V268h-1zM105 252h1V272h-1zM106 251h1V271h-1zM107 248h1V267h-1zM108 246h1V275h-1zM109 252h1V267h-1zM110 251h1V269h-1zM111 248h1V272h-1zM112 250h1V272h-1zM113 250h1V267h-1zM114 252h1V268h-1zM115 250h1V266h-1zM116 252h1V267h-1zM117 252h1V268h-1zM118 252h1V269h-1zM119 249h1V272h-1zM120 250h1V272h-1zM121 246h1V271h-1zM122 251h1V266h-1zM123 246h1V267h-1zM124 251h1V266h-1zM125 246h1V267h-1zM126 247h1V268h-1zM127 249h1V266h-1zM128 248h1V269h-1zM129 252h1V267h-1zM130 252h1V269h-1zM131 252h1V271h-1zM132 249h1V270h-1zM133 251h1V268h-1zM134 250h1V268h-1zM135 252h1V271h-1zM136 246h1V269h-1zM137 250h1V272h-1zM138 248h1V267h-1zM139 246h1V272h-1zM140 247h1V273h-1zM141 252h1V266h-1zM142 250h1V266h-1zM143 246h1V268h-1zM144 252h1V270h-1zM145 251h1V272h-1zM146 251h1V269h-1zM147 248h1V270h-1zM148 247h1V266h-1zM149 246h1V270h-1zM150 251h1V268h-1zM151 248h1V268h-1zM152 248h1V266h-1zM153 246h1V270h-1zM154 251h1V269h-1zM155 251h1V268h-1zM156 252h1V272h-1zM157 246h1V268h-1zM158 248h1V269h-1zM159 250h1V268h-1zM160 248h1V271h-1zM161 252h1V267h-1zM162 252h1V269h-1zM163 248h1V268h-1zM164 247h1V272h-1zM165 248h1V272h-1zM166 251h1V267h-1zM167 252h1V266h-1zM168 246h1V271h-1zM169 247h1V267h-1zM170 250h1V266h-1zM171 249h1V270h-1zM172 246h1V269h-1zM173 251h1V268h-1zM174 250h1V267h-1zM175 246h1V271h-1zM176 249h1V266h-1zM177 248h1V267h-1zM178 251h1V268h-1zM179 247h1V269h-1zM180 252h1V271h-1zM181 250h1V266h-1zM182 249h1V271h-1zM183 246h1V268h-1zM184 248h1V269h-1zM185 252h1V266h-1zM186 249h1V267h-1zM187 252h1V272h-1zM188 250h1V269h-1zM189 248h1V267h-1zM190 248h1V267h-1zM191 248h1V267h-1zM192 248h1V270h-1zM193 248h1V270h-1zM194 249h1V268h-1zM195 250h1V271h-1zM196 247h1V270h-1zM197 248h1V270h-1zM198 247h1V267h-1zM199 247h1V266h-1zM200 252h1V266h-1zM201 250h1V270h-1zM202 250h1V266h-1zM203 246h1V268h-1zM204 248h1V271h-1zM205 252h1V270h-1zM206 248h1V267h-1zM207 251h1V270h-1zM208 251h1V269h-1zM209 249h1V267h-1zM210 252h1V269h-1zM211 252h1V269h-1zM212 252h1V270h-1zM213 250h1V268h-1zM214 247h1V267h-1zM215 251h1V268h-1zM216 248h1V267h-1zM217 252h1V266h-1zM218 250h1V267h-1zM219 252h1V267h-1zM220 249h1V270h-1zM221 250h1V271h-1zM222 251h1V266h-1zM223 252h1V271h-1zM224 251h1V272h-1zM225 250h1V268h-1zM226 251h1V268h-1zM227 246h1V270h-1zM228 247h1V271h-1zM229 252h1V272h-1zM230 250h1V268h-1zM231 247h1V267h-1zM232 252h1V268h-1zM233 247h1V269h-1zM234 252h1V267h-1zM235 249h1V269h-1zM236 248h1V270h-1zM237 247h1V269h-1zM238 248h1V271h-1zM239 252h1V270h-1zM240 247h1V268h-1zM241 249h1V271h-1zM242 252h1V268h-1zM243 250h1V266h-1zM244 246h1V267h-1zM245 251h1V269h-1zM246 246h1V271h-1zM247 251h1V271h-1zM248 250h1V266h-1zM249 246h1V267h-1zM250 252h1V270h-1zM251 250h1V270h-1zM252 250h1V269h-1zM253 251h1V266h-1zM254 246h1V272h-1zM255 252h1V266h-1zM256 250h1V266h-1zM257 252h1V268h-1zM258 250h1V268h-1zM259 251h1V270h-1zM260 252h1V266h-1zM261 250h1V272h-1zM262 248h1V270h-1zM263 251h1V268h-1zM264 251h1V271h-1zM265 249h1V269h-1zM266 248h1V271h-1zM267 250h1V266h-1zM268 248h1V272h-1zM269 252h1V269h-1zM270 250h1V270h-1zM271 252h1V270h-1zM272 251h1V266h-1zM273 248h1V266h-1zM274 251h1V268h-1zM275 249h1V266h-1zM276 248h1V271h-1zM277 246h1V268h-1zM278 246h1V267h-1zM279 248h1V266h-1zM280 246h1V266h-1zM281 251h1V271h-1zM282 249h1V268h-1zM283 252h1V267h-1zM284 250h1V272h-1zM285 246h1V267h-1zM286 250h1V267h-1zM287 251h1V267h-1zM288 250h1V269h-1zM289 251h1V266h-1zM290 247h1V266h-1zM291 246h1V268h-1zM292 248h1V269h-1zM293 252h1V270h-1zM294 252h1V267h-1zM295 247h1V267h-1zM296 245h1V268h-1zM297 249h1V266h-1zM298 247h1V272h-1zM299 250h1V268h-1zM300 252h1V267h-1zM301 246h1V270h-1zM302 248h1V267h-1zM303 250h1V266h-1zM304 246h1V266h-1zM305 250h1V269h-1zM306 249h1V271h-1zM307 247h1V268h-1zM308 252h1V271h-1zM309 251h1V266h-1zM310 251h1V268h-1zM311 251h1V269h-1zM312 251h1V269h-1zM313 247h1V271h-1zM314 251h1V269h-1zM315 251h1V267h-1zM316 251h1V266h-1zM317 252h1V267h-1zM318 249h1V271h-1zM319 247h1V266h-1zM320 249h1V268h-1zM321 246h1V266h-1zM322 249h1V272h-1zM323 249h1V272h-1zM324 252h1V267h-1zM325 251h1V266h-1zM326 246h1V266h-1zM327 248h1V272h-1zM328 249h1V272h-1zM329 246h1V270h-1zM330 249h1V266h-1zM331 252h1V267h-1zM332 247h1V266h-1zM333 251h1V266h-1zM334 248h1V266h-1zM335 252h1V272h-1zM336 252h1V267h-1zM337 251h1V271h-1zM338 246h1V270h-1zM339 251h1V268h-1zM340 251h1V272h-1zM341 250h1V266h-1zM342 250h1V266h-1zM343 248h1V269h-1zM344 247h1V272h-1zM345 249h1V266h-1zM346 248h1V267h-1zM347 251h1V266h-1zM348 251h1V269h-1zM349 249h1V267h-1zM350 251h1V268h-1zM351 252h1V267h-1zM352 245h1V270h-1zM353 248h1V268h-1zM354 246h1V270h-1zM355 247h1V266h-1zM356 247h1V272h-1zM357 246h1V269h-1zM358 252h1V269h-1zM359 249h1V269h-1zM360 248h1V266h-1zM361 251h1V267h-1zM362 246h1V268h-1zM363 247h1V270h-1zM364 250h1V268h-1zM365 252h1V270h-1zM366 251h1V266h-1zM367 242h1V266h-1zM368 250h1V272h-1zM369 252h1V267h-1zM370 251h1V269h-1zM371 252h1V266h-1zM372 252h1V266h-1zM373 248h1V268h-1zM374 248h1V266h-1zM375 248h1V269h-1zM376 246h1V266h-1zM377 251h1V267h-1zM378 250h1V266h-1zM379 243h1V271h-1zM380 247h1V267h-1zM381 246h1V266h-1zM382 247h1V268h-1zM383 247h1V266h-1zM384 246h1V269h-1zM385 252h1V272h-1zM386 252h1V266h-1zM387 246h1V269h-1zM388 252h1V271h-1zM389 248h1V272h-1zM390 251h1V266h-1zM391 247h1V268h-1zM392 251h1V268h-1zM393 252h1V272h-1zM394 246h1V268h-1zM395 247h1V271h-1zM396 251h1V271h-1zM397 252h1V271h-1zM398 252h1V269h-1zM399 250h1V268h-1zM400 252h1V266h-1zM401 252h1V268h-1zM402 249h1V269h-1zM403 246h1V266h-1zM404 252h1V266h-1zM405 246h1V270h-1zM406 251h1V269h-1zM407 249h1V268h-1zM408 252h1V272h-1zM409 252h1V268h-1zM410 246h1V270h-1zM411 247h1V269h-1zM412 252h1V266h-1zM413 250h1V266h-1zM414 250h1V269h-1zM415 249h1V268h-1zM416 249h1V269h-1zM417 249h1V268h-1zM418 247h1V271h-1zM419 248h1V268h-1zM420 252h1V270h-1zM421 252h1V272h-1zM422 249h1V270h-1zM423 252h1V266h-1zM424 246h1V271h-1zM425 251h1V266h-1zM426 247h1V267h-1zM427 250h1V268h-1zM428 250h1V266h-1zM429 249h1V269h-1zM430 249h1V273h-1zM431 252h1V266h-1zM432 251h1V268h-1zM433 249h1V272h-1zM434 252h1V271h-1zM435 247h1V272h-1zM436 246h1V266h-1zM437 252h1V267h-1zM438 252h1V270h-1zM439 247h1V269h-1zM440 252h1V269h-1zM441 252h1V268h-1zM442 246h1V266h-1zM443 251h1V271h-1zM444 252h1V266h-1zM445 252h1V269h-1zM446 252h1V266h-1zM447 251h1V268h-1zM448 251h1V271h-1zM449 248h1V271h-1zM450 251h1V266h-1zM451 252h1V268h-1zM452 248h1V266h-1zM453 250h1V267h-1zM454 252h1V268h-1zM455 250h1V269h-1zM456 252h1V270h-1zM457 246h1V272h-1zM458 251h1V267h-1zM459 250h1V266h-1zM460 247h1V266h-1zM461 249h1V270h-1zM462 252h1V266h-1zM463 246h1V266h-1zM464 249h1V271h-1zM465 250h1V266h-1zM466 252h1V274h-1zM467 249h1V269h-1zM468 247h1V272h-1zM469 252h1V273h-1zM470 251h1V272h-1zM471 247h1V271h-1zM472 251h1V267h-1zM473 251h1V269h-1zM474 247h1V268h-1zM475 246h1V270h-1zM476 250h1V272h-1zM477 247h1V269h-1zM478 252h1V270h-1zM479 252h1V268h-1zM480 247h1V268h-1zM481 251h1V267h-1zM482 246h1V267h-1zM483 249h1V267h-1zM484 252h1V270h-1zM485 252h1V268h-1zM486 251h1V272h-1zM487 250h1V272h-1zM488 248h1V266h-1zM489 252h1V272h-1zM490 247h1V266h-1zM491 246h1V266h-1zM492 252h1V270h-1zM493 249h1V271h-1zM494 248h1V268h-1zM495 248h1V270h-1zM496 249h1V266h-1zM497 252h1V268h-1zM498 248h1V272h-1zM499 247h1V269h-1zM500 250h1V269h-1zM501 246h1V266h-1zM502 250h1V272h-1zM503 250h1V268h-1zM504 249h1V271h-1zM505 247h1V266h-1zM506 251h1V271h-1zM507 249h1V266h-1zM508 246h1V267h-1zM509 252h1V266h-1zM510 248h1V266h-1zM511 252h1V272h-1zM512 248h1V272h-1zM513 248h1V268h-1zM514 248h1V268h-1zM515 252h1V270h-1zM516 249h1V269h-1zM517 247h1V266h-1zM518 246h1V269h-1zM519 243h1V270h-1zM520 249h1V272h-1zM521 247h1V266h-1zM522 251h1V272h-1zM523 251h1V272h-1zM524 249h1V269h-1zM525 252h1V268h-1zM526 251h1V266h-1zM527 252h1V272h-1zM528 249h1V272h-1zM529 249h1V271h-1zM530 246h1V268h-1zM531 250h1V270h-1zM532 250h1V269h-1zM533 249h1V268h-1zM534 249h1V268h-1zM535 252h1V272h-1zM536 250h1V272h-1zM537 249h1V267h-1zM538 252h1V268h-1zM539 250h1V269h-1zM540 247h1V266h-1zM541 252h1V271h-1zM542 246h1V266h-1zM543 243h1V270h-1zM544 248h1V267h-1zM545 250h1V267h-1zM546 252h1V270h-1zM547 250h1V268h-1zM548 250h1V272h-1zM549 252h1V267h-1zM550 252h1V266h-1zM551 249h1V267h-1zM552 243h1V266h-1zM553 248h1V266h-1zM554 249h1V271h-1zM555 248h1V267h-1zM556 248h1V270h-1zM557 251h1V274h-1zM558 252h1V266h-1zM559 251h1V274h-1zM560 248h1V266h-1zM561 249h1V266h-1zM562 246h1V269h-1zM563 251h1V267h-1zM564 252h1V270h-1zM565 251h1V269h-1zM566 251h1V271h-1zM567 251h1V266h-1zM568 247h1V269h-1zM569 250h1V269h-1zM570 252h1V273h-1zM571 248h1V271h-1zM572 251h1V266h-1zM573 252h1V267h-1zM574 250h1V266h-1zM575 251h1V267h-1zM576 252h1V271h-1zM577 247h1V270h-1zM578 248h1V266h-1zM579 248h1V267h-1zM580 247h1V266h-1zM581 251h1V266h-1zM582 251h1V272h-1zM583 247h1V267h-1zM584 249h1V268h-1zM585 252h1V266h-1zM586 247h1V269h-1zM587 247h1V271h-1zM588 248h1V269h-1zM589 249h1V272h-1zM590 249h1V271h-1zM591 250h1V269h-1zM592 249h1V266h-1zM593 247h1V266h-1zM594 249h1V266h-1zM595 249h1V266h-1zM596 252h1V267h-1zM597 248h1V272h-1zM598 247h1V268h-1zM599 250h1V266h-1zM600 246h1V268h-1zM601 249h1V268h-1zM602 250h1V271h-1zM603 249h1V267h-1zM604 246h1V271h-1zM605 251h1V267h-1zM606 246h1V269h-1zM607 246h1V271h-1zM608 251h1V266h-1zM609 246h1V270h-1zM610 252h1V268h-1zM611 249h1V268h-1zM612 248h1V268h-1zM613 252h1V270h-1zM614 246h1V272h-1zM615 251h1V268h-1zM616 249h1V269h-1zM617 248h1V266h-1zM618 248h1V267h-1zM619 249h1V267h-1zM620 252h1V267h-1zM621 252h1V267h-1zM622 250h1V269h-1zM623 252h1V272h-1zM624 249h1V268h-1zM625 251h1V270h-1zM626 251h1V266h-1zM627 246h1V266h-1zM628 249h1V270h-1zM629 251h1V270h-1zM630 243h1V266h-1zM631 250h1V270h-1zM632 250h1V271h-1zM633 250h1V271h-1zM634 251h1V269h-1zM635 250h1V269h-1zM636 249h1V272h-1zM637 248h1V269h-1zM638 250h1V274h-1zM639 249h1V270h-1zM640 252h1V266h-1zM641 252h1V269h-1zM642 251h1V266h-1zM643 248h1V270h-1zM644 247h1V272h-1zM645 252h1V269h-1zM646 252h1V267h-1zM647 246h1V268h-1zM648 248h1V266h-1zM649 248h1V271h-1zM650 245h1V272h-1zM651 247h1V267h-1zM652 250h1V267h-1zM653 250h1V272h-1zM654 247h1V269h-1zM655 251h1V268h-1zM656 251h1V269h-1zM657 252h1V270h-1zM658 249h1V270h-1zM659 247h1V266h-1zM660 246h1V266h-1zM661 248h1V269h-1zM662 250h1V266h-1zM663 244h1V272h-1zM664 250h1V266h-1zM665 250h1V268h-1zM666 252h1V271h-1zM667 246h1V271h-1zM668 251h1V272h-1zM669 249h1V272h-1zM670 248h1V266h-1zM671 247h1V272h-1zM672 252h1V270h-1zM673 250h1V268h-1zM674 251h1V269h-1zM675 252h1V269h-1zM676 251h1V269h-1zM677 251h1V269h-1zM678 252h1V269h-1zM679 251h1V272h-1zM680 249h1V266h-1zM681 244h1V269h-1zM682 246h1V270h-1zM683 248h1V268h-1zM684 247h1V270h-1zM685 251h1V271h-1zM686 246h1V266h-1zM687 250h1V269h-1zM688 246h1V266h-1zM689 252h1V269h-1zM690 249h1V271h-1zM691 251h1V268h-1zM692 251h1V269h-1zM693 252h1V268h-1zM694 247h1V267h-1zM695 251h1V267h-1zM696 247h1V266h-1zM697 248h1V266h-1zM698 246h1V266h-1zM699 248h1V268h-1zM700 251h1V266h-1zM701 251h1V270h-1zM702 249h1V267h-1zM703 250h1V270h-1zM704 252h1V267h-1zM705 247h1V272h-1zM706 252h1V272h-1zM707 246h1V266h-1zM708 246h1V266h-1zM709 246h1V268h-1zM710 252h1V268h-1zM711 247h1V271h-1zM712 252h1V272h-1zM713 248h1V270h-1zM714 249h1V268h-1zM715 249h1V267h-1zM716 252h1V271h-1zM717 246h1V270h-1zM718 251h1V268h-1zM719 246h1V268h-1zM720 252h1V267h-1zM721 251h1V272h-1zM722 249h1V267h-1zM723 248h1V266h-1zM724 252h1V267h-1zM725 247h1V272h-1zM726 247h1V269h-1zM727 248h1V271h-1zM728 252h1V271h-1zM729 251h1V267h-1zM730 246h1V268h-1zM731 252h1V268h-1zM732 249h1V269h-1zM733 250h1V268h-1zM734 249h1V271h-1zM735 248h1V268h-1zM736 247h1V270h-1zM737 246h1V272h-1zM738 250h1V272h-1zM739 248h1V270h-1zM740 246h1V268h-1zM741 248h1V272h-1zM742 245h1V267h-1zM743 250h1V266h-1zM744 252h1V267h-1zM745 245h1V272h-1zM746 249h1V271h-1zM747 249h1V270h-1zM748 250h1V272h-1zM749 252h1V266h-1zM750 252h1V272h-1zM751 245h1V270h-1zM752 251h1V267h-1zM753 247h1V268h-1zM754 251h1V268h-1zM755 250h1V267h-1zM756 252h1V268h-1zM757 247h1V268h-1zM758 246h1V267h-1zM759 246h1V266h-1zM760 248h1V266h-1zM761 252h1V266h-1zM762 252h1V268h-1zM763 252h1V267h-1zM764 247h1V266h-1zM765 248h1V270h-1zM766 248h1V269h-1zM767 252h1V266h-1zM768 251h1V266h-1zM769 252h1V269h-1zM770 249h1V271h-1zM771 247h1V270h-1zM772 249h1V267h-1zM773 247h1V271h-1zM774 250h1V268h-1zM775 249h1V268h-1zM776 249h1V271h-1zM777 251h1V267h-1zM778 252h1V266h-1z" fill="#0c780c" opacity="0.5"/><path d="M20 248h1V267h-1zM21 250h1V268h-1zM22 252h1V266h-1zM23 252h1V270h-1zM24 252h1V270h-1zM25 249h1V272h-1zM26 246h1V270h-1zM27 251h1V266h-1zM28 250h1V267h-1zM29 249h1V266h-1zM30 247h1V267h-1zM31 249h1V267h-1zM32 252h1V269h-1zM33 251h1V268h-1zM34 246h1V268h-1zM35 249h1V267h-1zM36 248h1V268h-1zM37 249h1V267h-1zM38 248h1V270h-1zM39 246h1V266h-1zM40 252h1V267h-1zM41 251h1V270h-1zM42 249h1V272h-1zM43 251h1V271h-1zM44 252h1V269h-1zM45 246h1V269h-1zM46 247h1V268h-1zM47 248h1V266h-1zM48 246h1V268h-1zM49 249h1V271h-1zM50 247h1V269h-1zM51 250h1V267h-1zM52 252h1V268h-1zM53 251h1V271h-1zM54 246h1V266h-1zM55 251h1V267h-1zM56 249h1V266h-1zM57 246h1V266h-1zM58 249h1V266h-1zM59 247h1V271h-1zM60 248h1V266h-1zM61 248h1V271h-1zM62 250h1V267h-1zM63 250h1V266h-1zM64 251h1V271h-1zM65 246h1V270h-1zM66 252h1V271h-1zM67 245h1V272h-1zM68 251h1V270h-1zM69 248h1V267h-1zM70 247h1V266h-1zM71 251h1V272h-1zM72 251h1V267h-1zM73 248h1V268h-1zM74 251h1V268h-1zM75 251h1V269h-1zM76 252h1V271h-1zM77 249h1V270h-1zM78 252h1V267h-1zM79 251h1V267h-1zM80 248h1V266h-1zM81 252h1V268h-1zM82 248h1V268h-1zM83 251h1V271h-1zM84 246h1V267h-1zM85 252h1V266h-1zM86 250h1V266h-1zM87 248h1V268h-1zM88 252h1V268h-1zM89 249h1V267h-1zM90 247h1V266h-1zM91 247h1V271h-1zM92 246h1V271h-1zM93 249h1V272h-1zM94 248h1V268h-1zM95 250h1V267h-1zM96 251h1V267h-1zM97 251h1V266h-1zM98 247h1V271h-1zM99 247h1V267h-1zM100 252h1V266h-1zM101 249h1V266h-1zM102 244h1V272h-1zM103 250h1V270h-1zM104 252h1V266h-1zM105 251h1V267h-1zM106 252h1V266h-1zM107 251h1V267h-1zM108 250h1V266h-1zM109 247h1V268h-1zM110 252h1V267h-1zM111 249h1V266h-1zM112 248h1V271h-1zM113 250h1V270h-1zM114 250h1V268h-1zM115 251h1V266h-1zM116 249h1V268h-1zM117 249h1V268h-1zM118 252h1V270h-1zM119 243h1V266h-1zM120 250h1V272h-1zM121 246h1V268h-1zM122 248h1V266h-1zM123 250h1V271h-1zM124 249h1V272h-1zM125 250h1V271h-1zM126 250h1V271h-1zM127 249h1V267h-1zM128 250h1V271h-1zM129 246h1V270h-1zM130 249h1V269h-1zM131 252h1V269h-1zM132 248h1V267h-1zM133 252h1V267h-1zM134 252h1V267h-1zM135 252h1V267h-1zM136 252h1V272h-1zM137 252h1V267h-1zM138 252h1V267h-1zM139 252h1V269h-1zM140 246h1V268h-1zM141 247h1V270h-1zM142 249h1V268h-1zM143 252h1V268h-1zM144 250h1V266h-1zM145 247h1V266h-1zM146 249h1V272h-1zM147 250h1V269h-1zM148 250h1V267h-1zM149 251h1V267h-1zM150 247h1V272h-1zM151 247h1V266h-1zM152 250h1V268h-1zM153 249h1V272h-1zM154 252h1V267h-1zM155 251h1V268h-1zM156 251h1V271h-1zM157 251h1V268h-1zM158 252h1V270h-1zM159 248h1V267h-1zM160 250h1V266h-1zM161 249h1V269h-1zM162 250h1V267h-1zM163 252h1V270h-1zM164 250h1V271h-1zM165 247h1V269h-1zM166 249h1V267h-1zM167 250h1V270h-1zM168 248h1V267h-1zM169 252h1V268h-1zM170 252h1V269h-1zM171 250h1V266h-1zM172 243h1V269h-1zM173 248h1V267h-1zM174 252h1V268h-1zM175 248h1V272h-1zM176 247h1V271h-1zM177 252h1V266h-1zM178 247h1V272h-1zM179 247h1V269h-1zM180 251h1V271h-1zM181 246h1V266h-1zM182 247h1V267h-1zM183 250h1V267h-1zM184 252h1V268h-1zM185 252h1V269h-1zM186 252h1V271h-1zM187 252h1V271h-1zM188 246h1V272h-1zM189 249h1V269h-1zM190 250h1V272h-1zM191 251h1V271h-1zM192 250h1V269h-1zM193 247h1V269h-1zM194 248h1V270h-1zM195 246h1V267h-1zM196 250h1V268h-1zM197 251h1V267h-1zM198 249h1V270h-1zM199 250h1V269h-1zM200 246h1V269h-1zM201 250h1V271h-1zM202 250h1V270h-1zM203 246h1V272h-1zM204 252h1V267h-1zM205 251h1V269h-1zM206 251h1V266h-1zM207 249h1V267h-1zM208 249h1V266h-1zM209 250h1V271h-1zM210 248h1V272h-1zM211 247h1V268h-1zM212 252h1V272h-1zM213 246h1V269h-1zM214 244h1V266h-1zM215 247h1V268h-1zM216 249h1V269h-1zM217 249h1V271h-1zM218 251h1V271h-1zM219 248h1V267h-1zM220 246h1V266h-1zM221 250h1V271h-1zM222 249h1V272h-1zM223 247h1V267h-1zM224 252h1V269h-1zM225 248h1V268h-1zM226 251h1V269h-1zM227 248h1V271h-1zM228 252h1V267h-1zM229 249h1V271h-1zM230 248h1V266h-1zM231 246h1V266h-1zM232 251h1V266h-1zM233 246h1V266h-1zM234 249h1V268h-1zM235 251h1V271h-1zM236 249h1V266h-1zM237 251h1V269h-1zM238 250h1V271h-1zM239 250h1V269h-1zM240 246h1V266h-1zM241 251h1V272h-1zM242 248h1V266h-1zM243 248h1V266h-1zM244 250h1V266h-1zM245 247h1V266h-1zM246 247h1V267h-1zM247 252h1V268h-1zM248 252h1V267h-1zM249 252h1V271h-1zM250 252h1V271h-1zM251 252h1V266h-1zM252 252h1V268h-1zM253 251h1V274h-1zM254 246h1V269h-1zM255 252h1V271h-1zM256 247h1V270h-1zM257 248h1V269h-1zM258 246h1V269h-1zM259 252h1V272h-1zM260 249h1V271h-1zM261 246h1V269h-1zM262 251h1V268h-1zM263 252h1V270h-1zM264 246h1V270h-1zM265 252h1V269h-1zM266 250h1V267h-1zM267 249h1V272h-1zM268 252h1V268h-1zM269 250h1V271h-1zM270 246h1V269h-1zM271 246h1V271h-1zM272 248h1V266h-1zM273 250h1V267h-1zM274 246h1V266h-1zM275 246h1V267h-1zM276 247h1V268h-1zM277 251h1V268h-1zM278 250h1V271h-1zM279 252h1V266h-1zM280 247h1V270h-1zM281 250h1V266h-1zM282 252h1V268h-1zM283 252h1V272h-1zM284 252h1V272h-1zM285 246h1V270h-1zM286 250h1V271h-1zM287 246h1V271h-1zM288 252h1V268h-1zM289 249h1V266h-1zM290 252h1V272h-1zM291 247h1V266h-1zM292 252h1V266h-1zM293 246h1V269h-1zM294 252h1V267h-1zM295 247h1V270h-1zM296 249h1V268h-1zM297 252h1V266h-1zM298 247h1V269h-1zM299 246h1V269h-1zM300 247h1V267h-1zM301 251h1V268h-1zM302 251h1V267h-1zM303 249h1V268h-1zM304 249h1V266h-1zM305 249h1V270h-1zM306 251h1V269h-1zM307 247h1V266h-1zM308 252h1V266h-1zM309 249h1V267h-1zM310 250h1V272h-1zM311 252h1V271h-1zM312 252h1V267h-1zM313 251h1V271h-1zM314 250h1V270h-1zM315 251h1V272h-1zM316 252h1V270h-1zM317 252h1V271h-1zM318 251h1V266h-1zM319 249h1V271h-1zM320 247h1V269h-1zM321 251h1V267h-1zM322 252h1V266h-1zM323 252h1V266h-1zM324 252h1V270h-1zM325 248h1V272h-1zM326 250h1V270h-1zM327 246h1V270h-1zM328 251h1V266h-1zM329 251h1V268h-1zM330 248h1V266h-1zM331 252h1V268h-1zM332 247h1V266h-1zM333 251h1V266h-1zM334 251h1V269h-1zM335 250h1V272h-1zM336 249h1V271h-1zM337 252h1V271h-1zM338 250h1V266h-1zM339 252h1V268h-1zM340 249h1V270h-1zM341 246h1V271h-1zM342 248h1V270h-1zM343 252h1V269h-1zM344 249h1V266h-1zM345 247h1V272h-1zM346 252h1V270h-1zM347 248h1V270h-1zM348 249h1V272h-1zM349 249h1V267h-1zM350 246h1V272h-1zM351 252h1V275h-1zM352 250h1V272h-1zM353 247h1V269h-1zM354 248h1V268h-1zM355 247h1V266h-1zM356 250h1V266h-1zM357 252h1V270h-1zM358 252h1V266h-1zM359 249h1V272h-1zM360 252h1V272h-1zM361 250h1V267h-1zM362 250h1V266h-1zM363 247h1V267h-1zM364 250h1V270h-1zM365 252h1V267h-1zM366 249h1V268h-1zM367 251h1V266h-1zM368 251h1V270h-1zM369 249h1V266h-1zM370 248h1V267h-1zM371 249h1V271h-1zM372 250h1V269h-1zM373 252h1V268h-1zM374 252h1V270h-1zM375 248h1V269h-1zM376 251h1V266h-1zM377 252h1V272h-1zM378 252h1V267h-1zM379 250h1V269h-1zM380 249h1V269h-1zM381 249h1V268h-1zM382 246h1V267h-1zM383 252h1V270h-1zM384 246h1V266h-1zM385 247h1V268h-1zM386 247h1V266h-1zM387 247h1V268h-1zM388 251h1V268h-1zM389 252h1V270h-1zM390 247h1V272h-1zM391 246h1V273h-1zM392 248h1V266h-1zM393 252h1V267h-1zM394 247h1V270h-1zM395 252h1V271h-1zM396 252h1V269h-1zM397 249h1V269h-1zM398 252h1V268h-1zM399 248h1V266h-1zM400 251h1V268h-1zM401 251h1V266h-1zM402 244h1V267h-1zM403 248h1V270h-1zM404 250h1V272h-1zM405 248h1V269h-1zM406 251h1V269h-1zM407 252h1V269h-1zM408 249h1V270h-1zM409 247h1V272h-1zM410 251h1V270h-1zM411 251h1V271h-1zM412 248h1V266h-1zM413 252h1V270h-1zM414 250h1V266h-1zM415 246h1V271h-1zM416 249h1V271h-1zM417 250h1V272h-1zM418 248h1V266h-1zM419 252h1V270h-1zM420 249h1V268h-1zM421 246h1V267h-1zM422 252h1V266h-1zM423 251h1V269h-1zM424 250h1V266h-1zM425 250h1V268h-1zM426 246h1V267h-1zM427 252h1V267h-1zM428 246h1V266h-1zM429 252h1V269h-1zM430 249h1V266h-1zM431 246h1V269h-1zM432 248h1V270h-1zM433 252h1V271h-1zM434 252h1V270h-1zM435 252h1V267h-1zM436 250h1V272h-1zM437 252h1V270h-1zM438 251h1V271h-1zM439 248h1V272h-1zM440 246h1V266h-1zM441 252h1V271h-1zM442 251h1V270h-1zM443 250h1V270h-1zM444 246h1V266h-1zM445 251h1V270h-1zM446 251h1V268h-1zM447 252h1V270h-1zM448 246h1V272h-1zM449 250h1V266h-1zM450 251h1V267h-1zM451 252h1V268h-1zM452 252h1V272h-1zM453 252h1V274h-1zM454 252h1V267h-1zM455 250h1V269h-1zM456 249h1V266h-1zM457 251h1V266h-1zM458 247h1V266h-1zM459 251h1V268h-1zM460 252h1V271h-1zM461 246h1V269h-1zM462 251h1V269h-1zM463 251h1V269h-1zM464 246h1V272h-1zM465 246h1V272h-1zM466 250h1V267h-1zM467 246h1V271h-1zM468 244h1V267h-1zM469 251h1V269h-1zM470 251h1V272h-1zM471 252h1V272h-1zM472 251h1V269h-1zM473 246h1V271h-1zM474 247h1V271h-1zM475 252h1V266h-1zM476 247h1V268h-1zM477 251h1V271h-1zM478 247h1V266h-1zM479 248h1V266h-1zM480 252h1V268h-1zM481 251h1V268h-1zM482 252h1V271h-1zM483 246h1V266h-1zM484 251h1V272h-1zM485 246h1V269h-1zM486 250h1V272h-1zM487 249h1V271h-1zM488 248h1V267h-1zM489 252h1V269h-1zM490 249h1V269h-1zM491 247h1V273h-1zM492 251h1V267h-1zM493 247h1V267h-1zM494 248h1V268h-1zM495 246h1V269h-1zM496 252h1V268h-1zM497 248h1V269h-1zM498 250h1V271h-1zM499 248h1V272h-1zM500 250h1V268h-1zM501 250h1V269h-1zM502 252h1V270h-1zM503 247h1V269h-1zM504 250h1V267h-1zM505 250h1V272h-1zM506 252h1V269h-1zM507 252h1V266h-1zM508 248h1V267h-1zM509 247h1V268h-1zM510 248h1V272h-1zM511 252h1V272h-1zM512 248h1V267h-1zM513 249h1V267h-1zM514 248h1V271h-1zM515 248h1V270h-1zM516 247h1V272h-1zM517 248h1V266h-1zM518 249h1V268h-1zM519 248h1V272h-1zM520 246h1V266h-1zM521 250h1V269h-1zM522 247h1V267h-1zM523 246h1V267h-1zM524 251h1V266h-1zM525 250h1V268h-1zM526 252h1V268h-1zM527 250h1V268h-1zM528 246h1V270h-1zM529 250h1V269h-1zM530 252h1V272h-1zM531 251h1V266h-1zM532 247h1V267h-1zM533 248h1V269h-1zM534 251h1V272h-1zM535 246h1V272h-1zM536 249h1V272h-1zM537 251h1V266h-1zM538 252h1V267h-1zM539 249h1V272h-1zM540 248h1V268h-1zM541 246h1V266h-1zM542 247h1V268h-1zM543 252h1V267h-1zM544 249h1V267h-1zM545 248h1V267h-1zM546 250h1V268h-1zM547 246h1V267h-1zM548 251h1V271h-1zM549 251h1V266h-1zM550 247h1V267h-1zM551 252h1V266h-1zM552 246h1V266h-1zM553 252h1V271h-1zM554 246h1V266h-1zM555 250h1V272h-1zM556 248h1V266h-1zM557 246h1V269h-1zM558 250h1V270h-1zM559 250h1V267h-1zM560 248h1V272h-1zM561 248h1V269h-1zM562 249h1V271h-1zM563 249h1V267h-1zM564 251h1V270h-1zM565 248h1V269h-1zM566 249h1V270h-1zM567 252h1V267h-1zM568 249h1V272h-1zM569 248h1V269h-1zM570 251h1V269h-1zM571 252h1V272h-1zM572 250h1V271h-1zM573 246h1V269h-1zM574 246h1V271h-1zM575 248h1V268h-1zM576 251h1V267h-1zM577 247h1V271h-1zM578 252h1V271h-1zM579 247h1V266h-1zM580 251h1V267h-1zM581 252h1V270h-1zM582 247h1V268h-1zM583 251h1V266h-1zM584 252h1V266h-1zM585 250h1V267h-1zM586 246h1V266h-1zM587 252h1V272h-1zM588 250h1V269h-1zM589 251h1V266h-1zM590 247h1V269h-1zM591 249h1V274h-1zM592 249h1V268h-1zM593 250h1V272h-1zM594 252h1V268h-1zM595 246h1V266h-1zM596 248h1V273h-1zM597 250h1V272h-1zM598 248h1V270h-1zM599 248h1V271h-1zM600 252h1V267h-1zM601 251h1V268h-1zM602 252h1V271h-1zM603 252h1V267h-1zM604 248h1V267h-1zM605 247h1V272h-1zM606 246h1V267h-1zM607 252h1V267h-1zM608 249h1V271h-1zM609 248h1V267h-1zM610 247h1V267h-1zM611 250h1V266h-1zM612 250h1V267h-1zM613 252h1V268h-1zM614 249h1V269h-1zM615 251h1V269h-1zM616 246h1V268h-1zM617 250h1V272h-1zM618 246h1V266h-1zM619 252h1V266h-1zM620 248h1V267h-1zM621 247h1V270h-1zM622 249h1V269h-1zM623 251h1V268h-1zM624 252h1V268h-1zM625 247h1V269h-1zM626 246h1V266h-1zM627 252h1V269h-1zM628 251h1V270h-1zM629 250h1V275h-1zM630 249h1V266h-1zM631 252h1V270h-1zM632 247h1V271h-1zM633 251h1V267h-1zM634 251h1V272h-1zM635 252h1V266h-1zM636 246h1V270h-1zM637 249h1V268h-1zM638 246h1V270h-1zM639 249h1V267h-1zM640 247h1V272h-1zM641 251h1V268h-1zM642 248h1V266h-1zM643 251h1V267h-1zM644 251h1V266h-1zM645 247h1V266h-1zM646 247h1V270h-1zM647 251h1V268h-1zM648 247h1V272h-1zM649 249h1V269h-1zM650 249h1V271h-1zM651 251h1V266h-1zM652 252h1V271h-1zM653 247h1V266h-1zM654 246h1V266h-1zM655 252h1V266h-1zM656 249h1V270h-1zM657 248h1V266h-1zM658 252h1V266h-1zM659 246h1V269h-1zM660 252h1V269h-1zM661 248h1V266h-1zM662 249h1V266h-1zM663 249h1V266h-1zM664 249h1V266h-1zM665 252h1V272h-1zM666 250h1V272h-1zM667 248h1V268h-1zM668 249h1V268h-1zM669 247h1V268h-1zM670 252h1V272h-1zM671 247h1V270h-1zM672 247h1V267h-1zM673 247h1V268h-1zM674 246h1V266h-1zM675 248h1V270h-1zM676 248h1V266h-1zM677 251h1V268h-1zM678 249h1V270h-1zM679 252h1V268h-1zM680 246h1V266h-1zM681 252h1V268h-1zM682 251h1V266h-1zM683 250h1V269h-1zM684 250h1V267h-1zM685 252h1V269h-1zM686 252h1V270h-1zM687 246h1V267h-1zM688 250h1V266h-1zM689 246h1V268h-1zM690 248h1V269h-1zM691 252h1V271h-1zM692 252h1V266h-1zM693 246h1V271h-1zM694 251h1V271h-1zM695 249h1V269h-1zM696 246h1V270h-1zM697 251h1V268h-1zM698 252h1V268h-1zM699 246h1V268h-1zM700 248h1V267h-1zM701 250h1V269h-1zM702 246h1V268h-1zM703 247h1V272h-1zM704 252h1V272h-1zM705 248h1V269h-1zM706 247h1V266h-1zM707 250h1V270h-1zM708 250h1V272h-1zM709 252h1V267h-1zM710 250h1V266h-1zM711 252h1V266h-1zM712 251h1V272h-1zM713 251h1V271h-1zM714 251h1V268h-1zM715 252h1V272h-1zM716 247h1V269h-1zM717 247h1V267h-1zM718 249h1V269h-1zM719 246h1V266h-1zM720 252h1V266h-1zM721 244h1V266h-1zM722 249h1V274h-1zM723 251h1V269h-1zM724 247h1V272h-1zM725 250h1V268h-1zM726 250h1V267h-1zM727 246h1V268h-1zM728 251h1V272h-1zM729 251h1V270h-1zM730 251h1V271h-1zM731 250h1V268h-1zM732 250h1V268h-1zM733 250h1V272h-1zM734 252h1V267h-1zM735 251h1V267h-1zM736 248h1V266h-1zM737 249h1V272h-1zM738 248h1V272h-1zM739 251h1V270h-1zM740 248h1V271h-1zM741 248h1V272h-1zM742 249h1V266h-1zM743 247h1V269h-1zM744 250h1V272h-1zM745 250h1V274h-1zM746 252h1V270h-1zM747 248h1V266h-1zM748 249h1V270h-1zM749 250h1V266h-1zM750 248h1V272h-1zM751 251h1V266h-1zM752 248h1V268h-1zM753 246h1V266h-1zM754 247h1V269h-1zM755 248h1V266h-1zM756 248h1V270h-1zM757 251h1V271h-1zM758 246h1V268h-1zM759 246h1V267h-1zM760 246h1V275h-1zM761 247h1V266h-1zM762 252h1V266h-1zM763 252h1V266h-1zM764 248h1V267h-1zM765 251h1V266h-1zM766 247h1V266h-1zM767 252h1V267h-1zM768 251h1V275h-1zM769 252h1V267h-1zM770 246h1V267h-1zM771 246h1V271h-1zM772 251h1V266h-1zM773 250h1V269h-1zM774 246h1V269h-1zM775 252h1V266h-1zM776 247h1V268h-1zM777 247h1V266h-1zM778 246h1V268h-1z" fill="#0c780c" opacity="0.5"/><path d="M20 248h1V270h-1zM21 250h1V269h-1zM22 250h1V271h-1zM23 252h1V266h-1zM24 248h1V272h-1zM25 246h1V271h-1zM26 252h1V267h-1zM27 248h1V266h-1zM28 250h1V270h-1zM29 249h1V268h-1zM30 248h1V270h-1zM31 251h1V270h-1zM32 252h1V271h-1zM33 252h1V268h-1zM34 249h1V266h-1zM35 248h1V272h-1zM36 249h1V272h-1zM37 252h1V266h-1zM38 252h1V266h-1zM39 250h1V271h-1zM40 252h1V271h-1zM41 247h1V272h-1zM42 248h1V271h-1zM43 251h1V275h-1zM44 248h1V267h-1zM45 246h1V266h-1zM46 252h1V268h-1zM47 251h1V269h-1zM48 251h1V272h-1zM49 249h1V268h-1zM50 252h1V266h-1zM51 248h1V272h-1zM52 250h1V271h-1zM53 252h1V266h-1zM54 246h1V267h-1zM55 251h1V271h-1zM56 249h1V266h-1zM57 249h1V271h-1zM58 252h1V266h-1zM59 251h1V266h-1zM60 248h1V269h-1zM61 248h1V268h-1zM62 251h1V272h-1zM63 250h1V267h-1zM64 247h1V269h-1zM65 247h1V270h-1zM66 250h1V267h-1zM67 251h1V266h-1zM68 247h1V268h-1zM69 248h1V266h-1zM70 250h1V266h-1zM71 252h1V271h-1zM72 252h1V272h-1zM73 252h1V266h-1zM74 247h1V266h-1zM75 247h1V267h-1zM76 250h1V268h-1zM77 252h1V267h-1zM78 249h1V270h-1zM79 249h1V270h-1zM80 248h1V266h-1zM81 247h1V266h-1zM82 252h1V266h-1zM83 252h1V269h-1zM84 252h1V267h-1zM85 248h1V268h-1zM86 249h1V269h-1zM87 252h1V266h-1zM88 247h1V266h-1zM89 252h1V267h-1zM90 246h1V267h-1zM91 248h1V269h-1zM92 251h1V270h-1zM93 252h1V268h-1zM94 252h1V269h-1zM95 248h1V270h-1zM96 248h1V272h-1zM97 250h1V266h-1zM98 251h1V270h-1zM99 247h1V268h-1zM100 248h1V268h-1zM101 252h1V266h-1zM102 251h1V266h-1zM103 250h1V266h-1zM104 251h1V267h-1zM105 251h1V266h-1zM106 247h1V267h-1zM107 248h1V272h-1zM108 252h1V266h-1zM109 252h1V266h-1zM110 250h1V268h-1zM111 247h1V271h-1zM112 246h1V272h-1zM113 248h1V271h-1zM114 249h1V272h-1zM115 252h1V266h-1zM116 250h1V270h-1zM117 252h1V266h-1zM118 250h1V267h-1zM119 248h1V269h-1zM120 252h1V267h-1zM121 248h1V272h-1zM122 246h1V266h-1zM123 252h1V270h-1zM124 251h1V271h-1zM125 246h1V271h-1zM126 252h1V266h-1zM127 250h1V266h-1zM128 245h1V269h-1zM129 248h1V270h-1zM130 252h1V267h-1zM131 248h1V271h-1zM132 251h1V270h-1zM133 251h1V269h-1zM134 248h1V270h-1zM135 246h1V267h-1zM136 249h1V268h-1zM137 249h1V267h-1zM138 247h1V270h-1zM139 249h1V269h-1zM140 251h1V271h-1zM141 250h1V270h-1zM142 250h1V268h-1zM143 252h1V266h-1zM144 248h1V268h-1zM145 249h1V268h-1zM146 247h1V268h-1zM147 251h1V270h-1zM148 249h1V268h-1zM149 252h1V270h-1zM150 248h1V266h-1zM151 251h1V266h-1zM152 246h1V270h-1zM153 246h1V271h-1zM154 248h1V272h-1zM155 248h1V272h-1zM156 249h1V270h-1zM157 251h1V268h-1zM158 248h1V271h-1zM159 249h1V268h-1zM160 249h1V267h-1zM161 248h1V269h-1zM162 245h1V267h-1zM163 251h1V274h-1zM164 251h1V272h-1zM165 251h1V268h-1zM166 247h1V266h-1zM167 251h1V272h-1zM168 248h1V269h-1zM169 252h1V270h-1zM170 248h1V271h-1zM171 247h1V269h-1zM172 250h1V274h-1zM173 247h1V268h-1zM174 248h1V268h-1zM175 251h1V268h-1zM176 249h1V272h-1zM177 252h1V266h-1zM178 250h1V270h-1zM179 247h1V266h-1zM180 250h1V271h-1zM181 247h1V266h-1zM182 251h1V270h-1zM183 249h1V266h-1zM184 246h1V269h-1zM185 252h1V272h-1zM186 248h1V267h-1zM187 251h1V266h-1zM188 248h1V266h-1zM189 246h1V266h-1zM190 252h1V271h-1zM191 251h1V269h-1zM192 250h1V271h-1zM193 249h1V266h-1zM194 251h1V268h-1zM195 252h1V266h-1zM196 252h1V266h-1zM197 248h1V271h-1zM198 248h1V269h-1zM199 251h1V271h-1zM200 248h1V269h-1zM201 252h1V267h-1zM202 246h1V266h-1zM203 246h1V268h-1zM204 251h1V266h-1zM205 245h1V268h-1zM206 249h1V266h-1zM207 249h1V269h-1zM208 247h1V269h-1zM209 251h1V270h-1zM210 252h1V272h-1zM211 249h1V266h-1zM212 252h1V269h-1zM213 250h1V267h-1zM214 249h1V266h-1zM215 251h1V267h-1zM216 248h1V266h-1zM217 246h1V266h-1zM218 252h1V267h-1zM219 252h1V270h-1zM220 251h1V268h-1zM221 247h1V269h-1zM222 247h1V270h-1zM223 252h1V268h-1zM224 247h1V271h-1zM225 250h1V272h-1zM226 252h1V271h-1zM227 252h1V270h-1zM228 246h1V272h-1zM229 251h1V266h-1zM230 252h1V271h-1zM231 250h1V266h-1zM232 252h1V266h-1zM233 251h1V266h-1zM234 250h1V269h-1zM235 247h1V266h-1zM236 252h1V267h-1zM237 252h1V267h-1zM238 247h1V270h-1zM239 246h1V272h-1zM240 250h1V267h-1zM241 251h1V266h-1zM242 252h1V272h-1zM243 249h1V271h-1zM244 248h1V268h-1zM245 252h1V272h-1zM246 251h1V267h-1zM247 246h1V268h-1zM248 252h1V270h-1zM249 249h1V270h-1zM250 249h1V267h-1zM251 248h1V271h-1zM252 248h1V272h-1zM253 251h1V270h-1zM254 246h1V268h-1zM255 251h1V268h-1zM256 250h1V269h-1zM257 249h1V268h-1zM258 246h1V272h-1zM259 252h1V272h-1zM260 247h1V268h-1zM261 247h1V267h-1zM262 250h1V271h-1zM263 247h1V268h-1zM264 246h1V270h-1zM265 250h1V269h-1zM266 248h1V268h-1zM267 251h1V271h-1zM268 251h1V270h-1zM269 250h1V268h-1zM270 248h1V268h-1zM271 248h1V266h-1zM272 250h1V268h-1zM273 247h1V269h-1zM274 246h1V268h-1zM275 252h1V267h-1zM276 249h1V266h-1zM277 251h1V271h-1zM278 247h1V268h-1zM279 251h1V272h-1zM280 246h1V270h-1zM281 252h1V271h-1zM282 247h1V266h-1zM283 246h1V268h-1zM284 246h1V270h-1zM285 251h1V266h-1zM286 248h1V269h-1zM287 252h1V272h-1zM288 246h1V272h-1zM289 248h1V269h-1zM290 246h1V270h-1zM291 250h1V268h-1zM292 252h1V267h-1zM293 252h1V267h-1zM294 251h1V267h-1zM295 249h1V268h-1zM296 251h1V266h-1zM297 246h1V266h-1zM298 252h1V266h-1zM299 252h1V272h-1zM300 249h1V266h-1zM301 246h1V267h-1zM302 248h1V271h-1zM303 249h1V267h-1zM304 250h1V266h-1zM305 245h1V271h-1zM306 246h1V266h-1zM307 250h1V268h-1zM308 250h1V266h-1zM309 251h1V268h-1zM310 248h1V267h-1zM311 251h1V266h-1zM312 250h1V268h-1zM313 248h1V269h-1zM314 249h1V269h-1zM315 252h1V267h-1zM316 252h1V267h-1zM317 249h1V266h-1zM318 252h1V267h-1zM319 247h1V272h-1zM320 248h1V272h-1zM321 246h1V271h-1zM322 251h1V272h-1zM323 251h1V274h-1zM324 248h1V272h-1zM325 249h1V269h-1zM326 252h1V269h-1zM327 248h1V269h-1zM328 247h1V270h-1zM329 248h1V266h-1zM330 249h1V269h-1zM331 248h1V271h-1zM332 246h1V269h-1zM333 249h1V272h-1zM334 250h1V271h-1zM335 247h1V266h-1zM336 252h1V267h-1zM337 252h1V270h-1zM338 248h1V272h-1zM339 246h1V269h-1zM340 252h1V270h-1zM341 251h1V266h-1zM342 249h1V267h-1zM343 248h1V271h-1zM344 250h1V271h-1zM345 249h1V274h-1zM346 249h1V266h-1zM347 248h1V268h-1zM348 250h1V271h-1zM349 246h1V267h-1zM350 252h1V266h-1zM351 251h1V268h-1zM352 249h1V272h-1zM353 247h1V270h-1zM354 251h1V270h-1zM355 246h1V267h-1zM356 251h1V268h-1zM357 246h1V268h-1zM358 250h1V272h-1zM359 248h1V268h-1zM360 252h1V269h-1zM361 247h1V269h-1zM362 247h1V266h-1zM363 252h1V266h-1zM364 250h1V269h-1zM365 252h1V270h-1zM366 249h1V268h-1zM367 251h1V267h-1zM368 251h1V270h-1zM369 249h1V272h-1zM370 248h1V272h-1zM371 252h1V268h-1zM372 249h1V272h-1zM373 247h1V266h-1zM374 250h1V270h-1zM375 252h1V269h-1zM376 247h1V270h-1zM377 248h1V268h-1zM378 247h1V269h-1zM379 244h1V268h-1zM380 246h1V266h-1zM381 251h1V266h-1zM382 250h1V271h-1zM383 252h1V273h-1zM384 250h1V269h-1zM385 252h1V269h-1zM386 250h1V266h-1zM387 247h1V272h-1zM388 249h1V267h-1zM389 252h1V268h-1zM390 249h1V269h-1zM391 248h1V268h-1zM392 249h1V268h-1zM393 247h1V272h-1zM394 251h1V272h-1zM395 246h1V269h-1zM396 252h1V269h-1zM397 250h1V270h-1zM398 251h1V275h-1zM399 249h1V267h-1zM400 251h1V268h-1zM401 252h1V266h-1zM402 248h1V266h-1zM403 252h1V269h-1zM404 247h1V270h-1zM405 246h1V270h-1zM406 249h1V266h-1zM407 248h1V268h-1zM408 252h1V267h-1zM409 248h1V269h-1zM410 250h1V271h-1zM411 249h1V271h-1zM412 248h1V271h-1zM413 249h1V271h-1zM414 251h1V271h-1zM415 249h1V266h-1zM416 248h1V272h-1zM417 250h1V270h-1zM418 249h1V269h-1zM419 247h1V266h-1zM420 247h1V269h-1zM421 251h1V268h-1zM422 249h1V268h-1zM423 252h1V269h-1zM424 251h1V274h-1zM425 250h1V269h-1zM426 251h1V268h-1zM427 249h1V266h-1zM428 249h1V267h-1zM429 250h1V272h-1zM430 247h1V268h-1zM431 244h1V272h-1zM432 251h1V271h-1zM433 249h1V266h-1zM434 250h1V266h-1zM435 248h1V266h-1zM436 252h1V269h-1zM437 246h1V268h-1zM438 252h1V268h-1zM439 250h1V271h-1zM440 252h1V267h-1zM441 252h1V270h-1zM442 252h1V269h-1zM443 249h1V270h-1zM444 252h1V266h-1zM445 246h1V268h-1zM446 248h1V268h-1zM447 246h1V269h-1zM448 250h1V266h-1zM449 248h1V267h-1zM450 250h1V270h-1zM451 251h1V266h-1zM452 249h1V272h-1zM453 252h1V269h-1zM454 252h1V267h-1zM455 252h1V268h-1zM456 248h1V268h-1zM457 252h1V268h-1zM458 251h1V269h-1zM459 248h1V269h-1zM460 249h1V271h-1zM461 246h1V266h-1zM462 250h1V267h-1zM463 251h1V269h-1zM464 252h1V272h-1zM465 252h1V266h-1zM466 251h1V266h-1zM467 249h1V271h-1zM468 252h1V266h-1zM469 247h1V266h-1zM470 246h1V269h-1zM471 251h1V266h-1zM472 252h1V270h-1zM473 252h1V271h-1zM474 249h1V266h-1zM475 248h1V268h-1zM476 247h1V270h-1zM477 252h1V269h-1zM478 251h1V267h-1zM479 246h1V267h-1zM480 249h1V270h-1zM481 252h1V266h-1zM482 251h1V270h-1zM483 252h1V269h-1zM484 249h1V269h-1zM485 250h1V266h-1zM486 251h1V272h-1zM487 252h1V269h-1zM488 248h1V274h-1zM489 246h1V272h-1zM490 248h1V270h-1zM491 246h1V267h-1zM492 247h1V266h-1zM493 251h1V269h-1zM494 248h1V267h-1zM495 252h1V271h-1zM496 248h1V266h-1zM497 252h1V266h-1zM498 246h1V269h-1zM499 246h1V266h-1zM500 246h1V267h-1zM501 250h1V271h-1zM502 247h1V268h-1zM503 251h1V272h-1zM504 248h1V269h-1zM505 249h1V269h-1zM506 250h1V269h-1zM507 249h1V269h-1zM508 250h1V266h-1zM509 252h1V269h-1zM510 250h1V272h-1zM511 247h1V267h-1zM512 246h1V272h-1zM513 249h1V267h-1zM514 246h1V270h-1zM515 252h1V267h-1zM516 252h1V268h-1zM517 246h1V267h-1zM518 248h1V268h-1zM519 251h1V267h-1zM520 251h1V269h-1zM521 247h1V268h-1zM522 248h1V271h-1zM523 247h1V266h-1zM524 248h1V271h-1zM525 245h1V271h-1zM526 246h1V271h-1zM527 250h1V269h-1zM528 248h1V268h-1zM529 252h1V269h-1zM530 251h1V267h-1zM531 251h1V266h-1zM532 252h1V269h-1zM533 252h1V268h-1zM534 247h1V271h-1zM535 247h1V267h-1zM536 250h1V269h-1zM537 250h1V270h-1zM538 252h1V271h-1zM539 248h1V266h-1zM540 248h1V272h-1zM541 246h1V270h-1zM542 251h1V270h-1zM543 251h1V269h-1zM544 250h1V272h-1zM545 249h1V272h-1zM546 252h1V271h-1zM547 247h1V269h-1zM548 251h1V268h-1zM549 251h1V272h-1zM550 248h1V269h-1zM551 252h1V268h-1zM552 247h1V268h-1zM553 252h1V267h-1zM554 252h1V269h-1zM555 251h1V269h-1zM556 247h1V272h-1zM557 250h1V269h-1zM558 251h1V271h-1zM559 249h1V270h-1zM560 250h1V270h-1zM561 250h1V268h-1zM562 246h1V267h-1zM563 246h1V267h-1zM564 252h1V266h-1zM565 252h1V271h-1zM566 246h1V268h-1zM567 247h1V267h-1zM568 246h1V267h-1zM569 252h1V268h-1zM570 246h1V269h-1zM571 251h1V270h-1zM572 249h1V271h-1zM573 251h1V267h-1zM574 250h1V268h-1zM575 250h1V271h-1zM576 249h1V269h-1zM577 249h1V269h-1zM578 249h1V268h-1zM579 249h1V268h-1zM580 252h1V269h-1zM581 252h1V272h-1zM582 252h1V271h-1zM583 247h1V266h-1zM584 249h1V267h-1zM585 247h1V270h-1zM586 248h1V272h-1zM587 246h1V266h-1zM588 249h1V271h-1zM589 250h1V269h-1zM590 250h1V266h-1zM591 251h1V270h-1zM592 251h1V271h-1zM593 252h1V266h-1zM594 248h1V269h-1zM595 252h1V268h-1zM596 251h1V268h-1zM597 248h1V267h-1zM598 249h1V266h-1zM599 249h1V268h-1zM600 248h1V268h-1zM601 252h1V266h-1zM602 248h1V270h-1zM603 251h1V266h-1zM604 251h1V266h-1zM605 249h1V266h-1zM606 247h1V269h-1zM607 248h1V266h-1zM608 250h1V274h-1zM609 249h1V269h-1zM610 251h1V272h-1zM611 246h1V269h-1zM612 248h1V270h-1zM613 246h1V266h-1zM614 250h1V266h-1zM615 252h1V267h-1zM616 251h1V267h-1zM617 250h1V266h-1zM618 252h1V269h-1zM619 249h1V269h-1zM620 248h1V272h-1zM621 248h1V272h-1zM622 251h1V266h-1zM623 252h1V270h-1zM624 248h1V269h-1zM625 251h1V272h-1zM626 252h1V267h-1zM627 252h1V271h-1zM628 252h1V270h-1zM629 251h1V266h-1zM630 252h1V270h-1zM631 252h1V271h-1zM632 250h1V266h-1zM633 249h1V267h-1zM634 248h1V266h-1zM635 250h1V268h-1zM636 251h1V266h-1zM637 252h1V266h-1zM638 252h1V267h-1zM639 244h1V267h-1zM640 252h1V270h-1zM641 252h1V272h-1zM642 248h1V266h-1zM643 248h1V271h-1zM644 251h1V272h-1zM645 250h1V272h-1zM646 249h1V268h-1zM647 252h1V266h-1zM648 251h1V272h-1zM649 246h1V267h-1zM650 250h1V266h-1zM651 248h1V266h-1zM652 246h1V267h-1zM653 250h1V266h-1zM654 247h1V271h-1zM655 248h1V266h-1zM656 246h1V272h-1zM657 250h1V268h-1zM658 247h1V271h-1zM659 248h1V272h-1zM660 249h1V266h-1zM661 252h1V266h-1zM662 248h1V268h-1zM663 247h1V271h-1zM664 252h1V270h-1zM665 251h1V269h-1zM666 251h1V274h-1zM667 251h1V270h-1zM668 249h1V266h-1zM669 252h1V267h-1zM670 252h1V269h-1zM671 250h1V270h-1zM672 247h1V266h-1zM673 249h1V271h-1zM674 251h1V270h-1zM675 251h1V266h-1zM676 251h1V270h-1zM677 249h1V272h-1zM678 252h1V269h-1zM679 251h1V268h-1zM680 250h1V266h-1zM681 250h1V270h-1zM682 252h1V268h-1zM683 247h1V270h-1zM684 251h1V272h-1zM685 252h1V267h-1zM686 248h1V270h-1zM687 249h1V271h-1zM688 248h1V268h-1zM689 246h1V266h-1zM690 252h1V272h-1zM691 250h1V270h-1zM692 252h1V270h-1zM693 250h1V270h-1zM694 252h1V267h-1zM695 250h1V266h-1zM696 249h1V272h-1zM697 245h1V270h-1zM698 247h1V272h-1zM699 248h1V272h-1zM700 247h1V266h-1zM701 248h1V270h-1zM702 248h1V272h-1zM703 252h1V268h-1zM704 251h1V271h-1zM705 252h1V269h-1zM706 247h1V270h-1zM707 246h1V274h-1zM708 247h1V266h-1zM709 252h1V267h-1zM710 250h1V267h-1zM711 250h1V268h-1zM712 246h1V268h-1zM713 248h1V271h-1zM714 252h1V267h-1zM715 251h1V271h-1zM716 251h1V271h-1zM717 248h1V266h-1zM718 244h1V266h-1zM719 251h1V272h-1zM720 250h1V272h-1zM721 250h1V270h-1zM722 249h1V268h-1zM723 248h1V266h-1zM724 251h1V268h-1zM725 251h1V266h-1zM726 246h1V266h-1zM727 252h1V267h-1zM728 248h1V269h-1zM729 252h1V272h-1zM730 252h1V266h-1zM731 247h1V270h-1zM732 251h1V273h-1zM733 247h1V270h-1zM734 251h1V268h-1zM735 252h1V267h-1zM736 246h1V266h-1zM737 249h1V272h-1zM738 251h1V270h-1zM739 249h1V266h-1zM740 252h1V267h-1zM741 246h1V266h-1zM742 252h1V270h-1zM743 249h1V270h-1zM744 248h1V271h-1zM745 251h1V271h-1zM746 251h1V269h-1zM747 247h1V267h-1zM748 252h1V266h-1zM749 248h1V269h-1zM750 251h1V266h-1zM751 249h1V272h-1zM752 248h1V267h-1zM753 252h1V270h-1zM754 250h1V266h-1zM755 250h1V270h-1zM756 250h1V268h-1zM757 247h1V271h-1zM758 248h1V275h-1zM759 252h1V266h-1zM760 246h1V272h-1zM761 251h1V266h-1zM762 252h1V267h-1zM763 248h1V269h-1zM764 248h1V269h-1zM765 247h1V268h-1zM766 249h1V266h-1zM767 249h1V269h-1zM768 252h1V274h-1zM769 250h1V271h-1zM770 247h1V267h-1zM771 252h1V268h-1zM772 246h1V269h-1zM773 248h1V268h-1zM774 248h1V267h-1zM775 246h1V267h-1zM776 246h1V266h-1zM777 247h1V266h-1zM778 252h1V268h-1z" fill="#0c780c" opacity="0.5"/><path d="M20 252h1V265h-1zM21 251h1V265h-1zM22 252h1V267h-1zM23 251h1V266h-1zM24 251h1V265h-1zM25 253h1V265h-1zM26 252h1V265h-1zM27 252h1V264h-1zM28 253h1V266h-1zM29 253h1V266h-1zM30 254h1V265h-1zM31 254h1V266h-1zM32 254h1V265h-1zM33 253h1V266h-1zM34 252h1V264h-1zM35 254h1V266h-1zM36 251h1V268h-1zM37 253h1V267h-1zM38 253h1V266h-1zM39 252h1V265h-1zM40 253h1V266h-1zM41 253h1V265h-1zM42 252h1V264h-1zM43 251h1V265h-1zM44 252h1V266h-1zM45 251h1V265h-1zM46 255h1V267h-1zM47 254h1V261h-1zM48 252h1V265h-1zM49 252h1V263h-1zM50 253h1V266h-1zM51 253h1V264h-1zM52 254h1V265h-1zM53 252h1V266h-1zM54 251h1V264h-1zM55 253h1V266h-1zM56 251h1V264h-1zM57 253h1V266h-1zM58 251h1V265h-1zM59 253h1V266h-1zM60 251h1V265h-1zM61 252h1V265h-1zM62 252h1V264h-1zM63 252h1V265h-1zM64 251h1V266h-1zM65 254h1V266h-1zM66 253h1V266h-1zM67 251h1V266h-1zM68 253h1V265h-1zM69 252h1V265h-1zM70 254h1V265h-1zM71 254h1V267h-1zM72 255h1V264h-1zM73 253h1V265h-1zM74 252h1V266h-1zM75 251h1V267h-1zM76 254h1V265h-1zM77 253h1V266h-1zM78 252h1V266h-1zM79 252h1V266h-1zM80 253h1V266h-1zM81 253h1V266h-1zM82 252h1V267h-1zM83 254h1V265h-1zM84 253h1V266h-1zM85 251h1V265h-1zM86 250h1V266h-1zM87 252h1V266h-1zM88 252h1V266h-1zM89 254h1V265h-1zM90 253h1V266h-1zM91 253h1V264h-1zM92 252h1V265h-1zM93 253h1V266h-1zM94 251h1V266h-1zM95 253h1V265h-1zM96 252h1V267h-1zM97 253h1V266h-1zM98 252h1V265h-1zM99 251h1V264h-1zM100 253h1V265h-1zM101 253h1V265h-1zM102 252h1V265h-1zM103 252h1V264h-1zM104 254h1V266h-1zM105 253h1V267h-1zM106 252h1V264h-1zM107 252h1V266h-1zM108 250h1V266h-1zM109 253h1V266h-1zM110 253h1V265h-1zM111 251h1V266h-1zM112 252h1V263h-1zM113 251h1V262h-1zM114 254h1V266h-1zM115 253h1V266h-1zM116 253h1V263h-1zM117 253h1V265h-1zM118 252h1V266h-1zM119 253h1V265h-1zM120 253h1V268h-1zM121 253h1V266h-1zM122 254h1V266h-1zM123 251h1V266h-1zM124 252h1V266h-1zM125 254h1V263h-1zM126 251h1V265h-1zM127 252h1V265h-1zM128 253h1V267h-1zM129 254h1V264h-1zM130 252h1V266h-1zM131 252h1V265h-1zM132 251h1V267h-1zM133 252h1V264h-1zM134 254h1V267h-1zM135 253h1V264h-1zM136 252h1V265h-1zM137 252h1V265h-1zM138 254h1V268h-1zM139 252h1V266h-1zM140 254h1V263h-1zM141 254h1V265h-1zM142 251h1V267h-1zM143 252h1V264h-1zM144 251h1V266h-1zM145 252h1V266h-1zM146 253h1V266h-1zM147 251h1V265h-1zM148 252h1V267h-1zM149 252h1V266h-1zM150 254h1V266h-1zM151 253h1V266h-1zM152 253h1V266h-1zM153 254h1V265h-1zM154 253h1V266h-1zM155 252h1V267h-1zM156 252h1V267h-1zM157 252h1V264h-1zM158 252h1V266h-1zM159 254h1V267h-1zM160 253h1V265h-1zM161 253h1V264h-1zM162 253h1V266h-1zM163 251h1V265h-1zM164 252h1V266h-1zM165 252h1V265h-1zM166 252h1V266h-1zM167 253h1V266h-1zM168 253h1V265h-1zM169 253h1V263h-1zM170 253h1V265h-1zM171 252h1V266h-1zM172 252h1V265h-1zM173 252h1V265h-1zM174 251h1V266h-1zM175 254h1V266h-1zM176 252h1V266h-1zM177 253h1V266h-1zM178 253h1V267h-1zM179 252h1V265h-1zM180 252h1V267h-1zM181 252h1V266h-1zM182 253h1V263h-1zM183 252h1V266h-1zM184 251h1V264h-1zM185 251h1V264h-1zM186 253h1V265h-1zM187 254h1V265h-1zM188 252h1V266h-1zM189 253h1V266h-1zM190 254h1V265h-1zM191 252h1V266h-1zM192 252h1V265h-1zM193 254h1V266h-1zM194 251h1V265h-1zM195 254h1V266h-1zM196 253h1V264h-1zM197 251h1V266h-1zM198 252h1V265h-1zM199 253h1V264h-1zM200 252h1V267h-1zM201 251h1V266h-1zM202 253h1V267h-1zM203 252h1V265h-1zM204 253h1V266h-1zM205 254h1V266h-1zM206 251h1V266h-1zM207 254h1V265h-1zM208 252h1V264h-1zM209 252h1V264h-1zM210 254h1V265h-1zM211 253h1V266h-1zM212 253h1V266h-1zM213 251h1V265h-1zM214 254h1V265h-1zM215 254h1V264h-1zM216 251h1V265h-1zM217 253h1V266h-1zM218 252h1V267h-1zM219 253h1V265h-1zM220 252h1V268h-1zM221 253h1V266h-1zM222 252h1V264h-1zM223 252h1V265h-1zM224 253h1V267h-1zM225 252h1V265h-1zM226 252h1V265h-1zM227 251h1V267h-1zM228 252h1V265h-1zM229 252h1V265h-1zM230 251h1V265h-1zM231 253h1V267h-1zM232 253h1V265h-1zM233 251h1V266h-1zM234 253h1V266h-1zM235 253h1V266h-1zM236 251h1V266h-1zM237 254h1V264h-1zM238 251h1V267h-1zM239 252h1V265h-1zM240 253h1V264h-1zM241 252h1V267h-1zM242 252h1V267h-1zM243 252h1V265h-1zM244 255h1V266h-1zM245 254h1V266h-1zM246 252h1V266h-1zM247 252h1V266h-1zM248 251h1V265h-1zM249 254h1V267h-1zM250 253h1V267h-1zM251 251h1V265h-1zM252 251h1V266h-1zM253 252h1V266h-1zM254 253h1V267h-1zM255 252h1V266h-1zM256 252h1V266h-1zM257 252h1V266h-1zM258 251h1V266h-1zM259 252h1V265h-1zM260 253h1V265h-1zM261 252h1V265h-1zM262 252h1V265h-1zM263 254h1V266h-1zM264 253h1V266h-1zM265 252h1V264h-1zM266 254h1V266h-1zM267 253h1V266h-1zM268 252h1V265h-1zM269 251h1V265h-1zM270 253h1V265h-1zM271 252h1V266h-1zM272 254h1V265h-1zM273 253h1V265h-1zM274 254h1V264h-1zM275 252h1V264h-1zM276 253h1V266h-1zM277 253h1V265h-1zM278 252h1V265h-1zM279 251h1V265h-1zM280 252h1V266h-1zM281 253h1V266h-1zM282 252h1V266h-1zM283 253h1V265h-1zM284 252h1V266h-1zM285 254h1V267h-1zM286 253h1V265h-1zM287 252h1V266h-1zM288 253h1V265h-1zM289 252h1V267h-1zM290 252h1V264h-1zM291 253h1V267h-1zM292 252h1V266h-1zM293 253h1V265h-1zM294 252h1V263h-1zM295 251h1V267h-1zM296 253h1V263h-1zM297 254h1V266h-1zM298 253h1V267h-1zM299 252h1V266h-1zM300 254h1V264h-1zM301 254h1V267h-1zM302 254h1V263h-1zM303 253h1V264h-1zM304 252h1V266h-1zM305 253h1V266h-1zM306 252h1V265h-1zM307 253h1V267h-1zM308 253h1V266h-1zM309 253h1V266h-1zM310 253h1V266h-1zM311 252h1V265h-1zM312 251h1V264h-1zM313 254h1V265h-1zM314 252h1V267h-1zM315 253h1V265h-1zM316 251h1V266h-1zM317 253h1V265h-1zM318 253h1V265h-1zM319 252h1V265h-1zM320 253h1V266h-1zM321 254h1V264h-1zM322 252h1V265h-1zM323 252h1V264h-1zM324 250h1V264h-1zM325 250h1V265h-1zM326 251h1V265h-1zM327 252h1V266h-1zM328 252h1V264h-1zM329 252h1V264h-1zM330 253h1V265h-1zM331 253h1V266h-1zM332 252h1V266h-1zM333 253h1V265h-1zM334 252h1V265h-1zM335 253h1V264h-1zM336 253h1V265h-1zM337 253h1V265h-1zM338 253h1V266h-1zM339 251h1V265h-1zM340 252h1V265h-1zM341 253h1V266h-1zM342 252h1V266h-1zM343 253h1V265h-1zM344 251h1V266h-1zM345 252h1V266h-1zM346 255h1V266h-1zM347 253h1V265h-1zM348 253h1V266h-1zM349 252h1V268h-1zM350 252h1V267h-1zM351 253h1V266h-1zM352 252h1V264h-1zM353 252h1V266h-1zM354 251h1V266h-1zM355 252h1V266h-1zM356 251h1V265h-1zM357 254h1V267h-1zM358 253h1V265h-1zM359 253h1V265h-1zM360 253h1V266h-1zM361 253h1V264h-1zM362 251h1V268h-1zM363 252h1V266h-1zM364 251h1V265h-1zM365 253h1V266h-1zM366 253h1V268h-1zM367 252h1V267h-1zM368 251h1V265h-1zM369 253h1V265h-1zM370 252h1V265h-1zM371 253h1V265h-1zM372 253h1V266h-1zM373 253h1V266h-1zM374 251h1V266h-1zM375 252h1V264h-1zM376 252h1V265h-1zM377 252h1V266h-1zM378 252h1V264h-1zM379 252h1V268h-1zM380 253h1V264h-1zM381 253h1V265h-1zM382 254h1V264h-1zM383 253h1V264h-1zM384 253h1V264h-1zM385 252h1V265h-1zM386 252h1V265h-1zM387 254h1V266h-1zM388 251h1V265h-1zM389 251h1V267h-1zM390 253h1V266h-1zM391 252h1V264h-1zM392 253h1V266h-1zM393 252h1V266h-1zM394 252h1V267h-1zM395 252h1V265h-1zM396 252h1V266h-1zM397 251h1V266h-1zM398 251h1V267h-1zM399 253h1V268h-1zM400 252h1V265h-1zM401 252h1V267h-1zM402 252h1V265h-1zM403 253h1V265h-1zM404 252h1V266h-1zM405 252h1V266h-1zM406 254h1V267h-1zM407 253h1V266h-1zM408 252h1V266h-1zM409 255h1V267h-1zM410 253h1V267h-1zM411 252h1V266h-1zM412 251h1V264h-1zM413 254h1V267h-1zM414 252h1V265h-1zM415 253h1V265h-1zM416 252h1V267h-1zM417 254h1V266h-1zM418 252h1V266h-1zM419 252h1V265h-1zM420 253h1V265h-1zM421 253h1V265h-1zM422 253h1V265h-1zM423 251h1V265h-1zM424 251h1V266h-1zM425 254h1V265h-1zM426 255h1V266h-1zM427 250h1V266h-1zM428 254h1V265h-1zM429 252h1V266h-1zM430 253h1V266h-1zM431 252h1V265h-1zM432 251h1V265h-1zM433 251h1V266h-1zM434 252h1V266h-1zM435 254h1V266h-1zM436 254h1V267h-1zM437 250h1V266h-1zM438 253h1V263h-1zM439 253h1V267h-1zM440 251h1V265h-1zM441 253h1V267h-1zM442 250h1V265h-1zM443 252h1V265h-1zM444 252h1V265h-1zM445 253h1V265h-1zM446 252h1V267h-1zM447 254h1V266h-1zM448 253h1V265h-1zM449 252h1V265h-1zM450 253h1V263h-1zM451 253h1V264h-1zM452 253h1V267h-1zM453 253h1V264h-1zM454 253h1V265h-1zM455 255h1V265h-1zM456 252h1V265h-1zM457 252h1V267h-1zM458 255h1V264h-1zM459 252h1V266h-1zM460 254h1V265h-1zM461 251h1V267h-1zM462 254h1V264h-1zM463 254h1V265h-1zM464 253h1V265h-1zM465 252h1V264h-1zM466 252h1V266h-1zM467 254h1V265h-1zM468 254h1V266h-1zM469 251h1V263h-1zM470 252h1V265h-1zM471 252h1V264h-1zM472 252h1V267h-1zM473 253h1V265h-1zM474 252h1V265h-1zM475 254h1V265h-1zM476 251h1V267h-1zM477 253h1V267h-1zM478 252h1V264h-1zM479 255h1V266h-1zM480 252h1V268h-1zM481 253h1V265h-1zM482 252h1V266h-1zM483 253h1V265h-1zM484 253h1V266h-1zM485 252h1V265h-1zM486 252h1V266h-1zM487 252h1V267h-1zM488 251h1V267h-1zM489 253h1V267h-1zM490 253h1V266h-1zM491 253h1V267h-1zM492 253h1V266h-1zM493 252h1V267h-1zM494 253h1V266h-1zM495 252h1V267h-1zM496 254h1V264h-1zM497 253h1V264h-1zM498 253h1V264h-1zM499 253h1V265h-1zM500 251h1V264h-1zM501 253h1V265h-1zM502 252h1V265h-1zM503 252h1V265h-1zM504 251h1V267h-1zM505 253h1V264h-1zM506 251h1V266h-1zM507 253h1V266h-1zM508 255h1V267h-1zM509 252h1V265h-1zM510 252h1V266h-1zM511 253h1V265h-1zM512 252h1V266h-1zM513 251h1V265h-1zM514 253h1V265h-1zM515 253h1V263h-1zM516 253h1V264h-1zM517 253h1V264h-1zM518 251h1V267h-1zM519 254h1V264h-1zM520 251h1V265h-1zM521 251h1V266h-1zM522 251h1V266h-1zM523 250h1V266h-1zM524 252h1V266h-1zM525 252h1V264h-1zM526 251h1V265h-1zM527 253h1V265h-1zM528 253h1V266h-1zM529 253h1V265h-1zM530 251h1V266h-1zM531 253h1V265h-1zM532 251h1V264h-1zM533 253h1V265h-1zM534 253h1V266h-1zM535 251h1V263h-1zM536 251h1V267h-1zM537 252h1V266h-1zM538 253h1V266h-1zM539 253h1V266h-1zM540 253h1V266h-1zM541 253h1V265h-1zM542 251h1V266h-1zM543 253h1V265h-1zM544 253h1V266h-1zM545 252h1V265h-1zM546 253h1V266h-1zM547 253h1V267h-1zM548 253h1V266h-1zM549 253h1V266h-1zM550 252h1V264h-1zM551 252h1V266h-1zM552 253h1V266h-1zM553 253h1V266h-1zM554 251h1V266h-1zM555 253h1V266h-1zM556 255h1V265h-1zM557 252h1V266h-1zM558 252h1V266h-1zM559 251h1V265h-1zM560 253h1V265h-1zM561 253h1V265h-1zM562 252h1V266h-1zM563 252h1V265h-1zM564 251h1V266h-1zM565 254h1V266h-1zM566 252h1V266h-1zM567 253h1V266h-1zM568 253h1V265h-1zM569 251h1V267h-1zM570 252h1V265h-1zM571 251h1V266h-1zM572 252h1V264h-1zM573 252h1V265h-1zM574 252h1V265h-1zM575 252h1V267h-1zM576 253h1V266h-1zM577 252h1V266h-1zM578 253h1V265h-1zM579 252h1V266h-1zM580 252h1V265h-1zM581 252h1V266h-1zM582 254h1V266h-1zM583 253h1V266h-1zM584 253h1V266h-1zM585 254h1V265h-1zM586 253h1V267h-1zM587 252h1V266h-1zM588 252h1V266h-1zM589 253h1V265h-1zM590 253h1V265h-1zM591 254h1V266h-1zM592 252h1V264h-1zM593 252h1V266h-1zM594 252h1V265h-1zM595 253h1V265h-1zM596 251h1V263h-1zM597 252h1V266h-1zM598 254h1V266h-1zM599 253h1V265h-1zM600 251h1V264h-1zM601 251h1V265h-1zM602 252h1V265h-1zM603 255h1V266h-1zM604 253h1V265h-1zM605 251h1V266h-1zM606 255h1V267h-1zM607 252h1V264h-1zM608 252h1V266h-1zM609 251h1V265h-1zM610 253h1V267h-1zM611 253h1V264h-1zM612 253h1V265h-1zM613 253h1V265h-1zM614 252h1V264h-1zM615 255h1V266h-1zM616 255h1V267h-1zM617 254h1V265h-1zM618 253h1V266h-1zM619 252h1V266h-1zM620 253h1V266h-1zM621 253h1V267h-1zM622 253h1V265h-1zM623 252h1V267h-1zM624 253h1V265h-1zM625 252h1V266h-1zM626 252h1V267h-1zM627 251h1V266h-1zM628 253h1V267h-1zM629 253h1V266h-1zM630 252h1V266h-1zM631 253h1V267h-1zM632 252h1V265h-1zM633 252h1V264h-1zM634 252h1V264h-1zM635 252h1V265h-1zM636 251h1V266h-1zM637 251h1V265h-1zM638 251h1V264h-1zM639 251h1V265h-1zM640 252h1V264h-1zM641 252h1V265h-1zM642 255h1V266h-1zM643 253h1V265h-1zM644 251h1V264h-1zM645 253h1V266h-1zM646 253h1V266h-1zM647 251h1V265h-1zM648 254h1V265h-1zM649 254h1V264h-1zM650 253h1V265h-1zM651 252h1V265h-1zM652 252h1V266h-1zM653 254h1V264h-1zM654 254h1V267h-1zM655 253h1V265h-1zM656 253h1V266h-1zM657 254h1V265h-1zM658 251h1V266h-1zM659 252h1V267h-1zM660 253h1V267h-1zM661 253h1V265h-1zM662 253h1V266h-1zM663 253h1V266h-1zM664 252h1V265h-1zM665 253h1V268h-1zM666 252h1V265h-1zM667 252h1V264h-1zM668 250h1V265h-1zM669 252h1V266h-1zM670 252h1V267h-1zM671 252h1V265h-1zM672 253h1V267h-1zM673 252h1V266h-1zM674 253h1V266h-1zM675 252h1V264h-1zM676 252h1V265h-1zM677 252h1V266h-1zM678 252h1V265h-1zM679 249h1V264h-1zM680 252h1V265h-1zM681 253h1V266h-1zM682 252h1V265h-1zM683 253h1V267h-1zM684 253h1V264h-1zM685 255h1V265h-1zM686 253h1V266h-1zM687 254h1V265h-1zM688 254h1V267h-1zM689 252h1V266h-1zM690 254h1V266h-1zM691 252h1V266h-1zM692 253h1V265h-1zM693 252h1V265h-1zM694 252h1V265h-1zM695 252h1V265h-1zM696 254h1V265h-1zM697 255h1V266h-1zM698 254h1V266h-1zM699 252h1V266h-1zM700 252h1V265h-1zM701 253h1V266h-1zM702 253h1V264h-1zM703 254h1V264h-1zM704 251h1V266h-1zM705 252h1V265h-1zM706 253h1V266h-1zM707 252h1V267h-1zM708 251h1V268h-1zM709 253h1V265h-1zM710 253h1V264h-1zM711 253h1V266h-1zM712 253h1V266h-1zM713 252h1V264h-1zM714 252h1V265h-1zM715 254h1V266h-1zM716 252h1V265h-1zM717 252h1V266h-1zM718 253h1V265h-1zM719 254h1V265h-1zM720 254h1V264h-1zM721 255h1V264h-1zM722 254h1V267h-1zM723 254h1V268h-1zM724 253h1V265h-1zM725 252h1V266h-1zM726 252h1V266h-1zM727 252h1V267h-1zM728 253h1V266h-1zM729 255h1V266h-1zM730 253h1V265h-1zM731 251h1V265h-1zM732 254h1V267h-1zM733 253h1V265h-1zM734 252h1V265h-1zM735 251h1V264h-1zM736 250h1V265h-1zM737 252h1V266h-1zM738 251h1V267h-1zM739 252h1V266h-1zM740 252h1V266h-1zM741 254h1V265h-1zM742 251h1V265h-1zM743 252h1V266h-1zM744 251h1V266h-1zM745 253h1V265h-1zM746 253h1V267h-1zM747 252h1V266h-1zM748 253h1V264h-1zM749 251h1V266h-1zM750 251h1V266h-1zM751 251h1V265h-1zM752 252h1V266h-1zM753 254h1V266h-1zM754 253h1V265h-1zM755 254h1V264h-1zM756 252h1V266h-1zM757 254h1V265h-1zM758 251h1V265h-1zM759 254h1V265h-1zM760 253h1V265h-1zM761 252h1V266h-1zM762 252h1V266h-1zM763 251h1V265h-1zM764 253h1V266h-1zM765 252h1V265h-1zM766 254h1V265h-1zM767 254h1V267h-1zM768 252h1V266h-1zM769 252h1V265h-1zM770 251h1V266h-1zM771 251h1V267h-1zM772 251h1V267h-1zM773 253h1V266h-1zM774 252h1V265h-1zM775 253h1V265h-1zM776 252h1V265h-1zM777 253h1V266h-1zM778 250h1V266h-1z" fill="#30f030" opacity="0.75"/><path d="M20 252h1V265h-1zM21 255h1V264h-1zM22 253h1V265h-1zM23 252h1V267h-1zM24 252h1V264h-1zM25 252h1V267h-1zM26 252h1V265h-1zM27 252h1V265h-1zM28 250h1V268h-1zM29 253h1V266h-1zM30 253h1V265h-1zM31 252h1V266h-1zM32 253h1V267h-1zM33 254h1V264h-1zM34 252h1V265h-1zM35 253h1V264h-1zM36 252h1V267h-1zM37 251h1V266h-1zM38 253h1V266h-1zM39 252h1V266h-1zM40 252h1V265h-1zM41 251h1V268h-1zM42 251h1V265h-1zM43 253h1V266h-1zM44 253h1V266h-1zM45 253h1V266h-1zM46 254h1V266h-1zM47 251h1V264h-1zM48 253h1V266h-1zM49 251h1V267h-1zM50 253h1V264h-1zM51 252h1V266h-1zM52 253h1V267h-1zM53 253h1V266h-1zM54 253h1V264h-1zM55 252h1V268h-1zM56 253h1V264h-1zM57 252h1V265h-1zM58 253h1V265h-1zM59 252h1V265h-1zM60 253h1V266h-1zM61 253h1V264h-1zM62 252h1V265h-1zM63 252h1V264h-1zM64 254h1V264h-1zM65 254h1V267h-1zM66 252h1V267h-1zM67 255h1V266h-1zM68 252h1V265h-1zM69 255h1V265h-1zM70 251h1V267h-1zM71 253h1V265h-1zM72 252h1V266h-1zM73 253h1V267h-1zM74 254h1V264h-1zM75 254h1V268h-1zM76 252h1V265h-1zM77 252h1V265h-1zM78 252h1V266h-1zM79 252h1V266h-1zM80 251h1V266h-1zM81 252h1V266h-1zM82 251h1V264h-1zM83 252h1V267h-1zM84 253h1V264h-1zM85 252h1V267h-1zM86 251h1V267h-1zM87 253h1V266h-1zM88 253h1V265h-1zM89 252h1V266h-1zM90 254h1V265h-1zM91 251h1V266h-1zM92 253h1V264h-1zM93 252h1V265h-1zM94 251h1V265h-1zM95 253h1V267h-1zM96 252h1V265h-1zM97 250h1V266h-1zM98 253h1V265h-1zM99 252h1V266h-1zM100 253h1V265h-1zM101 253h1V264h-1zM102 252h1V267h-1zM103 252h1V266h-1zM104 252h1V264h-1zM105 252h1V264h-1zM106 251h1V266h-1zM107 250h1V266h-1zM108 252h1V267h-1zM109 252h1V266h-1zM110 253h1V264h-1zM111 252h1V265h-1zM112 251h1V266h-1zM113 251h1V265h-1zM114 254h1V265h-1zM115 253h1V264h-1zM116 253h1V265h-1zM117 251h1V265h-1zM118 252h1V264h-1zM119 252h1V265h-1zM120 250h1V263h-1zM121 253h1V265h-1zM122 253h1V266h-1zM123 253h1V267h-1zM124 251h1V267h-1zM125 253h1V266h-1zM126 251h1V265h-1zM127 253h1V266h-1zM128 253h1V266h-1zM129 252h1V266h-1zM130 254h1V267h-1zM131 253h1V265h-1zM132 251h1V265h-1zM133 251h1V265h-1zM134 252h1V264h-1zM135 254h1V266h-1zM136 253h1V266h-1zM137 253h1V265h-1zM138 255h1V266h-1zM139 253h1V264h-1zM140 253h1V266h-1zM141 251h1V265h-1zM142 254h1V265h-1zM143 253h1V265h-1zM144 250h1V265h-1zM145 253h1V265h-1zM146 254h1V265h-1zM147 252h1V267h-1zM148 252h1V267h-1zM149 254h1V264h-1zM150 253h1V264h-1zM151 251h1V265h-1zM152 253h1V265h-1zM153 252h1V268h-1zM154 252h1V266h-1zM155 253h1V265h-1zM156 252h1V266h-1zM157 252h1V265h-1zM158 252h1V267h-1zM159 254h1V267h-1zM160 252h1V266h-1zM161 251h1V265h-1zM162 251h1V263h-1zM163 254h1V265h-1zM164 252h1V266h-1zM165 254h1V266h-1zM166 252h1V263h-1zM167 254h1V264h-1zM168 252h1V265h-1zM169 253h1V264h-1zM170 254h1V266h-1zM171 252h1V265h-1zM172 250h1V264h-1zM173 254h1V266h-1zM174 252h1V265h-1zM175 253h1V263h-1zM176 252h1V265h-1zM177 254h1V266h-1zM178 254h1V265h-1zM179 253h1V265h-1zM180 252h1V265h-1zM181 250h1V266h-1zM182 253h1V265h-1zM183 252h1V266h-1zM184 253h1V267h-1zM185 253h1V265h-1zM186 252h1V266h-1zM187 253h1V264h-1zM188 253h1V265h-1zM189 251h1V267h-1zM190 251h1V267h-1zM191 252h1V267h-1zM192 253h1V266h-1zM193 252h1V265h-1zM194 253h1V266h-1zM195 250h1V264h-1zM196 252h1V268h-1zM197 253h1V267h-1zM198 254h1V266h-1zM199 250h1V266h-1zM200 252h1V268h-1zM201 254h1V265h-1zM202 253h1V266h-1zM203 254h1V266h-1zM204 252h1V266h-1zM205 251h1V266h-1zM206 253h1V265h-1zM207 254h1V267h-1zM208 253h1V265h-1zM209 252h1V265h-1zM210 252h1V266h-1zM211 252h1V267h-1zM212 252h1V266h-1zM213 255h1V265h-1zM214 251h1V265h-1zM215 252h1V263h-1zM216 252h1V266h-1zM217 251h1V267h-1zM218 253h1V265h-1zM219 253h1V267h-1zM220 252h1V265h-1zM221 252h1V265h-1zM222 253h1V266h-1zM223 253h1V266h-1zM224 254h1V265h-1zM225 254h1V265h-1zM226 253h1V267h-1zM227 252h1V265h-1zM228 252h1V265h-1zM229 251h1V267h-1zM230 252h1V264h-1zM231 253h1V265h-1zM232 252h1V264h-1zM233 252h1V265h-1zM234 254h1V265h-1zM235 253h1V266h-1zM236 253h1V265h-1zM237 249h1V264h-1zM238 253h1V266h-1zM239 251h1V267h-1zM240 251h1V265h-1zM241 254h1V267h-1zM242 253h1V265h-1zM243 252h1V264h-1zM244 252h1V265h-1zM245 254h1V266h-1zM246 253h1V263h-1zM247 251h1V266h-1zM248 252h1V265h-1zM249 252h1V266h-1zM250 253h1V266h-1zM251 251h1V266h-1zM252 253h1V264h-1zM253 253h1V268h-1zM254 251h1V264h-1zM255 253h1V266h-1zM256 253h1V265h-1zM257 251h1V264h-1zM258 251h1V264h-1zM259 252h1V266h-1zM260 252h1V266h-1zM261 253h1V264h-1zM262 253h1V265h-1zM263 253h1V266h-1zM264 255h1V266h-1zM265 253h1V267h-1zM266 253h1V264h-1zM267 252h1V266h-1zM268 252h1V266h-1zM269 253h1V264h-1zM270 253h1V265h-1zM271 253h1V266h-1zM272 252h1V266h-1zM273 252h1V263h-1zM274 253h1V266h-1zM275 253h1V264h-1zM276 254h1V264h-1zM277 253h1V267h-1zM278 253h1V264h-1zM279 253h1V265h-1zM280 253h1V267h-1zM281 254h1V266h-1zM282 251h1V266h-1zM283 252h1V264h-1zM284 254h1V266h-1zM285 254h1V265h-1zM286 252h1V264h-1zM287 253h1V265h-1zM288 252h1V266h-1zM289 254h1V265h-1zM290 254h1V265h-1zM291 253h1V264h-1zM292 253h1V264h-1zM293 254h1V266h-1zM294 252h1V265h-1zM295 251h1V264h-1zM296 255h1V267h-1zM297 252h1V266h-1zM298 254h1V266h-1zM299 254h1V264h-1zM300 252h1V265h-1zM301 252h1V265h-1zM302 253h1V264h-1zM303 254h1V267h-1zM304 253h1V266h-1zM305 251h1V266h-1zM306 253h1V265h-1zM307 252h1V266h-1zM308 252h1V265h-1zM309 254h1V265h-1zM310 253h1V265h-1zM311 252h1V264h-1zM312 253h1V266h-1zM313 253h1V265h-1zM314 253h1V265h-1zM315 253h1V265h-1zM316 252h1V265h-1zM317 252h1V266h-1zM318 254h1V267h-1zM319 253h1V263h-1zM320 250h1V268h-1zM321 252h1V267h-1zM322 253h1V267h-1zM323 252h1V265h-1zM324 253h1V267h-1zM325 253h1V265h-1zM326 255h1V266h-1zM327 253h1V266h-1zM328 252h1V265h-1zM329 252h1V266h-1zM330 252h1V266h-1zM331 253h1V265h-1zM332 252h1V266h-1zM333 253h1V263h-1zM334 252h1V266h-1zM335 250h1V265h-1zM336 253h1V265h-1zM337 254h1V266h-1zM338 251h1V266h-1zM339 254h1V266h-1zM340 252h1V264h-1zM341 253h1V265h-1zM342 252h1V265h-1zM343 254h1V263h-1zM344 253h1V266h-1zM345 253h1V264h-1zM346 254h1V265h-1zM347 252h1V264h-1zM348 254h1V267h-1zM349 252h1V267h-1zM350 250h1V265h-1zM351 252h1V264h-1zM352 254h1V266h-1zM353 253h1V265h-1zM354 253h1V267h-1zM355 255h1V267h-1zM356 252h1V266h-1zM357 253h1V267h-1zM358 254h1V265h-1zM359 253h1V266h-1zM360 252h1V265h-1zM361 253h1V265h-1zM362 253h1V266h-1zM363 252h1V264h-1zM364 252h1V266h-1zM365 252h1V267h-1zM366 253h1V266h-1zM367 252h1V266h-1zM368 253h1V265h-1zM369 253h1V266h-1zM370 254h1V265h-1zM371 252h1V266h-1zM372 254h1V265h-1zM373 253h1V268h-1zM374 253h1V266h-1zM375 253h1V266h-1zM376 252h1V267h-1zM377 254h1V263h-1zM378 251h1V265h-1zM379 250h1V264h-1zM380 256h1V267h-1zM381 252h1V266h-1zM382 252h1V265h-1zM383 252h1V264h-1zM384 252h1V267h-1zM385 253h1V267h-1zM386 253h1V266h-1zM387 252h1V266h-1zM388 251h1V266h-1zM389 251h1V266h-1zM390 253h1V266h-1zM391 252h1V267h-1zM392 251h1V266h-1zM393 252h1V267h-1zM394 253h1V266h-1zM395 253h1V265h-1zM396 253h1V266h-1zM397 252h1V266h-1zM398 253h1V266h-1zM399 254h1V267h-1zM400 254h1V269h-1zM401 252h1V265h-1zM402 254h1V266h-1zM403 252h1V267h-1zM404 253h1V265h-1zM405 251h1V266h-1zM406 253h1V265h-1zM407 251h1V264h-1zM408 253h1V266h-1zM409 251h1V266h-1zM410 250h1V263h-1zM411 253h1V265h-1zM412 252h1V266h-1zM413 253h1V265h-1zM414 253h1V267h-1zM415 254h1V267h-1zM416 253h1V265h-1zM417 252h1V267h-1zM418 253h1V264h-1zM419 254h1V267h-1zM420 254h1V266h-1zM421 251h1V268h-1zM422 254h1V264h-1zM423 252h1V265h-1zM424 253h1V267h-1zM425 250h1V267h-1zM426 252h1V266h-1zM427 253h1V268h-1zM428 254h1V265h-1zM429 251h1V266h-1zM430 251h1V266h-1zM431 252h1V265h-1zM432 252h1V266h-1zM433 251h1V265h-1zM434 252h1V263h-1zM435 254h1V266h-1zM436 253h1V266h-1zM437 252h1V267h-1zM438 253h1V265h-1zM439 253h1V266h-1zM440 252h1V266h-1zM441 253h1V265h-1zM442 251h1V265h-1zM443 252h1V265h-1zM444 253h1V267h-1zM445 253h1V266h-1zM446 255h1V267h-1zM447 252h1V266h-1zM448 254h1V264h-1zM449 253h1V266h-1zM450 251h1V264h-1zM451 253h1V266h-1zM452 253h1V267h-1zM453 252h1V266h-1zM454 254h1V265h-1zM455 252h1V266h-1zM456 254h1V264h-1zM457 252h1V265h-1zM458 252h1V268h-1zM459 252h1V265h-1zM460 251h1V265h-1zM461 252h1V265h-1zM462 252h1V266h-1zM463 252h1V266h-1zM464 252h1V265h-1zM465 253h1V264h-1zM466 252h1V267h-1zM467 252h1V268h-1zM468 254h1V266h-1zM469 253h1V265h-1zM470 252h1V266h-1zM471 251h1V263h-1zM472 251h1V264h-1zM473 254h1V264h-1zM474 254h1V268h-1zM475 252h1V266h-1zM476 253h1V265h-1zM477 253h1V265h-1zM478 254h1V266h-1zM479 251h1V266h-1zM480 253h1V267h-1zM481 254h1V266h-1zM482 252h1V265h-1zM483 253h1V263h-1zM484 254h1V267h-1zM485 251h1V265h-1zM486 253h1V264h-1zM487 252h1V265h-1zM488 253h1V264h-1zM489 252h1V265h-1zM490 252h1V264h-1zM491 254h1V266h-1zM492 253h1V265h-1zM493 254h1V265h-1zM494 252h1V266h-1zM495 251h1V266h-1zM496 252h1V265h-1zM497 254h1V265h-1zM498 254h1V266h-1zM499 251h1V265h-1zM500 251h1V267h-1zM501 253h1V266h-1zM502 251h1V266h-1zM503 253h1V265h-1zM504 252h1V267h-1zM505 252h1V266h-1zM506 254h1V265h-1zM507 251h1V266h-1zM508 251h1V265h-1zM509 255h1V265h-1zM510 252h1V265h-1zM511 253h1V265h-1zM512 251h1V266h-1zM513 252h1V265h-1zM514 253h1V266h-1zM515 252h1V266h-1zM516 252h1V267h-1zM517 253h1V266h-1zM518 250h1V265h-1zM519 254h1V266h-1zM520 252h1V265h-1zM521 253h1V265h-1zM522 254h1V265h-1zM523 249h1V266h-1zM524 252h1V266h-1zM525 253h1V266h-1zM526 253h1V266h-1zM527 252h1V266h-1zM528 251h1V264h-1zM529 253h1V267h-1zM530 251h1V264h-1zM531 253h1V265h-1zM532 251h1V265h-1zM533 253h1V265h-1zM534 253h1V267h-1zM535 252h1V266h-1zM536 253h1V265h-1zM537 254h1V267h-1zM538 253h1V265h-1zM539 251h1V266h-1zM540 252h1V266h-1zM541 251h1V267h-1zM542 253h1V265h-1zM543 252h1V266h-1zM544 252h1V264h-1zM545 253h1V265h-1zM546 250h1V266h-1zM547 253h1V266h-1zM548 251h1V264h-1zM549 253h1V267h-1zM550 252h1V266h-1zM551 253h1V267h-1zM552 253h1V267h-1zM553 252h1V265h-1zM554 251h1V266h-1zM555 251h1V267h-1zM556 252h1V267h-1zM557 253h1V265h-1zM558 252h1V266h-1zM559 252h1V266h-1zM560 253h1V267h-1zM561 253h1V265h-1zM562 252h1V266h-1zM563 253h1V267h-1zM564 252h1V265h-1zM565 253h1V265h-1zM566 254h1V267h-1zM567 253h1V266h-1zM568 252h1V265h-1zM569 253h1V264h-1zM570 253h1V265h-1zM571 251h1V266h-1zM572 251h1V267h-1zM573 252h1V267h-1zM574 254h1V267h-1zM575 253h1V264h-1zM576 252h1V266h-1zM577 252h1V266h-1zM578 253h1V267h-1zM579 253h1V264h-1zM580 253h1V265h-1zM581 253h1V266h-1zM582 253h1V266h-1zM583 252h1V264h-1zM584 254h1V267h-1zM585 252h1V265h-1zM586 254h1V266h-1zM587 253h1V264h-1zM588 253h1V265h-1zM589 252h1V266h-1zM590 251h1V264h-1zM591 252h1V266h-1zM592 252h1V266h-1zM593 254h1V264h-1zM594 253h1V267h-1zM595 251h1V265h-1zM596 254h1V266h-1zM597 253h1V266h-1zM598 251h1V265h-1zM599 253h1V265h-1zM600 253h1V265h-1zM601 252h1V267h-1zM602 254h1V265h-1zM603 253h1V265h-1zM604 252h1V265h-1zM605 252h1V265h-1zM606 252h1V265h-1zM607 251h1V265h-1zM608 252h1V265h-1zM609 254h1V265h-1zM610 253h1V265h-1zM611 252h1V266h-1zM612 251h1V267h-1zM613 252h1V264h-1zM614 253h1V266h-1zM615 252h1V266h-1zM616 250h1V266h-1zM617 253h1V265h-1zM618 250h1V265h-1zM619 253h1V265h-1zM620 253h1V264h-1zM621 251h1V265h-1zM622 253h1V265h-1zM623 254h1V266h-1zM624 252h1V265h-1zM625 252h1V265h-1zM626 253h1V266h-1zM627 251h1V265h-1zM628 254h1V265h-1zM629 256h1V266h-1zM630 254h1V265h-1zM631 252h1V264h-1zM632 254h1V266h-1zM633 252h1V266h-1zM634 252h1V265h-1zM635 253h1V265h-1zM636 253h1V265h-1zM637 254h1V266h-1zM638 252h1V265h-1zM639 253h1V264h-1zM640 255h1V267h-1zM641 253h1V267h-1zM642 253h1V265h-1zM643 253h1V267h-1zM644 253h1V265h-1zM645 253h1V266h-1zM646 250h1V266h-1zM647 253h1V265h-1zM648 251h1V264h-1zM649 253h1V267h-1zM650 252h1V266h-1zM651 252h1V264h-1zM652 252h1V267h-1zM653 254h1V265h-1zM654 253h1V267h-1zM655 254h1V266h-1zM656 253h1V265h-1zM657 251h1V266h-1zM658 253h1V265h-1zM659 252h1V264h-1zM660 252h1V267h-1zM661 253h1V267h-1zM662 252h1V265h-1zM663 254h1V265h-1zM664 252h1V266h-1zM665 253h1V264h-1zM666 251h1V266h-1zM667 252h1V266h-1zM668 254h1V266h-1zM669 252h1V266h-1zM670 252h1V264h-1zM671 255h1V266h-1zM672 253h1V266h-1zM673 251h1V265h-1zM674 251h1V266h-1zM675 252h1V266h-1zM676 251h1V266h-1zM677 254h1V264h-1zM678 252h1V264h-1zM679 250h1V267h-1zM680 254h1V266h-1zM681 253h1V265h-1zM682 252h1V266h-1zM683 252h1V267h-1zM684 253h1V266h-1zM685 251h1V265h-1zM686 252h1V264h-1zM687 253h1V266h-1zM688 252h1V266h-1zM689 254h1V265h-1zM690 253h1V265h-1zM691 254h1V266h-1zM692 252h1V265h-1zM693 253h1V264h-1zM694 254h1V265h-1zM695 252h1V265h-1zM696 253h1V267h-1zM697 252h1V266h-1zM698 253h1V265h-1zM699 252h1V266h-1zM700 251h1V263h-1zM701 252h1V265h-1zM702 254h1V264h-1zM703 251h1V266h-1zM704 252h1V266h-1zM705 253h1V264h-1zM706 252h1V264h-1zM707 253h1V267h-1zM708 251h1V267h-1zM709 250h1V265h-1zM710 254h1V266h-1zM711 251h1V266h-1zM712 253h1V264h-1zM713 252h1V267h-1zM714 252h1V266h-1zM715 250h1V264h-1zM716 252h1V263h-1zM717 252h1V266h-1zM718 252h1V266h-1zM719 252h1V264h-1zM720 252h1V265h-1zM721 253h1V264h-1zM722 253h1V265h-1zM723 251h1V266h-1zM724 252h1V263h-1zM725 253h1V264h-1zM726 252h1V265h-1zM727 253h1V265h-1zM728 254h1V265h-1zM729 252h1V266h-1zM730 253h1V265h-1zM731 253h1V266h-1zM732 252h1V268h-1zM733 251h1V264h-1zM734 252h1V265h-1zM735 253h1V265h-1zM736 252h1V264h-1zM737 253h1V267h-1zM738 253h1V264h-1zM739 253h1V263h-1zM740 251h1V267h-1zM741 251h1V267h-1zM742 251h1V264h-1zM743 252h1V265h-1zM744 253h1V265h-1zM745 251h1V265h-1zM746 252h1V266h-1zM747 252h1V266h-1zM748 253h1V267h-1zM749 251h1V264h-1zM750 253h1V266h-1zM751 251h1V266h-1zM752 251h1V266h-1zM753 254h1V266h-1zM754 253h1V266h-1zM755 251h1V265h-1zM756 252h1V266h-1zM757 253h1V266h-1zM758 254h1V266h-1zM759 253h1V265h-1zM760 252h1V265h-1zM761 251h1V265h-1zM762 252h1V266h-1zM763 252h1V264h-1zM764 253h1V267h-1zM765 253h1V264h-1zM766 251h1V264h-1zM767 251h1V266h-1zM768 253h1V266h-1zM769 252h1V265h-1zM770 253h1V267h-1zM771 251h1V266h-1zM772 252h1V265h-1zM773 252h1V267h-1zM774 253h1V266h-1zM775 252h1V264h-1zM776 253h1V267h-1zM777 252h1V266h-1zM778 254h1V266h-1z" fill="#30f030" opacity="0.75"/><path d="M20 256h1V262h-1zM21 253h1V262h-1zM22 254h1V263h-1zM23 257h1V265h-1zM24 256h1V263h-1zM25 255h1V262h-1zM26 256h1V262h-1zM27 252h1V261h-1zM28 254h1V263h-1zM29 254h1V262h-1zM30 256h1V263h-1zM31 255h1V262h-1zM32 256h1V263h-1zM33 255h1V263h-1zM34 254h1V264h-1zM35 256h1V262h-1zM36 256h1V264h-1zM37 256h1V261h-1zM38 255h1V262h-1zM39 256h1V261h-1zM40 254h1V263h-1zM41 257h1V264h-1zM42 255h1V263h-1zM43 256h1V261h-1zM44 254h1V262h-1zM45 255h1V262h-1zM46 254h1V263h-1zM47 256h1V262h-1zM48 257h1V263h-1zM49 254h1V262h-1zM50 255h1V262h-1zM51 256h1V263h-1zM52 257h1V263h-1zM53 256h1V263h-1zM54 258h1V261h-1zM55 256h1V263h-1zM56 256h1V263h-1zM57 255h1V261h-1zM58 255h1V263h-1zM59 256h1V264h-1zM60 256h1V263h-1zM61 256h1V261h-1zM62 257h1V263h-1zM63 256h1V264h-1zM64 255h1V264h-1zM65 256h1V263h-1zM66 257h1V261h-1zM67 257h1V263h-1zM68 255h1V263h-1zM69 255h1V263h-1zM70 255h1V263h-1zM71 256h1V262h-1zM72 254h1V265h-1zM73 256h1V262h-1zM74 256h1V263h-1zM75 257h1V261h-1zM76 257h1V260h-1zM77 255h1V262h-1zM78 257h1V264h-1zM79 255h1V262h-1zM80 255h1V262h-1zM81 255h1V263h-1zM82 254h1V264h-1zM83 257h1V263h-1zM84 256h1V264h-1zM85 255h1V262h-1zM86 254h1V261h-1zM87 254h1V261h-1zM88 255h1V262h-1zM89 256h1V262h-1zM90 255h1V264h-1zM91 254h1V261h-1zM92 255h1V262h-1zM93 256h1V262h-1zM94 254h1V263h-1zM95 255h1V263h-1zM96 255h1V261h-1zM97 254h1V262h-1zM98 254h1V262h-1zM99 256h1V262h-1zM100 256h1V262h-1zM101 256h1V262h-1zM102 255h1V263h-1zM103 255h1V261h-1zM104 256h1V264h-1zM105 255h1V261h-1zM106 254h1V262h-1zM107 256h1V262h-1zM108 256h1V262h-1zM109 256h1V262h-1zM110 255h1V262h-1zM111 254h1V262h-1zM112 257h1V260h-1zM113 254h1V261h-1zM114 257h1V262h-1zM115 255h1V262h-1zM116 256h1V263h-1zM117 257h1V262h-1zM118 254h1V265h-1zM119 255h1V262h-1zM120 255h1V264h-1zM121 254h1V262h-1zM122 255h1V263h-1zM123 255h1V261h-1zM124 255h1V261h-1zM125 257h1V262h-1zM126 256h1V261h-1zM127 255h1V261h-1zM128 255h1V262h-1zM129 256h1V263h-1zM130 256h1V262h-1zM131 256h1V264h-1zM132 255h1V263h-1zM133 255h1V264h-1zM134 255h1V263h-1zM135 256h1V264h-1zM136 255h1V261h-1zM137 257h1V262h-1zM138 254h1V262h-1zM139 256h1V265h-1zM140 254h1V264h-1zM141 255h1V264h-1zM142 256h1V263h-1zM143 255h1V264h-1zM144 255h1V263h-1zM145 256h1V261h-1zM146 255h1V262h-1zM147 256h1V264h-1zM148 256h1V262h-1zM149 254h1V262h-1zM150 254h1V262h-1zM151 257h1V264h-1zM152 256h1V262h-1zM153 254h1V263h-1zM154 256h1V262h-1zM155 256h1V262h-1zM156 256h1V262h-1zM157 257h1V261h-1zM158 255h1V262h-1zM159 254h1V263h-1zM160 255h1V264h-1zM161 254h1V261h-1zM162 254h1V263h-1zM163 255h1V263h-1zM164 256h1V262h-1zM165 254h1V263h-1zM166 255h1V266h-1zM167 256h1V261h-1zM168 256h1V264h-1zM169 257h1V262h-1zM170 255h1V262h-1zM171 255h1V263h-1zM172 255h1V263h-1zM173 255h1V263h-1zM174 255h1V263h-1zM175 256h1V264h-1zM176 255h1V260h-1zM177 257h1V262h-1zM178 255h1V263h-1zM179 256h1V261h-1zM180 255h1V263h-1zM181 255h1V263h-1zM182 256h1V262h-1zM183 255h1V264h-1zM184 255h1V262h-1zM185 255h1V264h-1zM186 254h1V264h-1zM187 257h1V262h-1zM188 255h1V264h-1zM189 255h1V264h-1zM190 254h1V263h-1zM191 256h1V259h-1zM192 256h1V262h-1zM193 254h1V264h-1zM194 255h1V262h-1zM195 256h1V263h-1zM196 255h1V263h-1zM197 258h1V262h-1zM198 255h1V263h-1zM199 255h1V261h-1zM200 255h1V262h-1zM201 255h1V261h-1zM202 253h1V265h-1zM203 255h1V263h-1zM204 255h1V264h-1zM205 255h1V262h-1zM206 254h1V262h-1zM207 256h1V262h-1zM208 255h1V265h-1zM209 255h1V262h-1zM210 253h1V265h-1zM211 255h1V262h-1zM212 254h1V262h-1zM213 256h1V265h-1zM214 255h1V264h-1zM215 255h1V264h-1zM216 257h1V263h-1zM217 255h1V264h-1zM218 254h1V262h-1zM219 255h1V264h-1zM220 256h1V262h-1zM221 256h1V263h-1zM222 255h1V262h-1zM223 255h1V263h-1zM224 256h1V262h-1zM225 255h1V262h-1zM226 254h1V261h-1zM227 256h1V264h-1zM228 256h1V263h-1zM229 254h1V263h-1zM230 256h1V262h-1zM231 254h1V263h-1zM232 256h1V263h-1zM233 255h1V264h-1zM234 254h1V262h-1zM235 257h1V263h-1zM236 254h1V263h-1zM237 255h1V261h-1zM238 255h1V263h-1zM239 256h1V263h-1zM240 256h1V264h-1zM241 254h1V263h-1zM242 254h1V263h-1zM243 255h1V261h-1zM244 254h1V263h-1zM245 255h1V262h-1zM246 256h1V261h-1zM247 256h1V263h-1zM248 257h1V264h-1zM249 257h1V263h-1zM250 255h1V263h-1zM251 256h1V262h-1zM252 256h1V264h-1zM253 254h1V262h-1zM254 255h1V264h-1zM255 254h1V264h-1zM256 254h1V263h-1zM257 256h1V263h-1zM258 255h1V263h-1zM259 257h1V263h-1zM260 256h1V263h-1zM261 256h1V262h-1zM262 255h1V261h-1zM263 256h1V262h-1zM264 255h1V260h-1zM265 255h1V262h-1zM266 256h1V266h-1zM267 255h1V263h-1zM268 257h1V264h-1zM269 256h1V264h-1zM270 255h1V263h-1zM271 254h1V261h-1zM272 256h1V262h-1zM273 257h1V263h-1zM274 256h1V262h-1zM275 257h1V261h-1zM276 253h1V262h-1zM277 255h1V263h-1zM278 256h1V264h-1zM279 256h1V263h-1zM280 256h1V264h-1zM281 258h1V264h-1zM282 255h1V263h-1zM283 256h1V263h-1zM284 256h1V262h-1zM285 254h1V262h-1zM286 257h1V260h-1zM287 254h1V263h-1zM288 256h1V263h-1zM289 254h1V261h-1zM290 256h1V263h-1zM291 255h1V261h-1zM292 254h1V263h-1zM293 256h1V263h-1zM294 256h1V264h-1zM295 256h1V264h-1zM296 255h1V262h-1zM297 256h1V262h-1zM298 255h1V264h-1zM299 255h1V264h-1zM300 256h1V261h-1zM301 255h1V263h-1zM302 254h1V263h-1zM303 255h1V264h-1zM304 254h1V264h-1zM305 255h1V263h-1zM306 256h1V262h-1zM307 256h1V261h-1zM308 257h1V263h-1zM309 255h1V263h-1zM310 256h1V262h-1zM311 255h1V263h-1zM312 254h1V262h-1zM313 257h1V264h-1zM314 255h1V262h-1zM315 255h1V263h-1zM316 254h1V263h-1zM317 256h1V263h-1zM318 256h1V263h-1zM319 257h1V263h-1zM320 255h1V263h-1zM321 254h1V261h-1zM322 256h1V263h-1zM323 257h1V262h-1zM324 254h1V261h-1zM325 256h1V260h-1zM326 257h1V262h-1zM327 256h1V262h-1zM328 256h1V260h-1zM329 255h1V262h-1zM330 255h1V261h-1zM331 255h1V262h-1zM332 256h1V263h-1zM333 256h1V262h-1zM334 254h1V263h-1zM335 257h1V263h-1zM336 257h1V262h-1zM337 254h1V263h-1zM338 256h1V262h-1zM339 255h1V263h-1zM340 255h1V264h-1zM341 257h1V261h-1zM342 255h1V262h-1zM343 256h1V264h-1zM344 256h1V263h-1zM345 257h1V262h-1zM346 254h1V262h-1zM347 255h1V263h-1zM348 256h1V262h-1zM349 254h1V263h-1zM350 255h1V262h-1zM351 255h1V263h-1zM352 254h1V263h-1zM353 257h1V264h-1zM354 256h1V264h-1zM355 256h1V263h-1zM356 255h1V263h-1zM357 256h1V262h-1zM358 256h1V261h-1zM359 255h1V264h-1zM360 257h1V261h-1zM361 255h1V262h-1zM362 256h1V264h-1zM363 256h1V261h-1zM364 256h1V263h-1zM365 256h1V262h-1zM366 257h1V262h-1zM367 256h1V262h-1zM368 255h1V264h-1zM369 256h1V264h-1zM370 255h1V263h-1zM371 256h1V263h-1zM372 256h1V262h-1zM373 255h1V262h-1zM374 254h1V263h-1zM375 255h1V262h-1zM376 254h1V262h-1zM377 256h1V263h-1zM378 256h1V264h-1zM379 257h1V261h-1zM380 256h1V265h-1zM381 255h1V262h-1zM382 254h1V262h-1zM383 255h1V262h-1zM384 255h1V261h-1zM385 255h1V263h-1zM386 256h1V261h-1zM387 257h1V262h-1zM388 256h1V263h-1zM389 257h1V262h-1zM390 254h1V263h-1zM391 255h1V261h-1zM392 255h1V261h-1zM393 256h1V263h-1zM394 256h1V262h-1zM395 256h1V262h-1zM396 259h1V264h-1zM397 254h1V262h-1zM398 256h1V262h-1zM399 254h1V263h-1zM400 256h1V263h-1zM401 255h1V263h-1zM402 255h1V262h-1zM403 256h1V262h-1zM404 255h1V263h-1zM405 256h1V263h-1zM406 255h1V263h-1zM407 256h1V262h-1zM408 258h1V263h-1zM409 256h1V261h-1zM410 254h1V260h-1zM411 256h1V260h-1zM412 255h1V262h-1zM413 254h1V261h-1zM414 255h1V261h-1zM415 256h1V263h-1zM416 256h1V261h-1zM417 254h1V264h-1zM418 256h1V263h-1zM419 256h1V262h-1zM420 253h1V263h-1zM421 255h1V263h-1zM422 255h1V262h-1zM423 255h1V263h-1zM424 257h1V264h-1zM425 255h1V264h-1zM426 256h1V262h-1zM427 253h1V262h-1zM428 256h1V264h-1zM429 255h1V263h-1zM430 254h1V260h-1zM431 255h1V262h-1zM432 254h1V263h-1zM433 255h1V262h-1zM434 254h1V262h-1zM435 254h1V264h-1zM436 256h1V263h-1zM437 256h1V263h-1zM438 255h1V262h-1zM439 254h1V263h-1zM440 255h1V262h-1zM441 256h1V262h-1zM442 255h1V261h-1zM443 256h1V263h-1zM444 257h1V261h-1zM445 255h1V263h-1zM446 256h1V263h-1zM447 255h1V263h-1zM448 256h1V263h-1zM449 256h1V264h-1zM450 256h1V263h-1zM451 255h1V262h-1zM452 256h1V263h-1zM453 252h1V264h-1zM454 255h1V262h-1zM455 254h1V264h-1zM456 254h1V262h-1zM457 255h1V264h-1zM458 257h1V262h-1zM459 255h1V262h-1zM460 255h1V264h-1zM461 254h1V263h-1zM462 255h1V264h-1zM463 255h1V262h-1zM464 256h1V263h-1zM465 255h1V262h-1zM466 255h1V261h-1zM467 257h1V262h-1zM468 256h1V263h-1zM469 257h1V264h-1zM470 256h1V262h-1zM471 254h1V264h-1zM472 255h1V263h-1zM473 256h1V262h-1zM474 257h1V262h-1zM475 255h1V260h-1zM476 254h1V265h-1zM477 256h1V260h-1zM478 257h1V264h-1zM479 257h1V262h-1zM480 257h1V262h-1zM481 255h1V262h-1zM482 256h1V263h-1zM483 255h1V262h-1zM484 257h1V263h-1zM485 257h1V263h-1zM486 256h1V263h-1zM487 254h1V263h-1zM488 256h1V262h-1zM489 252h1V260h-1zM490 257h1V262h-1zM491 256h1V263h-1zM492 256h1V263h-1zM493 256h1V262h-1zM494 255h1V263h-1zM495 256h1V261h-1zM496 255h1V263h-1zM497 257h1V262h-1zM498 255h1V262h-1zM499 256h1V263h-1zM500 256h1V261h-1zM501 255h1V262h-1zM502 256h1V263h-1zM503 255h1V264h-1zM504 253h1V261h-1zM505 254h1V262h-1zM506 255h1V265h-1zM507 256h1V263h-1zM508 255h1V263h-1zM509 255h1V263h-1zM510 256h1V263h-1zM511 254h1V261h-1zM512 255h1V263h-1zM513 255h1V263h-1zM514 258h1V263h-1zM515 255h1V263h-1zM516 254h1V263h-1zM517 253h1V261h-1zM518 256h1V264h-1zM519 256h1V263h-1zM520 256h1V263h-1zM521 256h1V261h-1zM522 255h1V265h-1zM523 255h1V264h-1zM524 256h1V263h-1zM525 254h1V263h-1zM526 255h1V263h-1zM527 255h1V262h-1zM528 255h1V263h-1zM529 255h1V261h-1zM530 255h1V263h-1zM531 256h1V263h-1zM532 255h1V262h-1zM533 255h1V263h-1zM534 255h1V263h-1zM535 256h1V263h-1zM536 254h1V264h-1zM537 254h1V262h-1zM538 255h1V264h-1zM539 256h1V262h-1zM540 256h1V262h-1zM541 256h1V262h-1zM542 255h1V262h-1zM543 256h1V262h-1zM544 255h1V262h-1zM545 255h1V263h-1zM546 256h1V262h-1zM547 257h1V261h-1zM548 257h1V262h-1zM549 254h1V262h-1zM550 255h1V262h-1zM551 256h1V261h-1zM552 255h1V263h-1zM553 256h1V262h-1zM554 256h1V262h-1zM555 254h1V264h-1zM556 256h1V263h-1zM557 255h1V263h-1zM558 255h1V263h-1zM559 257h1V262h-1zM560 253h1V262h-1zM561 254h1V262h-1zM562 255h1V264h-1zM563 256h1V261h-1zM564 255h1V260h-1zM565 255h1V263h-1zM566 256h1V263h-1zM567 257h1V263h-1zM568 256h1V263h-1zM569 254h1V263h-1zM570 255h1V263h-1zM571 254h1V263h-1zM572 256h1V262h-1zM573 256h1V261h-1zM574 257h1V263h-1zM575 256h1V264h-1zM576 255h1V262h-1zM577 256h1V262h-1zM578 254h1V263h-1zM579 256h1V262h-1zM580 255h1V262h-1zM581 255h1V262h-1zM582 256h1V263h-1zM583 255h1V263h-1zM584 255h1V262h-1zM585 255h1V264h-1zM586 255h1V265h-1zM587 255h1V265h-1zM588 257h1V265h-1zM589 257h1V264h-1zM590 255h1V263h-1zM591 255h1V262h-1zM592 255h1V261h-1zM593 256h1V261h-1zM594 255h1V262h-1zM595 257h1V263h-1zM596 255h1V264h-1zM597 255h1V263h-1zM598 253h1V261h-1zM599 254h1V264h-1zM600 257h1V262h-1zM601 257h1V263h-1zM602 257h1V263h-1zM603 256h1V260h-1zM604 254h1V261h-1zM605 254h1V261h-1zM606 256h1V263h-1zM607 256h1V263h-1zM608 255h1V261h-1zM609 256h1V264h-1zM610 256h1V262h-1zM611 257h1V263h-1zM612 255h1V263h-1zM613 256h1V261h-1zM614 256h1V262h-1zM615 256h1V263h-1zM616 255h1V261h-1zM617 255h1V263h-1zM618 254h1V261h-1zM619 253h1V262h-1zM620 255h1V263h-1zM621 256h1V263h-1zM622 254h1V263h-1zM623 255h1V261h-1zM624 254h1V262h-1zM625 255h1V263h-1zM626 256h1V264h-1zM627 254h1V263h-1zM628 256h1V261h-1zM629 256h1V263h-1zM630 255h1V262h-1zM631 256h1V262h-1zM632 255h1V263h-1zM633 254h1V263h-1zM634 257h1V262h-1zM635 257h1V261h-1zM636 255h1V264h-1zM637 254h1V264h-1zM638 257h1V263h-1zM639 256h1V262h-1zM640 258h1V264h-1zM641 256h1V262h-1zM642 255h1V260h-1zM643 255h1V263h-1zM644 255h1V263h-1zM645 253h1V262h-1zM646 254h1V264h-1zM647 256h1V262h-1zM648 257h1V263h-1zM649 257h1V262h-1zM650 255h1V265h-1zM651 256h1V264h-1zM652 255h1V262h-1zM653 254h1V262h-1zM654 254h1V263h-1zM655 254h1V262h-1zM656 256h1V262h-1zM657 256h1V263h-1zM658 253h1V264h-1zM659 256h1V262h-1zM660 256h1V262h-1zM661 256h1V262h-1zM662 256h1V264h-1zM663 256h1V263h-1zM664 256h1V264h-1zM665 256h1V262h-1zM666 255h1V262h-1zM667 255h1V261h-1zM668 256h1V261h-1zM669 256h1V261h-1zM670 255h1V263h-1zM671 255h1V262h-1zM672 254h1V262h-1zM673 254h1V264h-1zM674 256h1V262h-1zM675 257h1V262h-1zM676 255h1V264h-1zM677 255h1V262h-1zM678 255h1V263h-1zM679 254h1V262h-1zM680 256h1V263h-1zM681 255h1V263h-1zM682 255h1V263h-1zM683 257h1V261h-1zM684 256h1V261h-1zM685 255h1V262h-1zM686 254h1V263h-1zM687 256h1V263h-1zM688 255h1V264h-1zM689 255h1V261h-1zM690 256h1V263h-1zM691 254h1V264h-1zM692 256h1V262h-1zM693 256h1V263h-1zM694 255h1V263h-1zM695 257h1V261h-1zM696 256h1V263h-1zM697 257h1V264h-1zM698 256h1V262h-1zM699 257h1V263h-1zM700 255h1V262h-1zM701 256h1V262h-1zM702 256h1V262h-1zM703 257h1V262h-1zM704 254h1V263h-1zM705 255h1V262h-1zM706 255h1V265h-1zM707 255h1V261h-1zM708 255h1V263h-1zM709 255h1V264h-1zM710 256h1V263h-1zM711 255h1V264h-1zM712 256h1V264h-1zM713 255h1V262h-1zM714 255h1V264h-1zM715 256h1V263h-1zM716 256h1V262h-1zM717 255h1V263h-1zM718 256h1V262h-1zM719 254h1V262h-1zM720 255h1V262h-1zM721 255h1V262h-1zM722 256h1V262h-1zM723 256h1V263h-1zM724 254h1V261h-1zM725 254h1V263h-1zM726 255h1V262h-1zM727 255h1V263h-1zM728 255h1V263h-1zM729 256h1V261h-1zM730 255h1V261h-1zM731 256h1V263h-1zM732 257h1V262h-1zM733 255h1V263h-1zM734 254h1V263h-1zM735 255h1V262h-1zM736 255h1V263h-1zM737 256h1V263h-1zM738 255h1V262h-1zM739 256h1V263h-1zM740 256h1V263h-1zM741 257h1V262h-1zM742 254h1V263h-1zM743 255h1V262h-1zM744 255h1V262h-1zM745 258h1V263h-1zM746 255h1V262h-1zM747 256h1V262h-1zM748 255h1V262h-1zM749 255h1V262h-1zM750 255h1V263h-1zM751 256h1V262h-1zM752 257h1V263h-1zM753 256h1V263h-1zM754 256h1V263h-1zM755 256h1V263h-1zM756 256h1V262h-1zM757 252h1V260h-1zM758 255h1V263h-1zM759 256h1V262h-1zM760 255h1V262h-1zM761 255h1V262h-1zM762 254h1V261h-1zM763 254h1V263h-1zM764 256h1V263h-1zM765 254h1V264h-1zM766 253h1V263h-1zM767 255h1V264h-1zM768 256h1V264h-1zM769 256h1V261h-1zM770 255h1V262h-1zM771 255h1V263h-1zM772 256h1V262h-1zM773 256h1V261h-1zM774 255h1V262h-1zM775 257h1V262h-1zM776 254h1V262h-1zM777 257h1V262h-1zM778 255h1V261h-1z" fill="#80ff80" opacity="0.65"/><path d="M119 100h1v1h-1zM119 105h1v1h-1zM119 110h1v1h-1zM119 115h1v1h-1zM219 100h1v1h-1zM219 105h1v1h-1zM219 110h1v1h-1zM219 115h1v1h-1zM319 100h1v1h-1zM319 105h1v1h-1zM319 110h1v1h-1zM319 115h1v1h-1zM419 100h1v1h-1zM419 105h1v1h-1zM419 110h1v1h-1zM419 115h1v1h-1zM519 100h1v1h-1zM519 105h1v1h-1zM519 110h1v1h-1zM519 115h1v1h-1zM619 100h1v1h-1zM619 105h1v1h-1zM619 110h1v1h-1zM619 115h1v1h-1zM719 100h1v1h-1zM719 105h1v1h-1zM719 110h1v1h-1zM719 115h1v1h-1zM24 100h1v1h-1zM29 100h1v1h-1zM34 100h1v1h-1zM39 100h1v1h-1zM44 100h1v1h-1zM49 100h1v1h-1zM54 100h1v1h-1zM59 100h1v1h-1zM64 100h1v1h-1zM69 100h1v1h-1zM74 100h1v1h-1zM79 100h1v1h-1zM84 100h1v1h-1zM89 100h1v1h-1zM94 100h1v1h-1zM99 100h1v1h-1zM104 100h1v1h-1zM109 100h1v1h-1zM114 100h1v1h-1zM119 100h1v1h-1zM124 100h1v1h-1zM129 100h1v1h-1zM134 100h1v1h-1zM139 100h1v1h-1zM144 100h1v1h-1zM149 100h1v1h-1zM154 100h1v1h-1zM159 100h1v1h-1zM164 100h1v1h-1zM169 100h1v1h-1zM174 100h1v1h-1zM179 100h1v1h-1zM184 100h1v1h-1zM189 100h1v1h-1zM194 100h1v1h-1zM199 100h1v1h-1zM204 100h1v1h-1zM209 100h1v1h-1zM214 100h1v1h-1zM219 100h1v1h-1zM224 100h1v1h-1zM229 100h1v1h-1zM234 100h1v1h-1zM239 100h1v1h-1zM244 100h1v1h-1zM249 100h1v1h-1zM254 100h1v1h-1zM259 100h1v1h-1zM264 100h1v1h-1zM269 100h1v1h-1zM274 100h1v1h-1zM279 100h1v1h-1zM284 100h1v1h-1zM289 100h1v1h-1zM294 100h1v1h-1zM299 100h1v1h-1zM304 100h1v1h-1zM309 100h1v1h-1zM314 100h1v1h-1zM319 100h1v1h-1zM324 100h1v1h-1zM329 100h1v1h-1zM334 100h1v1h-1zM339 100h1v1h-1zM344 100h1v1h-1zM349 100h1v1h-1zM354 100h1v1h-1zM359 100h1v1h-1zM364 100h1v1h-1zM369 100h1v1h-1zM374 100h1v1h-1zM379 100h1v1h-1zM384 100h1v1h-1zM389 100h1v1h-1zM394 100h1v1h-1zM399 100h1v1h-1zM404 100h1v1h-1zM409 100h1v1h-1zM414 100h1v1h-1zM419 100h1v1h-1zM424 100h1v1h-1zM429 100h1v1h-1zM434 100h1v1h-1zM439 100h1v1h-1zM444 100h1v1h-1zM449 100h1v1h-1zM454 100h1v1h-1zM459 100h1v1h-1zM464 100h1v1h-1zM469 100h1v1h-1zM474 100h1v1h-1zM479 100h1v1h-1zM484 100h1v1h-1zM489 100h1v1h-1zM494 100h1v1h-1zM499 100h1v1h-1zM504 100h1v1h-1zM509 100h1v1h-1zM514 100h1v1h-1zM519 100h1v1h-1zM524 100h1v1h-1zM529 100h1v1h-1zM534 100h1v1h-1zM539 100h1v1h-1zM544 100h1v1h-1zM549 100h1v1h-1zM554 100h1v1h-1zM559 100h1v1h-1zM564 100h1v1h-1zM569 100h1v1h-1zM574 100h1v1h-1zM579 100h1v1h-1zM584 100h1v1h-1zM589 100h1v1h-1zM594 100h1v1h-1zM599 100h1v1h-1zM604 100h1v1h-1zM609 100h1v1h-1zM614 100h1v1h-1zM619 100h1v1h-1zM624 100h1v1h-1zM629 100h1v1h-1zM634 100h1v1h-1zM639 100h1v1h-1zM644 100h1v1h-1zM649 100h1v1h-1zM654 100h1v1h-1zM659 100h1v1h-1zM664 100h1v1h-1zM669 100h1v1h-1zM674 100h1v1h-1zM679 100h1v1h-1zM684 100h1v1h-1zM689 100h1v1h-1zM694 100h1v1h-1zM699 100h1v1h-1zM704 100h1v1h-1zM709 100h1v1h-1zM714 100h1v1h-1zM719 100h1v1h-1zM724 100h1v1h-1zM729 100h1v1h-1zM734 100h1v1h-1zM739 100h1v1h-1zM744 100h1v1h-1zM749 100h1v1h-1zM754 100h1v1h-1zM759 100h1v1h-1zM764 100h1v1h-1zM769 100h1v1h-1zM774 100h1v1h-1zM119 250h1v1h-1zM119 255h1v1h-1zM119 260h1v1h-1zM119 265h1v1h-1zM119 270h1v1h-1zM219 250h1v1h-1zM219 255h1v1h-1zM219 260h1v1h-1zM219 265h1v1h-1zM219 270h1v1h-1zM319 250h1v1h-1zM319 255h1v1h-1zM319 260h1v1h-1zM319 265h1v1h-1zM319 270h1v1h-1zM419 250h1v1h-1zM419 255h1v1h-1zM419 260h1v1h-1zM419 265h1v1h-1zM419 270h1v1h-1zM519 250h1v1h-1zM519 255h1v1h-1zM519 260h1v1h-1zM519 265h1v1h-1zM519 270h1v1h-1zM619 250h1v1h-1zM619 255h1v1h-1zM619 260h1v1h-1zM619 265h1v1h-1zM619 270h1v1h-1zM719 250h1v1h-1zM719 255h1v1h-1zM719 260h1v1h-1zM719 265h1v1h-1zM719 270h1v1h-1zM24 260h1v1h-1zM29 260h1v1h-1zM34 260h1v1h-1zM39 260h1v1h-1zM44 260h1v1h-1zM49 260h1v1h-1zM54 260h1v1h-1zM59 260h1v1h-1zM64 260h1v1h-1zM69 260h1v1h-1zM74 260h1v1h-1zM79 260h1v1h-1zM84 260h1v1h-1zM89 260h1v1h-1zM94 260h1v1h-1zM99 260h1v1h-1zM104 260h1v1h-1zM109 260h1v1h-1zM114 260h1v1h-1zM119 260h1v1h-1zM124 260h1v1h-1zM129 260h1v1h-1zM134 260h1v1h-1zM139 260h1v1h-1zM144 260h1v1h-1zM149 260h1v1h-1zM154 260h1v1h-1zM159 260h1v1h-1zM164 260h1v1h-1zM169 260h1v1h-1zM174 260h1v1h-1zM179 260h1v1h-1zM184 260h1v1h-1zM189 260h1v1h-1zM194 260h1v1h-1zM199 260h1v1h-1zM204 260h1v1h-1zM209 260h1v1h-1zM214 260h1v1h-1zM219 260h1v1h-1zM224 260h1v1h-1zM229 260h1v1h-1zM234 260h1v1h-1zM239 260h1v1h-1zM244 260h1v1h-1zM249 260h1v1h-1zM254 260h1v1h-1zM259 260h1v1h-1zM264 260h1v1h-1zM269 260h1v1h-1zM274 260h1v1h-1zM279 260h1v1h-1zM284 260h1v1h-1zM289 260h1v1h-1zM294 260h1v1h-1zM299 260h1v1h-1zM304 260h1v1h-1zM309 260h1v1h-1zM314 260h1v1h-1zM319 260h1v1h-1zM324 260h1v1h-1zM329 260h1v1h-1zM334 260h1v1h-1zM339 260h1v1h-1zM344 260h1v1h-1zM349 260h1v1h-1zM354 260h1v1h-1zM359 260h1v1h-1zM364 260h1v1h-1zM369 260h1v1h-1zM374 260h1v1h-1zM379 260h1v1h-1zM384 260h1v1h-1zM389 260h1v1h-1zM394 260h1v1h-1zM399 260h1v1h-1zM404 260h1v1h-1zM409 260h1v1h-1zM414 260h1v1h-1zM419 260h1v1h-1zM424 260h1v1h-1zM429 260h1v1h-1zM434 260h1v1h-1zM439 260h1v1h-1zM444 260h1v1h-1zM449 260h1v1h-1zM454 260h1v1h-1zM459 260h1v1h-1zM464 260h1v1h-1zM469 260h1v1h-1zM474 260h1v1h-1zM479 260h1v1h-1zM484 260h1v1h-1zM489 260h1v1h-1zM494 260h1v1h-1zM499 260h1v1h-1zM504 260h1v1h-1zM509 260h1v1h-1zM514 260h1v1h-1zM519 260h1v1h-1zM524 260h1v1h-1zM529 260h1v1h-1zM534 260h1v1h-1zM539 260h1v1h-1zM544 260h1v1h-1zM549 260h1v1h-1zM554 260h1v1h-1zM559 260h1v1h-1zM564 260h1v1h-1zM569 260h1v1h-1zM574 260h1v1h-1zM579 260h1v1h-1zM584 260h1v1h-1zM589 260h1v1h-1zM594 260h1v1h-1zM599 260h1v1h-1zM604 260h1v1h-1zM609 260h1v1h-1zM614 260h1v1h-1zM619 260h1v1h-1zM624 260h1v1h-1zM629 260h1v1h-1zM634 260h1v1h-1zM639 260h1v1h-1zM644 260h1v1h-1zM649 260h1v1h-1zM654 260h1v1h-1zM659 260h1v1h-1zM664 260h1v1h-1zM669 260h1v1h-1zM674 260h1v1h-1zM679 260h1v1h-1zM684 260h1v1h-1zM689 260h1v1h-1zM694 260h1v1h-1zM699 260h1v1h-1zM704 260h1v1h-1zM709 260h1v1h-1zM714 260h1v1h-1zM719 260h1v1h-1zM724 260h1v1h-1zM729 260h1v1h-1zM734 260h1v1h-1zM739 260h1v1h-1zM744 260h1v1h-1zM749 260h1v1h-1zM754 260h1v1h-1zM759 260h1v1h-1zM764 260h1v1h-1zM769 260h1v1h-1zM774 260h1v1h-1z" fill="#3a3a48"/><defs><linearGradient id="gy" gradientUnits="userSpaceOnUse" x1="0" y1="55.5" x2="0" y2="158"><stop offset="0" stop-color="#f4f428"/><stop offset="0.18" stop-color="#f4f428"/><stop offset="0.32" stop-color="#d2d218"/><stop offset="0.68" stop-color="#d2d218"/><stop offset="0.82" stop-color="#f4f428"/><stop offset="1" stop-color="#f4f428"/></linearGradient></defs><polyline points="799.0,103.4 800.0,102.7 801.0,101.9 802.0,101.1 803.0,100.4 804.0,99.7 805.0,98.9 806.0,98.2 807.0,97.5 808.0,96.8 809.0,96.1 810.0,95.5 811.0,94.8 812.0,94.2 813.0,93.5 814.0,92.9 815.0,92.3 816.0,91.8 817.0,91.2 818.0,90.7 819.0,90.1 820.0,89.6 821.0,89.1 822.0,88.7 823.0,88.2 824.0,87.8 825.0,87.4 826.0,87.0 827.0,87.4 828.0,87.8 829.0,88.2 830.0,88.7 831.0,89.1 832.0,89.6 833.0,90.1 834.0,90.7 835.0,91.2 836.0,91.8 837.0,92.3 838.0,92.9 839.0,93.5 840.0,94.2 841.0,94.8 842.0,95.5 843.0,96.1 844.0,96.8 845.0,97.5 846.0,98.2 847.0,98.9 848.0,99.7 849.0,100.4 850.0,101.1 851.0,101.9 852.0,102.7 853.0,103.4 854.0,104.2 855.0,105.0 856.0,105.7 857.0,106.5 858.0,107.3 859.0,108.0 860.0,108.8 861.0,109.6 862.0,110.3 863.0,111.1 864.0,111.9 865.0,112.6 866.0,113.3 867.0,114.1 868.0,114.8 869.0,115.5 870.0,116.2 871.0,116.9 872.0,117.5 873.0,118.2 874.0,118.8 875.0,119.5 876.0,120.1 877.0,120.7 878.0,121.2 879.0,121.8 880.0,122.3 881.0,122.9 882.0,123.4 883.0,123.9 884.0,124.3 885.0,124.8 886.0,125.2 887.0,125.6 888.0,126.0 889.0,125.6 890.0,125.2 891.0,124.8 892.0,124.3 893.0,123.9 894.0,123.4 895.0,122.9 896.0,122.3 897.0,121.8 898.0,121.2 899.0,120.7 900.0,120.1 901.0,119.5 902.0,118.8 903.0,118.2 904.0,117.5 905.0,116.9 906.0,116.2 907.0,115.5 908.0,114.8 909.0,114.1 910.0,113.3 911.0,112.6 912.0,111.9 913.0,111.1 914.0,110.3 915.0,109.6 916.0,108.8 917.0,108.0 918.0,107.3 919.0,106.5 920.0,105.7 921.0,105.0 922.0,104.2 923.0,103.4 924.0,102.7 925.0,101.9 926.0,101.1 927.0,100.4 928.0,99.7 929.0,98.9 930.0,98.2 931.0,97.5 932.0,96.8 933.0,96.1 934.0,95.5 935.0,94.8 936.0,94.2 937.0,93.5 938.0,92.9 939.0,92.3 940.0,91.8 941.0,91.2 942.0,90.7 943.0,90.1 944.0,89.6 945.0,89.1 946.0,88.7 947.0,88.2 948.0,87.8 949.0,87.4 950.0,87.0 951.0,87.4 952.0,87.8 953.0,88.2 954.0,88.7 955.0,89.1 956.0,89.6 957.0,90.1 958.0,90.7 959.0,91.2 960.0,91.8 961.0,92.3 962.0,92.9 963.0,93.5 964.0,94.2 965.0,94.8 966.0,95.5 967.0,96.1 968.0,96.8 969.0,97.5 970.0,98.2 971.0,98.9 972.0,99.7 973.0,100.4 974.0,101.1 975.0,101.9 976.0,102.7 977.0,103.4 978.0,104.2 979.0,105.0 980.0,105.7 981.0,106.5 982.0,107.3 983.0,108.0 984.0,108.8 985.0,109.6 986.0,110.3 987.0,111.1 988.0,111.9 989.0,112.6 990.0,113.3 991.0,114.1 992.0,114.8 993.0,115.5 994.0,116.2 995.0,116.9 996.0,117.5 997.0,118.2 998.0,118.8 999.0,119.5 1000.0,120.1 1001.0,120.7 1002.0,121.2 1003.0,121.8 1004.0,122.3 1005.0,122.9 1006.0,123.4 1007.0,123.9 1008.0,124.3 1009.0,124.8 1010.0,125.2 1011.0,125.6 1012.0,126.0 1013.0,125.6 1014.0,125.2 1015.0,124.8 1016.0,124.3 1017.0,123.9" fill="none" stroke="#606008" stroke-width="9"/><path d="M781,111C783,138.0 785.0,156 786.2,156C787.4000000000001,156 789.2,66.9 791.2,57" fill="none" stroke="#eeee30" stroke-width="1.7"/><polyline points="791.2,57 795.1,153 797.7,57 800,156" fill="none" stroke="#eeee30" stroke-width="1.3" stroke-linejoin="miter" stroke-miterlimit="8"/><path d="M800 62.7h1V151.7h-1zM803 61.4h1V153.4h-1zM806 61.1h1V151.9h-1zM809 62.5h1V150.2h-1zM812 62.3h1V152.8h-1zM815 60.7h1V152.7h-1zM818 61.4h1V150.9h-1zM821 61.0h1V153.6h-1zM824 60.3h1V151.5h-1zM827 62.4h1V153.1h-1zM830 62.2h1V150.7h-1zM833 63.0h1V153.6h-1zM836 61.4h1V153.4h-1zM839 63.0h1V152.9h-1zM842 62.0h1V153.2h-1zM845 62.5h1V151.7h-1zM848 62.9h1V153.3h-1zM851 61.9h1V150.1h-1zM854 59.7h1V152.5h-1zM857 60.4h1V150.6h-1zM860 61.5h1V150.6h-1zM863 60.4h1V151.8h-1zM866 62.2h1V152.5h-1zM869 62.2h1V151.9h-1zM872 61.5h1V153.5h-1zM875 62.6h1V152.4h-1zM878 60.3h1V151.0h-1zM881 63.1h1V152.4h-1zM884 61.4h1V153.6h-1zM887 61.8h1V151.0h-1zM890 62.5h1V150.7h-1zM893 61.4h1V152.6h-1zM896 60.8h1V151.5h-1zM899 61.3h1V152.4h-1zM902 60.2h1V151.9h-1zM905 60.8h1V153.2h-1zM908 60.1h1V152.9h-1zM911 61.6h1V150.3h-1zM914 62.2h1V150.5h-1zM917 61.6h1V150.5h-1zM920 60.2h1V150.9h-1zM923 59.5h1V153.7h-1zM926 60.4h1V151.3h-1zM929 62.3h1V152.8h-1zM932 61.5h1V150.9h-1zM935 61.3h1V150.5h-1zM938 59.5h1V152.6h-1zM941 61.7h1V151.3h-1zM944 61.7h1V151.8h-1zM947 62.2h1V151.5h-1zM950 59.6h1V151.9h-1zM953 62.1h1V152.4h-1zM956 59.8h1V150.5h-1zM959 60.0h1V153.5h-1zM962 60.6h1V152.5h-1zM965 61.4h1V151.4h-1zM968 62.7h1V152.3h-1zM971 60.6h1V150.5h-1zM974 60.2h1V151.5h-1zM977 60.0h1V151.5h-1zM980 61.2h1V151.1h-1zM983 62.1h1V151.3h-1zM986 61.8h1V151.2h-1zM989 61.2h1V150.3h-1zM992 59.5h1V150.6h-1zM995 60.6h1V153.2h-1zM998 62.8h1V153.2h-1zM1001 62.7h1V150.8h-1zM1004 61.9h1V151.8h-1zM1007 63.2h1V150.4h-1zM1010 60.8h1V153.5h-1zM1013 63.3h1V151.9h-1zM1016 62.8h1V151.0h-1zM1019 63.0h1V152.0h-1z" fill="url(#gy)" opacity="0.85"/><path d="M799 54.8L800.2 63.8V149.1L799 158.1zM802 54.9L803.2 63.9V148.3L802 157.3zM805 57.4L806.2 66.4V149.5L805 158.5zM808 56.2L809.2 65.2V147.7L808 156.7zM811 55.6L812.2 64.6V147.4L811 156.4zM814 54.5L815.2 63.5V146.1L814 155.1zM817 58.1L818.2 67.1V147.7L817 156.7zM820 54.6L821.2 63.6V147.2L820 156.2zM823 57.1L824.2 66.1V146.3L823 155.3zM826 55.7L827.2 64.7V147.0L826 156.0zM829 57.8L830.2 66.8V147.4L829 156.4zM832 56.2L833.2 65.2V147.0L832 156.0zM835 57.9L836.2 66.9V148.4L835 157.4zM838 57.3L839.2 66.3V148.8L838 157.8zM841 56.7L842.2 65.7V148.4L841 157.4zM844 55.2L845.2 64.2V147.0L844 156.0zM847 58.2L848.2 67.2V149.2L847 158.2zM850 58.4L851.2 67.4V147.5L850 156.5zM853 57.6L854.2 66.6V146.8L853 155.8zM856 54.8L857.2 63.8V149.2L856 158.2zM859 55.0L860.2 64.0V148.8L859 157.8zM862 58.4L863.2 67.4V147.2L862 156.2zM865 57.3L866.2 66.3V149.8L865 158.8zM868 56.9L869.2 65.9V147.3L868 156.3zM871 56.7L872.2 65.7V149.2L871 158.2zM874 56.4L875.2 65.4V147.9L874 156.9zM877 54.6L878.2 63.6V147.9L877 156.9zM880 56.1L881.2 65.1V148.5L880 157.5zM883 55.9L884.2 64.9V148.6L883 157.6zM886 56.7L887.2 65.7V146.3L886 155.3zM889 58.3L890.2 67.3V146.6L889 155.6zM892 57.8L893.2 66.8V149.0L892 158.0zM895 55.5L896.2 64.5V147.7L895 156.7zM898 56.8L899.2 65.8V149.6L898 158.6zM901 57.3L902.2 66.3V149.6L901 158.6zM904 56.1L905.2 65.1V147.3L904 156.3zM907 58.2L908.2 67.2V149.0L907 158.0zM910 55.9L911.2 64.9V149.1L910 158.1zM913 55.0L914.2 64.0V148.3L913 157.3zM916 58.5L917.2 67.5V149.4L916 158.4zM919 54.7L920.2 63.7V147.6L919 156.6zM922 58.3L923.2 67.3V147.8L922 156.8zM925 56.2L926.2 65.2V146.6L925 155.6zM928 56.1L929.2 65.1V148.9L928 157.9zM931 56.0L932.2 65.0V146.9L931 155.9zM934 56.6L935.2 65.6V149.4L934 158.4zM937 56.8L938.2 65.8V146.1L937 155.1zM940 57.6L941.2 66.6V147.3L940 156.3zM943 58.0L944.2 67.0V147.3L943 156.3zM946 57.2L947.2 66.2V148.7L946 157.7zM949 57.6L950.2 66.6V148.1L949 157.1zM952 57.9L953.2 66.9V147.4L952 156.4zM955 55.9L956.2 64.9V147.1L955 156.1zM958 58.0L959.2 67.0V146.2L958 155.2zM961 58.1L962.2 67.1V148.4L961 157.4zM964 57.1L965.2 66.1V149.4L964 158.4zM967 57.4L968.2 66.4V150.0L967 159.0zM970 56.2L971.2 65.2V147.8L970 156.8zM973 55.3L974.2 64.3V147.8L973 156.8zM976 58.1L977.2 67.1V146.5L976 155.5zM979 58.1L980.2 67.1V149.2L979 158.2zM982 57.5L983.2 66.5V148.2L982 157.2zM985 55.9L986.2 64.9V147.4L985 156.4zM988 56.5L989.2 65.5V148.7L988 157.7zM991 55.3L992.2 64.3V149.4L991 158.4zM994 58.5L995.2 67.5V149.1L994 158.1zM997 56.9L998.2 65.9V148.1L997 157.1zM1000 58.0L1001.2 67.0V148.1L1000 157.1zM1003 58.1L1004.2 67.1V148.0L1003 157.0zM1006 55.3L1007.2 64.3V148.0L1006 157.0zM1009 54.6L1010.2 63.6V147.3L1009 156.3zM1012 55.1L1013.2 64.1V146.8L1012 155.8zM1015 56.0L1016.2 65.0V148.0L1015 157.0zM1018 54.8L1019.2 63.8V149.1L1018 158.1z" fill="url(#gy)"/><defs><pattern id="spgy" width="9" height="11" patternUnits="userSpaceOnUse"><path d="M0 0h1v1h-1zM0 1h1v1h-1zM0 2h1v1h-1zM0 5h1v1h-1zM0 6h1v1h-1zM1 3h1v1h-1zM1 4h1v1h-1zM1 5h1v1h-1zM1 6h1v1h-1zM1 9h1v1h-1zM1 10h1v1h-1zM2 2h1v1h-1zM2 4h1v1h-1zM2 5h1v1h-1zM2 6h1v1h-1zM2 7h1v1h-1zM2 9h1v1h-1zM2 10h1v1h-1zM3 2h1v1h-1zM3 3h1v1h-1zM3 5h1v1h-1zM3 9h1v1h-1zM3 10h1v1h-1zM4 0h1v1h-1zM4 4h1v1h-1zM4 5h1v1h-1zM4 6h1v1h-1zM4 10h1v1h-1zM5 1h1v1h-1zM5 3h1v1h-1zM5 4h1v1h-1zM5 7h1v1h-1zM5 10h1v1h-1zM6 0h1v1h-1zM6 2h1v1h-1zM6 8h1v1h-1zM6 9h1v1h-1zM6 10h1v1h-1zM7 1h1v1h-1zM7 4h1v1h-1zM7 7h1v1h-1zM8 0h1v1h-1zM8 5h1v1h-1zM8 9h1v1h-1z" fill="#000" opacity="0.22"/></pattern></defs><rect x="799" y="55.5" width="218" height="102.5" fill="url(#spgy)"/><defs><linearGradient id="gg" gradientUnits="userSpaceOnUse" x1="0" y1="208" x2="0" y2="304"><stop offset="0" stop-color="#3cf03c"/><stop offset="0.18" stop-color="#3cf03c"/><stop offset="0.32" stop-color="#2ac42a"/><stop offset="0.68" stop-color="#2ac42a"/><stop offset="0.82" stop-color="#3cf03c"/><stop offset="1" stop-color="#3cf03c"/></linearGradient></defs><polyline points="799.0,244.6 800.0,246.1 801.0,247.7 802.0,249.2 803.0,250.7 804.0,252.3 805.0,253.8 806.0,255.3 807.0,256.9 808.0,258.4 809.0,259.9 810.0,261.4 811.0,263.0 812.0,264.5 813.0,266.0 814.0,267.6 815.0,269.1 816.0,270.6 817.0,272.2 818.0,273.7 819.0,275.2 820.0,275.2 821.0,273.7 822.0,272.2 823.0,270.6 824.0,269.1 825.0,267.6 826.0,266.0 827.0,264.5 828.0,263.0 829.0,261.4 830.0,259.9 831.0,258.4 832.0,256.9 833.0,255.3 834.0,253.8 835.0,252.3 836.0,250.7 837.0,249.2 838.0,247.7 839.0,246.1 840.0,244.6 841.0,243.1 842.0,241.5 843.0,240.0 844.0,241.5 845.0,243.1 846.0,244.6 847.0,246.1 848.0,247.7 849.0,249.2 850.0,250.7 851.0,252.3 852.0,253.8 853.0,255.3 854.0,256.9 855.0,258.4 856.0,259.9 857.0,261.4 858.0,263.0 859.0,264.5 860.0,266.0 861.0,267.6 862.0,269.1 863.0,270.6 864.0,272.2 865.0,273.7 866.0,275.2 867.0,275.2 868.0,273.7 869.0,272.2 870.0,270.6 871.0,269.1 872.0,267.6 873.0,266.0 874.0,264.5 875.0,263.0 876.0,261.4 877.0,259.9 878.0,258.4 879.0,256.9 880.0,255.3 881.0,253.8 882.0,252.3 883.0,250.7 884.0,249.2 885.0,247.7 886.0,246.1 887.0,244.6 888.0,243.1 889.0,241.5 890.0,240.0 891.0,241.5 892.0,243.1 893.0,244.6 894.0,246.1 895.0,247.7 896.0,249.2 897.0,250.7 898.0,252.3 899.0,253.8 900.0,255.3 901.0,256.9 902.0,258.4 903.0,259.9 904.0,261.4 905.0,263.0 906.0,264.5 907.0,266.0 908.0,267.6 909.0,269.1 910.0,270.6 911.0,272.2 912.0,273.7 913.0,275.2 914.0,275.2 915.0,273.7 916.0,272.2 917.0,270.6 918.0,269.1 919.0,267.6 920.0,266.0 921.0,264.5 922.0,263.0 923.0,261.4 924.0,259.9 925.0,258.4 926.0,256.9 927.0,255.3 928.0,253.8 929.0,252.3 930.0,250.7 931.0,249.2 932.0,247.7 933.0,246.1 934.0,244.6 935.0,243.1 936.0,241.5 937.0,240.0 938.0,241.5 939.0,243.1 940.0,244.6 941.0,246.1 942.0,247.7 943.0,249.2 944.0,250.7 945.0,252.3 946.0,253.8 947.0,255.3 948.0,256.9 949.0,258.4 950.0,259.9 951.0,261.4 952.0,263.0 953.0,264.5 954.0,266.0 955.0,267.6 956.0,269.1 957.0,270.6 958.0,272.2 959.0,273.7 960.0,275.2 961.0,275.2 962.0,273.7 963.0,272.2 964.0,270.6 965.0,269.1 966.0,267.6 967.0,266.0 968.0,264.5 969.0,263.0 970.0,261.4 971.0,259.9 972.0,258.4 973.0,256.9 974.0,255.3 975.0,253.8 976.0,252.3 977.0,250.7 978.0,249.2 979.0,247.7 980.0,246.1 981.0,244.6 982.0,243.1 983.0,241.5 984.0,240.0 985.0,241.5 986.0,243.1 987.0,244.6 988.0,246.1 989.0,247.7 990.0,249.2 991.0,250.7 992.0,252.3 993.0,253.8 994.0,255.3 995.0,256.9 996.0,258.4 997.0,259.9 998.0,261.4 999.0,263.0 1000.0,264.5 1001.0,266.0 1002.0,267.6 1003.0,269.1 1004.0,270.6 1005.0,272.2 1006.0,273.7 1007.0,275.2 1008.0,275.2 1009.0,273.7 1010.0,272.2 1011.0,270.6 1012.0,269.1 1013.0,267.6 1014.0,266.0 1015.0,264.5 1016.0,263.0 1017.0,261.4" fill="none" stroke="#0e520e" stroke-width="8"/><path d="M781,258C783,279.6 784.8,294 786,294C787.2,294 789,212.1 791,203" fill="none" stroke="#40f040" stroke-width="1.8"/><polyline points="791,203 795,300 798,206 800.5,302" fill="none" stroke="#40f040" stroke-width="1.3" stroke-linejoin="miter" stroke-miterlimit="8"/><path d="M800 215.9h1V299.7h-1zM803 215.2h1V299.3h-1zM806 215.6h1V298.1h-1zM809 215.9h1V298.5h-1zM812 212.7h1V297.6h-1zM815 214.7h1V299.5h-1zM818 214.0h1V296.2h-1zM821 214.1h1V297.4h-1zM824 213.1h1V296.3h-1zM827 213.9h1V299.1h-1zM830 212.8h1V298.2h-1zM833 212.9h1V296.1h-1zM836 215.0h1V299.8h-1zM839 215.3h1V298.9h-1zM842 215.9h1V298.3h-1zM845 215.6h1V298.4h-1zM848 212.4h1V298.4h-1zM851 212.9h1V299.7h-1zM854 213.0h1V298.0h-1zM857 214.1h1V297.2h-1zM860 213.5h1V298.0h-1zM863 214.3h1V297.5h-1zM866 212.3h1V298.5h-1zM869 214.7h1V298.1h-1zM872 215.7h1V297.6h-1zM875 214.8h1V298.7h-1zM878 213.5h1V297.0h-1zM881 213.2h1V298.3h-1zM884 215.3h1V297.5h-1zM887 214.0h1V296.4h-1zM890 215.4h1V298.6h-1zM893 214.1h1V297.5h-1zM896 215.6h1V296.1h-1zM899 214.5h1V296.9h-1zM902 212.3h1V296.2h-1zM905 212.9h1V297.9h-1zM908 214.8h1V296.7h-1zM911 213.5h1V296.3h-1zM914 215.1h1V299.7h-1zM917 213.3h1V297.4h-1zM920 215.5h1V298.3h-1zM923 213.1h1V298.1h-1zM926 214.5h1V296.9h-1zM929 212.3h1V297.5h-1zM932 216.0h1V298.0h-1zM935 215.9h1V299.3h-1zM938 213.6h1V299.5h-1zM941 215.0h1V299.5h-1zM944 215.6h1V299.5h-1zM947 214.2h1V297.3h-1zM950 215.3h1V299.1h-1zM953 215.7h1V297.2h-1zM956 212.4h1V296.5h-1zM959 212.9h1V298.1h-1zM962 213.2h1V298.1h-1zM965 215.5h1V298.0h-1zM968 216.0h1V297.1h-1zM971 215.8h1V296.3h-1zM974 213.0h1V297.5h-1zM977 213.3h1V296.6h-1zM980 213.3h1V299.9h-1zM983 212.7h1V299.0h-1zM986 214.6h1V297.8h-1zM989 212.1h1V298.5h-1zM992 214.9h1V300.0h-1zM995 213.3h1V296.9h-1zM998 213.6h1V298.3h-1zM1001 215.6h1V296.2h-1zM1004 214.3h1V296.6h-1zM1007 215.0h1V297.5h-1zM1010 213.0h1V299.8h-1zM1013 215.6h1V297.9h-1zM1016 215.2h1V296.5h-1zM1019 215.8h1V298.2h-1z" fill="url(#gg)" opacity="0.7"/><path d="M799 210.8L800.2 219.8V294.0L799 303.0zM802 209.4L803.2 218.4V294.5L802 303.5zM805 210.5L806.2 219.5V293.8L805 302.8zM808 208.7L809.2 217.7V292.8L808 301.8zM811 210.9L812.2 219.9V292.3L811 301.3zM814 209.8L815.2 218.8V292.2L814 301.2zM817 209.0L818.2 218.0V294.0L817 303.0zM820 208.4L821.2 217.4V295.1L820 304.1zM823 210.8L824.2 219.8V293.7L823 302.7zM826 209.0L827.2 218.0V293.3L826 302.3zM829 209.8L830.2 218.8V292.9L829 301.9zM832 208.4L833.2 217.4V295.3L832 304.3zM835 210.5L836.2 219.5V294.5L835 303.5zM838 210.7L839.2 219.7V293.9L838 302.9zM841 208.5L842.2 217.5V294.6L841 303.6zM844 209.0L845.2 218.0V292.2L844 301.2zM847 208.2L848.2 217.2V292.8L847 301.8zM850 210.5L851.2 219.5V292.3L850 301.3zM853 210.2L854.2 219.2V293.5L853 302.5zM856 207.3L857.2 216.3V293.2L856 302.2zM859 207.4L860.2 216.4V293.4L859 302.4zM862 208.3L863.2 217.3V293.5L862 302.5zM865 207.3L866.2 216.3V295.1L865 304.1zM868 208.9L869.2 217.9V295.6L868 304.6zM871 209.0L872.2 218.0V293.6L871 302.6zM874 207.4L875.2 216.4V295.4L874 304.4zM877 210.0L878.2 219.0V294.0L877 303.0zM880 207.7L881.2 216.7V294.9L880 303.9zM883 210.6L884.2 219.6V292.7L883 301.7zM886 207.0L887.2 216.0V294.9L886 303.9zM889 208.5L890.2 217.5V293.8L889 302.8zM892 210.0L893.2 219.0V293.6L892 302.6zM895 208.9L896.2 217.9V295.5L895 304.5zM898 210.3L899.2 219.3V294.6L898 303.6zM901 207.2L902.2 216.2V292.8L901 301.8zM904 208.0L905.2 217.0V292.1L904 301.1zM907 210.3L908.2 219.3V292.0L907 301.0zM910 208.6L911.2 217.6V293.0L910 302.0zM913 210.1L914.2 219.1V294.5L913 303.5zM916 210.7L917.2 219.7V293.2L916 302.2zM919 210.1L920.2 219.1V293.5L919 302.5zM922 208.3L923.2 217.3V294.5L922 303.5zM925 210.0L926.2 219.0V292.5L925 301.5zM928 210.9L929.2 219.9V293.4L928 302.4zM931 207.1L932.2 216.1V293.3L931 302.3zM934 210.7L935.2 219.7V295.9L934 304.9zM937 210.4L938.2 219.4V294.8L937 303.8zM940 207.1L941.2 216.1V293.0L940 302.0zM943 209.5L944.2 218.5V295.0L943 304.0zM946 209.4L947.2 218.4V292.4L946 301.4zM949 210.2L950.2 219.2V293.2L949 302.2zM952 210.6L953.2 219.6V294.0L952 303.0zM955 209.9L956.2 218.9V292.2L955 301.2zM958 208.2L959.2 217.2V292.7L958 301.7zM961 207.6L962.2 216.6V292.8L961 301.8zM964 210.2L965.2 219.2V294.5L964 303.5zM967 210.8L968.2 219.8V292.9L967 301.9zM970 208.3L971.2 217.3V293.9L970 302.9zM973 208.0L974.2 217.0V295.0L973 304.0zM976 207.8L977.2 216.8V293.2L976 302.2zM979 208.0L980.2 217.0V292.3L979 301.3zM982 207.6L983.2 216.6V292.7L982 301.7zM985 211.0L986.2 220.0V294.3L985 303.3zM988 208.9L989.2 217.9V292.4L988 301.4zM991 208.8L992.2 217.8V293.3L991 302.3zM994 207.4L995.2 216.4V295.0L994 304.0zM997 210.0L998.2 219.0V292.3L997 301.3zM1000 207.6L1001.2 216.6V292.4L1000 301.4zM1003 209.9L1004.2 218.9V292.5L1003 301.5zM1006 208.3L1007.2 217.3V293.0L1006 302.0zM1009 210.4L1010.2 219.4V293.3L1009 302.3zM1012 208.3L1013.2 217.3V295.2L1012 304.2zM1015 209.9L1016.2 218.9V292.3L1015 301.3zM1018 209.2L1019.2 218.2V293.0L1018 302.0z" fill="url(#gg)"/><defs><pattern id="spgg" width="9" height="11" patternUnits="userSpaceOnUse"><path d="M0 2h1v1h-1zM0 3h1v1h-1zM0 10h1v1h-1zM1 3h1v1h-1zM1 6h1v1h-1zM1 10h1v1h-1zM2 1h1v1h-1zM2 4h1v1h-1zM3 0h1v1h-1zM3 5h1v1h-1zM3 6h1v1h-1zM3 7h1v1h-1zM3 9h1v1h-1zM4 5h1v1h-1zM5 2h1v1h-1zM5 5h1v1h-1zM5 7h1v1h-1zM5 10h1v1h-1zM6 6h1v1h-1zM6 7h1v1h-1zM7 8h1v1h-1zM7 10h1v1h-1zM8 1h1v1h-1zM8 4h1v1h-1zM8 6h1v1h-1zM8 7h1v1h-1zM8 10h1v1h-1z" fill="#000" opacity="0.22"/></pattern></defs><rect x="799" y="208" width="218" height="96" fill="url(#spgg)"/><polyline points="20,425.4 21,425.5 22,425.7 23,425.7 24,425.6 25,425.8 26,426.6 27,428.9 28,430.0 29,430.0 30,430.0 31,429.9 32,430.3 33,429.6 34,426.5 35,425.7 36,425.9 37,425.7 38,424.9 39,424.1 40,424.1 41,424.3 42,424.9 43,424.2 44,424.1 45,424.2 46,423.7 47,423.2 48,423.5 49,423.6 50,423.4 51,424.0 52,427.1 53,428.7 54,428.9 55,428.7 56,428.7 57,428.7 58,429.2 59,429.0 60,429.0 61,429.4 62,429.1 63,429.3 64,428.5 65,425.8 66,425.0 67,425.2 68,425.4 69,425.4 70,425.3 71,425.1 72,424.7 73,424.7 74,424.1 75,423.8 76,424.4 77,425.2 78,425.8 79,426.7 80,429.6 81,430.2 82,430.2 83,429.9 84,428.6 85,428.1 86,427.7 87,427.2 88,426.8 89,426.5 90,426.9 91,427.3 92,427.8 93,427.7 94,426.1 95,424.4 96,424.0 97,423.7 98,423.3 99,423.3 100,424.2 101,424.1 102,423.4 103,423.3 104,422.8 105,422.8 106,422.5 107,422.7 108,423.2 109,423.9 110,423.7 111,424.8 112,427.8 113,428.6 114,428.7 115,429.9 116,431.0 117,426.3 118,424.3 119,424.3 120,424.7 121,425.0 122,425.6 123,425.6 124,425.0 125,424.4 126,424.7 127,425.2 128,425.7 129,426.0 130,428.6 131,429.9 132,430.6 133,431.9 134,429.8 135,429.0 136,428.4 137,425.3 138,424.5 139,424.4 140,424.3 141,424.4 142,424.5 143,424.4 144,424.9 145,424.4 146,424.6 147,426.6 148,430.3 149,431.1 150,430.7 151,430.1 152,430.5 153,431.0 154,430.5 155,429.9 156,429.9 157,429.4 158,428.6 159,428.6 160,429.0 161,429.2 162,429.0 163,429.8 164,430.6 165,430.3 166,429.8 167,429.0 168,425.9 169,424.1 170,423.8 171,424.8 172,424.5 173,424.1 174,425.0 175,425.5 176,425.8 177,425.6 178,425.4 179,425.4 180,425.1 181,426.1 182,429.0 183,429.3 184,429.8 185,430.6 186,430.8 187,428.9 188,424.8 189,423.4 190,423.4 191,423.5 192,424.0 193,424.3 194,424.5 195,424.3 196,425.5 197,425.9 198,425.7 199,426.0 200,426.3 201,427.1 202,429.5 203,430.0 204,430.3 205,430.3 206,430.2 207,429.6 208,427.9 209,425.4 210,424.6 211,425.0 212,425.3 213,425.4 214,424.4 215,422.8 216,422.8 217,423.6 218,423.9 219,424.4 220,423.8 221,422.0 222,422.8 223,423.6 224,423.6 225,424.4 226,427.3 227,428.3 228,428.4 229,428.4 230,428.1 231,428.0 232,428.1 233,428.2 234,428.5 235,430.0 236,430.3 237,429.5 238,428.9 239,429.6 240,430.6 241,430.7 242,430.9 243,430.3 244,429.9 245,429.6 246,428.5 247,425.8 248,425.0 249,425.1 250,425.1 251,425.0 252,424.5 253,424.8 254,424.6 255,424.4 256,424.6 257,424.6 258,424.3 259,424.3 260,424.3 261,424.6 262,424.7 263,424.5 264,423.0 265,424.3 266,424.8 267,425.6 268,428.3 269,428.5 270,429.5 271,433.6 272,431.8 273,431.0 274,430.9 275,429.8 276,429.3 277,429.3 278,429.7 279,429.5 280,429.1 281,429.0 282,428.2 283,425.4 284,423.7 285,423.8 286,423.9 287,423.4 288,423.6 289,424.3 290,424.9 291,424.5 292,424.8 293,424.6 294,424.7 295,424.9 296,424.3 297,423.9 298,424.2 299,424.4 300,424.6 301,425.0 302,427.9 303,429.9 304,429.8 305,429.6 306,429.7 307,430.4 308,430.4 309,429.8 310,429.7 311,429.9 312,429.2 313,426.4 314,425.1 315,425.1 316,426.1 317,425.8 318,425.3 319,425.9 320,428.5 321,429.9 322,430.6 323,430.6 324,430.8 325,430.3 326,429.7 327,429.6 328,429.8 329,429.7 330,430.2 331,430.3 332,428.9 333,425.8 334,425.2 335,425.6 336,425.8 337,425.6 338,425.1 339,425.6 340,426.9 341,427.7 342,429.1 343,429.9 344,431.5 345,435.4 346,437.6 347,438.4 348,439.5 349,439.8 350,439.7 351,440.1 352,440.7 353,440.9 354,440.8 355,439.4 356,438.7 357,438.4 358,438.5 359,438.6 360,437.5 361,434.1 362,432.8 363,433.0 364,432.7 365,432.5 366,432.7 367,433.1 368,433.2 369,433.3 370,433.5 371,434.9 372,435.0 373,434.9 374,435.6 375,435.4 376,434.9 377,435.0 378,435.8 379,436.1 380,435.6 381,436.2 382,439.3 383,440.8 384,440.9 385,441.0 386,440.2 387,438.9 388,437.3 389,438.8 390,439.1 391,435.8 392,434.5 393,434.0 394,433.7 395,433.1 396,432.6 397,432.7 398,433.6 399,434.0 400,434.1 401,433.8 402,433.7 403,433.2 404,433.0 405,432.7 406,432.9 407,433.2 408,433.8 409,435.0 410,438.3 411,439.3 412,439.1 413,439.9 414,441.3 415,441.3 416,439.8 417,436.3 418,434.9 419,435.3 420,435.8 421,435.6 422,434.9 423,434.8 424,434.7 425,434.4 426,434.7 427,437.9 428,439.2 429,439.3 430,439.3 431,439.5 432,439.9 433,440.1 434,439.3 435,438.0 436,437.0 437,437.9 438,438.4 439,438.5 440,438.1 441,438.5 442,438.2 443,438.0 444,437.2 445,434.3 446,433.1 447,433.2 448,432.9 449,432.6 450,432.0 451,432.2 452,432.8 453,434.0 454,438.0 455,440.0 456,439.5 457,439.3 458,439.7 459,439.8 460,439.9 461,440.0 462,440.2 463,440.3 464,439.9 465,439.9 466,440.6 467,440.7 468,441.6 469,441.1 470,438.1 471,436.8 472,436.7 473,436.4 474,434.8 475,435.1 476,435.3 477,434.8 478,434.2 479,433.6 480,433.6 481,435.5 482,438.9 483,439.8 484,439.7 485,439.7 486,439.8 487,439.4 488,439.3 489,439.4 490,439.5 491,439.4 492,439.7 493,439.7 494,438.8 495,435.1 496,433.9 497,433.8 498,433.8 499,434.3 500,435.3 501,435.6 502,436.1 503,436.1 504,436.1 505,436.0 506,435.8 507,435.7 508,434.9 509,434.4 510,433.7 511,434.1 512,435.0 513,434.6 514,435.2 515,436.5 516,438.1 517,437.0 518,438.4 519,439.0 520,439.1 521,439.6 522,439.5 523,439.9 524,440.3 525,440.1 526,439.5 527,439.8 528,439.8 529,439.8 530,439.4 531,439.4 532,439.1 533,435.3 534,432.6 535,433.9 536,434.3 537,433.8 538,433.6 539,433.8 540,433.6 541,434.1 542,434.1 543,433.9 544,434.8 545,435.3 546,435.1 547,435.0 548,435.0 549,434.6 550,434.8 551,434.7 552,436.1 553,439.3 554,440.1 555,440.5 556,440.4 557,440.7 558,440.4 559,440.1 560,440.5 561,440.4 562,440.4 563,441.4 564,443.3 565,446.0 566,441.4 567,436.5 568,435.1 569,435.6 570,436.8 571,435.1 572,434.5 573,434.1 574,434.1 575,434.2 576,433.8 577,434.1 578,434.2 579,434.1 580,434.8 581,434.5 582,434.3 583,434.8 584,435.1 585,434.9 586,435.1 587,436.6 588,440.1 589,440.8 590,441.2 591,441.0 592,441.4 593,442.0 594,441.0 595,440.7 596,440.6 597,440.4 598,439.8 599,440.4 600,441.8 601,440.2 602,439.2 603,439.1 604,439.2 605,438.9 606,439.0 607,439.4 608,438.1 609,434.2 610,433.6 611,434.3 612,435.4 613,435.5 614,435.1 615,436.6 616,440.0 617,441.0 618,440.5 619,440.6 620,440.7 621,441.1 622,440.7 623,438.1 624,434.2 625,433.2 626,432.9 627,433.1 628,433.6 629,434.0 630,435.3 631,435.5 632,435.4 633,436.7 634,440.1 635,441.1 636,440.9 637,441.3 638,440.9 639,440.2 640,440.1 641,439.8 642,439.6 643,439.8 644,439.5 645,440.2 646,440.6 647,439.7 648,436.4 649,435.5 650,435.6 651,435.5 652,435.4 653,435.1 654,434.1 655,433.8 656,433.8 657,433.8 658,433.7 659,433.7 660,433.1 661,434.0 662,434.2 663,433.9 664,434.0 665,434.0 666,434.7 667,438.3 668,440.3 669,440.3 670,440.5 671,440.8 672,440.5 673,440.7 674,440.8 675,439.8 676,439.6 677,439.7 678,439.5 679,438.0 680,434.3 681,433.4 682,434.2 683,434.4 684,433.8 685,434.2 686,434.1 687,433.8 688,434.2 689,434.2 690,434.0 691,433.5 692,433.3 693,433.5 694,433.6 695,433.6 696,432.8 697,434.1 698,435.1 699,435.1 700,436.0 701,439.6 702,441.0 703,441.2 704,441.1 705,441.1 706,440.3 707,438.5 708,439.6 709,440.1 710,440.2 711,438.8 712,435.0 713,433.7 714,433.5 715,433.4 716,432.9 717,433.0 718,433.7 719,434.3 720,434.5 721,435.0 722,435.3 723,435.1 724,435.0 725,435.0 726,436.0 727,436.3 728,436.1 729,436.1 730,436.0 731,437.0 732,440.4 733,441.9 734,441.4 735,441.1 736,441.4 737,441.8 738,441.7 739,441.7 740,441.8 741,441.0 742,439.5 743,439.0 744,438.8 745,439.0 746,437.8 747,435.0 748,434.3 749,433.2 750,433.0 751,433.0 752,432.3 753,432.4 754,432.3 755,432.7 756,433.0 757,433.4 758,433.8 759,434.2 760,434.4 761,434.5 762,434.8 763,436.6 764,439.8 765,440.1 766,440.1 767,439.7 768,439.6 769,439.6 770,439.3 771,439.4 772,437.7 773,434.5 774,434.3 775,436.6 776,435.3 777,434.3 778,434.0 779,433.8 780,434.4 781,434.7 782,433.5 783,433.0 784,433.0 785,432.9 786,432.7 787,433.3 788,437.0 789,438.5 790,438.6 791,439.1 792,439.3 793,439.5 794,439.8 795,440.2 796,440.1 797,439.6 798,439.7 799,440.4 800,440.2 801,440.4 802,441.0 803,440.9 804,440.9 805,440.0 806,436.6 807,435.5 808,435.8 809,436.0 810,435.7 811,436.0 812,436.3 813,436.5 814,436.9 815,437.0 816,437.3 817,437.0 818,436.6 819,436.8 820,436.6 821,436.8 822,437.1 823,436.2 824,435.8 825,436.7 826,439.6 827,440.0 828,439.6 829,440.0 830,440.9 831,441.0 832,440.8 833,440.9 834,440.7 835,440.4 836,440.3 837,440.1 838,439.8 839,439.9 840,440.2 841,439.7 842,439.0 843,438.9 844,438.0 845,434.9 846,433.8 847,433.6 848,432.7 849,432.6 850,433.4 851,433.5 852,433.3 853,433.0 854,432.2 855,430.4 856,432.3 857,433.1 858,433.4 859,434.8 860,435.8 861,434.4 862,433.1 863,433.3 864,434.4 865,435.0 866,438.2 867,439.5 868,439.4 869,439.0 870,438.3 871,439.0 872,438.4 873,434.9 874,433.6 875,433.0 876,433.4 877,433.1 878,432.3 879,430.7 880,432.3 881,433.5 882,434.0 883,434.5 884,434.3 885,433.8 886,433.7 887,433.9 888,434.3 889,434.8 890,435.7 891,438.2 892,439.6 893,439.8 894,440.2 895,440.0 896,440.0 897,439.6 898,439.5 899,439.9 900,440.3 901,439.8 902,438.8 903,435.5 904,434.4 905,434.5 906,434.4 907,434.2 908,434.5 909,434.6 910,434.4 911,434.6 912,433.9 913,432.7 914,433.5 915,434.2 916,434.8 917,434.9 918,435.6 919,438.9 920,440.1 921,439.4 922,439.9 923,440.2 924,439.6 925,439.9 926,440.1 927,439.0 928,435.0 929,433.3 930,433.5 931,433.7 932,435.2 933,438.2 934,438.9 935,440.0 936,440.2 937,440.3 938,439.4 939,436.0 940,435.0 941,435.3 942,435.2 943,435.9 944,435.7 945,435.2 946,435.0 947,435.2 948,434.8 949,434.8 950,434.6 951,434.3 952,434.4 953,435.2 954,435.8 955,436.2 956,436.1 957,435.7 958,435.2 959,435.9 960,439.5 961,440.4 962,440.0 963,440.2 964,440.3 965,440.0 966,440.5 967,440.4 968,439.6 969,439.1 970,439.3 971,439.2 972,438.7 973,438.1 974,438.3 975,439.1 976,439.2 977,439.1 978,439.4 979,438.0 980,434.8 981,433.9 982,434.6 983,436.3 984,436.0 985,435.9 986,436.6 987,436.8 988,436.2 989,437.2 990,440.1 991,441.0 992,441.8 993,441.8 994,442.5 995,442.6 996,442.7 997,444.0 998,445.2 999,443.4 1000,442.6 1001,441.2 1002,437.8 1003,436.6 1004,436.7 1005,437.4 1006,439.1 1007,437.0 1008,435.9 1009,435.6 1010,436.5 1011,439.7 1012,440.8 1013,440.4 1014,440.6 1015,441.0 1016,441.4 1017,441.5" fill="none" stroke="#f0f048" stroke-width="1.5" stroke-linejoin="round" shape-rendering="crispEdges"/><polyline points="20,577.5 21,579.5 22,579.4 23,578.6 24,579.4 25,580.1 26,578.6 27,578.4 28,577.8 29,579.2 30,580.0 31,579.7 32,580.6 33,580.5 34,581.0 35,582.6 36,582.2 37,582.9 38,582.3 39,583.3 40,583.1 41,584.5 42,584.3 43,583.6 44,582.7 45,583.0 46,582.5 47,583.2 48,583.9 49,584.9 50,584.5 51,583.9 52,581.3 53,577.2 54,570.8 55,571.4 56,571.2 57,572.7 58,573.1 59,571.8 60,573.1 61,572.6 62,573.8 63,572.8 64,572.6 65,574.9 66,573.5 67,573.1 68,575.0 69,573.5 70,571.2 71,571.1 72,570.9 73,571.4 74,572.0 75,574.8 76,575.8 77,574.8 78,575.1 79,575.7 80,575.5 81,576.3 82,582.3 83,580.9 84,579.7 85,576.8 86,576.6 87,575.4 88,577.1 89,575.6 90,575.3 91,577.1 92,575.7 93,575.4 94,576.1 95,576.8 96,577.2 97,577.0 98,580.0 99,581.6 100,582.3 101,580.3 102,581.4 103,580.9 104,581.1 105,582.2 106,582.4 107,581.9 108,579.4 109,580.3 110,578.9 111,580.9 112,581.3 113,580.6 114,581.0 115,585.0 116,581.3 117,583.3 118,580.4 119,581.5 120,578.7 121,580.3 122,582.8 123,582.8 124,583.1 125,581.5 126,581.4 127,581.6 128,581.0 129,581.3 130,582.3 131,581.2 132,587.2 133,582.1 134,580.5 135,579.7 136,580.2 137,579.3 138,579.0 139,579.0 140,578.5 141,578.5 142,578.1 143,578.2 144,578.7 145,579.1 146,579.5 147,581.1 148,578.3 149,576.8 150,577.4 151,579.3 152,579.3 153,581.8 154,578.8 155,579.5 156,579.2 157,579.4 158,578.3 159,581.8 160,581.2 161,582.8 162,581.6 163,580.5 164,579.8 165,581.1 166,581.1 167,581.2 168,582.9 169,580.4 170,583.3 171,581.9 172,583.2 173,586.0 174,584.2 175,584.1 176,581.6 177,582.2 178,581.8 179,582.7 180,586.0 181,579.8 182,579.1 183,580.8 184,582.4 185,581.3 186,580.5 187,580.4 188,579.9 189,579.6 190,580.6 191,580.0 192,579.6 193,579.9 194,580.9 195,581.8 196,582.7 197,582.6 198,578.5 199,578.6 200,577.0 201,576.3 202,577.9 203,578.6 204,579.6 205,579.4 206,580.9 207,580.3 208,580.7 209,579.5 210,580.6 211,578.8 212,576.2 213,579.1 214,579.5 215,581.4 216,579.7 217,578.9 218,580.6 219,579.8 220,580.1 221,582.0 222,580.5 223,578.1 224,577.6 225,573.5 226,574.7 227,575.6 228,575.8 229,576.7 230,576.9 231,575.7 232,578.2 233,576.2 234,577.7 235,577.6 236,579.7 237,577.4 238,579.4 239,577.6 240,577.7 241,578.9 242,576.8 243,576.5 244,575.3 245,578.2 246,577.1 247,578.1 248,579.6 249,579.5 250,578.9 251,580.4 252,580.1 253,580.9 254,579.3 255,579.5 256,579.9 257,583.4 258,582.1 259,582.8 260,584.3 261,583.2 262,581.3 263,582.6 264,581.9 265,580.1 266,578.6 267,578.2 268,577.7 269,578.0 270,578.8 271,578.8 272,578.5 273,576.9 274,576.3 275,576.4 276,576.2 277,575.4 278,574.5 279,577.9 280,578.7 281,577.9 282,577.4 283,579.3 284,576.8 285,575.5 286,575.9 287,575.2 288,577.0 289,576.9 290,576.7 291,579.5 292,580.1 293,578.3 294,578.9 295,574.8 296,580.0 297,579.9 298,581.0 299,580.0 300,579.2 301,577.2 302,575.9 303,572.1 304,574.8 305,575.7 306,576.5 307,575.2 308,574.9 309,574.6 310,574.8 311,574.7 312,573.4 313,574.1 314,575.4 315,576.6 316,578.2 317,580.8 318,580.2 319,584.3 320,584.6 321,587.8 322,588.5 323,588.4 324,587.6 325,587.4 326,585.5 327,586.9 328,588.4 329,587.8 330,587.5 331,587.8 332,585.8 333,586.4 334,585.8 335,585.1 336,584.0 337,586.0 338,585.4 339,587.9 340,587.9 341,587.4 342,588.1 343,585.7 344,583.4 345,585.0 346,585.0 347,583.4 348,585.2 349,586.0 350,586.3 351,585.3 352,584.9 353,584.1 354,586.2 355,583.2 356,584.1 357,584.5 358,582.7 359,582.6 360,583.4 361,584.7 362,584.4 363,585.0 364,586.5 365,585.4 366,587.6 367,587.4 368,586.4 369,586.1 370,588.1 371,587.6 372,588.8 373,590.0 374,590.1 375,588.8 376,590.9 377,590.3 378,590.8 379,588.9 380,591.4 381,591.5 382,590.4 383,589.9 384,589.2 385,588.4 386,591.7 387,588.4 388,587.3 389,589.6 390,588.2 391,588.5 392,587.3 393,587.0 394,591.2 395,592.0 396,589.3 397,588.6 398,587.2 399,589.3 400,589.7 401,587.9 402,589.5 403,587.9 404,587.8 405,586.7 406,587.2 407,586.0 408,586.3 409,582.1 410,584.3 411,584.8 412,585.4 413,587.1 414,586.4 415,586.6 416,586.0 417,587.5 418,587.6 419,589.0 420,586.9 421,589.1 422,587.4 423,586.8 424,586.9 425,585.9 426,587.2 427,586.1 428,587.8 429,588.5 430,587.4 431,584.9 432,586.5 433,585.5 434,586.2 435,586.9 436,587.8 437,587.5 438,587.6 439,587.8 440,589.8 441,590.3 442,591.0 443,590.7 444,589.8 445,590.2 446,589.1 447,587.4 448,589.3 449,590.1 450,592.1 451,590.6 452,590.1 453,589.6 454,589.0 455,589.3 456,587.1 457,587.2 458,585.0 459,586.3 460,592.9 461,587.3 462,588.9 463,588.7 464,588.7 465,589.1 466,587.6 467,588.0 468,588.4 469,588.7 470,586.4 471,587.1 472,588.5 473,588.4 474,588.0 475,587.5 476,588.7 477,587.6 478,590.3 479,589.7 480,589.9 481,586.5 482,589.7 483,587.4 484,587.9 485,587.9 486,587.1 487,586.6 488,586.3 489,585.3 490,586.5 491,584.2 492,585.6 493,585.1 494,586.1 495,587.5 496,586.4 497,587.9 498,589.2 499,588.3 500,586.6 501,587.1 502,584.8 503,587.0 504,588.5 505,586.5 506,586.1 507,587.8 508,587.6 509,588.5 510,590.1 511,588.5 512,588.8 513,587.2 514,587.4 515,588.7 516,587.9 517,592.1 518,591.2 519,588.8 520,590.5 521,590.8 522,591.1 523,591.3 524,592.4 525,594.0 526,591.3 527,590.3 528,586.0 529,588.6 530,591.0 531,590.9 532,590.0 533,588.5 534,589.5 535,587.2 536,587.3 537,587.8 538,590.6 539,591.1 540,590.2 541,591.2 542,591.3 543,589.1 544,590.6 545,590.4 546,591.4 547,590.7 548,591.0 549,591.5 550,590.9 551,591.0 552,592.5 553,590.7 554,590.9 555,592.6 556,594.0 557,593.4 558,591.4 559,589.9 560,588.8 561,589.0 562,589.8 563,589.2 564,590.1 565,588.5 566,587.4 567,588.6 568,587.3 569,587.4 570,588.2 571,587.9 572,588.1 573,587.3 574,587.5 575,589.3 576,588.6 577,586.4 578,585.5 579,586.9 580,586.3 581,588.2 582,587.9 583,586.6 584,586.4 585,586.6 586,584.7 587,587.8 588,584.5 589,586.6 590,587.4 591,587.1 592,587.6 593,586.5 594,587.4 595,585.9 596,586.3 597,588.1 598,587.6 599,586.5 600,586.2 601,586.3 602,584.3 603,586.0 604,585.5 605,586.1 606,590.2 607,594.3 608,590.0 609,587.6 610,587.7 611,588.4 612,587.7 613,585.5 614,588.0 615,589.5 616,589.1 617,588.0 618,586.5 619,586.0 620,585.6 621,588.8 622,587.8 623,590.3 624,588.8 625,587.9 626,588.1 627,585.9 628,586.9 629,585.4 630,584.2 631,584.8 632,583.4 633,588.7 634,585.8 635,586.5 636,588.8 637,590.2 638,589.1 639,588.1 640,587.4 641,587.0 642,587.6 643,590.4 644,590.4 645,591.0 646,588.9 647,588.6 648,587.0 649,587.8 650,589.3 651,586.5 652,586.6 653,589.6 654,589.3 655,587.4 656,590.9 657,589.1 658,589.4 659,587.1 660,588.0 661,586.5 662,587.6 663,584.6 664,588.3 665,586.0 666,584.4 667,585.3 668,586.4 669,586.1 670,585.3 671,587.6 672,587.4 673,587.0 674,588.6 675,588.4 676,587.8 677,587.1 678,587.3 679,585.2 680,583.7 681,585.3 682,584.8 683,586.1 684,585.8 685,584.9 686,584.9 687,585.4 688,585.2 689,584.4 690,586.6 691,586.4 692,587.6 693,586.2 694,586.8 695,587.1 696,586.2 697,585.8 698,585.3 699,584.7 700,584.2 701,585.6 702,584.4 703,584.8 704,584.3 705,580.4 706,582.3 707,583.3 708,583.5 709,583.9 710,583.1 711,578.9 712,580.5 713,581.6 714,582.1 715,584.6 716,583.6 717,581.5 718,583.9 719,585.1 720,584.6 721,582.1 722,581.2 723,582.4 724,583.9 725,581.9 726,582.8 727,584.5 728,585.1 729,584.8 730,585.1 731,586.1 732,587.0 733,586.8 734,587.4 735,586.1 736,587.8 737,583.9 738,584.0 739,584.0 740,584.8 741,584.9 742,585.0 743,583.0 744,584.5 745,583.6 746,583.0 747,585.7 748,584.7 749,585.9 750,584.3 751,586.5 752,587.0 753,585.4 754,587.6 755,586.8 756,585.6 757,585.9 758,587.7 759,588.3 760,586.2 761,585.8 762,587.8 763,587.1 764,587.6 765,587.3 766,587.7 767,589.3 768,587.1 769,587.2 770,585.4 771,585.4 772,585.8 773,587.8 774,587.7 775,589.1 776,588.2 777,588.2 778,588.3 779,588.3 780,589.3 781,587.9 782,587.2 783,585.3 784,586.9 785,585.8 786,587.5 787,586.2 788,586.0 789,586.5 790,583.3 791,585.4 792,583.8 793,584.3 794,584.0 795,583.1 796,582.8 797,584.9 798,587.0 799,586.3 800,586.5 801,588.9 802,589.7 803,590.9 804,588.4 805,588.0 806,588.7 807,589.2 808,589.9 809,590.0 810,587.9 811,586.7 812,583.5 813,583.7 814,585.4 815,583.6 816,585.1 817,586.9 818,587.1 819,589.2 820,586.4 821,586.3 822,590.9 823,588.2 824,587.7 825,587.2 826,588.4 827,587.8 828,588.1 829,589.5 830,587.2 831,590.3 832,590.8 833,590.8 834,590.1 835,589.4 836,589.5 837,588.0 838,586.7 839,587.0 840,585.7 841,586.1 842,586.5 843,584.4 844,587.3 845,587.5 846,588.4 847,587.4 848,589.0 849,589.7 850,587.2 851,585.9 852,585.9 853,587.2 854,586.9 855,590.6 856,590.3 857,588.8 858,590.1 859,590.5 860,588.3 861,589.9 862,588.6 863,588.1 864,587.3 865,586.2 866,583.6 867,584.9 868,583.8 869,584.2 870,585.5 871,586.9 872,587.8 873,588.2 874,586.6 875,586.9 876,585.9 877,585.6 878,586.2 879,587.0 880,588.0 881,587.9 882,588.5 883,585.8 884,587.3 885,584.9 886,584.8 887,584.0 888,583.1 889,586.2 890,585.7 891,585.7 892,586.4 893,588.3 894,587.8 895,584.5 896,585.4 897,586.2 898,584.6 899,584.6 900,585.5 901,584.9 902,587.3 903,587.2 904,586.7 905,587.5 906,588.2 907,588.7 908,588.0 909,586.4 910,584.6 911,584.1 912,583.3 913,586.0 914,583.8 915,584.4 916,586.4 917,584.2 918,584.7 919,584.8 920,584.2 921,583.0 922,584.9 923,584.7 924,585.4 925,584.5 926,584.3 927,585.8 928,587.3 929,588.3 930,587.8 931,587.0 932,587.7 933,588.4 934,586.3 935,586.4 936,585.7 937,585.7 938,584.5 939,584.7 940,586.9 941,588.0 942,587.7 943,587.6 944,586.5 945,587.3 946,586.1 947,586.2 948,587.0 949,586.1 950,585.3 951,583.2 952,582.0 953,581.7 954,582.6 955,583.9 956,584.3 957,583.4 958,582.5 959,583.2 960,584.9 961,584.7 962,584.2 963,585.1 964,586.1 965,585.2 966,585.0 967,586.0 968,585.2 969,583.2 970,583.2 971,583.8 972,585.4 973,585.8 974,586.3 975,587.9 976,590.5 977,589.5 978,588.6 979,588.9 980,587.6 981,585.8 982,584.8 983,582.9 984,582.3 985,582.9 986,583.6 987,583.4 988,584.1 989,583.3 990,587.7 991,587.7 992,586.2 993,587.0 994,585.7 995,583.9 996,583.7 997,584.2 998,585.7 999,583.7 1000,584.3 1001,583.0 1002,583.3 1003,582.3 1004,582.2 1005,581.7 1006,581.3 1007,582.1 1008,580.6 1009,582.0 1010,581.7 1011,580.7 1012,579.7 1013,580.0 1014,579.0 1015,578.8 1016,580.4 1017,580.6" fill="none" stroke="#68f068" stroke-width="1.5" stroke-linejoin="round" shape-rendering="crispEdges"/><path d="M19 20h998v1H19zM19 180h998v1H19zM19 340h998v1H19zM19 500h998v1H19zM19 20h1v600h-1z" fill="#b8b8b8"/><rect x="779" y="20" width="2" height="320" fill="#ffffff"/><path d="M314 350h2v7h-2zM314 360h2v7h-2zM314 370h2v7h-2zM314 380h2v7h-2zM314 390h2v7h-2zM314 400h2v7h-2zM314 410h2v7h-2zM314 420h2v7h-2zM314 430h2v7h-2zM314 440h2v7h-2zM314 450h2v7h-2zM314 460h2v7h-2zM314 470h2v7h-2zM314 480h2v7h-2zM314 490h2v7h-2zM314 500h2v7h-2zM314 510h2v7h-2zM314 520h2v7h-2zM314 530h2v7h-2zM314 540h2v7h-2zM314 550h2v7h-2zM314 560h2v7h-2zM314 570h2v7h-2zM314 580h2v7h-2zM314 590h2v7h-2zM314 600h2v7h-2zM314 610h2v7h-2zM314 341h2v6h-2z" fill="#7e7e7e"/><path d="M338 360h2v10h-2zM338 373h2v4h-2zM338 380h2v10h-2zM338 393h2v4h-2zM338 400h2v10h-2zM338 413h2v4h-2zM338 420h2v10h-2zM338 433h2v4h-2zM338 440h2v10h-2zM338 453h2v4h-2zM338 460h2v10h-2zM338 473h2v4h-2zM338 480h2v10h-2zM338 493h2v4h-2zM338 500h2v10h-2zM338 513h2v4h-2zM338 520h2v10h-2zM338 533h2v4h-2zM338 540h2v10h-2zM338 553h2v4h-2zM338 560h2v10h-2zM338 573h2v4h-2zM338 580h2v10h-2zM338 593h2v4h-2zM338 600h2v10h-2zM338 613h2v4h-2zM338 341h2v9h-2zM338 353h2v4h-2z" fill="#c8c8c8"/><path d="M4 100h15v1H4zM10 100h1v5h-1zM4 105h14v1H4zM6 108h10v1H6zM8 111h6v1H8z" fill="#ffff00"/><path d="M4 260h15v1H4zM10 260h1v5h-1zM4 265h14v1H4zM6 268h10v1H6zM8 271h6v1H8z" fill="#00ff00"/><path d="M4 208h8v1H4zM7 208h2v13H7zM4 222h15v1H4z" fill="#00ff00"/><polygon points="12,216.5 12,222.5 18.5,222.5" fill="#00ff00"/><path d="M4 420h15v1H4zM10 420h1v5h-1zM4 425h14v1H4zM6 428h10v1H6zM8 431h6v1H8z" fill="#ffff00"/><path d="M4 580h15v1H4zM10 580h1v5h-1zM4 585h14v1H4zM6 588h10v1H6zM8 591h6v1H8z" fill="#00ff00"/><path d="M4 528h8v1H4zM7 528h2v13H7zM4 542h15v1H4z" fill="#00ff00"/><polygon points="12,536.5 12,542.5 18.5,542.5" fill="#00ff00"/><rect x="19" y="1" width="165" height="18" fill="#ffff00"/><rect x="184.5" y="1.5" width="164" height="17" fill="#000" stroke="#00ff00" stroke-width="1"/><ellipse cx="30.5" cy="10.5" rx="10" ry="6" fill="none" stroke="#1a3890" stroke-width="1"/><ellipse cx="196" cy="10.5" rx="10" ry="6" fill="none" stroke="#00ff00" stroke-width="1"/><path d="M30 6h1.6v8.5h-1.6zM28 8.2l2-2.2v1.6l-1.2 1.3z" fill="#1a3890"/><text x="192.8" y="14.6" font-size="11.5" textLength="5.6" lengthAdjust="spacingAndGlyphs" fill="#00ff00" font-weight="normal" filter="url(#nf)" stroke="#00ff00" stroke-width="0.4">2</text><path d="M104 15.5L112 8" stroke="#1a3890" stroke-width="1.5"/><path d="M129 3h12v1h-12z" fill="#1a3890"/><text x="133" y="11.6" font-size="9.2" textLength="11.5" lengthAdjust="spacingAndGlyphs" fill="#1a3890" font-weight="bold" filter="url(#nf)">1M</text><path d="M129 13h12v1h-12zM130 14h1v1h-1zM132 14h1v1h-1zM134 14h1v1h-1zM136 14h1v1h-1zM138 14h1v1h-1zM140 14h1v1h-1zM129 15h1v1h-1zM131 15h1v1h-1zM133 15h1v1h-1zM135 15h1v1h-1zM137 15h1v1h-1zM139 15h1v1h-1zM130 16h1v1h-1zM132 16h1v1h-1zM134 16h1v1h-1zM136 16h1v1h-1zM138 16h1v1h-1zM140 16h1v1h-1z" fill="#1a3890"/><path d="M269 15.5L277 8" stroke="#00ff00" stroke-width="1.5"/><path d="M294.5 8.5C295.5 4 296.5 3 298 3.5C299.5 4 300.5 9.5 302.5 9.5C304 9.5 305 6 305.5 4.5" fill="none" stroke="#00ff00" stroke-width="1"/><path d="M294 13h12v1h-12zM294 14h1v1h-1zM296 14h1v1h-1zM298 14h1v1h-1zM300 14h1v1h-1zM302 14h1v1h-1zM304 14h1v1h-1zM295 15h1v1h-1zM297 15h1v1h-1zM299 15h1v1h-1zM301 15h1v1h-1zM303 15h1v1h-1zM305 15h1v1h-1zM294 16h1v1h-1zM296 16h1v1h-1zM298 16h1v1h-1zM300 16h1v1h-1zM302 16h1v1h-1zM304 16h1v1h-1z" fill="#00ff00"/><path d="M312 3h1v12h-1zM312 5h13v1h-13zM324 5h1v11h-1zM312 15h13v1h-13z" fill="#00ff00"/><path d="M318 6h1v1h-1zM320 6h1v1h-1zM322 6h1v1h-1zM317 7h1v1h-1zM319 7h1v1h-1zM321 7h1v1h-1zM323 7h1v1h-1zM318 8h1v1h-1zM320 8h1v1h-1zM322 8h1v1h-1zM317 9h1v1h-1zM319 9h1v1h-1zM321 9h1v1h-1zM323 9h1v1h-1zM318 10h1v1h-1zM320 10h1v1h-1zM322 10h1v1h-1zM317 11h1v1h-1zM319 11h1v1h-1zM321 11h1v1h-1zM323 11h1v1h-1zM318 12h1v1h-1zM320 12h1v1h-1zM322 12h1v1h-1zM317 13h1v1h-1zM319 13h1v1h-1zM321 13h1v1h-1zM323 13h1v1h-1zM318 14h1v1h-1zM320 14h1v1h-1zM322 14h1v1h-1z" fill="#00ff00"/><defs><filter id="nf" x="0" y="0" width="1" height="1"><feOffset dx="0" dy="0"/></filter></defs><g filter="url(#nf)"><text x="50.99" y="16" font-size="19.55" textLength="52.17" lengthAdjust="spacingAndGlyphs" font-family="Liberation Mono" font-weight="normal" fill="#1a3890" stroke="#1a3890" stroke-width="0.55">20.0mV</text><text x="110.86" y="17" font-size="13.70" textLength="16.41" lengthAdjust="spacingAndGlyphs" font-family="Liberation Mono" font-weight="normal" fill="#1a3890" stroke="#1a3890" stroke-width="0.55">div</text><text x="215.97" y="16" font-size="19.55" textLength="52.78" lengthAdjust="spacingAndGlyphs" font-family="Liberation Mono" font-weight="normal" fill="#00ff00" stroke="#00ff00" stroke-width="0.55">2.00mV</text><text x="276.38" y="17" font-size="13.70" textLength="15.89" lengthAdjust="spacingAndGlyphs" font-family="Liberation Mono" font-weight="normal" fill="#00ff00" stroke="#00ff00" stroke-width="0.55">div</text><text x="477.12" y="35" font-size="15.04" textLength="88.88" lengthAdjust="spacingAndGlyphs" font-family="Liberation Mono" font-weight="normal" fill="#c4c4c4" stroke="#c4c4c4" stroke-width="0.8">Main : 1.25 M</text><text x="492.65" y="355" font-size="15.04" textLength="105.07" lengthAdjust="spacingAndGlyphs" font-family="Liberation Mono" font-weight="normal" fill="#c4c4c4" stroke="#c4c4c4" stroke-width="0.8">Zoom1 : 625.000</text><text x="928.12" y="40" font-size="21.74" textLength="80.01" lengthAdjust="spacingAndGlyphs" font-family="Liberation Sans" font-weight="normal" fill="#ffffff" stroke="#ffffff" stroke-width="0.35">200ms/div</text><text x="921.31" y="360" font-size="21.74" textLength="78.70" lengthAdjust="spacingAndGlyphs" font-family="Liberation Sans" font-weight="normal" fill="#ffffff" stroke="#ffffff" stroke-width="0.35">100us/div</text><text x="118.46" y="242" font-size="19.55" textLength="16.22" lengthAdjust="spacingAndGlyphs" font-family="Liberation Mono" font-weight="normal" fill="#000" stroke="#000" stroke-width="2.6" stroke-linejoin="round">T1</text><text x="118.46" y="242" font-size="19.55" textLength="16.22" lengthAdjust="spacingAndGlyphs" font-family="Liberation Mono" font-weight="normal" fill="#ffffff" stroke="#ffffff" stroke-width="0.55">T1</text><text x="186.73" y="242" font-size="19.55" textLength="91.60" lengthAdjust="spacingAndGlyphs" font-family="Liberation Mono" font-weight="normal" fill="#000" stroke="#000" stroke-width="2.6" stroke-linejoin="round">1349.5950ms</text><text x="186.73" y="242" font-size="19.55" textLength="91.60" lengthAdjust="spacingAndGlyphs" font-family="Liberation Mono" font-weight="normal" fill="#ffffff" stroke="#ffffff" stroke-width="0.55">1349.5950ms</text><text x="118.41" y="258" font-size="19.55" textLength="17.84" lengthAdjust="spacingAndGlyphs" font-family="Liberation Mono" font-weight="normal" fill="#000" stroke="#000" stroke-width="2.6" stroke-linejoin="round">T2</text><text x="118.41" y="258" font-size="19.55" textLength="17.84" lengthAdjust="spacingAndGlyphs" font-family="Liberation Mono" font-weight="normal" fill="#ffffff" stroke="#ffffff" stroke-width="0.55">T2</text><text x="186.73" y="258" font-size="19.55" textLength="91.60" lengthAdjust="spacingAndGlyphs" font-family="Liberation Mono" font-weight="normal" fill="#000" stroke="#000" stroke-width="2.6" stroke-linejoin="round">1349.6190ms</text><text x="186.73" y="258" font-size="19.55" textLength="91.60" lengthAdjust="spacingAndGlyphs" font-family="Liberation Mono" font-weight="normal" fill="#ffffff" stroke="#ffffff" stroke-width="0.55">1349.6190ms</text><text x="118.87" y="274" font-size="19.55" textLength="15.79" lengthAdjust="spacingAndGlyphs" font-family="Liberation Mono" font-weight="normal" fill="#000" stroke="#000" stroke-width="2.6" stroke-linejoin="round">V1</text><text x="118.87" y="274" font-size="19.55" textLength="15.79" lengthAdjust="spacingAndGlyphs" font-family="Liberation Mono" font-weight="normal" fill="#ffffff" stroke="#ffffff" stroke-width="0.55">V1</text><text x="186.13" y="274" font-size="19.55" textLength="52.33" lengthAdjust="spacingAndGlyphs" font-family="Liberation Mono" font-weight="normal" fill="#000" stroke="#000" stroke-width="2.6" stroke-linejoin="round">0.46mV</text><text x="186.13" y="274" font-size="19.55" textLength="52.33" lengthAdjust="spacingAndGlyphs" font-family="Liberation Mono" font-weight="normal" fill="#ffffff" stroke="#ffffff" stroke-width="0.55">0.46mV</text><text x="118.86" y="290" font-size="19.55" textLength="17.15" lengthAdjust="spacingAndGlyphs" font-family="Liberation Mono" font-weight="normal" fill="#000" stroke="#000" stroke-width="2.6" stroke-linejoin="round">V2</text><text x="118.86" y="290" font-size="19.55" textLength="17.15" lengthAdjust="spacingAndGlyphs" font-family="Liberation Mono" font-weight="normal" fill="#ffffff" stroke="#ffffff" stroke-width="0.55">V2</text><text x="176.54" y="290" font-size="19.55" textLength="61.92" lengthAdjust="spacingAndGlyphs" font-family="Liberation Mono" font-weight="normal" fill="#000" stroke="#000" stroke-width="2.6" stroke-linejoin="round">-0.88mV</text><text x="176.54" y="290" font-size="19.55" textLength="61.92" lengthAdjust="spacingAndGlyphs" font-family="Liberation Mono" font-weight="normal" fill="#ffffff" stroke="#ffffff" stroke-width="0.55">-0.88mV</text><text x="119.00" y="306" font-size="19.55" textLength="14.49" lengthAdjust="spacingAndGlyphs" font-family="Liberation Mono" font-weight="normal" fill="#000" stroke="#000" stroke-width="2.6" stroke-linejoin="round">ΔT</text><text x="119.00" y="306" font-size="19.55" textLength="14.49" lengthAdjust="spacingAndGlyphs" font-family="Liberation Mono" font-weight="normal" fill="#ffffff" stroke="#ffffff" stroke-width="0.55">ΔT</text><text x="186.15" y="306" font-size="19.55" textLength="67.99" lengthAdjust="spacingAndGlyphs" font-family="Liberation Mono" font-weight="normal" fill="#000" stroke="#000" stroke-width="2.6" stroke-linejoin="round">0.0240ms</text><text x="186.15" y="306" font-size="19.55" textLength="67.99" lengthAdjust="spacingAndGlyphs" font-family="Liberation Mono" font-weight="normal" fill="#ffffff" stroke="#ffffff" stroke-width="0.55">0.0240ms</text><text x="118.05" y="322" font-size="19.55" textLength="32.50" lengthAdjust="spacingAndGlyphs" font-family="Liberation Mono" font-weight="normal" fill="#000" stroke="#000" stroke-width="2.6" stroke-linejoin="round">1/ΔT</text><text x="118.05" y="322" font-size="19.55" textLength="32.50" lengthAdjust="spacingAndGlyphs" font-family="Liberation Mono" font-weight="normal" fill="#ffffff" stroke="#ffffff" stroke-width="0.55">1/ΔT</text><text x="186.33" y="322" font-size="19.55" textLength="80.76" lengthAdjust="spacingAndGlyphs" font-family="Liberation Mono" font-weight="normal" fill="#000" stroke="#000" stroke-width="2.6" stroke-linejoin="round">41.6667kHz</text><text x="186.33" y="322" font-size="19.55" textLength="80.76" lengthAdjust="spacingAndGlyphs" font-family="Liberation Mono" font-weight="normal" fill="#ffffff" stroke="#ffffff" stroke-width="0.55">41.6667kHz</text><text x="119.00" y="338" font-size="19.55" textLength="16.04" lengthAdjust="spacingAndGlyphs" font-family="Liberation Mono" font-weight="normal" fill="#000" stroke="#000" stroke-width="2.6" stroke-linejoin="round">ΔV</text><text x="119.00" y="338" font-size="19.55" textLength="16.04" lengthAdjust="spacingAndGlyphs" font-family="Liberation Mono" font-weight="normal" fill="#ffffff" stroke="#ffffff" stroke-width="0.55">ΔV</text><text x="185.99" y="338" font-size="19.55" textLength="52.17" lengthAdjust="spacingAndGlyphs" font-family="Liberation Mono" font-weight="normal" fill="#000" stroke="#000" stroke-width="2.6" stroke-linejoin="round">1.34mV</text><text x="185.99" y="338" font-size="19.55" textLength="52.17" lengthAdjust="spacingAndGlyphs" font-family="Liberation Mono" font-weight="normal" fill="#ffffff" stroke="#ffffff" stroke-width="0.55">1.34mV</text><text x="437.60" y="338" font-size="18.84" textLength="66.59" lengthAdjust="spacingAndGlyphs" font-family="Liberation Sans" font-weight="normal" fill="#000" stroke="#000" stroke-width="2.6" stroke-linejoin="round">Mean(C1)</text><text x="437.60" y="338" font-size="18.84" textLength="66.59" lengthAdjust="spacingAndGlyphs" font-family="Liberation Sans" font-weight="normal" fill="#ffffff" stroke="#ffffff" stroke-width="0.55">Mean(C1)</text><text x="556.42" y="338" font-size="19.55" textLength="85.64" lengthAdjust="spacingAndGlyphs" font-family="Liberation Mono" font-weight="normal" fill="#000" stroke="#000" stroke-width="2.6" stroke-linejoin="round">-7.28592mV</text><text x="556.42" y="338" font-size="19.55" textLength="85.64" lengthAdjust="spacingAndGlyphs" font-family="Liberation Mono" font-weight="normal" fill="#ffffff" stroke="#ffffff" stroke-width="0.55">-7.28592mV</text><text x="692.59" y="338" font-size="18.84" textLength="67.10" lengthAdjust="spacingAndGlyphs" font-family="Liberation Sans" font-weight="normal" fill="#000" stroke="#000" stroke-width="2.6" stroke-linejoin="round">Mean(C2)</text><text x="692.59" y="338" font-size="18.84" textLength="67.10" lengthAdjust="spacingAndGlyphs" font-family="Liberation Sans" font-weight="normal" fill="#ffffff" stroke="#ffffff" stroke-width="0.55">Mean(C2)</text><text x="822.06" y="338" font-size="19.55" textLength="72.49" lengthAdjust="spacingAndGlyphs" font-family="Liberation Mono" font-weight="normal" fill="#000" stroke="#000" stroke-width="2.6" stroke-linejoin="round">144.855uV</text><text x="822.06" y="338" font-size="19.55" textLength="72.49" lengthAdjust="spacingAndGlyphs" font-family="Liberation Mono" font-weight="normal" fill="#ffffff" stroke="#ffffff" stroke-width="0.55">144.855uV</text></g></svg></body></html>
